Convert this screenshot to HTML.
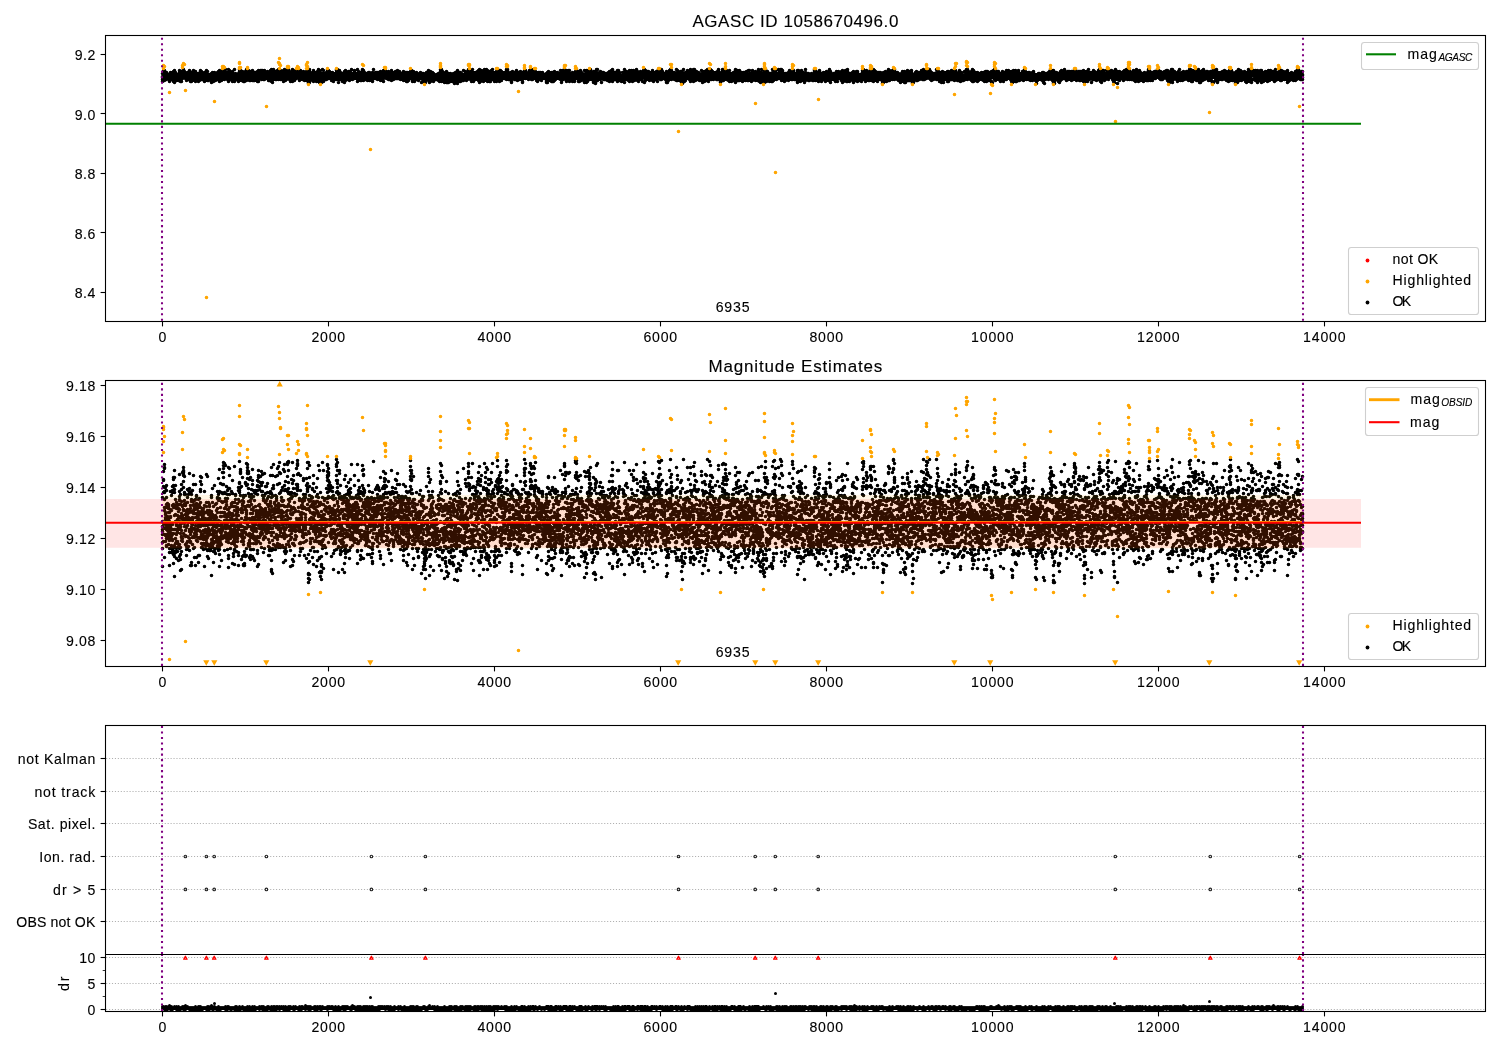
<!DOCTYPE html><html><head><meta charset="utf-8"><style>html,body{margin:0;padding:0;background:#fff;}svg{display:block;will-change:transform}text{font-family:"Liberation Sans",sans-serif;fill:#000;stroke:#000;stroke-width:.12px}</style></head><body><svg width="1500" height="1050" viewBox="0 0 1500 1050"><rect width="1500" height="1050" fill="#fff"/><defs><clipPath id="c1"><rect x="105.5" y="35.5" width="1380.0" height="286.0"/></clipPath><clipPath id="c2"><rect x="105.5" y="380.5" width="1380.0" height="286.0"/></clipPath><clipPath id="c4"><rect x="105.5" y="954.5" width="1380.0" height="57.0"/></clipPath></defs><text x="795.4" y="27.2" font-size="17.0" text-anchor="middle" textLength="205.95" lengthAdjust="spacing" >AGASC ID 1058670496.0</text><g clip-path="url(#c1)"><path transform="scale(.1)" fill="none" stroke="#000" stroke-width="36" stroke-linecap="round"  d="M1625 775h0m0-40h0m0 30h0m0 30h0m0-20h0m0 40h0m10-30h0m0-70h0m0 50h0m0-40h0m0-20h0m0 20h0m10 0h0m0 0h0m0-20h0m0 40h0m0 60h0m0-30h0m0-40h0m10 10h0m0 20h0m0-10h0m0 30h0m0-60h0m0 50h0m10-10h0m0-20h0m0 50h0m0-30h0m0 10h0m0-50h0m0 10h0m0 60h0m10-10h0m0-20h0m0-20h0m0 10h0m0 30h0m0-10h0m10-10h0m0-20h0m0 10h0m0 30h0m0 0h0m0-10h0m0-30h0m10 30h0m0-20h0m0 10h0m0 50h0m0-20h0m0-30h0m0 20h0m10-10h0m0-50h0m0 20h0m0 10h0m0 20h0m0-20h0m0 20h0m10-40h0m0 10h0m0 30h0m0 20h0m0-10h0m0-20h0m0 30h0m10 0h0m0-30h0m0 20h0m0-10h0m0-50h0m0 50h0m0 20h0m10-50h0m0-30h0m0 30h0m0 70h0m0-40h0m0 20h0m0 10h0m0-60h0m0-20h0m0-10h0m10 60h0m0 50h0m0-20h0m0-100h0m0 20h0m0 80h0m0-10h0m0-70h0m0 20h0m0 50h0m0-40h0m10 20h0m0 20h0m0-50h0m0 40h0m0-40h0m0-20h0m0 40h0m0 20h0m10 20h0m0-60h0m0 50h0m0-10h0m0-10h0m0-10h0m0-20h0m10 30h0m0 10h0m0-30h0m0-10h0m0 30h0m0 20h0m0-30h0m0 30h0m0-10h0m10-20h0m0-20h0m0 30h0m0-30h0m0 40h0m0-20h0m0 40h0m10-60h0m0 50h0m0-30h0m0-30h0m0 50h0m0-80h0m0 20h0m0 20h0m10 60h0m0-30h0m0-10h0m0-30h0m0 60h0m0 20h0m0-10h0m0-60h0m0 10h0m0 10h0m10 10h0m0-10h0m0-30h0m0-20h0m0 80h0m0-40h0m0 60h0m0-30h0m0-60h0m0 60h0m10-40h0m0 10h0m0-10h0m0 40h0m0-30h0m10-50h0m0 20h0m0 50h0m0-30h0m0-40h0m0-10h0m10 20h0m0 50h0m0-30h0m0 10h0m0 30h0m0-10h0m0-40h0m0 20h0m10 40h0m0-30h0m0 20h0m0-40h0m0 30h0m0-20h0m0 40h0m10-30h0m0 40h0m0 10h0m0-50h0m0 10h0m10-20h0m0 40h0m0-50h0m0-10h0m0 70h0m0-40h0m0 30h0m10-40h0m0 50h0m0-40h0m0 0h0m0 30h0m0-30h0m10-30h0m0 50h0m0-20h0m0 40h0m0-20h0m0-50h0m0 60h0m0-80h0m0 50h0m10 10h0m0 10h0m0 10h0m0 30h0m0-40h0m0-20h0m0-10h0m0 40h0m0-10h0m10 40h0m0-40h0m0-10h0m0-30h0m0 80h0m0-50h0m0-40h0m0 30h0m10 10h0m0 20h0m0-30h0m0-30h0m0 30h0m0 30h0m0-20h0m10-30h0m0 60h0m0-40h0m0-10h0m0 30h0m0-60h0m0 60h0m0-70h0m0 50h0m10-20h0m0 60h0m0-20h0m0-30h0m0 40h0m0 20h0m0-50h0m10 0h0m0-20h0m0 40h0m0 0h0m0-40h0m0 30h0m0-50h0m0 100h0m10-80h0m0 30h0m0 10h0m0-40h0m0 70h0m0-60h0m0 30h0m0 10h0m0-30h0m10 30h0m0-30h0m0 20h0m0-20h0m0 30h0m10-50h0m0 20h0m0 20h0m0 40h0m0-60h0m0 50h0m0-30h0m0-10h0m10-10h0m0-10h0m0 60h0m0-40h0m0 10h0m0 10h0m0-50h0m0 10h0m10 40h0m0-10h0m0-10h0m0-10h0m0-50h0m0 40h0m0-30h0m0 50h0m0-40h0m10 30h0m0 40h0m0-20h0m0 10h0m0-20h0m0 0h0m0 20h0m0-70h0m0 0h0m10 50h0m0 30h0m0-30h0m0-20h0m0 10h0m10 10h0m0 20h0m0-30h0m0 40h0m0-20h0m0-30h0m0 20h0m10 50h0m0-30h0m0-20h0m0-20h0m0 20h0m0-40h0m10 50h0m0 10h0m0 10h0m0-40h0m0 40h0m0-30h0m0 20h0m10 0h0m0-30h0m0-50h0m0 60h0m0 20h0m0-10h0m0-30h0m0 0h0m10 20h0m0 10h0m0 20h0m0-80h0m0 60h0m0-20h0m0 50h0m10-20h0m0-30h0m0 20h0m0 30h0m0-50h0m0-10h0m0 30h0m10-20h0m0 10h0m0-20h0m0 10h0m0 40h0m0-20h0m10-20h0m0 40h0m0-30h0m0 10h0m0 20h0m0-40h0m0 20h0m10-20h0m0 30h0m0-50h0m0 90h0m0-70h0m0 30h0m0-50h0m0 20h0m10 40h0m0-40h0m0-30h0m0 50h0m0-30h0m0 50h0m0-30h0m10 50h0m0-50h0m0 10h0m0 20h0m0-30h0m0-20h0m10-20h0m0 30h0m0 30h0m0 10h0m0-10h0m0-20h0m10-20h0m0 40h0m0-30h0m0 20h0m0-10h0m0 40h0m0-20h0m10-20h0m0 20h0m0-10h0m0 0h0m0-30h0m0 0h0m0 30h0m10-40h0m0 50h0m0 10h0m0-30h0m0-40h0m0 30h0m0 30h0m0-50h0m10 60h0m0-30h0m0-50h0m0 80h0m0-20h0m0-50h0m0 60h0m0-50h0m0 30h0m10-40h0m0 70h0m0-20h0m0 10h0m0 30h0m0-40h0m0-40h0m0-30h0m10 80h0m0 0h0m0-10h0m0-30h0m0 10h0m0 0h0m0 10h0m0-50h0m0 70h0m0-20h0m10 10h0m0 10h0m0-10h0m0 0h0m0 30h0m0-70h0m0 20h0m0-30h0m0 50h0m10-10h0m0-50h0m0 60h0m0 10h0m0-30h0m0-50h0m0 40h0m0-10h0m10-30h0m0 30h0m0-20h0m0 0h0m0-10h0m0-10h0m10 30h0m0 10h0m0-40h0m0 60h0m0 20h0m0-30h0m0 50h0m0-40h0m0 30h0m10-20h0m0 10h0m0-50h0m0-30h0m0 40h0m0 30h0m0 0h0m0-30h0m10 30h0m0-20h0m0 20h0m0 20h0m0-60h0m0 10h0m0 20h0m0 20h0m10-50h0m0 30h0m0-20h0m0 40h0m0-40h0m0 60h0m0-50h0m10 20h0m0-10h0m0 30h0m0 20h0m0-80h0m0 80h0m0-30h0m0 40h0m0-120h0m0 50h0m10-10h0m0 40h0m0-70h0m0 70h0m0-50h0m0 20h0m0 20h0m0-60h0m10 60h0m0 20h0m0-30h0m0 10h0m0 10h0m0 20h0m10-30h0m0-40h0m0 20h0m0 30h0m0-20h0m0 30h0m0-30h0m10-30h0m0 50h0m0-20h0m0 60h0m0-30h0m0-40h0m0-30h0m0 40h0m10 30h0m0-20h0m0 10h0m0-30h0m0 20h0m0 10h0m0 30h0m10-60h0m0-50h0m0 90h0m0-10h0m0-30h0m0 70h0m0-30h0m10-10h0m0-10h0m0-30h0m0 60h0m0-60h0m0 40h0m0-40h0m0 30h0m10 30h0m0-20h0m0 20h0m0-50h0m0 20h0m0 10h0m10-20h0m0 10h0m0 20h0m0-40h0m0 20h0m0 20h0m0-40h0m10 30h0m0 0h0m0-40h0m0 70h0m0-50h0m0 10h0m0 50h0m0-40h0m0 20h0m0 20h0m10-100h0m0 10h0m0 10h0m0-10h0m0-30h0m10 30h0m0-20h0m0 30h0m0-30h0m0 70h0m0-10h0m0-20h0m10 10h0m0 20h0m0-20h0m0 50h0m0-20h0m0-40h0m0-20h0m10 50h0m0-20h0m0-20h0m0-20h0m0 50h0m0 10h0m0 30h0m0-20h0m10-50h0m0 10h0m0 30h0m0 30h0m0-20h0m0 30h0m0-80h0m0 50h0m0-50h0m10 80h0m0-70h0m0 20h0m0 30h0m0-50h0m0 70h0m0-30h0m10-10h0m0-40h0m0 20h0m0-40h0m0 90h0m0-40h0m10 10h0m0-30h0m0 30h0m0 20h0m0-40h0m0-10h0m0-50h0m0 60h0m0-30h0m0 80h0m10-100h0m0 60h0m0-60h0m0 10h0m0 30h0m10 50h0m0-10h0m0-20h0m0-60h0m0 40h0m0-20h0m0 50h0m0-50h0m10 20h0m0 10h0m0 20h0m0-40h0m0-20h0m0 60h0m0 30h0m0-20h0m10-30h0m0 30h0m0-20h0m0 40h0m0-70h0m0 30h0m0 20h0m0 20h0m0-10h0m0-80h0m10 60h0m0-50h0m0 70h0m0-50h0m0-10h0m0 40h0m0 10h0m0-40h0m10 10h0m0-40h0m0 50h0m0 20h0m0-10h0m0-70h0m0 50h0m0 50h0m0-90h0m10 10h0m0 20h0m0 40h0m0-10h0m0 10h0m0-40h0m0 60h0m0-20h0m10-50h0m0 70h0m0-50h0m0-30h0m0 60h0m0-20h0m0 0h0m10-20h0m0 40h0m0-20h0m0-30h0m0-10h0m0 60h0m10-30h0m0 20h0m0 10h0m0-10h0m0-20h0m0 30h0m10-60h0m0-10h0m0 40h0m0-10h0m0 40h0m0 10h0m0 20h0m0-90h0m0 10h0m0 60h0m10-30h0m0-60h0m0 50h0m0 10h0m0-60h0m0 80h0m0-70h0m0 30h0m0 70h0m10-70h0m0-20h0m0 60h0m0-20h0m0-20h0m0-20h0m0 40h0m10 20h0m0-40h0m0 20h0m0-60h0m0 70h0m0-20h0m0 0h0m0 10h0m0-50h0m10 80h0m0-70h0m0 50h0m0 0h0m0-50h0m0-20h0m0 40h0m0 30h0m0-10h0m10-30h0m0 20h0m0-40h0m0 50h0m0-10h0m0-50h0m10 80h0m0-10h0m0-40h0m0 10h0m0 30h0m0 20h0m0-40h0m0-20h0m10 50h0m0-20h0m0-10h0m0 40h0m0-20h0m0-70h0m0 30h0m0 30h0m10-40h0m0 0h0m0 40h0m0-20h0m0 40h0m0-20h0m10-10h0m0-30h0m0 50h0m0 0h0m0-20h0m0-20h0m0 40h0m10 0h0m0-20h0m0 10h0m0-30h0m0 40h0m0-60h0m0 10h0m10 40h0m0-10h0m0-20h0m0 60h0m0-50h0m0 60h0m0-40h0m0 20h0m10-40h0m0 40h0m0-20h0m0 40h0m0-40h0m0 30h0m0-50h0m0 30h0m10-30h0m0-20h0m0 40h0m0-10h0m0-30h0m0-20h0m10 50h0m0-10h0m0 30h0m0-40h0m0-40h0m0 100h0m0-60h0m0 80h0m0-40h0m10 50h0m0-30h0m0-60h0m0 40h0m0 10h0m0-80h0m0 40h0m0-20h0m0 40h0m10 30h0m0-10h0m0-20h0m0-70h0m0 60h0m0-30h0m10 60h0m0-40h0m0 20h0m0-20h0m0 20h0m0 20h0m0-30h0m10-20h0m0 60h0m0-80h0m0 50h0m0 20h0m0 10h0m0-50h0m0 0h0m0 20h0m10-20h0m0 20h0m0 30h0m0-60h0m0 40h0m0-40h0m0 20h0m0 40h0m10-30h0m0 20h0m0-80h0m0 60h0m0-20h0m0-30h0m0 40h0m0 10h0m10 30h0m0-40h0m0 30h0m0-30h0m0 20h0m0-30h0m0-50h0m10 40h0m0 10h0m0-40h0m0 60h0m0-50h0m0-20h0m0 90h0m10-60h0m0 50h0m0-10h0m0-60h0m0 70h0m0 20h0m0-40h0m10 0h0m0-20h0m0 50h0m0-30h0m0-30h0m0 30h0m0 10h0m10-40h0m0 10h0m0 50h0m0-20h0m0-10h0m0 10h0m0 30h0m10-20h0m0-10h0m0-10h0m0 40h0m0-30h0m0-60h0m0 30h0m0 20h0m0 60h0m10-70h0m0 50h0m0-100h0m0 70h0m0-60h0m0 20h0m0 70h0m0-10h0m10-30h0m0 40h0m0-20h0m0-30h0m0 50h0m0-70h0m0-10h0m0 90h0m0-60h0m10 30h0m0 20h0m0-30h0m0-10h0m0 30h0m0-10h0m10-10h0m0-20h0m0-50h0m0 50h0m0-20h0m0-20h0m0 50h0m0 10h0m10-50h0m0 10h0m0-30h0m0 10h0m0 20h0m0 60h0m10-50h0m0 20h0m0-30h0m0 70h0m0-30h0m0-20h0m0 30h0m10-10h0m0-20h0m0-10h0m0 80h0m0-50h0m0-20h0m0 40h0m0-50h0m0 60h0m10-50h0m0 40h0m0-60h0m0 50h0m0-40h0m0 20h0m0-40h0m0 60h0m10-10h0m0 50h0m0-60h0m0-40h0m0 20h0m0 10h0m0 60h0m0-20h0m0-90h0m10 70h0m0 40h0m0-20h0m0-30h0m0-30h0m0 60h0m0-40h0m0 30h0m0-70h0m10 100h0m0-40h0m0 30h0m0-60h0m0 30h0m0-20h0m0-10h0m10 40h0m0-30h0m0 30h0m0-40h0m0 50h0m0-30h0m0 10h0m10-50h0m0 70h0m0-30h0m0 20h0m0-10h0m0-30h0m0-30h0m0 20h0m0 40h0m10-70h0m0 30h0m0-20h0m0 20h0m0 0h0m0-30h0m10 50h0m0 10h0m0 10h0m0-60h0m10 70h0m0-10h0m0 20h0m0-50h0m0 30h0m0 40h0m0-30h0m0-40h0m10 20h0m0 10h0m0-40h0m0 70h0m0-60h0m0 40h0m0 10h0m0-80h0m10 70h0m0-40h0m0 20h0m0 20h0m0-30h0m10 20h0m0 10h0m0-30h0m0-10h0m0 60h0m0-50h0m0 30h0m10-60h0m0 30h0m0-10h0m0 50h0m0-20h0m0-50h0m10 60h0m0-40h0m0 30h0m0-30h0m0 70h0m0-70h0m0 40h0m0-40h0m0 10h0m10 20h0m0-30h0m0 40h0m0-20h0m0 30h0m0-40h0m0-10h0m10 30h0m0 20h0m0-40h0m0 30h0m0-50h0m0 80h0m0-90h0m10 10h0m0-10h0m0-10h0m0 20h0m10 20h0m0 70h0m0-80h0m0 70h0m0-30h0m0 60h0m0-10h0m10-80h0m0-50h0m0 110h0m0-80h0m0-10h0m0 110h0m0-50h0m0-40h0m0 0h0m10 20h0m0 20h0m0 0h0m0 20h0m0-40h0m0 30h0m0 0h0m10-40h0m0 20h0m0 0h0m0-30h0m0 30h0m0-20h0m0 20h0m10-20h0m0 50h0m0-70h0m0 40h0m0 40h0m0-20h0m0-50h0m0 20h0m10 40h0m0-60h0m0-30h0m0 50h0m0 10h0m0-50h0m0 100h0m10-40h0m0-40h0m0 20h0m0 30h0m0-40h0m0 20h0m0-10h0m0-30h0m0 70h0m10-40h0m0 20h0m0-30h0m0 20h0m0 20h0m0-10h0m0 0h0m10-30h0m0-20h0m0 20h0m0 30h0m0-40h0m0 50h0m0 30h0m10-30h0m0 20h0m0-90h0m0 50h0m0-20h0m0-10h0m0 20h0m0 40h0m10-60h0m0 20h0m0 10h0m0 20h0m0-30h0m0 20h0m0-80h0m10 10h0m0 60h0m0 40h0m0-30h0m0 10h0m0-40h0m0 80h0m0-20h0m0-60h0m10 20h0m0 10h0m0-50h0m0 100h0m0-50h0m0-30h0m0 20h0m0 20h0m0 40h0m0-70h0m10 70h0m0-70h0m0 70h0m0-20h0m0 10h0m0-60h0m0 10h0m10 20h0m0-20h0m0 30h0m0-50h0m0 50h0m0-60h0m0-40h0m0 80h0m10-70h0m0 70h0m0-10h0m0-20h0m0 10h0m0 60h0m0-30h0m10-40h0m0 30h0m0-10h0m0 30h0m0-40h0m0-20h0m0 40h0m0 0h0m10-10h0m0-20h0m0 30h0m0-10h0m0 30h0m0-50h0m10-20h0m0 30h0m0-10h0m0 30h0m0-20h0m0 40h0m0-60h0m0 30h0m10-20h0m0-50h0m0 20h0m0 30h0m0-10h0m0-40h0m0 20h0m10 20h0m0-30h0m0 20h0m0 0h0m0-20h0m0 10h0m0 70h0m10-20h0m0-20h0m0 20h0m0-50h0m0 10h0m0 30h0m0-20h0m0 40h0m0-30h0m10 10h0m0 30h0m0-60h0m0 40h0m0-40h0m0 20h0m0 30h0m10-10h0m0 10h0m0-30h0m0 60h0m0-50h0m0 30h0m10-10h0m0-50h0m0 10h0m0 10h0m0 20h0m0-40h0m0 20h0m10-10h0m0 50h0m0 10h0m0-40h0m0 60h0m0-60h0m0 30h0m0-40h0m10 30h0m0 10h0m0-30h0m0-10h0m0 50h0m0-30h0m10-30h0m0 40h0m0-20h0m0 20h0m0 10h0m0-30h0m10 30h0m0-30h0m0-50h0m0 90h0m0-30h0m0-70h0m0 30h0m10 0h0m0-20h0m0-10h0m0 20h0m0 10h0m0 10h0m0 10h0m0 30h0m0 0h0m10-20h0m0 40h0m0-60h0m0 30h0m0 60h0m0-70h0m0 20h0m10 10h0m0-80h0m0 30h0m0 20h0m0-50h0m0 50h0m0 20h0m0-40h0m0-10h0m10 40h0m0 10h0m0 20h0m0-70h0m0 40h0m0-10h0m0 30h0m0 10h0m10 0h0m0 0h0m0-30h0m0 10h0m0-40h0m0 0h0m0 30h0m0-20h0m10 30h0m0 0h0m0-20h0m0-20h0m0 50h0m0 30h0m0-50h0m10 10h0m0-30h0m0-10h0m0 60h0m0-20h0m0-20h0m0 0h0m0 40h0m10-60h0m0 50h0m0 30h0m0-100h0m0 20h0m0 20h0m0-20h0m0 90h0m0-30h0m10-50h0m0 20h0m0-20h0m0 50h0m0 10h0m0-100h0m0 70h0m0-40h0m0 70h0m0-40h0m10 10h0m0-40h0m0 10h0m0 20h0m0 10h0m0 10h0m0 10h0m0-70h0m0 20h0m10 50h0m0-30h0m0-30h0m0 50h0m0-30h0m0 20h0m0-10h0m10 30h0m0-40h0m0-40h0m0 20h0m0 40h0m0-50h0m0 30h0m0-10h0m10 20h0m0-40h0m0 70h0m0-20h0m0 30h0m0-60h0m0 30h0m0-10h0m10-20h0m0-20h0m0 30h0m0 40h0m0-10h0m0-50h0m0 20h0m0-40h0m0 70h0m10-90h0m0 50h0m0 40h0m0-30h0m0 20h0m0-20h0m0 10h0m10-30h0m0 40h0m0-20h0m0-10h0m0 30h0m0 20h0m0-30h0m0-20h0m10 20h0m0-20h0m0 30h0m0-40h0m0 30h0m0 20h0m0-40h0m10 40h0m0 0h0m0-30h0m0 10h0m0-60h0m0 20h0m0 50h0m10 0h0m0-40h0m0 10h0m0 10h0m0 20h0m0-40h0m10 20h0m0 30h0m0-50h0m0 20h0m0-10h0m0 30h0m0-10h0m10-10h0m0-60h0m0 80h0m0-40h0m0 80h0m0-20h0m0-50h0m0 10h0m10 30h0m0-10h0m0-60h0m0 70h0m0-50h0m0 30h0m0-20h0m0 40h0m10-60h0m0 10h0m0 30h0m0 10h0m0-30h0m0 10h0m0 0h0m10 20h0m0-10h0m0 10h0m0-50h0m0 10h0m0 50h0m0 20h0m10-10h0m0-70h0m0 80h0m0-40h0m0-30h0m0 50h0m0-40h0m10 20h0m0-60h0m0 40h0m0-20h0m0 60h0m0-90h0m0 70h0m0-40h0m10-20h0m0 40h0m0-40h0m0 30h0m0-30h0m0 100h0m0-60h0m0-20h0m0 50h0m10-30h0m0 20h0m0-40h0m0 60h0m0-30h0m0-10h0m10 30h0m0-20h0m0 0h0m0-20h0m0 50h0m0 10h0m10-30h0m0-20h0m0 30h0m0-10h0m0-20h0m0 40h0m0-50h0m10 30h0m0 10h0m0-40h0m0 40h0m0-20h0m0-10h0m0 40h0m0 20h0m10-40h0m0 30h0m0-50h0m0 0h0m0 40h0m0-10h0m0-10h0m0-20h0m0-20h0m10 80h0m0-20h0m0-20h0m0-40h0m0 50h0m0-40h0m0 10h0m0 20h0m10-10h0m0-10h0m0 50h0m0-50h0m0 20h0m0-20h0m10 30h0m0-20h0m0-20h0m0 30h0m0-10h0m0-20h0m10 60h0m0-70h0m0 90h0m0-10h0m0-20h0m0-30h0m0 50h0m0-40h0m0 30h0m10-50h0m0 40h0m0-20h0m0-70h0m0 50h0m0 30h0m0-20h0m10-20h0m0 40h0m0-10h0m0-10h0m0-20h0m0 30h0m10-20h0m0 20h0m0-40h0m0 40h0m0-20h0m0 40h0m0-20h0m0-30h0m10 10h0m0 40h0m0-30h0m0 10h0m0 10h0m0-50h0m0 60h0m0-30h0m10-30h0m0 60h0m0-20h0m0-30h0m0 0h0m0 60h0m0-40h0m10 20h0m0-40h0m0 30h0m0-40h0m0 20h0m0-20h0m0 20h0m0-20h0m10 40h0m0-40h0m0 60h0m0-50h0m0 40h0m0-30h0m0 50h0m0-20h0m0-30h0m10 60h0m0-90h0m0 20h0m0 30h0m0 40h0m0-40h0m0-20h0m0 30h0m0 30h0m10-70h0m0 10h0m0 40h0m0-30h0m0 20h0m0-10h0m0-30h0m10 40h0m0-10h0m0-10h0m0 30h0m0-10h0m0-10h0m0-20h0m0-20h0m10 30h0m0-20h0m0-30h0m0 80h0m0-30h0m0-20h0m0-10h0m0 50h0m0 40h0m10-40h0m0-20h0m0-10h0m0-20h0m0 0h0m10 0h0m0-20h0m0 10h0m0 10h0m0 20h0m10-20h0m0 10h0m0 40h0m0 10h0m0-60h0m0 40h0m0-20h0m0 10h0m10 10h0m0 20h0m0-10h0m0-30h0m0-10h0m0 40h0m0-10h0m10 30h0m0-70h0m0-10h0m0 60h0m0-20h0m0-10h0m10 10h0m0 40h0m0-20h0m0-50h0m0 20h0m0 20h0m0-20h0m0 40h0m10-30h0m0-10h0m0-20h0m0 30h0m0 40h0m0-10h0m10-30h0m0 30h0m0-40h0m0 20h0m0 40h0m0-100h0m0 70h0m0-20h0m10 10h0m0-40h0m0 0h0m0 40h0m0-20h0m0 20h0m0-40h0m10 70h0m0-10h0m0-40h0m0 20h0m0-30h0m0 50h0m0-20h0m0 20h0m10-40h0m0 30h0m0-50h0m0 10h0m0 20h0m0 10h0m0-10h0m0-10h0m10 30h0m0-60h0m0 30h0m0 40h0m0-20h0m0-40h0m0 30h0m10-30h0m0 60h0m0-40h0m0 20h0m0-10h0m0 0h0m0-40h0m0 50h0m0 20h0m10-70h0m0 50h0m0 10h0m0 10h0m0-50h0m0-30h0m0 70h0m0-20h0m10-10h0m0 40h0m0-50h0m0 40h0m0-10h0m0 20h0m0-30h0m0-20h0m10 20h0m0 10h0m0-50h0m0 70h0m0-50h0m0 30h0m10 20h0m0-50h0m0 30h0m0-30h0m0 10h0m0 50h0m0-40h0m10 30h0m0-10h0m0-10h0m0 20h0m0-40h0m0-10h0m0 30h0m10 30h0m0-20h0m0-40h0m0 20h0m0 10h0m10 10h0m0-60h0m0 80h0m0 10h0m0-30h0m0-20h0m0-10h0m0-10h0m0 70h0m0-20h0m0-10h0m10-40h0m0 10h0m0 30h0m0 10h0m0-40h0m0 10h0m0 40h0m10-30h0m0-10h0m0-10h0m0-20h0m0 60h0m0-20h0m0-20h0m10 20h0m0 0h0m0 10h0m0-30h0m0 40h0m0 30h0m0-90h0m10 70h0m0-50h0m0-20h0m0 30h0m0 30h0m0-20h0m0-20h0m0-10h0m0 80h0m10-30h0m0-50h0m0 70h0m0-50h0m0-10h0m0 40h0m0-10h0m10-10h0m0-30h0m0 50h0m0-30h0m0-30h0m0 50h0m0-40h0m10 30h0m0-20h0m0 40h0m0-60h0m0-10h0m10 0h0m0-10h0m0 20h0m0 30h0m0-30h0m0 40h0m0-10h0m10 30h0m0 10h0m0-70h0m0 30h0m0 60h0m0-70h0m0 40h0m0-20h0m0-30h0m10 40h0m0-10h0m0 40h0m0-60h0m0 30h0m0-60h0m0 40h0m10-20h0m0 50h0m0 30h0m0-70h0m0 40h0m0-20h0m0 20h0m0 0h0m0-40h0m10 30h0m0-30h0m0 10h0m0 30h0m0-10h0m10 0h0m0-20h0m0-10h0m0 30h0m0 20h0m0-20h0m0-50h0m10 50h0m0-20h0m0-10h0m0 30h0m0-10h0m0 30h0m10-20h0m0 0h0m0 30h0m0-50h0m0 40h0m0-30h0m0 40h0m0-20h0m10-10h0m0-20h0m0 10h0m0 10h0m0-20h0m0-20h0m0 0h0m10 30h0m0 20h0m0-60h0m0 10h0m0 40h0m0 10h0m0-10h0m10-40h0m0 20h0m0-10h0m0 40h0m0 40h0m0-50h0m0-40h0m0 50h0m10-30h0m0 40h0m0-60h0m0 50h0m0-50h0m0 30h0m0 20h0m0-50h0m10 30h0m0-20h0m0 70h0m0 0h0m0-40h0m0 20h0m0-40h0m0 20h0m0-40h0m10 60h0m0-40h0m0-10h0m0 70h0m0-20h0m0 20h0m10-10h0m0-20h0m0-20h0m0 40h0m0 20h0m0-10h0m0-50h0m0 30h0m10-30h0m0-20h0m0 30h0m0 0h0m0-50h0m0 80h0m0-10h0m10-30h0m0 10h0m0-10h0m0-10h0m0 20h0m10-10h0m0 10h0m0 20h0m0-90h0m0 30h0m0 20h0m0-50h0m0 20h0m0 60h0m10-10h0m0-60h0m0 40h0m0-20h0m0 70h0m0-20h0m0 40h0m0-30h0m10-30h0m0-20h0m0 60h0m0-30h0m0-20h0m0-40h0m0 60h0m0-10h0m0-50h0m0 100h0m10-50h0m0-20h0m0 20h0m0-20h0m0 30h0m0 20h0m10-70h0m0 10h0m0 20h0m0 30h0m0-40h0m0 10h0m0 10h0m0 20h0m10-10h0m0 40h0m0-50h0m0-30h0m0 20h0m0 30h0m0-20h0m0 10h0m10-10h0m0 20h0m0-30h0m0 30h0m10-10h0m0-20h0m0 10h0m0 30h0m0-20h0m0 0h0m0-20h0m10 40h0m0-20h0m0-30h0m0 40h0m0-10h0m0-30h0m0 30h0m10-10h0m0 20h0m0-40h0m0 40h0m0-10h0m0 0h0m10 30h0m0-70h0m0 40h0m0 20h0m0-40h0m0-10h0m0-10h0m10 60h0m0-10h0m0-10h0m0-10h0m0-30h0m0 10h0m0 50h0m0 20h0m0-70h0m0 40h0m10-20h0m0 30h0m0-50h0m0-20h0m0-30h0m0 20h0m10 30h0m0-10h0m0-40h0m0 120h0m0-90h0m0 50h0m0-70h0m0 80h0m10-70h0m0 90h0m0-30h0m0-20h0m0 50h0m0-60h0m0 40h0m0-20h0m10 30h0m0-20h0m0-40h0m0 50h0m0-40h0m0 10h0m0-10h0m10 30h0m0 20h0m0-40h0m0 0h0m0 70h0m0-40h0m0-20h0m0 30h0m10-10h0m0-60h0m0 20h0m0 70h0m0-70h0m0 40h0m0 10h0m0 10h0m0-20h0m0 20h0m10-50h0m0 10h0m0-50h0m0 60h0m0 40h0m0 10h0m0-80h0m0 30h0m0-30h0m0 50h0m10-50h0m0 30h0m0-10h0m0-20h0m0 20h0m0 60h0m0-60h0m10 10h0m0 10h0m0 10h0m0 30h0m0-60h0m0-30h0m0 50h0m10 10h0m0-50h0m0 20h0m0 30h0m0 20h0m0-70h0m0 60h0m0-40h0m0 10h0m10 20h0m0-60h0m0 50h0m0-20h0m0 10h0m0 40h0m0-60h0m10 20h0m0 20h0m0 10h0m0-40h0m0-20h0m0 0h0m0 30h0m10 20h0m0 10h0m0-40h0m0-20h0m0 40h0m0-20h0m0 50h0m10-20h0m0-40h0m0-10h0m0-10h0m0 50h0m0 30h0m0-60h0m0-20h0m10 30h0m0 20h0m0 20h0m0 30h0m0-60h0m0-30h0m0 40h0m0-50h0m0 40h0m10 10h0m0-60h0m0 40h0m0 30h0m0-30h0m10 60h0m0-70h0m0 40h0m0-40h0m0 20h0m0-40h0m0 80h0m0-20h0m10-10h0m0-60h0m0 30h0m0 40h0m0-80h0m0-10h0m0 130h0m0-90h0m0 20h0m10 20h0m0-10h0m0-20h0m0 60h0m0-70h0m0 70h0m0-70h0m0 30h0m0-50h0m10 70h0m0-60h0m0 10h0m0 40h0m0-20h0m0-40h0m0 60h0m0-50h0m0 40h0m10 40h0m0-20h0m0-30h0m0-20h0m0 70h0m0-60h0m0 20h0m0-30h0m0-20h0m10 20h0m0 10h0m0 30h0m0-30h0m0 10h0m0-30h0m10 60h0m0-10h0m0-30h0m0 30h0m0-20h0m0 40h0m0-60h0m0 20h0m10 20h0m0-40h0m0 10h0m0 50h0m0-20h0m0-20h0m0-60h0m10 50h0m0 40h0m0-30h0m0 20h0m0 10h0m0-30h0m0 20h0m10-70h0m0 30h0m0 50h0m0-40h0m0 30h0m0-70h0m0 60h0m0-10h0m0-30h0m10 40h0m0 30h0m0-80h0m0 40h0m0-10h0m0 0h0m0 40h0m10-20h0m0 10h0m0-20h0m0 30h0m0-50h0m0 50h0m0-40h0m10 10h0m0-70h0m0 20h0m0 70h0m0-40h0m0-50h0m0 10h0m0 10h0m10 20h0m0-20h0m0 10h0m0 20h0m0-20h0m0 60h0m10-40h0m0 30h0m0 10h0m0-30h0m0-20h0m0 60h0m10-30h0m0-20h0m0 10h0m0 30h0m0-30h0m0 40h0m0 20h0m0-100h0m0 60h0m10-40h0m0 60h0m0-30h0m0-40h0m0 50h0m0 10h0m0-40h0m0-50h0m10 80h0m0 40h0m0-70h0m0 50h0m0-70h0m0 10h0m0 40h0m0 30h0m10-10h0m0-10h0m0-50h0m0 30h0m0-10h0m0-20h0m0 40h0m10-30h0m0-20h0m0 70h0m0-70h0m0 70h0m0-60h0m0 20h0m0 20h0m0-30h0m0 0h0m10 30h0m0-30h0m0 20h0m0 0h0m0-30h0m0 20h0m10-30h0m0 30h0m0 20h0m0-60h0m0 20h0m0 20h0m0 30h0m0-70h0m10-10h0m0 60h0m0-30h0m0 50h0m0-70h0m0 20h0m0 20h0m0 50h0m10-60h0m0-30h0m0 30h0m0 30h0m0 50h0m0-130h0m0 110h0m0-70h0m0 40h0m10 10h0m0-70h0m0 80h0m0-10h0m0 30h0m0-90h0m0 30h0m0-20h0m10 70h0m0-100h0m0 30h0m0 70h0m0-20h0m0-10h0m0-10h0m0-10h0m0-10h0m10 30h0m0-40h0m0 40h0m0-10h0m0-20h0m10-20h0m0 50h0m0 20h0m0 0h0m0-30h0m0-40h0m0 20h0m0 70h0m0-20h0m0-50h0m10 50h0m0-60h0m0 40h0m0-80h0m0 40h0m0 30h0m0-20h0m0 50h0m10-10h0m0-40h0m0 20h0m0-50h0m0 60h0m0-60h0m0 20h0m0-30h0m0 40h0m10 60h0m0-110h0m0 70h0m0 30h0m0-10h0m0-60h0m0 30h0m0 20h0m0 10h0m0 20h0m10-80h0m0 10h0m0 80h0m0-40h0m0 10h0m0-40h0m0 20h0m0-30h0m0 50h0m0-80h0m0 30h0m10 60h0m0-80h0m0 90h0m0-80h0m0 80h0m0-40h0m0-20h0m10 60h0m0-20h0m0-20h0m0-30h0m0 80h0m0-100h0m0 50h0m0 20h0m10-10h0m0-40h0m0-20h0m0 30h0m0 40h0m0-30h0m0 30h0m0 30h0m10-100h0m0 40h0m0 20h0m0-40h0m0 60h0m0-50h0m0-40h0m0 70h0m0-30h0m10 40h0m0-40h0m0-50h0m0 90h0m0-60h0m0 30h0m0 10h0m0 10h0m10 10h0m0-60h0m0 40h0m0 20h0m0-40h0m0 20h0m0-40h0m0 50h0m10 20h0m0-40h0m0 30h0m0 30h0m0-40h0m0-30h0m0 20h0m0 40h0m0-70h0m0 80h0m10-90h0m0 50h0m0-30h0m0 50h0m0-20h0m0-50h0m10 30h0m0 40h0m0 20h0m0-40h0m0-30h0m0 20h0m0 0h0m0-50h0m0 90h0m10-110h0m0 30h0m0 30h0m0-40h0m0-20h0m0 30h0m10-10h0m0 10h0m0 20h0m0 30h0m0-60h0m0 30h0m0-20h0m10 70h0m0-40h0m0 60h0m0-40h0m0-30h0m0-40h0m0 70h0m0-60h0m0 30h0m0-10h0m10 50h0m0-20h0m0-40h0m0 60h0m0-70h0m0 30h0m0 20h0m0-60h0m0 30h0m10 60h0m0-20h0m0-50h0m0 30h0m0-10h0m0 40h0m0-70h0m0 20h0m0 70h0m10-20h0m0-40h0m0-20h0m0 50h0m0-40h0m0 50h0m0-30h0m10 20h0m0-40h0m0 10h0m0 10h0m0 20h0m0-40h0m0 30h0m10-10h0m0-30h0m0 10h0m0 30h0m0-20h0m0 40h0m0-20h0m10-40h0m0 20h0m0 40h0m0-20h0m0 10h0m0-20h0m10-10h0m0 50h0m0-50h0m0 50h0m0-100h0m0 30h0m0-10h0m0-20h0m10 10h0m0-10h0m0 30h0m0 10h0m0 20h0m10 20h0m0 20h0m0-30h0m0-10h0m0 20h0m0-40h0m0 50h0m0-40h0m10 30h0m0-30h0m0 50h0m0-20h0m0-40h0m0 30h0m10-40h0m0 40h0m0-20h0m0 50h0m0-10h0m0-30h0m0-20h0m0 40h0m10-10h0m0-20h0m0 70h0m0-40h0m0-50h0m0 10h0m0 90h0m10-40h0m0-20h0m0-40h0m0 50h0m0-10h0m0-20h0m0-30h0m0 20h0m0 10h0m10 30h0m0-20h0m0-20h0m0 30h0m0-40h0m0 60h0m10-60h0m0 10h0m0 40h0m0 20h0m0-60h0m0 50h0m0-30h0m10 10h0m0-20h0m0 20h0m0 30h0m0-60h0m0 40h0m0-10h0m10-30h0m0 20h0m0 40h0m0-90h0m0 20h0m0 20h0m0 20h0m0-40h0m10 40h0m0-20h0m0 10h0m0 20h0m0 20h0m0-40h0m0-30h0m0 80h0m0-30h0m10-40h0m0 60h0m0-40h0m0-30h0m0 20h0m0 30h0m10-30h0m0 20h0m0-30h0m0 20h0m0 20h0m0 20h0m0-10h0m0-30h0m10 10h0m0 20h0m0-50h0m0 30h0m0-30h0m0 50h0m0-10h0m0-10h0m0-50h0m0 40h0m10 0h0m0 20h0m0-10h0m0-30h0m0 0h0m0 20h0m0 40h0m10-10h0m0-20h0m0 60h0m0-80h0m0 20h0m0 50h0m0-90h0m0 20h0m10 30h0m0-50h0m0 20h0m0 20h0m0 20h0m0-30h0m10 10h0m0-20h0m0 30h0m0-70h0m0 0h0m10 10h0m0 20h0m0-10h0m0 60h0m0-20h0m0-60h0m0 20h0m0 0h0m0 20h0m0 40h0m10-10h0m0-20h0m0-20h0m0 0h0m0 20h0m0 20h0m10-30h0m0-10h0m0 40h0m0-20h0m0 20h0m0-30h0m0 40h0m10-30h0m0-30h0m0 40h0m0 30h0m0-10h0m0-50h0m0 20h0m10 0h0m0 10h0m0-60h0m0 80h0m0-50h0m0 20h0m0 10h0m10 10h0m0-30h0m0-10h0m0-10h0m0 40h0m0-70h0m0 20h0m10 10h0m0-30h0m0 30h0m0 50h0m0-50h0m0-20h0m0 80h0m0 10h0m10-30h0m0-10h0m0 30h0m0-10h0m0-30h0m0 10h0m0 40h0m10-50h0m0 30h0m0-10h0m0-20h0m0-20h0m0-20h0m0 60h0m0-70h0m10 40h0m0 40h0m0-50h0m0 10h0m0-30h0m0 70h0m0-30h0m10-10h0m0-10h0m0 50h0m0-60h0m0 30h0m0 40h0m0-20h0m10-40h0m0 30h0m0-20h0m0 30h0m0-10h0m0 50h0m0-70h0m0 60h0m10-20h0m0-20h0m0-10h0m0 40h0m0-40h0m0 30h0m0 30h0m0 10h0m10-30h0m0-10h0m0-50h0m0 20h0m0 10h0m0-30h0m0 40h0m0-30h0m10 10h0m0 30h0m0 20h0m0-30h0m0-10h0m0-30h0m10 60h0m0-40h0m0 10h0m0-30h0m0 40h0m0 20h0m0-30h0m0-30h0m10 20h0m0 60h0m0-40h0m0-10h0m0-10h0m0 0h0m0 10h0m10 20h0m0-30h0m0 40h0m0 0h0m0-50h0m0 40h0m0-50h0m10 30h0m0 20h0m0-30h0m0 10h0m0 20h0m0-10h0m10 0h0m0-20h0m0 30h0m0-20h0m0 30h0m0-40h0m10 20h0m0-20h0m0 40h0m0-10h0m0-20h0m10 20h0m0-40h0m0 90h0m0-50h0m0-20h0m0-20h0m0 0h0m0 80h0m10-50h0m0 20h0m0 40h0m0-100h0m0 30h0m0 20h0m0-40h0m0 60h0m0-30h0m0-20h0m10-30h0m0 40h0m0 50h0m0-10h0m0-30h0m0-50h0m0 70h0m0-60h0m0 50h0m0 30h0m0-60h0m10 20h0m0 20h0m0-60h0m0 50h0m0-50h0m0 60h0m0-10h0m10-20h0m0-20h0m0 60h0m0-20h0m0 30h0m0-20h0m0-30h0m10 10h0m0 30h0m0 20h0m0-40h0m0-30h0m0 70h0m0-90h0m0 50h0m0 20h0m0-10h0m10-30h0m0-30h0m0 60h0m0-50h0m0 80h0m0-40h0m0 30h0m0-80h0m0 30h0m0 30h0m10 30h0m0-90h0m0 70h0m0-50h0m0 20h0m0-10h0m0 30h0m0 10h0m10-40h0m0 10h0m0 30h0m0-70h0m0 50h0m0-20h0m0 50h0m0-90h0m0 70h0m10-20h0m0 20h0m0-50h0m0-10h0m0 70h0m0-20h0m0-50h0m10 30h0m0-20h0m0 40h0m0-10h0m0-30h0m0 50h0m10-30h0m0-30h0m0 50h0m0-40h0m0 30h0m0-10h0m0 0h0m10 30h0m0 0h0m0-10h0m0-30h0m0-10h0m0 30h0m10-30h0m0 30h0m0 20h0m0-10h0m0 0h0m0-20h0m10 40h0m0-30h0m0 0h0m0 20h0m0 10h0m0-20h0m0-70h0m10 90h0m0-60h0m0 10h0m0 30h0m0 10h0m0 40h0m0-20h0m0-70h0m0 30h0m10 20h0m0 10h0m0-90h0m0 20h0m0 50h0m0-40h0m0 60h0m0-10h0m10-40h0m0 30h0m0 20h0m0-10h0m0-20h0m0 10h0m10-40h0m0-20h0m0 50h0m0-50h0m0 50h0m0-70h0m10 50h0m0-40h0m0 0h0m0 20h0m0 10h0m0 30h0m0-20h0m10 50h0m0-30h0m0-60h0m0 50h0m0 30h0m0 30h0m0-20h0m0-40h0m10-20h0m0 10h0m0 20h0m0 20h0m0-40h0m0 50h0m0-20h0m0-10h0m0 40h0m10-40h0m0-30h0m0-10h0m0 80h0m0-20h0m0-80h0m0 40h0m0 0h0m0 20h0m10 30h0m0 10h0m0 10h0m0-70h0m0 20h0m0-60h0m0 50h0m10-10h0m0 30h0m0-40h0m0 70h0m0-20h0m0-30h0m0 10h0m10 0h0m0-20h0m0 40h0m0-50h0m0 10h0m0 30h0m10-10h0m0-20h0m0-20h0m0 20h0m0-10h0m0 40h0m0 40h0m10-30h0m0 20h0m0-60h0m0-10h0m0 50h0m0 10h0m0-30h0m0 20h0m10-30h0m0 40h0m0-30h0m0 50h0m0-60h0m0-20h0m0 50h0m0-50h0m0 20h0m10 10h0m0-50h0m0 10h0m0 50h0m0 0h0m10-70h0m0 20h0m0 10h0m0-20h0m0 30h0m0 20h0m0 20h0m10-30h0m0 20h0m0-40h0m0 30h0m0-30h0m0 10h0m10 50h0m0-30h0m0 10h0m0-60h0m0 60h0m0-30h0m0-10h0m0-20h0m0 100h0m10-40h0m0-20h0m0 60h0m0-80h0m0 50h0m0-20h0m0-10h0m10 30h0m0-30h0m0-30h0m0 20h0m0 10h0m0-50h0m0 70h0m0-30h0m10 60h0m0-50h0m0 20h0m0-10h0m0 30h0m0-40h0m0-30h0m0 10h0m0 50h0m10-20h0m0 20h0m0-50h0m0 30h0m0-20h0m0 10h0m0 20h0m10 20h0m0-10h0m0-10h0m0-20h0m0 20h0m0-30h0m0 20h0m10 40h0m0-60h0m0 40h0m0 0h0m0 0h0m0-40h0m0-40h0m0 50h0m0 50h0m0 20h0m10-30h0m0-40h0m0 30h0m0-70h0m0 50h0m0-20h0m0 60h0m10-20h0m0 40h0m0-120h0m0 70h0m0-40h0m0 10h0m0 60h0m0-40h0m0 50h0m10 0h0m0-90h0m0 50h0m0-30h0m0 20h0m0-40h0m0 50h0m10-30h0m0 40h0m0-60h0m0-20h0m0 80h0m0-70h0m0 20h0m0 30h0m0-40h0m0-20h0m10 30h0m0 60h0m0 0h0m0-90h0m0 40h0m0-20h0m0-20h0m0 10h0m10 60h0m0-20h0m0-30h0m0-30h0m0 20h0m0 30h0m0 20h0m10-40h0m0 30h0m0-20h0m0 60h0m0-30h0m0 10h0m0-50h0m0 10h0m10 50h0m0-40h0m0 30h0m0 20h0m0-40h0m0 30h0m0-20h0m0-20h0m10 60h0m0-40h0m0-10h0m0-40h0m0 80h0m0 30h0m0-50h0m0 20h0m0-40h0m10 70h0m0-100h0m0 30h0m0 30h0m0-10h0m0-30h0m0 20h0m0 40h0m0-20h0m10-70h0m0 30h0m0 20h0m0 10h0m0-60h0m0 30h0m0 50h0m0-80h0m0 30h0m0 80h0m0 10h0m10-40h0m0-40h0m0 10h0m0-50h0m0-20h0m0 80h0m0-40h0m0-20h0m0 80h0m0-30h0m0-40h0m10 60h0m0-30h0m0 30h0m0-20h0m0 40h0m0-110h0m0 50h0m10 20h0m0 10h0m0-40h0m0 10h0m0 40h0m0-40h0m0 30h0m10-50h0m0 40h0m0-20h0m0-10h0m0 30h0m0-30h0m0 50h0m0-10h0m10-10h0m0-30h0m0 50h0m0-70h0m0 30h0m0 10h0m0 40h0m0-20h0m10 50h0m0-100h0m0 30h0m0 20h0m0-30h0m0 20h0m0-40h0m10 10h0m0 10h0m0 20h0m0 20h0m0-10h0m0-50h0m0 10h0m0 50h0m10-40h0m0 30h0m0 20h0m0-30h0m0-40h0m0 60h0m0-20h0m10-20h0m0 0h0m0-10h0m0 60h0m0-60h0m0 60h0m0-60h0m0 40h0m10-40h0m0 30h0m0-10h0m0 40h0m0-20h0m0-20h0m0-20h0m0 30h0m10-20h0m0 20h0m0-10h0m0 20h0m0-40h0m0 30h0m10-20h0m0 60h0m0-30h0m0-20h0m0 10h0m0-10h0m0 10h0m0 10h0m10-40h0m0 40h0m0-30h0m0-20h0m0 30h0m0 20h0m0-10h0m10-50h0m0 100h0m0-70h0m0-10h0m0 60h0m0-30h0m0-20h0m0 30h0m0-20h0m10 0h0m0 30h0m0-50h0m0 40h0m0-10h0m0-20h0m0 10h0m10 40h0m0-50h0m0 20h0m0 30h0m0-10h0m0-60h0m0 20h0m0-40h0m10 80h0m0-80h0m0 20h0m0 40h0m0 50h0m0-100h0m0 30h0m0-40h0m0 110h0m0-120h0m10 100h0m0-20h0m0-20h0m0 40h0m0-50h0m0-20h0m0 30h0m0 10h0m10-40h0m0 70h0m0-30h0m0 20h0m0-40h0m0 40h0m0-20h0m0-40h0m10 30h0m0 30h0m0-40h0m0-20h0m0 10h0m0 20h0m0 20h0m0-10h0m0 30h0m10 0h0m0-30h0m0 20h0m0-30h0m0 30h0m0-20h0m10 50h0m0-70h0m0-10h0m0 80h0m0-70h0m0-40h0m0 50h0m0 30h0m10-30h0m0 50h0m0-30h0m0-50h0m0 30h0m0-30h0m0 10h0m0 40h0m0-30h0m0 40h0m0-80h0m10 100h0m0-60h0m0 10h0m0 30h0m0-20h0m0-10h0m0-30h0m0 0h0m0 50h0m10 10h0m0 0h0m0-20h0m0 10h0m10 40h0m0-50h0m0 0h0m0 20h0m0-30h0m0 40h0m10-70h0m0 30h0m0 30h0m0-10h0m0-10h0m0 10h0m0 0h0m10 10h0m0 10h0m0-60h0m0-10h0m0 60h0m0 10h0m0-70h0m0 50h0m10 20h0m0-50h0m0 50h0m0 30h0m0-70h0m0 30h0m0-50h0m0 30h0m0-70h0m0 90h0m10-20h0m0 20h0m0-40h0m0-20h0m0 50h0m0-20h0m0-20h0m10-20h0m0 80h0m0-50h0m0 20h0m0-20h0m0 30h0m10-20h0m0 40h0m0-10h0m0-40h0m0 40h0m0-40h0m0 20h0m0-40h0m0 50h0m10-30h0m0 30h0m0-10h0m0 40h0m0-30h0m0-40h0m0 20h0m10 30h0m0 10h0m0-30h0m0-60h0m0 110h0m0-50h0m10 0h0m0 0h0m0-30h0m0 10h0m0 30h0m10-30h0m0 50h0m0-70h0m0 30h0m0 20h0m0-40h0m0 30h0m0-60h0m0 60h0m0 20h0m10 20h0m0 10h0m0-60h0m0-30h0m0 60h0m0-40h0m0 30h0m0-20h0m0 50h0m10-90h0m0-10h0m0 40h0m0 50h0m0-20h0m0-60h0m0 20h0m0 60h0m0-10h0m10-50h0m0 0h0m0 30h0m0 10h0m0-40h0m0 10h0m0 60h0m0-30h0m10 20h0m0-20h0m0-20h0m0 20h0m0 20h0m0 0h0m0-20h0m10-40h0m0 20h0m0 40h0m0-20h0m0-80h0m0 80h0m0 20h0m0-80h0m0 20h0m0 10h0m10 20h0m0 40h0m0-90h0m0 70h0m0 10h0m0-10h0m0-30h0m0-10h0m0-20h0m10 50h0m0 40h0m0-10h0m0-70h0m0 30h0m0-10h0m0 0h0m0 30h0m0-50h0m0 40h0m10 10h0m0-10h0m0-20h0m0-10h0m0 50h0m10-20h0m0-10h0m0-30h0m0-20h0m0 50h0m0-20h0m10 40h0m0-10h0m0-30h0m0-20h0m0 40h0m0-20h0m0 30h0m0 20h0m10 20h0m0-40h0m0-20h0m0 60h0m0-50h0m0-30h0m0 50h0m0-20h0m10-10h0m0-20h0m0 20h0m0-30h0m0-20h0m0 30h0m10-40h0m0 40h0m0 0h0m0-20h0m0 60h0m0-40h0m0 90h0m10-110h0m0 90h0m0-20h0m0-20h0m0-30h0m0 20h0m0-50h0m0 80h0m0-40h0m0-20h0m10 70h0m0-40h0m0 20h0m0-30h0m0 30h0m0-50h0m0 60h0m10-30h0m0-20h0m0 10h0m0 30h0m0-40h0m0-20h0m0 40h0m10 30h0m0-50h0m0-20h0m0 60h0m0 10h0m10-30h0m0 10h0m0 10h0m0 20h0m0-60h0m0 20h0m0 50h0m0-30h0m0-50h0m10 70h0m0-60h0m0 10h0m0 20h0m0 30h0m0-40h0m0 30h0m0-40h0m10-10h0m0 40h0m0-20h0m0 20h0m0-50h0m0 40h0m10 20h0m0-40h0m0 10h0m0 20h0m0-70h0m0 90h0m0-40h0m0 50h0m0-30h0m10-10h0m0-20h0m0 10h0m0 60h0m0-90h0m0 60h0m10-50h0m0 20h0m0 0h0m0 20h0m0-40h0m0 30h0m0-30h0m10 30h0m0 10h0m0-30h0m0 50h0m0-30h0m0 30h0m0-30h0m0-40h0m10 20h0m0 40h0m0-10h0m0-50h0m0 40h0m0 10h0m0-60h0m0 50h0m10 10h0m0-40h0m0 50h0m0 0h0m0-20h0m0-30h0m0 80h0m0-60h0m10 0h0m0-30h0m0-30h0m0 20h0m0 20h0m0-10h0m10-20h0m0 40h0m0-10h0m0-30h0m0 20h0m0 10h0m10 10h0m0-30h0m0 50h0m0 10h0m0-70h0m0 40h0m0 50h0m0-20h0m10-10h0m0 30h0m0-60h0m0-10h0m0 30h0m0 30h0m0-20h0m0-70h0m10 50h0m0 10h0m0-40h0m0 70h0m0-10h0m0-10h0m0 0h0m0-20h0m10 30h0m0-40h0m0 30h0m0 20h0m0-30h0m0-20h0m0 50h0m10-30h0m0 20h0m0-30h0m0 20h0m0-10h0m0-10h0m10 50h0m0 0h0m0-20h0m0-20h0m0 10h0m0-30h0m0 30h0m10 40h0m0 20h0m0-40h0m0-20h0m0 10h0m0 0h0m0-40h0m0 80h0m0-70h0m0-30h0m10 80h0m0-50h0m0 30h0m0-30h0m0 60h0m0-20h0m0-60h0m0 100h0m0-30h0m0-10h0m10-60h0m0 30h0m0-10h0m0 40h0m0-10h0m0 30h0m0-60h0m0 60h0m0-80h0m0 40h0m10 30h0m0-10h0m0-40h0m0 50h0m0-30h0m0 20h0m0-60h0m0-20h0m10 50h0m0 20h0m0-40h0m0-20h0m0 20h0m0-40h0m0 30h0m0 30h0m10-50h0m0 40h0m0-20h0m0 30h0m0 40h0m0-20h0m0-50h0m10 10h0m0 10h0m0 20h0m0 20h0m0-40h0m0 10h0m0 10h0m0-40h0m10 20h0m0 0h0m0 20h0m0-10h0m0 20h0m0-20h0m10 30h0m0-10h0m0-20h0m0-30h0m0 30h0m0 20h0m0 20h0m10-20h0m0-20h0m0 30h0m0-40h0m0 30h0m0-10h0m0 30h0m0 0h0m10-40h0m0-30h0m0 60h0m0-50h0m0 20h0m0 10h0m0 40h0m0-70h0m0 50h0m0-90h0m10 110h0m0-90h0m0 50h0m0-20h0m0 50h0m0-70h0m0 50h0m0-20h0m0 10h0m0-60h0m10 30h0m0 50h0m0-20h0m0-20h0m0 20h0m0 20h0m10 20h0m0-40h0m0 30h0m0-10h0m0-40h0m0 20h0m0-10h0m10-30h0m0 40h0m0 10h0m0-40h0m0-20h0m0 50h0m10 20h0m0-40h0m0 60h0m0-60h0m0-30h0m0 60h0m0 50h0m0-80h0m10 40h0m0 50h0m0-70h0m0 20h0m0 30h0m0 0h0m0-90h0m0 20h0m0 10h0m0 40h0m0-10h0m10 0h0m0-90h0m0 80h0m0-20h0m0-20h0m0 20h0m10 60h0m0-50h0m0-20h0m0 30h0m0 20h0m0-10h0m0-30h0m10 10h0m0-40h0m0 60h0m0-50h0m0 20h0m0 50h0m10-20h0m0-10h0m0-40h0m0 20h0m0-10h0m0 30h0m0 0h0m10-20h0m0-20h0m0 30h0m0-60h0m0 20h0m0 30h0m0 20h0m10-40h0m0-20h0m0 60h0m0-30h0m0 40h0m0-40h0m0 40h0m10-30h0m0 20h0m0 20h0m0-60h0m0 20h0m0 10h0m0 30h0m10 20h0m0-100h0m0-10h0m0 80h0m0-30h0m0-30h0m0 70h0m0-30h0m0 40h0m0-110h0m0 80h0m10-50h0m0 50h0m0-40h0m0 20h0m0 40h0m0-50h0m0 20h0m0-40h0m10 20h0m0 20h0m0 20h0m0-50h0m0 40h0m0 30h0m0-50h0m0-30h0m0 20h0m10 40h0m0 20h0m0-50h0m0 20h0m0-30h0m0 70h0m0-30h0m0-90h0m0 60h0m10-10h0m0-40h0m0 70h0m0-50h0m0 80h0m0-60h0m0-20h0m0-30h0m0 70h0m10 30h0m0-80h0m0 10h0m0 50h0m0 10h0m0-60h0m0 80h0m0-70h0m0 50h0m10-20h0m0 20h0m0-70h0m0 20h0m0 60h0m0-10h0m0-40h0m10-20h0m0 50h0m0-10h0m0-20h0m0 30h0m0 20h0m0-40h0m10 30h0m0-30h0m0 40h0m0-70h0m0 60h0m0-10h0m0-20h0m0 10h0m10-30h0m0 50h0m0-20h0m0-10h0m0-10h0m0 60h0m0-20h0m10-10h0m0-20h0m0 40h0m0-50h0m0 50h0m0-30h0m0-20h0m0 50h0m0-20h0m0 0h0m10-20h0m0-50h0m0 0h0m0 60h0m0-20h0m0 30h0m0 30h0m0-60h0m0 40h0m10 40h0m0-60h0m0 20h0m0 10h0m0-70h0m0 10h0m0 20h0m0-40h0m10 50h0m0-40h0m0 10h0m0 80h0m0-60h0m0-20h0m0 40h0m0-10h0m0-20h0m10 20h0m0 20h0m0-60h0m0 30h0m0 60h0m0-40h0m0-60h0m0 70h0m10-70h0m0 50h0m0-20h0m0 60h0m0-60h0m0 20h0m0-40h0m0 50h0m10-70h0m0 100h0m0-40h0m0 30h0m0-10h0m0-20h0m0-20h0m0-20h0m10-30h0m0 90h0m0-30h0m0 20h0m0-40h0m0 60h0m0-30h0m10 20h0m0-20h0m0-20h0m0 40h0m0-10h0m0-20h0m0 10h0m0 50h0m10-70h0m0 20h0m0 30h0m0-40h0m0-60h0m0 20h0m0 10h0m10-20h0m0 20h0m0 20h0m0-50h0m0 20h0m0 30h0m0 20h0m0-30h0m10 60h0m0-50h0m0 20h0m0-40h0m0 20h0m0-40h0m0 70h0m0-40h0m0 50h0m0 0h0m10-30h0m0-10h0m0-10h0m0 40h0m0-60h0m0 60h0m0-50h0m0 50h0m10-40h0m0 40h0m0-20h0m0 40h0m0-10h0m0-20h0m0-20h0m0-10h0m0-10h0m10 60h0m0-20h0m0 10h0m0-20h0m0 20h0m0 10h0m0-50h0m0 30h0m10-40h0m0 40h0m0-20h0m0 40h0m0-10h0m0-40h0m0 20h0m10 20h0m0-10h0m0 30h0m0-40h0m0 20h0m10-30h0m0 0h0m0 30h0m0 0h0m0 20h0m0-80h0m0 70h0m10-90h0m0 50h0m0 10h0m0-50h0m0 90h0m0-10h0m0-40h0m0 10h0m10 40h0m0-60h0m0 40h0m0-50h0m0 60h0m0-40h0m0 40h0m0-20h0m0-30h0m10 40h0m0-20h0m0 70h0m0-90h0m0 70h0m0-50h0m0 20h0m10-10h0m0-10h0m0 50h0m0-60h0m0 60h0m0-20h0m0-10h0m0-30h0m10-50h0m0 30h0m0 60h0m0 20h0m0-70h0m0 30h0m0-20h0m0 30h0m0-60h0m10 20h0m0-40h0m0 50h0m0 60h0m0-70h0m0-20h0m0 0h0m0 30h0m0 30h0m10-40h0m0 30h0m0-40h0m0 70h0m0-20h0m0-30h0m0-30h0m0 20h0m0-20h0m10 50h0m0 10h0m0-40h0m0 40h0m0-70h0m0 80h0m10-80h0m0 10h0m0 20h0m0-20h0m0 80h0m0-60h0m0 10h0m0 20h0m10-10h0m0 10h0m0 10h0m0-60h0m0 30h0m0 10h0m10 20h0m0 30h0m0-20h0m0-10h0m0-40h0m0 20h0m0 40h0m0 10h0m10 10h0m0-40h0m0-10h0m0-60h0m0 30h0m0 50h0m0-40h0m0 40h0m10-20h0m0 30h0m0-50h0m0 30h0m0 30h0m0-60h0m0 10h0m10-20h0m0 30h0m0 10h0m0 20h0m0-30h0m0-20h0m0 70h0m0-80h0m10 40h0m0-10h0m0-30h0m0 20h0m0 10h0m0-30h0m10 40h0m0-10h0m0-40h0m0 20h0m0 30h0m0-40h0m0 0h0m0 70h0m10-40h0m0 10h0m0 30h0m0-10h0m0 0h0m0-40h0m0-20h0m0 30h0m0-20h0m10-40h0m0 100h0m0-80h0m0 30h0m0 10h0m0 30h0m0-20h0m0-80h0m0 50h0m0 80h0m0-10h0m0-40h0m10 0h0m0-60h0m0 40h0m0-30h0m0 30h0m0 50h0m0-30h0m0-60h0m10 90h0m0-20h0m0-40h0m0 10h0m0 40h0m0-90h0m0 60h0m0-40h0m0 70h0m0 10h0m0-70h0m10 40h0m0 30h0m0 0h0m0-30h0m0-10h0m0-30h0m0 20h0m0-40h0m0 20h0m10-30h0m0 60h0m0 20h0m0 20h0m0-80h0m0 20h0m0 0h0m0 30h0m10-10h0m0 10h0m0-10h0m0-20h0m0 30h0m0-50h0m0 30h0m10-30h0m0 60h0m0-30h0m0-10h0m0 0h0m0 40h0m0 20h0m10-30h0m0-20h0m0-10h0m0 40h0m0-50h0m0 20h0m0 60h0m10-30h0m0-20h0m0 20h0m0-60h0m0 30h0m0 10h0m0 20h0m0 10h0m10-40h0m0 10h0m0-40h0m0 60h0m0 10h0m0-50h0m0 10h0m0 10h0m10 10h0m0 20h0m0-70h0m0 20h0m0 30h0m0-10h0m0 40h0m0-70h0m0 30h0m10-20h0m0 20h0m0 10h0m0-60h0m0 10h0m0 40h0m0 30h0m10-40h0m0 20h0m0-10h0m0-30h0m0 0h0m0 70h0m0-50h0m10 10h0m0 40h0m0-100h0m0 90h0m0-50h0m0 30h0m0-30h0m0 50h0m10-20h0m0 20h0m0-30h0m0-20h0m0-40h0m0 90h0m0-50h0m10 40h0m0-50h0m0 40h0m0-20h0m0-20h0m0 50h0m10-30h0m0-20h0m0 50h0m0-30h0m0-20h0m0 20h0m0 60h0m10-30h0m0-60h0m0 10h0m0 30h0m0-60h0m0 80h0m0-30h0m0 10h0m0 40h0m10-40h0m0 20h0m0 10h0m0-30h0m0 30h0m0-20h0m10-40h0m0 30h0m0 30h0m0-50h0m0 10h0m0-10h0m10 20h0m0 20h0m0-70h0m0 90h0m0-20h0m0-20h0m0-10h0m0 20h0m10-10h0m0-30h0m0 50h0m0-30h0m0 10h0m0-30h0m10 40h0m0 0h0m0 30h0m0-50h0m0 20h0m0-30h0m0-20h0m0 60h0m10 20h0m0 0h0m0-30h0m0-80h0m0 90h0m0-70h0m0 60h0m0-40h0m10 50h0m0-40h0m0 50h0m0-40h0m0 60h0m0-40h0m0 20h0m0-30h0m10-40h0m0 40h0m0-20h0m0 80h0m0-10h0m0-20h0m0-10h0m0-20h0m10 50h0m0-40h0m0 20h0m0-50h0m0 10h0m0-60h0m0 70h0m0-40h0m10 90h0m0-40h0m0 20h0m0 10h0m0-40h0m0-10h0m0-20h0m0 40h0m0 10h0m10 20h0m0-60h0m0 40h0m0-40h0m0 80h0m0-20h0m0-70h0m0 80h0m0-50h0m10 40h0m0-70h0m0 90h0m0-120h0m0 20h0m0-10h0m10 0h0m0 30h0m0-50h0m0 30h0m0 70h0m0-40h0m10 60h0m0-100h0m0 60h0m0-40h0m0 60h0m0-40h0m0 30h0m0 20h0m10-30h0m0-30h0m0 40h0m0-50h0m0 30h0m0 10h0m0 20h0m0-80h0m0 70h0m10-10h0m0-20h0m0 20h0m0-40h0m0 40h0m0-30h0m0 10h0m0 10h0m10 20h0m0 30h0m0-40h0m0-20h0m0 40h0m0-60h0m0 50h0m10-10h0m0-20h0m0-20h0m0 30h0m0 10h0m0 10h0m0-30h0m10 60h0m0-30h0m0-10h0m0-30h0m0 10h0m0 20h0m10-80h0m0 30h0m0 40h0m0-20h0m0 30h0m0-10h0m0 10h0m0 40h0m10-10h0m0-110h0m0 40h0m0 70h0m0-50h0m0 20h0m0-40h0m0-20h0m0 50h0m10-10h0m0-20h0m0-40h0m0 20h0m0 20h0m0-10h0m10-10h0m0-10h0m0 0h0m0 30h0m0 0h0m0 10h0m0 40h0m0-10h0m0-40h0m10 30h0m0-20h0m0 50h0m0-40h0m0 20h0m0-30h0m0 30h0m0 20h0m10-40h0m0 20h0m0-10h0m0-10h0m0-20h0m0 10h0m0 0h0m10 10h0m0 20h0m0-80h0m0 80h0m0-30h0m0 20h0m0 20h0m10-50h0m0 20h0m0 20h0m0-10h0m0 10h0m0-50h0m0 40h0m0-20h0m0-30h0m10 40h0m0 10h0m0 0h0m0-20h0m0 10h0m0 10h0m0-70h0m10 10h0m0 60h0m0-70h0m0 100h0m0-50h0m0 40h0m0-50h0m0-40h0m0 110h0m10-100h0m0 50h0m0 40h0m0-40h0m0 30h0m0-60h0m0 10h0m0 20h0m10 30h0m0-10h0m0-40h0m0 20h0m0 20h0m0-40h0m0 20h0m10 20h0m0-40h0m0 80h0m0-40h0m0 30h0m0-40h0m0 20h0m10-30h0m0 50h0m0-40h0m0 20h0m0-30h0m0 50h0m0-70h0m0 20h0m10 10h0m0-30h0m0 20h0m0-10h0m0 40h0m0-20h0m10 20h0m0-40h0m0 20h0m0-20h0m0 40h0m0-10h0m10 0h0m0-30h0m0 20h0m0-20h0m0 30h0m0-30h0m0-20h0m0 80h0m10-100h0m0 70h0m0-30h0m0 10h0m0 20h0m0 20h0m0-40h0m10 30h0m0-30h0m0 20h0m0-10h0m0-20h0m0-20h0m0 40h0m10 10h0m0 20h0m0-30h0m0-10h0m0-30h0m0 70h0m0-50h0m0 20h0m10 30h0m0-20h0m0-30h0m0-20h0m0-10h0m10 40h0m0 20h0m0-70h0m0 70h0m0-40h0m0-20h0m0 60h0m0-30h0m10 20h0m0-10h0m0 40h0m0-20h0m0-30h0m0 10h0m10 10h0m0 20h0m0 10h0m0-60h0m0 50h0m0-40h0m0 20h0m10-10h0m0 40h0m0-10h0m0-20h0m0-20h0m0 50h0m0-40h0m0 20h0m10 30h0m0-80h0m0 60h0m0-10h0m0 50h0m0-100h0m0 40h0m0 20h0m0-80h0m0 60h0m0-20h0m0 60h0m10-80h0m0 90h0m0-30h0m0-40h0m0-40h0m0 90h0m0-20h0m0-50h0m10 30h0m0 10h0m0 40h0m0-70h0m0-20h0m0 70h0m0-30h0m0 40h0m0-70h0m0 50h0m10-40h0m0-10h0m0 60h0m0-30h0m0-10h0m0 60h0m0 10h0m0-40h0m10-60h0m0-10h0m0 50h0m0-30h0m0 20h0m0 30h0m0 30h0m10-40h0m0-30h0m0 60h0m0-50h0m0 20h0m0 20h0m0-10h0m0-10h0m10 0h0m0 40h0m0-10h0m0-10h0m0-10h0m0-10h0m0-40h0m10 20h0m0 20h0m0-10h0m0 40h0m0-10h0m0 40h0m0-80h0m0 20h0m0-10h0m10 20h0m0-30h0m0-50h0m0 80h0m0-50h0m0 80h0m0-70h0m0 60h0m0-30h0m10-20h0m0 30h0m0-30h0m0 20h0m0-20h0m0 30h0m10-10h0m0 10h0m0-40h0m0 60h0m0-40h0m0 30h0m0-20h0m10 40h0m0-20h0m0-20h0m0-30h0m0 60h0m0-30h0m0 20h0m0-20h0m10 0h0m0-20h0m0 20h0m0-20h0m0 40h0m0-40h0m0 30h0m0 30h0m10-60h0m0 50h0m0-30h0m0 20h0m0-20h0m0 30h0m0-10h0m10 0h0m0-50h0m0 30h0m0-10h0m0 30h0m0 10h0m0-50h0m0 20h0m10 10h0m0 20h0m0-10h0m0-40h0m0 40h0m0 20h0m0-40h0m10-20h0m0 20h0m0 20h0m0-20h0m0 0h0m0 30h0m0-20h0m0 30h0m10-60h0m0-50h0m0 20h0m0 20h0m0 20h0m0-30h0m0-20h0m0 60h0m10-10h0m0-40h0m0-10h0m0 70h0m0-40h0m0 30h0m0 40h0m10-80h0m0 60h0m0 10h0m0-30h0m0-10h0m0 30h0m0-40h0m0 40h0m10-60h0m0 20h0m0-20h0m0 50h0m0 20h0m0-40h0m0-20h0m0 50h0m10 30h0m0-60h0m0 20h0m0-40h0m0-10h0m0 70h0m0 20h0m10-110h0m0 30h0m0 20h0m0 30h0m0-70h0m0 50h0m0-50h0m0 80h0m0-50h0m0 10h0m10 40h0m0-20h0m0-20h0m0 40h0m0-40h0m10 60h0m0-30h0m0-50h0m0 40h0m0-30h0m0 10h0m0 30h0m10-40h0m0 40h0m0-20h0m0-30h0m0 10h0m0 50h0m0-10h0m0-20h0m10-40h0m0 10h0m0 40h0m0-40h0m0 20h0m0 20h0m0 20h0m0-50h0m10-10h0m0 30h0m0-20h0m0 10h0m0 30h0m0-10h0m0-20h0m0-20h0m10 40h0m0 20h0m0 20h0m0-80h0m0 40h0m0-40h0m0-10h0m0 60h0m0-60h0m10 80h0m0-60h0m0 40h0m0-20h0m0 20h0m0-30h0m0-20h0m0-20h0m0 60h0m10-20h0m0 20h0m0-20h0m0 40h0m0-40h0m0 20h0m10-30h0m0 20h0m0-10h0m0 30h0m0 20h0m0-40h0m10-50h0m0 60h0m0-70h0m0 60h0m0-70h0m0 60h0m0-40h0m0 20h0m0 30h0m10 30h0m0-20h0m0-30h0m0-10h0m0-20h0m0 10h0m0 60h0m0 40h0m0-30h0m0-70h0m10 50h0m0-30h0m0 0h0m0 40h0m0 10h0m0-30h0m0 30h0m0 0h0m10-10h0m0-20h0m0-20h0m0 40h0m0-10h0m0 0h0m0-20h0m0-10h0m10-10h0m0 60h0m0-10h0m0-50h0m0 30h0m0-20h0m0 20h0m0 30h0m10-20h0m0-30h0m0 50h0m0-30h0m0 10h0m0-40h0m0 10h0m10 20h0m0 10h0m0 40h0m0-30h0m0-10h0m0-40h0m0 10h0m0 30h0m0 30h0m10-50h0m0-20h0m0 40h0m0 20h0m0-30h0m0-50h0m0 90h0m0-30h0m10-50h0m0 90h0m0-50h0m0-10h0m0-20h0m0 80h0m0-30h0m0-10h0m10-20h0m0-20h0m0-20h0m0 60h0m0-50h0m0 20h0m0 20h0m10 10h0m0-40h0m0 20h0m0 20h0m0 10h0m0-20h0m0-30h0m10 50h0m0-10h0m0-20h0m0 20h0m0-30h0m10-10h0m0 60h0m0-40h0m0-30h0m0 50h0m0-60h0m0 30h0m0 60h0m0-50h0m10-30h0m0-10h0m0 20h0m0 90h0m0-40h0m0-80h0m0 50h0m0-20h0m0 10h0m0 30h0m10 40h0m0-10h0m0-60h0m0-10h0m0 40h0m0 10h0m0 0h0m0-60h0m0 60h0m0-40h0m10-20h0m0 20h0m0 20h0m0-30h0m0-10h0m0 40h0m0 10h0m0 30h0m0-20h0m10 10h0m0 10h0m0-60h0m0 30h0m0-40h0m0-30h0m0 40h0m0 50h0m0-40h0m10 40h0m0 10h0m0-40h0m0-20h0m0 0h0m0 70h0m0-20h0m10-50h0m0 30h0m0-20h0m0 60h0m0-100h0m0 30h0m0 20h0m0 30h0m0-100h0m0 120h0m10-60h0m0 30h0m0-20h0m0 20h0m0-50h0m0 40h0m10-10h0m0-20h0m0 70h0m0-10h0m0-70h0m0 10h0m0 40h0m0 0h0m10 20h0m0-70h0m0 70h0m0-50h0m0 40h0m0-10h0m0-20h0m0 20h0m0-30h0m10 20h0m0-40h0m0 10h0m0 20h0m0 20h0m0-40h0m10 10h0m0 40h0m0-10h0m0-40h0m0-20h0m0 10h0m0 40h0m10-50h0m0 30h0m0 30h0m0 10h0m0-80h0m0 30h0m0 80h0m0-30h0m0-20h0m10-40h0m0 50h0m0-60h0m0 40h0m0 20h0m0-30h0m0-20h0m10 30h0m0-20h0m0 40h0m0 20h0m0-50h0m0 20h0m0-30h0m10 10h0m0 20h0m0 10h0m0-60h0m0 20h0m0 10h0m0 30h0m0-40h0m0-30h0m10 70h0m0-20h0m0-20h0m0 70h0m0-40h0m0-60h0m0 20h0m0 10h0m10 20h0m0 40h0m0-20h0m0-20h0m0 20h0m0-30h0m10-10h0m0 30h0m0-30h0m0 30h0m0 10h0m0-30h0m0 40h0m0 10h0m10-40h0m0-20h0m0 0h0m0 50h0m0-20h0m0-10h0m0-20h0m10 20h0m0 20h0m0 30h0m0-50h0m0-20h0m0 50h0m0-20h0m0 10h0m10-30h0m0-10h0m0-10h0m0 60h0m0-90h0m0 20h0m0 40h0m10-40h0m0 40h0m0-50h0m0-20h0m0 80h0m0-40h0m10 60h0m0-40h0m0 10h0m0 20h0m0-10h0m0 0h0m0-20h0m10-10h0m0 30h0m0-20h0m0 60h0m0-70h0m0 30h0m0 10h0m10-30h0m0-30h0m0 60h0m0-30h0m0-50h0m0 10h0m0 30h0m0-20h0m0 60h0m10-70h0m0 60h0m0-10h0m0 20h0m0-40h0m0 30h0m10 30h0m0-20h0m0-30h0m0 10h0m0 40h0m0-20h0m0-10h0m0-50h0m10 20h0m0 40h0m0-10h0m0 0h0m0 30h0m0-60h0m0 10h0m0 0h0m10 20h0m0-50h0m0-30h0m0 0h0m0 30h0m0-20h0m10 20h0m0-10h0m0 90h0m0-90h0m0-20h0m0 60h0m10 40h0m0-30h0m0 10h0m0 10h0m0-50h0m0 10h0m0 0h0m0 30h0m0 20h0m0-30h0m10 50h0m0-60h0m0 20h0m0-80h0m0 50h0m0 40h0m0-30h0m0 60h0m0-20h0m10-40h0m0-30h0m0-20h0m0 60h0m0-20h0m0 40h0m0-20h0m0 40h0m10-30h0m0-40h0m0 60h0m0-80h0m0 60h0m0-20h0m10 10h0m0 0h0m0 20h0m0-40h0m0 20h0m10 20h0m0-40h0m0 0h0m0 20h0m0 50h0m0-20h0m0-20h0m0-50h0m10 20h0m0 20h0m0-10h0m0 40h0m0-50h0m0-20h0m0 30h0m10 10h0m0 10h0m0-30h0m0-20h0m0 50h0m0-40h0m0 50h0m10-20h0m0-40h0m0 60h0m0-20h0m0-30h0m0 60h0m0-10h0m0-50h0m10 20h0m0 30h0m0-10h0m0-40h0m0 0h0m0 20h0m0 20h0m0-20h0m10 10h0m0 10h0m0 60h0m0-30h0m0-50h0m0 30h0m0-40h0m0 70h0m0-60h0m10 70h0m0-70h0m0 70h0m0-10h0m0-40h0m0 10h0m0-60h0m0 50h0m10-30h0m0 10h0m0-30h0m0 90h0m0-40h0m0-50h0m0 10h0m0 60h0m0-30h0m10 30h0m0-70h0m0 50h0m0-40h0m0-20h0m0 40h0m0-40h0m0 60h0m10 20h0m0 20h0m0-50h0m0 20h0m0-50h0m0 40h0m0-20h0m10 10h0m0 30h0m0-20h0m0-40h0m0 40h0m0-20h0m0 20h0m10-10h0m0 10h0m0-70h0m0 40h0m0-40h0m0 100h0m0-40h0m0-10h0m0-20h0m0-40h0m10 90h0m0-40h0m0-40h0m0 60h0m0-40h0m0 60h0m0-10h0m0 30h0m0-50h0m10 30h0m0-50h0m0 10h0m0 40h0m0-50h0m0 40h0m0-20h0m10 10h0m0 10h0m0-30h0m0 20h0m0-40h0m0 30h0m0 10h0m10-30h0m0 40h0m0 0h0m0-20h0m0 40h0m0-90h0m0 80h0m0-20h0m0-30h0m10 50h0m0-60h0m0 30h0m0 10h0m0-30h0m0-30h0m0-10h0m10 30h0m0-10h0m0-20h0m0 20h0m0 60h0m0-20h0m0 40h0m10-60h0m0 0h0m0 40h0m0 10h0m0-20h0m0 20h0m10-40h0m0 40h0m0-20h0m0-20h0m0 40h0m0-20h0m0-40h0m10 30h0m0 40h0m0-70h0m0 40h0m0 30h0m0-60h0m0 10h0m0 10h0m10 40h0m0-10h0m0-30h0m0 20h0m0-30h0m0 40h0m0-50h0m0 70h0m0-10h0m10-50h0m0 30h0m0-20h0m0 20h0m0-10h0m0 20h0m10 10h0m0-50h0m0 40h0m0-10h0m0-20h0m0 70h0m0-70h0m10 30h0m0-50h0m0 30h0m0-20h0m0 60h0m0-70h0m0 20h0m0 20h0m0-10h0m10-20h0m0 30h0m0-40h0m0 20h0m0 40h0m0-10h0m0-70h0m0 30h0m0-30h0m0 10h0m10 90h0m0-60h0m0 20h0m0-20h0m0-10h0m0 40h0m10-20h0m0 60h0m0-80h0m0-30h0m0 50h0m0-30h0m0 80h0m0-90h0m0 40h0m0-30h0m10 50h0m0-50h0m0 90h0m0-40h0m0 30h0m0-30h0m0-50h0m0 0h0m10 60h0m0-30h0m0-20h0m0 30h0m0-50h0m0 50h0m0-30h0m0 20h0m0 30h0m10-40h0m0-40h0m0 50h0m0 20h0m0-80h0m0 30h0m0 70h0m0-50h0m0 50h0m10-40h0m0-40h0m0 80h0m0-60h0m0 40h0m0 20h0m0-20h0m0-40h0m10-30h0m0 10h0m0 60h0m0-40h0m0 60h0m0-40h0m0-10h0m0 40h0m10-40h0m0 20h0m0-20h0m0 30h0m0 20h0m0-30h0m10-20h0m0-20h0m0 50h0m0-50h0m0 30h0m0 20h0m0-10h0m0-70h0m0 20h0m10 20h0m0 30h0m0 60h0m0-70h0m0 30h0m0-40h0m0 70h0m0-10h0m10-50h0m0-20h0m0 60h0m0-20h0m0 40h0m0-60h0m0 0h0m10-20h0m0 40h0m0-40h0m0 30h0m0 20h0m0-30h0m0 10h0m10-50h0m0 0h0m0 40h0m0-30h0m0 40h0m0-30h0m0-10h0m0 30h0m10-20h0m0 40h0m0-10h0m0-50h0m0 20h0m0 20h0m0-50h0m0 80h0m0 10h0m0-50h0m10-10h0m0-20h0m0 20h0m0 50h0m0-40h0m0 50h0m0-40h0m10-20h0m0 50h0m0-40h0m0 30h0m0-60h0m0 40h0m0 20h0m0-50h0m0 50h0m10-50h0m0 20h0m0 10h0m0-30h0m0 40h0m0-20h0m0-10h0m0 50h0m10-60h0m0 50h0m0-20h0m0-40h0m0 20h0m0 30h0m10-10h0m0-20h0m0 40h0m0-10h0m0-70h0m0 20h0m0 30h0m0 30h0m10-10h0m0 20h0m0-20h0m0 10h0m0-30h0m0-30h0m0 70h0m10-60h0m0 40h0m0 20h0m0-50h0m0-30h0m0-20h0m0 70h0m0-30h0m0-10h0m0 60h0m0-80h0m10 10h0m0 50h0m0-10h0m0 20h0m0-50h0m0-10h0m0 80h0m0-60h0m0 30h0m10 0h0m0-30h0m0-10h0m0 30h0m0 30h0m0-30h0m0 20h0m0-60h0m10 40h0m0 30h0m0-70h0m0 20h0m0-10h0m0-30h0m10 30h0m0-20h0m0 0h0m0 60h0m0-30h0m0 10h0m10 0h0m0 20h0m0-20h0m0 30h0m0-50h0m0 40h0m0-10h0m0-50h0m10 40h0m0-10h0m0-10h0m0 60h0m0-10h0m0-10h0m0-70h0m0 30h0m0 40h0m10 30h0m0-40h0m0 30h0m0-70h0m0 60h0m0-40h0m0 50h0m0-40h0m0 50h0m10-40h0m0-20h0m0 40h0m0 30h0m0-50h0m0-30h0m0 50h0m10-40h0m0 40h0m0-20h0m0-10h0m0 30h0m0-30h0m0 50h0m10-40h0m0 10h0m0 30h0m0-40h0m0-20h0m0 20h0m0-20h0m0 50h0m10-10h0m0-20h0m0-10h0m0 30h0m0-40h0m0 10h0m10 20h0m0 10h0m0 10h0m0 0h0m0-30h0m0-10h0m0 40h0m0-10h0m10-40h0m0 30h0m0-40h0m0 20h0m0 30h0m0 20h0m0-50h0m0-50h0m0 60h0m10 20h0m0-50h0m0-10h0m0 30h0m0-20h0m0-20h0m0 40h0m10-30h0m0 80h0m0 0h0m0-70h0m0-10h0m0 10h0m0 30h0m0 20h0m10-50h0m0 90h0m0-30h0m0-40h0m0-10h0m0 60h0m0-40h0m0 20h0m10-30h0m0 50h0m0-40h0m0-30h0m0 50h0m0-40h0m0-10h0m0 30h0m10 10h0m0-10h0m0 30h0m0-10h0m0-20h0m0-20h0m0 90h0m10-60h0m0-20h0m0-30h0m0 40h0m0 20h0m0-40h0m0 10h0m0 60h0m0-60h0m10 30h0m0 20h0m0-30h0m0 60h0m0-80h0m0-20h0m0 70h0m0-40h0m0 10h0m10 30h0m0-20h0m0-30h0m0 50h0m0-70h0m0 30h0m0 20h0m0-20h0m10 30h0m0-20h0m0 10h0m0-30h0m0 30h0m0-20h0m10 40h0m0-40h0m0-20h0m0 50h0m0-20h0m0 0h0m0-40h0m10 40h0m0-20h0m0 50h0m0-80h0m0 50h0m0 10h0m0 40h0m0-70h0m0 50h0m10-60h0m0 40h0m0-60h0m0 70h0m0-20h0m0-10h0m0-20h0m0 80h0m10-70h0m0 30h0m0-10h0m0-40h0m0 30h0m0-30h0m0 40h0m0 20h0m0-30h0m10 0h0m0 40h0m0-10h0m0-20h0m0 30h0m0-40h0m0 30h0m10-30h0m0 40h0m0-50h0m0 30h0m0-40h0m0 20h0m0-50h0m10 30h0m0 30h0m0 10h0m0-30h0m0 40h0m0-10h0m0-30h0m0 50h0m10-30h0m0-10h0m0 40h0m0-70h0m0 50h0m0-60h0m0 50h0m0 10h0m10-10h0m0 30h0m0 10h0m0 0h0m0-60h0m0-30h0m0 60h0m0-40h0m10 30h0m0-60h0m0 30h0m0-10h0m0 60h0m0-80h0m0 90h0m0-80h0m10 10h0m0 20h0m0-10h0m0 50h0m0-30h0m0 40h0m10-20h0m0-40h0m0 30h0m0-10h0m0-10h0m0 60h0m0-70h0m0 40h0m0-10h0m10 40h0m0-20h0m0-50h0m0 0h0m0 30h0m0 20h0m0-30h0m10 50h0m0-40h0m0-40h0m0 50h0m0 10h0m0-40h0m0-40h0m0 30h0m0 30h0m10-40h0m0 90h0m0-30h0m0 30h0m0-70h0m0 50h0m0-20h0m0-20h0m10 30h0m0-40h0m0-20h0m0 10h0m0 30h0m0 10h0m10-20h0m0 30h0m0-40h0m0 20h0m0 40h0m0-30h0m0-30h0m10 20h0m0-10h0m0 50h0m0-20h0m0-20h0m0 40h0m10-60h0m0 20h0m0 30h0m0-40h0m0 10h0m0 30h0m0-30h0m0-50h0m10 50h0m0-20h0m0-30h0m0 20h0m0 20h0m0 40h0m0-10h0m10-10h0m0 0h0m0-50h0m0-30h0m0 60h0m0-60h0m10 0h0m0 20h0m0 10h0m0 10h0m0-40h0m0 40h0m0 60h0m0-30h0m0-20h0m10 30h0m0-20h0m0-30h0m0-10h0m0 50h0m0-10h0m0 30h0m10-10h0m0-20h0m0-10h0m0-10h0m0 40h0m0-30h0m0 30h0m10 20h0m0-40h0m0 30h0m0-10h0m0-30h0m0 40h0m0 10h0m0-70h0m10 30h0m0 20h0m0-40h0m0 60h0m0-40h0m0-40h0m0 50h0m0 40h0m10-70h0m0 50h0m0 10h0m0 10h0m0-90h0m0-20h0m0 70h0m0 50h0m0-40h0m0-20h0m10 40h0m0-90h0m0 70h0m0-50h0m0 30h0m0-30h0m0 80h0m0 10h0m0-110h0m10 30h0m0 70h0m0-40h0m0 30h0m0-60h0m0 10h0m0 10h0m0 20h0m10 30h0m0-50h0m0 10h0m0 10h0m0-40h0m0 50h0m0-60h0m10 60h0m0-30h0m0-20h0m0 30h0m0 10h0m0-40h0m0 40h0m10-20h0m0 20h0m0-50h0m0 60h0m0-20h0m0-10h0m0 60h0m10-30h0m0 10h0m0-60h0m0 30h0m0-30h0m0 50h0m0 20h0m0-50h0m0 30h0m10-50h0m0 50h0m0-20h0m0-20h0m0 50h0m0-40h0m0 30h0m10-10h0m0-20h0m0-20h0m0 50h0m0-30h0m0-20h0m0 30h0m10-20h0m0 10h0m0 40h0m0-20h0m0 20h0m0-10h0m0-10h0m0-50h0m10 50h0m0 20h0m0-30h0m0-10h0m0 30h0m0-40h0m10 30h0m0 10h0m0-30h0m0-30h0m0 0h0m0 70h0m0 10h0m0-30h0m0-50h0m10 50h0m0 40h0m0-60h0m0 20h0m0-20h0m0 20h0m0-40h0m10 50h0m0-40h0m0 10h0m0 20h0m0 10h0m0-30h0m0-40h0m10 40h0m0 60h0m0-30h0m0 10h0m0 20h0m0-50h0m0-50h0m0 40h0m0-40h0m10 40h0m0-40h0m0 60h0m0-50h0m0 60h0m0-40h0m0 30h0m10-20h0m0 50h0m0-20h0m0-40h0m0-20h0m0 30h0m0 20h0m0-20h0m10 30h0m0 10h0m0-40h0m0 20h0m0-40h0m0-10h0m0 60h0m0-30h0m10-20h0m0 30h0m0 0h0m0 20h0m0-40h0m0 20h0m10-30h0m0 40h0m0 50h0m0-70h0m0-10h0m0-30h0m0 110h0m0-10h0m0-50h0m10-30h0m0 90h0m0-80h0m0 30h0m0 50h0m0-60h0m0 10h0m0-10h0m10-40h0m0 40h0m0-20h0m0 30h0m0-20h0m0-50h0m10 30h0m0-40h0m0 70h0m0-50h0m0 80h0m0-50h0m0 30h0m0-70h0m10 30h0m0-20h0m0 40h0m0-50h0m0 100h0m0-70h0m0 40h0m10-40h0m0 20h0m0-10h0m0 40h0m0-70h0m0 10h0m10 40h0m0-20h0m0 40h0m0-20h0m0-30h0m0 10h0m0-30h0m10 50h0m0 20h0m0 10h0m0-50h0m0-30h0m0 50h0m0-10h0m10-20h0m0 10h0m0 20h0m0-10h0m0 20h0m0 20h0m10-40h0m0 60h0m0-40h0m0-10h0m0 30h0m0-50h0m0 20h0m10-20h0m0 10h0m0 30h0m0-50h0m0 40h0m0 10h0m0 10h0m0-60h0m0 20h0m10-40h0m0 30h0m0 20h0m0 20h0m0-40h0m0 20h0m0-30h0m10 40h0m0 40h0m0-80h0m0 50h0m0-40h0m0 20h0m0-20h0m10 30h0m0-50h0m0 40h0m0-10h0m0 30h0m0 10h0m0-40h0m0-20h0m10 20h0m0 20h0m0-10h0m0-30h0m0 20h0m0 20h0m10-30h0m0 50h0m0-50h0m0 20h0m0-20h0m0 30h0m0-70h0m0 90h0m0-30h0m10-10h0m0 30h0m0-50h0m0 10h0m0 20h0m0 20h0m10-20h0m0 10h0m0-30h0m0-40h0m0 70h0m0-30h0m0 10h0m10 20h0m0-60h0m0 50h0m0-30h0m0 10h0m0 30h0m0 10h0m10-50h0m0 30h0m0-10h0m0-20h0m0 60h0m0-10h0m0-30h0m10-30h0m0 50h0m0-10h0m0 50h0m0-30h0m0-50h0m0 10h0m0 0h0m0-30h0m10 0h0m0 70h0m0 20h0m0 20h0m0 0h0m0-60h0m0-10h0m0 10h0m10 10h0m0 10h0m0-40h0m0 50h0m0-50h0m0 30h0m0 0h0m0-70h0m0 100h0m10-20h0m0-40h0m0 30h0m0-30h0m0-30h0m0 20h0m0-10h0m0 40h0m10-50h0m0 40h0m0-30h0m0 90h0m0-80h0m0 30h0m0-60h0m0 100h0m0 10h0m10-50h0m0-20h0m0 30h0m0-10h0m0-20h0m0-30h0m0 30h0m0 70h0m0-100h0m10 30h0m0-10h0m0 50h0m0-30h0m0 20h0m0-40h0m0 70h0m0-30h0m10-30h0m0-20h0m0 50h0m0-20h0m0 30h0m0 20h0m0-10h0m0-50h0m0-40h0m10 30h0m0 70h0m0-50h0m0 20h0m0-40h0m0 0h0m0 40h0m0-20h0m0-10h0m10 40h0m0-20h0m0 10h0m0-10h0m0 10h0m10-20h0m0 40h0m0-20h0m0-40h0m0 50h0m0-10h0m0-40h0m0 20h0m10-40h0m0 60h0m0-10h0m0-40h0m0 30h0m0 0h0m10-30h0m0 40h0m0 10h0m0 30h0m0-80h0m0 30h0m0 20h0m10-30h0m0-10h0m0 50h0m0-60h0m0 0h0m0-30h0m10 30h0m0-10h0m0 30h0m0-10h0m0-20h0m0 70h0m0-30h0m10 30h0m0-50h0m0 20h0m0 40h0m0-30h0m0 10h0m0-50h0m10 40h0m0-20h0m0 40h0m0-20h0m0-20h0m0 10h0m10 10h0m0-40h0m0 70h0m0-50h0m0 20h0m0 20h0m0-60h0m0 30h0m10 0h0m0 20h0m0 20h0m0-30h0m0 20h0m0-60h0m10 40h0m0-30h0m0 70h0m0-50h0m0 30h0m0-10h0m0-20h0m0 40h0m0-10h0m10-20h0m0 10h0m0-30h0m0 20h0m0-30h0m0 10h0m10 60h0m0-40h0m0 30h0m0-40h0m0 50h0m0-80h0m0 70h0m0-50h0m0 30h0m10-60h0m0 70h0m0-40h0m0 20h0m0 30h0m0-60h0m0 10h0m10 30h0m0-20h0m0 40h0m0-30h0m0-20h0m0 10h0m0 20h0m10-30h0m0 40h0m0-30h0m0 10h0m0 40h0m0-60h0m10 90h0m0-20h0m0-10h0m0-30h0m0-20h0m0 50h0m0-30h0m0 30h0m0-30h0m10-20h0m0-10h0m0 30h0m0-10h0m0 40h0m0-40h0m10 20h0m0 10h0m0-20h0m0-40h0m0 20h0m0 20h0m0-30h0m10 30h0m0 0h0m0-40h0m0 20h0m0 10h0m0 10h0m10-20h0m0 20h0m0-30h0m0 30h0m0-20h0m0 40h0m0-10h0m0-40h0m10 20h0m0 20h0m0-10h0m0-30h0m0 50h0m0-20h0m0-20h0m10 40h0m0-60h0m0 40h0m0-40h0m0 30h0m0 40h0m0-80h0m0 20h0m10 60h0m0-40h0m0 20h0m0 40h0m0-70h0m0 40h0m0-70h0m0 50h0m10-10h0m0 70h0m0-60h0m0-20h0m0-20h0m0 50h0m10 10h0m0-40h0m0-20h0m0 50h0m0-20h0m0 20h0m0-40h0m10 40h0m0-30h0m0-20h0m0 30h0m0 10h0m0-40h0m0 10h0m0-10h0m0 50h0m10-10h0m0-30h0m0 20h0m0 10h0m0-40h0m0 30h0m10 30h0m0-60h0m0 30h0m0 0h0m0 20h0m0-10h0m0-50h0m10 40h0m0-30h0m0 40h0m0-30h0m0 20h0m0-50h0m0 70h0m0-10h0m0-30h0m10 20h0m0 0h0m0-50h0m0-20h0m0 30h0m0 10h0m10 0h0m0 60h0m0-90h0m0 20h0m0-10h0m0 0h0m0 60h0m0-10h0m0-40h0m10 40h0m0-10h0m0-20h0m0 50h0m0 20h0m0-50h0m0-10h0m0 30h0m0 30h0m10-40h0m0-40h0m0 40h0m0 70h0m0-70h0m0 50h0m0 10h0m0-50h0m0-70h0m10 20h0m0 110h0m0-70h0m0 30h0m0 20h0m0-80h0m0 40h0m0-20h0m10-20h0m0 60h0m0-30h0m0 30h0m0 0h0m0-20h0m0-20h0m0-30h0m10 10h0m0 50h0m0-40h0m0 50h0m0-70h0m0 40h0m0-20h0m10 10h0m0 30h0m0-20h0m0 10h0m0-40h0m0 20h0m0 10h0m10 50h0m0-70h0m0-10h0m0 40h0m0 0h0m0-20h0m10 60h0m0-30h0m0-30h0m0 70h0m0-10h0m0-80h0m0 20h0m0-10h0m10 10h0m0 50h0m0-30h0m0-40h0m0-20h0m0 90h0m0-40h0m10-60h0m0 70h0m0-60h0m0 30h0m0 30h0m0-20h0m0 40h0m0-30h0m10-20h0m0 30h0m0 0h0m0-30h0m0-20h0m0 60h0m0-50h0m0 0h0m10 40h0m0-30h0m0-10h0m0 50h0m0-30h0m0 10h0m10 20h0m0-60h0m0 20h0m0 30h0m0-10h0m0-70h0m0 40h0m0-20h0m0 20h0m10 40h0m0-30h0m0-20h0m0 30h0m0 20h0m0-30h0m10 20h0m0-10h0m0-20h0m0 50h0m0-40h0m0 60h0m0-20h0m10-20h0m0-20h0m0-30h0m0 60h0m0-10h0m0-30h0m0 60h0m0-20h0m0-20h0m10-10h0m0 50h0m0-10h0m0-20h0m0 10h0m0 20h0m0-50h0m0-30h0m10 0h0m0 50h0m0-10h0m0-20h0m0 10h0m0 20h0m0 20h0m0-50h0m10 30h0m0-20h0m0-20h0m0 30h0m0 30h0m0-30h0m10-30h0m0 60h0m0-50h0m0 20h0m0 10h0m0 20h0m0-70h0m0 40h0m0 50h0m0-50h0m10 30h0m0-50h0m0 20h0m0 20h0m0 20h0m0-10h0m0-30h0m0 0h0m10 40h0m0-80h0m0 20h0m0 60h0m0 0h0m0-80h0m0 20h0m0 30h0m10 0h0m0-10h0m0-60h0m0 40h0m0-40h0m0 10h0m0 10h0m10-10h0m0 60h0m0-70h0m0 30h0m0 20h0m0 10h0m10 20h0m0 30h0m0-60h0m0 30h0m0-50h0m0 10h0m0 30h0m0 20h0m10 0h0m0-30h0m0 20h0m0 10h0m0-10h0m10-20h0m0 20h0m0-40h0m0 30h0m0-10h0m0 30h0m0-40h0m0-30h0m0 20h0m10 50h0m0-70h0m0 50h0m0 0h0m0-50h0m0 20h0m0 70h0m0-50h0m10-40h0m0 30h0m0 40h0m0-20h0m0 40h0m0-30h0m0-40h0m0 60h0m0-50h0m10 20h0m0-20h0m0-30h0m0 60h0m0-10h0m10 0h0m0 30h0m0-40h0m0 30h0m0-40h0m0 50h0m0-30h0m0-30h0m10 10h0m0 40h0m0 10h0m0-20h0m0 40h0m0-70h0m0 10h0m0-50h0m0 90h0m10-60h0m0-10h0m0 50h0m0-60h0m0 110h0m0-20h0m0 10h0m0 10h0m0-80h0m0-20h0m10 50h0m0-30h0m0-20h0m0 90h0m0-80h0m0 60h0m0-30h0m10-10h0m0-40h0m0 80h0m0-10h0m0-20h0m0-30h0m0-20h0m0 60h0m0-20h0m10 30h0m0-40h0m0-20h0m0 50h0m0-30h0m0 10h0m0-30h0m0 90h0m0-40h0m10-40h0m0-40h0m0 70h0m0 20h0m0-40h0m0 30h0m10-50h0m0 30h0m0 10h0m0-40h0m0 70h0m0-60h0m10 10h0m0-20h0m0 60h0m0 0h0m0-20h0m0-20h0m10 30h0m0-30h0m0 20h0m0 20h0m0 40h0m0-80h0m0 80h0m0-40h0m10-60h0m0 20h0m0 40h0m0-60h0m0 10h0m0 30h0m0-20h0m0 50h0m0-40h0m10 20h0m0-20h0m0-50h0m0 90h0m0-10h0m0-30h0m0 10h0m10-30h0m0 20h0m0-10h0m0 50h0m0-60h0m0-20h0m0 70h0m0-20h0m0-50h0m0 50h0m10-20h0m0-20h0m0 50h0m0 10h0m0-30h0m0 40h0m0-60h0m0 20h0m0 20h0m10-20h0m0-20h0m0 70h0m0-30h0m0 10h0m0-50h0m0 20h0m10-30h0m0 60h0m0 10h0m0-50h0m0 30h0m0-40h0m0 30h0m10-20h0m0 10h0m0-50h0m0 90h0m0-20h0m0-10h0m0-10h0m0-40h0m10 70h0m0-20h0m0-40h0m0 50h0m0-60h0m0 30h0m0-30h0m0-20h0m10 10h0m0 10h0m0 20h0m0-30h0m0 90h0m0 20h0m0-60h0m10 70h0m0-100h0m0-20h0m0 30h0m0 20h0m0 30h0m0-20h0m0 20h0m0-10h0m10-40h0m0 10h0m0 50h0m0-10h0m0-10h0m0-30h0m0 20h0m0-60h0m10 70h0m0-50h0m0 20h0m0-40h0m0 80h0m0-50h0m0 30h0m10-10h0m0 50h0m0-50h0m0-20h0m0 20h0m0 20h0m10-40h0m0 10h0m0 30h0m0-40h0m0 60h0m0-50h0m0 0h0m0 20h0m10 0h0m0-20h0m0-40h0m0 60h0m0 20h0m0-20h0m10 10h0m0 10h0m0-70h0m0-20h0m0 50h0m0-20h0m10-10h0m0-10h0m0 70h0m0-80h0m0 30h0m0 10h0m0 60h0m0-20h0m0-20h0m10-20h0m0 20h0m0 20h0m0-10h0m0-20h0m10 20h0m0-30h0m0 10h0m0 20h0m0-30h0m0 20h0m0 0h0m10 20h0m0-10h0m0-60h0m0 70h0m0-20h0m0 20h0m10-40h0m0 50h0m0-20h0m0 20h0m0-70h0m0 30h0m0 40h0m0 10h0m10-60h0m0-20h0m0 50h0m0 50h0m0-60h0m0 40h0m0-70h0m0 60h0m0-40h0m10 10h0m0 70h0m0-60h0m0-40h0m0 60h0m0-40h0m0 20h0m10-10h0m0-30h0m0 50h0m0-40h0m0 20h0m0-60h0m0 100h0m10-70h0m0 30h0m0 0h0m0-40h0m0 50h0m0 20h0m0-30h0m0 30h0m10-40h0m0 90h0m0-60h0m0 20h0m0-80h0m0 40h0m10 10h0m0-40h0m0 60h0m0 10h0m0-30h0m0-30h0m0-10h0m0 30h0m10 50h0m0-20h0m0-30h0m0-40h0m0 30h0m0-10h0m0 20h0m10 20h0m0-30h0m0-20h0m0 50h0m0-10h0m0-30h0m0 30h0m10-40h0m0 20h0m0-20h0m0 20h0m0 20h0m0-40h0m0 30h0m0 30h0m0-60h0m10 40h0m0-20h0m0 30h0m0-50h0m0 60h0m0-50h0m10 10h0m0 20h0m0 0h0m0 30h0m0-80h0m0 60h0m0 30h0m0-20h0m0-50h0m10 10h0m0 20h0m0-60h0m0 50h0m0-50h0m0 40h0m0 50h0m0-60h0m0 10h0m10 30h0m0-50h0m0-10h0m0 30h0m0 20h0m0 10h0m0-40h0m10-40h0m0 80h0m0-60h0m0 70h0m0-50h0m0 10h0m0-40h0m0 70h0m0 10h0m10-20h0m0 30h0m0-40h0m0-10h0m0 20h0m0 10h0m10-10h0m0-70h0m0 30h0m0-30h0m0 10h0m0 40h0m0 40h0m10-80h0m0 10h0m0 0h0m0 20h0m0 40h0m0-40h0m0 60h0m10-40h0m0 30h0m0-10h0m0-30h0m0 20h0m0-40h0m0 10h0m0 40h0m10-20h0m0-20h0m0 30h0m0 10h0m0-50h0m0 70h0m0-50h0m0 20h0m10 20h0m0-60h0m0 30h0m0-30h0m0 40h0m0 30h0m0-30h0m10-20h0m0-40h0m0 50h0m0 10h0m0 30h0m0-10h0m0-70h0m0 80h0m10-40h0m0 50h0m0-60h0m0 20h0m0 10h0m0-60h0m0 10h0m0 70h0m0-30h0m10-30h0m0 80h0m0-60h0m0 30h0m0 10h0m0-60h0m0 20h0m0 30h0m0-60h0m10 50h0m0-80h0m0 100h0m0-70h0m0 20h0m0-10h0m0 50h0m0 10h0m0-50h0m10 20h0m0 0h0m0-30h0m0 20h0m0 30h0m0 10h0m0-30h0m10-40h0m0 20h0m0 50h0m0-30h0m0-30h0m0 20h0m0-10h0m0 70h0m0-90h0m10 80h0m0-100h0m0 10h0m0 20h0m0 50h0m0-10h0m0-20h0m0 20h0m10 0h0m0 30h0m0-50h0m0-20h0m0 30h0m0 10h0m0-50h0m0 10h0m10 20h0m0 10h0m0-20h0m0 40h0m0-40h0m0 30h0m0-10h0m10-30h0m0 10h0m0 20h0m0 20h0m0-20h0m0-20h0m0 50h0m10-40h0m0-20h0m0 50h0m0 10h0m0-60h0m0 30h0m0 50h0m0-70h0m10 20h0m0 20h0m0-40h0m0-10h0m0 40h0m0-10h0m0-40h0m10 30h0m0 20h0m0 10h0m0-50h0m0 20h0m0 10h0m0 10h0m10 0h0m0-40h0m0 60h0m0-60h0m0 30h0m0 20h0m0 20h0m10-60h0m0-20h0m0 80h0m0-40h0m0 30h0m0-60h0m0-10h0m0 30h0m0 50h0m0-70h0m10 70h0m0-110h0m0 100h0m0-40h0m0-40h0m0 40h0m0-30h0m0-20h0m10 40h0m0-20h0m0-20h0m0 40h0m0 0h0m0 20h0m10-10h0m0 20h0m0 30h0m0-60h0m0 30h0m10-10h0m0-10h0m0 20h0m0-50h0m0 60h0m0-40h0m0 20h0m10 10h0m0-30h0m0-20h0m0 80h0m0-50h0m0 10h0m0 20h0m10-40h0m0 10h0m0 20h0m0-50h0m0 30h0m0 20h0m0 10h0m10-50h0m0 30h0m0-10h0m0-40h0m0 30h0m0 10h0m0 20h0m10-20h0m0-20h0m0 40h0m0-30h0m0 10h0m0 30h0m0 0h0m0-70h0m10 40h0m0 20h0m0-40h0m0 20h0m0 20h0m0-60h0m10 40h0m0-60h0m0 70h0m0-40h0m0 20h0m0-20h0m10-20h0m0 10h0m0 40h0m0-10h0m0-20h0m0-20h0m0 30h0m0 40h0m0-20h0m10 10h0m0-30h0m0 10h0m0 10h0m0 20h0m0 10h0m0-60h0m10 0h0m0 40h0m0-50h0m0 30h0m0 30h0m0-60h0m0 80h0m0-40h0m10-20h0m0 10h0m0 40h0m0-20h0m0-30h0m0 60h0m0-40h0m10 40h0m0-50h0m0 10h0m0-30h0m0 10h0m0 40h0m0-30h0m10 20h0m0-30h0m0 40h0m0 10h0m0-30h0m0-30h0m0 60h0m0-10h0m10-50h0m0 20h0m0 0h0m0-30h0m0 40h0m0 10h0m0-40h0m10 50h0m0-30h0m0 20h0m0-40h0m0 40h0m0-20h0m10 40h0m0 0h0m0-80h0m0 30h0m0-10h0m0 40h0m0 20h0m0-40h0m0 30h0m10-10h0m0-30h0m0-30h0m0 80h0m0 20h0m0-50h0m10 30h0m0-40h0m0 30h0m0-20h0m0-30h0m0 90h0m0-50h0m0-20h0m10 10h0m0 50h0m0 20h0m0-50h0m0 20h0m0-30h0m0 10h0m0-30h0m10-20h0m0 30h0m0 10h0m0 20h0m0-50h0m0-20h0m0 30h0m0 30h0m10-10h0m0-20h0m0 10h0m0 40h0m0-30h0m0-70h0m0 30h0m0 20h0m0 20h0m0-70h0m0 30h0m10 100h0m0-80h0m0-50h0m0 110h0m0-100h0m0 30h0m0 60h0m0-40h0m0-30h0m0 10h0m10 60h0m0-20h0m0-10h0m0-30h0m0 20h0m0-20h0m0-20h0m0 80h0m10-20h0m0-20h0m0-40h0m0 20h0m0 40h0m0-20h0m0-20h0m10 0h0m0 40h0m0-10h0m0-30h0m0 20h0m0 20h0m0-10h0m0 20h0m0-40h0m10 10h0m0 10h0m0-30h0m0 60h0m0-30h0m0 20h0m10-40h0m0-10h0m0 30h0m0-40h0m0 30h0m0 60h0m0-30h0m0-30h0m10-10h0m0 20h0m0-40h0m0 40h0m0-10h0m0-20h0m0 70h0m0-80h0m0-10h0m0 60h0m10-30h0m0-50h0m0 40h0m0 60h0m0-40h0m0-10h0m0 30h0m10-40h0m0 40h0m0 30h0m0-70h0m0 40h0m0-10h0m0-20h0m10 40h0m0-30h0m0 20h0m0-30h0m0 20h0m0 0h0m0-40h0m0 70h0m10-60h0m0 40h0m0 30h0m0-30h0m0 10h0m0-60h0m0 40h0m10 30h0m0 0h0m0-60h0m0-20h0m0 70h0m0-30h0m0 20h0m0-50h0m0 0h0m0 50h0m10 20h0m0-20h0m0-30h0m0-20h0m0 40h0m0-10h0m0 40h0m10-50h0m0 40h0m0-10h0m0-40h0m0 10h0m0 20h0m0 20h0m10 0h0m0-40h0m0 40h0m0-40h0m0 40h0m0-70h0m0 40h0m0 10h0m10-20h0m0 40h0m0-40h0m0 50h0m0-30h0m0-30h0m0 20h0m0 30h0m0-30h0m10 30h0m0-70h0m0 20h0m0 50h0m0-70h0m0 40h0m0-30h0m0 80h0m0-60h0m10-30h0m0 0h0m0 40h0m0-20h0m0-40h0m0 20h0m0 20h0m10 0h0m0-30h0m0 90h0m0-100h0m0 70h0m0-40h0m0 50h0m10-40h0m0 10h0m0 70h0m0-60h0m0 30h0m0 0h0m0-50h0m0 0h0m10 50h0m0-20h0m0 40h0m0-70h0m0-30h0m0 110h0m0-40h0m0-70h0m0 90h0m10-40h0m0-10h0m0 40h0m0 0h0m0-50h0m0-20h0m0 10h0m0 50h0m10-30h0m0-30h0m0 30h0m0 30h0m0-70h0m0 10h0m0 20h0m10-20h0m0-10h0m0 50h0m0-50h0m0 90h0m0-20h0m10-50h0m0 70h0m0-30h0m0 40h0m0-30h0m0-40h0m0 20h0m0-20h0m10 30h0m0 10h0m0-30h0m0-30h0m0 70h0m0-20h0m10-40h0m0 50h0m0 30h0m0-20h0m0-80h0m0 30h0m0 10h0m0 40h0m0-20h0m0-70h0m0 40h0m10 90h0m0-50h0m0-60h0m0 40h0m0 40h0m0 30h0m0-110h0m0 70h0m10-30h0m0 40h0m0 30h0m0-40h0m0-40h0m0 30h0m0-20h0m10-40h0m0 70h0m0-30h0m0-20h0m0 10h0m0 20h0m0-30h0m0 40h0m0 0h0m10 30h0m0-70h0m0-30h0m0 10h0m0 90h0m0-20h0m0-50h0m0 20h0m0 40h0m0-30h0m10-60h0m0 60h0m0-70h0m0 50h0m0-30h0m0 50h0m0-30h0m0 60h0m10-50h0m0 50h0m0-40h0m0-10h0m0 30h0m0 20h0m0-10h0m0-30h0m10 20h0m0-20h0m0-20h0m0 20h0m0 30h0m0-40h0m0 40h0m10-10h0m0-30h0m0-30h0m0 10h0m0 40h0m0 20h0m0-20h0m0-30h0m10 10h0m0 30h0m0-60h0m0 40h0m0-30h0m0 40h0m0 20h0m0-30h0m10 40h0m0-30h0m0-20h0m0 30h0m0-20h0m0 50h0m0-30h0m10 0h0m0-40h0m0 60h0m0-70h0m0 60h0m0-20h0m0-10h0m10 50h0m0-20h0m0-10h0m0-40h0m0 70h0m0-90h0m10 70h0m0-20h0m0-10h0m0-40h0m0 30h0m0 20h0m0-10h0m10 80h0m0-110h0m0 90h0m0 0h0m0-100h0m0 110h0m0-100h0m10 100h0m0-120h0m0 20h0m0 30h0m0 10h0m0-70h0m0 30h0m0 40h0m10-40h0m0 20h0m0 30h0m0-20h0m0 20h0m0-10h0m0-20h0m10-10h0m0 20h0m0 10h0m0 20h0m0 20h0m0-60h0m0 40h0m0-20h0m10-50h0m0 20h0m0 30h0m0-30h0m0 20h0m0-10h0m0 40h0m0-90h0m0 90h0m10 30h0m0-90h0m0 100h0m0-60h0m0-20h0m0-20h0m0 60h0m0 10h0m0-40h0m10 20h0m0 20h0m0-50h0m0 30h0m0 10h0m0-60h0m0 50h0m0-30h0m0 10h0m10 40h0m0 0h0m0-50h0m0 40h0m0-40h0m0 20h0m0 20h0m10-10h0m0-10h0m0 0h0m0-30h0m0-10h0m0 40h0m0-20h0m10 20h0m0-20h0m0 30h0m0-20h0m0 40h0m10 0h0m0-80h0m0 40h0m0-30h0m0 50h0m0-10h0m0-30h0m10 20h0m0-10h0m0 30h0m0-40h0m0 50h0m0-60h0m0 40h0m0-40h0m10 20h0m0-10h0m0 40h0m0-10h0m0-20h0m0 40h0m0-20h0m0-60h0m10 70h0m0-30h0m0 20h0m0 30h0m0-20h0m0-20h0m0 10h0m10 10h0m0-60h0m0 70h0m0-40h0m0 20h0m0 0h0m0 40h0m10-60h0m0-20h0m0 30h0m0 10h0m0 30h0m0-50h0m0 40h0m0-20h0m10 50h0m0-60h0m0 20h0m0 40h0m0-20h0m0-50h0m0-10h0m10 40h0m0-70h0m0 20h0m0-10h0m0 30h0m0 50h0m0-80h0m10-20h0m0 90h0m0-70h0m0-20h0m0 20h0m0 40h0m0-30h0m0 80h0m10-20h0m0-20h0m0 30h0m0-60h0m0 30h0m0 20h0m0-60h0m0-20h0m10 30h0m0 20h0m0 20h0m0-50h0m0 80h0m0-40h0m0 10h0m0-30h0m10 10h0m0 20h0m0 20h0m0-30h0m0-20h0m0 30h0m0-20h0m0 40h0m10-40h0m0 50h0m0-40h0m0 20h0m0-10h0m0-20h0m0 50h0m10-70h0m0-10h0m0 100h0m0-40h0m0 30h0m0 20h0m0-40h0m10-20h0m0 40h0m0-100h0m0 80h0m0 20h0m0-10h0m0-30h0m0 20h0m10-30h0m0-50h0m0 20h0m0 20h0m0 70h0m0-70h0m0 30h0m0-60h0m0 20h0m0-30h0m10 40h0m0 20h0m0 20h0m0-70h0m0 20h0m0 30h0m0-50h0m0-30h0m0 50h0m0 30h0m10-20h0m0-20h0m0 50h0m0-20h0m0 30h0m0-60h0m0 70h0m0-30h0m10-20h0m0-10h0m0 10h0m0-50h0m0 70h0m0-30h0m0 30h0m10 20h0m0-30h0m0-50h0m0 60h0m0-30h0m0 40h0m0 20h0m0-10h0m0-10h0m0-40h0m10 20h0m0 10h0m0-40h0m0 20h0m0 20h0m0-30h0m0 40h0m10-60h0m0 30h0m0-10h0m0 40h0m0-10h0m0 0h0m0-10h0m10-50h0m0 40h0m0 40h0m0-60h0m0 40h0m0 20h0m0-40h0m10 20h0m0 10h0m0 20h0m0-30h0m0 40h0m0-80h0m0 40h0m0-20h0m0-20h0m0 40h0m10-30h0m0 10h0m0 30h0m0 20h0m0-80h0m0 20h0m0 80h0m0-60h0m10 30h0m0-70h0m0 50h0m0-20h0m0 40h0m0-60h0m0 10h0m0 30h0m10-80h0m0 80h0m0-20h0m0-20h0m0-20h0m0 70h0m0-30h0m0 20h0m0 20h0m10 0h0m0-30h0m0-40h0m0 20h0m0 30h0m0-30h0m0 30h0m0 40h0m10-70h0m0 10h0m0 10h0m0 20h0m0-50h0m0 20h0m0 50h0m10-70h0m0-10h0m0 100h0m0-120h0m10 20h0m0 20h0m0-10h0m0-20h0m0-10h0m0 90h0m0-50h0m10 10h0m0 30h0m0-50h0m0-20h0m0-10h0m0 80h0m0-50h0m0 10h0m0 50h0m10-20h0m0-20h0m0 10h0m0-30h0m0 60h0m0-40h0m0 20h0m10-60h0m0 90h0m0-60h0m0 50h0m0-20h0m0-20h0m0-50h0m0 90h0m10-40h0m0-10h0m0 40h0m0-30h0m0 50h0m0-40h0m0-20h0m10 60h0m0-80h0m0 50h0m0-10h0m0-20h0m0 80h0m0-60h0m0-30h0m0-30h0m0 60h0m10 30h0m0-50h0m0 10h0m0 20h0m0-50h0m0 30h0m0 20h0m0-30h0m10 20h0m0 40h0m0-60h0m0 40h0m0 0h0m0 10h0m0-70h0m0-10h0m0 80h0m10-50h0m0-10h0m0 60h0m0-10h0m0 20h0m0-30h0m0-70h0m10 60h0m0 30h0m0-50h0m0 80h0m0-40h0m0 20h0m0-60h0m0-40h0m0 90h0m10-20h0m0 10h0m0-60h0m0 70h0m0-40h0m0 60h0m0-80h0m0 10h0m0 30h0m10 20h0m0-30h0m0-30h0m0 80h0m0-40h0m0-30h0m0 40h0m0-20h0m10 20h0m0 20h0m0-70h0m0 40h0m0-20h0m0-10h0m0 40h0m0-60h0m10 20h0m0 50h0m0-80h0m0 60h0m0-50h0m0 40h0m0 10h0m0-60h0m0 30h0m10 0h0m0 50h0m0-20h0m0 10h0m0-30h0m0 20h0m0-40h0m10-10h0m0 60h0m0 10h0m0 20h0m0-10h0m0-60h0m0 20h0m0-50h0m0 50h0m0-20h0m10 20h0m0-10h0m0-50h0m0 40h0m0 50h0m0-30h0m0 20h0m0-70h0m10 90h0m0-60h0m0 20h0m0-30h0m0 50h0m0-60h0m0 50h0m0-20h0m10 30h0m0-40h0m0 30h0m0 0h0m0 20h0m0-60h0m0 50h0m0-80h0m0 30h0m10 50h0m0-40h0m0-10h0m0 30h0m0 20h0m0-50h0m0 30h0m10-50h0m0 70h0m0-40h0m0-20h0m0 60h0m0-30h0m0 10h0m0-30h0m0 60h0m0-20h0m10 10h0m0-60h0m0-10h0m0 60h0m0-20h0m0-40h0m0 50h0m0 20h0m10 20h0m0-60h0m0 20h0m0 50h0m0-30h0m0-20h0m0 10h0m0-40h0m0 20h0m0 60h0m10-90h0m0 10h0m0 50h0m0-90h0m0 110h0m0-20h0m0-50h0m0 30h0m10-20h0m0 50h0m0-10h0m0-40h0m0 20h0m0-10h0m0 40h0m0-30h0m10 10h0m0 20h0m0-30h0m0-40h0m0 60h0m0-40h0m0 40h0m0-30h0m10 20h0m0-40h0m0-10h0m0 40h0m0-40h0m10-20h0m0 10h0m0-20h0m0 90h0m0-70h0m0 60h0m0-40h0m10 70h0m0-30h0m0-10h0m0 10h0m0-20h0m10-10h0m0 30h0m0-40h0m0-30h0m0 80h0m0 20h0m0-60h0m10 0h0m0 20h0m0 0h0m0-40h0m0 60h0m0-20h0m10 20h0m0-10h0m0-60h0m0 50h0m0-20h0m0 20h0m0-10h0m0-30h0m0 60h0m10-20h0m0 30h0m0-50h0m0 20h0m0-30h0m0 60h0m0-10h0m0-40h0m10 10h0m0 10h0m0 20h0m0-60h0m0 60h0m0-40h0m0 20h0m0 20h0m10-40h0m0 40h0m0-50h0m0 40h0m0-60h0m0 80h0m10-20h0m0-20h0m0 40h0m0-50h0m0 30h0m0-70h0m0 30h0m0 50h0m0 40h0m0-100h0m10 30h0m0 20h0m0 30h0m0-70h0m0 50h0m0-30h0m0 60h0m0-40h0m10 30h0m0-50h0m0-10h0m0 50h0m0-30h0m0-30h0m0 40h0m10 10h0m0-30h0m0-10h0m0 20h0m0-20h0m0 40h0m10 0h0m0-30h0m0 20h0m0-50h0m0 20h0m0 50h0m0-50h0m0 50h0m0-20h0m10-20h0m0 30h0m0-20h0m0-30h0m0 40h0m0-30h0m0 50h0m10-10h0m0-30h0m0 30h0m0-50h0m0 30h0m0 40h0m0-70h0m10 40h0m0-40h0m0 60h0m0-10h0m0-50h0m0 10h0m0 40h0m0-20h0m0 20h0m10-40h0m0 10h0m0-40h0m0 30h0m0-20h0m0 40h0m0 40h0m10-20h0m0 10h0m0-30h0m0-20h0m0 30h0m0 20h0m10-40h0m0-60h0m0 50h0m0 30h0m0-50h0m0-20h0m0 30h0m10-30h0m0 20h0m0-20h0m0-10h0m0 40h0m0 20h0m0 30h0m10-50h0m0 30h0m0-40h0m0 60h0m0-50h0m0 40h0m0-10h0m10-10h0m0 40h0m0-50h0m0 30h0m0-10h0m0 30h0m10-70h0m0 70h0m0-80h0m0 50h0m0 30h0m0-20h0m0-30h0m0 30h0m10-20h0m0-10h0m0 30h0m0-60h0m0 40h0m0 40h0m0-50h0"/><path transform="scale(.1)" fill="none" stroke="#ffa500" stroke-width="36" stroke-linecap="round"  d="M1635 655h0m0 0h0m0 30h0m0-20h0m0-10h0m10 10h0m50 260h0m130-270h0m0 20h0m10-40h0m10 10h0m10 260h0m210 2070h0m80-1960h0m80-330h0m0-20h0m10 0h0m0 10h0m10 0h0m150 10h0m0 0h0m0-50h0m0 40h0m0-50h0m10 50h0m70 0h0m0 10h0m190 380h0m120-440h0m10 10h0m0 50h0m0-100h0m0 60h0m10 10h0m0 0h0m70 20h0m0-10h0m10 0h0m0 10h0m80 10h0m10-20h0m10 20h0m0-10h0m80 10h0m0-30h0m0-10h0m0 10h0m0 30h0m10-20h0m0-40h0m0 60h0m10 160h0m120 0h0m70-160h0m90 0h0m260-40h0m10 10h0m70 840h0m140-820h0m10 10h0m0-10h0m0 0h0m0 10h0m0-10h0m250 10h0m0 0h0m140 160h0m160-190h0m0 20h0m0-10h0m0-30h0m280 20h0m0-10h0m10 40h0m0-40h0m0 10h0m270 30h0m10 0h0m0 0h0m90-20h0m0 0h0m0-20h0m10 10h0m0 0h0m0 10h0m110 250h0m60-230h0m0-10h0m0-20h0m60 20h0m0-10h0m40 20h0m0 0h0m10 0h0m290-10h0m0-10h0m0-10h0m0 0h0m10 0h0m0 0h0m0 0h0m100 30h0m0-20h0m0 20h0m0-20h0m10 20h0m130 0h0m540-10h0m150 10h0m10 0h0m110-40h0m10 30h0m0-30h0m70 670h0m30-470h0m280-160h0m0-50h0m10 10h0m100 200h0m50-160h0m0-20h0m0-30h0m300 400h0m80-190h0m10-160h0m0 0h0m0-40h0m0 20h0m0-30h0m10 50h0m90 0h0m0-10h0m10 10h0m0 1040h0m170-1040h0m0-20h0m0 0h0m0-20h0m10 10h0m210 30h0m10 0h0m30 310h0m440-310h0m0-20h0m80 20h0m0-30h0m0 20h0m0-20h0m10 10h0m0 20h0m0 0h0m110 160h0m110-170h0m10 10h0m180 160h0m140-160h0m0-30h0m0-10h0m10 40h0m100 0h0m0 0h0m10 0h0m160 260h0m0-260h0m10-20h0m0-30h0m10 0h0m100 20h0m0-30h0m0 0h0m0-10h0m10 50h0m0-40h0m230 310h0m10-90h0m10 10h0m20-210h0m0 20h0m0-20h0m0-20h0m10 60h0m0-50h0m160 210h0m130-170h0m10 10h0m100 160h0m150-160h0m0-30h0m30 190h0m210-160h0m10 0h0m90 160h0m150-180h0m0-20h0m10 40h0m70 0h0m0-10h0m10 10h0m50 160h0m20 370h0m20-340h0m110-200h0m0-30h0m0 20h0m0-40h0m10 20h0m0-20h0m0 20h0m0 40h0m190-20h0m0 0h0m0 0h0m10 20h0m0-10h0m0 10h0m0 0h0m0-20h0m80 20h0m0-30h0m0 30h0m0-30h0m10 20h0m100 170h0m210-180h0m0 0h0m0-10h0m10 0h0m40 10h0m10 10h0m0 10h0m0-10h0m140 450h0m30-450h0m0 170h0m0-190h0m10 20h0m0-10h0m160 10h0m10 10h0m0-10h0m50 170h0m160-170h0m0-30h0m0 40h0m0-40h0m270 40h0m0 0h0m0-30h0m10 20h0m180 0h0m0-10h0m10 10h0m0 0h0m10 390h0"/><path d="M105.5 123.8H1361" stroke="#008000" stroke-width="2.08"/><path d="M162 320.8V35.5" stroke="#800080" stroke-width="2.08" stroke-dasharray="2.08 3.43"/><path d="M1303 320.8V35.5" stroke="#800080" stroke-width="2.08" stroke-dasharray="2.08 3.43"/></g><text x="732.6" y="312.1" font-size="14.1" text-anchor="middle" textLength="33.81" lengthAdjust="spacing" >6935</text><rect x="105.5" y="35.5" width="1380.0" height="286.0" fill="none" stroke="#000" stroke-width="1.1"/><path d="M100.6 54.5h4.9" stroke="#000" stroke-width="1.1"/><text x="95.3" y="60.2" font-size="14.1" text-anchor="end" textLength="20.56" lengthAdjust="spacing" >9.2</text><path d="M100.6 113.5h4.9" stroke="#000" stroke-width="1.1"/><text x="95.3" y="119.7" font-size="14.1" text-anchor="end" textLength="20.56" lengthAdjust="spacing" >9.0</text><path d="M100.6 173.5h4.9" stroke="#000" stroke-width="1.1"/><text x="95.3" y="179.2" font-size="14.1" text-anchor="end" textLength="20.56" lengthAdjust="spacing" >8.8</text><path d="M100.6 232.5h4.9" stroke="#000" stroke-width="1.1"/><text x="95.3" y="238.7" font-size="14.1" text-anchor="end" textLength="20.56" lengthAdjust="spacing" >8.6</text><path d="M100.6 292.5h4.9" stroke="#000" stroke-width="1.1"/><text x="95.3" y="298.2" font-size="14.1" text-anchor="end" textLength="20.56" lengthAdjust="spacing" >8.4</text><path d="M162.5 321.5v4.9" stroke="#000" stroke-width="1.1"/><text x="162.3" y="341.6" font-size="14.1" text-anchor="middle" textLength="7.33" lengthAdjust="spacing" >0</text><path d="M328.5 321.5v4.9" stroke="#000" stroke-width="1.1"/><text x="328.3" y="341.6" font-size="14.1" text-anchor="middle" textLength="33.81" lengthAdjust="spacing" >2000</text><path d="M494.5 321.5v4.9" stroke="#000" stroke-width="1.1"/><text x="494.3" y="341.6" font-size="14.1" text-anchor="middle" textLength="33.81" lengthAdjust="spacing" >4000</text><path d="M660.5 321.5v4.9" stroke="#000" stroke-width="1.1"/><text x="660.3" y="341.6" font-size="14.1" text-anchor="middle" textLength="33.81" lengthAdjust="spacing" >6000</text><path d="M826.5 321.5v4.9" stroke="#000" stroke-width="1.1"/><text x="826.3" y="341.6" font-size="14.1" text-anchor="middle" textLength="33.81" lengthAdjust="spacing" >8000</text><path d="M992.5 321.5v4.9" stroke="#000" stroke-width="1.1"/><text x="992.3" y="341.6" font-size="14.1" text-anchor="middle" textLength="42.64" lengthAdjust="spacing" >10000</text><path d="M1158.5 321.5v4.9" stroke="#000" stroke-width="1.1"/><text x="1158.3" y="341.6" font-size="14.1" text-anchor="middle" textLength="42.64" lengthAdjust="spacing" >12000</text><path d="M1324.5 321.5v4.9" stroke="#000" stroke-width="1.1"/><text x="1324.3" y="341.6" font-size="14.1" text-anchor="middle" textLength="42.64" lengthAdjust="spacing" >14000</text><rect x="1361.5" y="42.5" width="117" height="27" rx="2.8" fill="#fff" fill-opacity=".8" stroke="#cfcfcf" stroke-width="1.1"/><path d="M1366 54.3h30" stroke="#008000" stroke-width="2.08"/><text x="1407.5" y="59.2" font-size="14.1" textLength="29.33" lengthAdjust="spacing" >mag</text><text x="1438.4" y="61.2" font-size="10.1" font-style="italic" textLength="33.9" lengthAdjust="spacing">AGASC</text><rect x="1348.5" y="247.5" width="130" height="67" rx="2.8" fill="#fff" fill-opacity=".8" stroke="#cfcfcf" stroke-width="1.1"/><circle cx="1367.5" cy="260.5" r="1.9" fill="#f00"/><circle cx="1367.5" cy="281.5" r="1.9" fill="#ffa500"/><circle cx="1367.5" cy="302.5" r="1.9" fill="#000"/><text x="1392.6" y="264.2" font-size="14.1" textLength="45.64" lengthAdjust="spacing" >not OK</text><text x="1392.6" y="285.2" font-size="14.1" textLength="78.52" lengthAdjust="spacing" >Highlighted</text><text x="1392.6" y="306.2" font-size="14.1" textLength="18.52" lengthAdjust="spacing" >OK</text><text x="795.4" y="372.2" font-size="17.0" text-anchor="middle" textLength="173.94" lengthAdjust="spacing" >Magnitude Estimates</text><g clip-path="url(#c2)"><path transform="scale(.1)" fill="none" stroke="#000" stroke-width="36" stroke-linecap="round"  d="M4025 5095h0m8460-150h0m-3360 240h0m-1710-280h0m4630 360h0m-7950-130h0m900-150h0m-1050 200h0m-640-100h0m-240 160h0m390 330h0m660-680h0m6040 120h0m2860 220h0m-7230-250h0m3460 530h0m-5860-180h0m5560-530h0m-7280 240h0m3370 190h0m7340-150h0m-6740 0h0m7090 10h0m-7280-20h0m-3260 180h0m9230-150h0m-2060-60h0m520-150h0m-6070 690h0m4160-120h0m4450-60h0m-7080-670h0m-2530 550h0m5180 70h0m-1070-190h0m-770 180h0m-1070-150h0m-780-40h0m1000-150h0m6210 130h0m-9060 380h0m5470-170h0m-490 30h0m-4650-110h0m10190-160h0m-10040-140h0m5260-10h0m3290 70h0m-2810-140h0m3870 190h0m-3560-160h0m-3030 410h0m3490-420h0m-6920 590h0m1340-640h0m540 250h0m4040-70h0m-2990 380h0m-3260 90h0m8840-570h0m-4420 540h0m2560-130h0m-2250-390h0m-3940-210h0m220 600h0m8690 40h0m-750-450h0m1300 270h0m-10110 120h0m6650-460h0m2190 550h0m-980-690h0m-1320 730h0m-3110-530h0m770 610h0m910-60h0m4550-140h0m100-70h0m-9730-320h0m-300 350h0m1480-250h0m8650-110h0m-7860 180h0m7370 180h0m-5770 50h0m-2630-230h0m4000 0h0m2830 270h0m-6010-450h0m8770 200h0m-9540 40h0m4140-120h0m-1390 40h0m1960 460h0m-810-570h0m1300 290h0m-4080 210h0m1400-480h0m-50 410h0m-4060-30h0m500-150h0m410 100h0m430-140h0m6080 280h0m640 0h0m-470-140h0m-5480-310h0m6700 450h0m-5170-410h0m-3750-390h0m1220 570h0m8170-180h0m-10 470h0m-4010 40h0m2460-370h0m2590-300h0m-6780 620h0m6620-660h0m-4650 370h0m-230 500h0m1120-800h0m-4800 290h0m9470-110h0m-4470 80h0m-240 100h0m1630-440h0m-6120 250h0m7140 50h0m-6650-550h0m5140 530h0m-1180-50h0m-5720 300h0m7340-100h0m3010-170h0m-11000 410h0m5420-450h0m5050 50h0m-9190-220h0m4750 420h0m-1700-220h0m2600 350h0m-2220-590h0m-4590 500h0m10870-260h0m-10670 250h0m4350 140h0m-560-740h0m-4030 720h0m1360 0h0m5920-530h0m-6810 260h0m8770 520h0m-9030-540h0m7640-30h0m-4040 240h0m550-50h0m-700-290h0m1070 20h0m1430 280h0m-6300-640h0m9540 70h0m510 470h0m-5260 410h0m-4140-240h0m5390-30h0m1050-10h0m-4980-120h0m1540-190h0m2280 140h0m4990 90h0m160-250h0m-2270 370h0m-3770-320h0m-4530 410h0m3940-620h0m6440-10h0m-7520-60h0m-1030 20h0m1740 220h0m6780 0h0m-10590 260h0m640-70h0m9930-50h0m-3300-120h0m1650-30h0m-8100-300h0m2160 180h0m4620 530h0m2430-180h0m-3990-150h0m-500 240h0m2790-270h0m-8060-120h0m10850 160h0m-8130 260h0m-1910-130h0m590-90h0m8120-70h0m-1890 210h0m-8070-460h0m5880 50h0m-4680 520h0m10070 40h0m-5860-140h0m-2200-300h0m7790 390h0m-5370-310h0m-2620-130h0m-1310 200h0m6460-280h0m-7890 170h0m920 70h0m8250 160h0m600-210h0m-7610-170h0m5730 200h0m-6180 40h0m4040-180h0m3890 180h0m-1700-190h0m-2510 310h0m3620-290h0m1190 110h0m-3130 110h0m-5990-80h0m1450-320h0m-1320 500h0m-540 380h0m860-260h0m710-670h0m-1180 300h0m3180 130h0m3070-60h0m-910-270h0m2320 290h0m-4490 280h0m-2940-60h0m4050-190h0m-330-160h0m4280-320h0m-3540 290h0m-540-300h0m-5050 140h0m840 420h0m750-50h0m-100-290h0m-560 360h0m9340 40h0m540-240h0m-11160 370h0m3150-30h0m6920 90h0m-4160-180h0m2300 150h0m30-80h0m-7680 20h0m9380-250h0m-8410 300h0m4070-140h0m-1040-250h0m2250 330h0m1160-210h0m-570-80h0m-6340-190h0m5520 50h0m-6110 50h0m1280 320h0m8550 110h0m-6910-630h0m-1720 360h0m6210-320h0m-6840 370h0m4920-170h0m1170-80h0m-5790 50h0m4810 350h0m4770-490h0m-10200-90h0m790-140h0m9420 10h0m-7530 180h0m650-180h0m540 140h0m5970 610h0m-5030 150h0m-1240-640h0m-1360 300h0m2180 110h0m930 0h0m-2550-400h0m-3530 240h0m9260 220h0m-6750-490h0m3160 410h0m1470 30h0m-2580-290h0m5670 300h0m-7960-170h0m240 230h0m-650-40h0m7680 0h0m-7550-610h0m2350 550h0m-880-120h0m7580 110h0m-5570-10h0m4050-180h0m-7140-110h0m1940 490h0m-3860-160h0m7270-240h0m1670-180h0m-1070 420h0m-2140 230h0m-2880-610h0m-1750-50h0m4840 100h0m1620 130h0m-4830 280h0m5030-280h0m-940-280h0m2230 560h0m830-470h0m-880 360h0m-8250 50h0m1700-10h0m-2250-620h0m3080 640h0m-840-210h0m7920-150h0m-9490 130h0m2640-340h0m6830 900h0m-9730-710h0m420 120h0m-1310-70h0m4450 280h0m1280-660h0m2580 460h0m-2510 170h0m2830-290h0m1260 40h0m-10090-130h0m9840 390h0m1210-300h0m-1570 330h0m-3010 80h0m190-60h0m1500-170h0m1080 30h0m-6250-430h0m6570 680h0m-630 10h0m-5670-160h0m-600-240h0m4590 150h0m2670 290h0m-9260-340h0m1630 240h0m960-480h0m6080 0h0m-1240-10h0m-2840 510h0m-3170-140h0m7220-130h0m-7170-90h0m7220 150h0m-520-190h0m-3420 140h0m-5270-120h0m5680 100h0m-3200 230h0m1600-300h0m3940 470h0m1030-310h0m-6090 390h0m-860-790h0m7090-20h0m-3560 470h0m2930 30h0m-3780-500h0m-2290 330h0m1360-390h0m-1620 720h0m3100-500h0m-2720 470h0m480-440h0m6720 10h0m-8540 390h0m9820-100h0m-9830-30h0m8590-150h0m-1250 620h0m-1520-480h0m2550-200h0m-8530 210h0m-270 170h0m470-750h0m3020 560h0m-4510 500h0m6160-740h0m-1690 110h0m-3030 150h0m7950 250h0m760-350h0m810 240h0m-9900-270h0m8090-300h0m-7700 580h0m1300-410h0m4540 670h0m-400-480h0m-1680 240h0m-2210-200h0m5420-40h0m-3840 410h0m-4420 30h0m6750-620h0m-7030 630h0m3950-500h0m6810 180h0m-8990-150h0m3230 40h0m-1270 40h0m-1080-10h0m-870 20h0m5080-170h0m-160 60h0m-6670-50h0m11060 160h0m-5240-70h0m-2640 260h0m5990-210h0m890-590h0m-240 580h0m-2460-300h0m-1000 220h0m-4320 60h0m-1980 100h0m10550-210h0m-9180 700h0m9790-540h0m-4540-270h0m3530 420h0m900-280h0m-6790-60h0m5060 260h0m-3030-290h0m-1190 10h0m6040 160h0m-600 300h0m-4870-520h0m-3930 210h0m8270-250h0m-7120 540h0m4310-600h0m-500 450h0m4420 70h0m-7760-720h0m1090 700h0m230-190h0m5930-70h0m670 110h0m-4860 210h0m1430-450h0m2300 140h0m-270 200h0m-2440-420h0m-5460 150h0m-1450-170h0m8460 100h0m-40 240h0m-6240 260h0m6310-530h0m900 130h0m-1170-170h0m960 320h0m-6050 20h0m-1170-390h0m7050 390h0m-2750-190h0m-1240-340h0m-3140 720h0m3730-480h0m-5400 280h0m700-50h0m8860 180h0m-7960-550h0m7010 280h0m-2360-210h0m-6060 20h0m8690 420h0m-7140 40h0m-2080-300h0m8200-50h0m-150-270h0m1230-40h0m-9440 900h0m6180-110h0m-5160-910h0m3510 260h0m830 110h0m-10 80h0m-1940 230h0m6340-210h0m-550 350h0m-30-20h0m-4420-400h0m-2090 210h0m4990 450h0m-2430-310h0m3450 30h0m1080-450h0m1280-50h0m-3460 620h0m-30-180h0m-2250-510h0m-5110 400h0m10180-340h0m-3430 420h0m710-160h0m-5510 220h0m3600-60h0m1770-10h0m-4950 30h0m-930-190h0m-330 150h0m3800 110h0m5320-650h0m-4920 350h0m2340-160h0m1520 80h0m-7800 440h0m6210-280h0m-390-160h0m-3700-290h0m4240 440h0m2970-50h0m-8110-190h0m2030 480h0m-1370-390h0m4200-20h0m2140-420h0m-120 920h0m-5390-130h0m3960-450h0m-7120 480h0m9750 150h0m-5850-140h0m-3550-290h0m4730 290h0m-2410-280h0m-3030-20h0m750-170h0m8090 180h0m720 200h0m-6120-250h0m2120-70h0m1090 270h0m-5870-170h0m-80-410h0m50 930h0m7120-500h0m-7690 30h0m3630 240h0m-890-450h0m5200 260h0m-2250 220h0m3900-10h0m-1410-260h0m1790 300h0m-240-450h0m-3530 570h0m-5570-610h0m8880-70h0m-8700 110h0m3150 290h0m5450-340h0m-6380 190h0m4020 160h0m2130-180h0m-5710 180h0m-1730-320h0m-2070 370h0m4070-470h0m-950-170h0m1860 0h0m-5460 300h0m8860 240h0m1520-280h0m-2030 300h0m-8600-390h0m1840 230h0m1830-80h0m4230 480h0m-1520-740h0m-780 240h0m2160 410h0m-900-360h0m-730 320h0m2150-550h0m-5260 610h0m1230-350h0m3380 390h0m-7640-160h0m90-600h0m9980 410h0m-180 40h0m-3850-230h0m2280-130h0m-8080 230h0m1600-150h0m960 330h0m590-260h0m7620 100h0m-6190 290h0m-1720-30h0m2010-100h0m-2280-190h0m6350 340h0m1650-190h0m-2110 30h0m-2150 420h0m-3670-550h0m6830-60h0m690 60h0m-7820-460h0m5640 860h0m-7740-10h0m9760-140h0m-10430-550h0m10750 80h0m-5120 380h0m4780 60h0m-3870-430h0m-1280 250h0m860 200h0m2680 130h0m-8140-780h0m340 320h0m5060 410h0m-3070-190h0m2040 540h0m-3070-570h0m-1030 90h0m-730-410h0m4730 220h0m-3690-330h0m5780 910h0m-3980-360h0m3470-280h0m-2030 440h0m1680-440h0m-2330 220h0m7540-100h0m-3380-100h0m-5230 350h0m2680-40h0m-830-140h0m570 140h0m2620-310h0m2470-370h0m-20 290h0m-1190 20h0m-1760 190h0m4010 110h0m-6000-670h0m2810 710h0m-5240 120h0m6720-410h0m-2230 30h0m-4300 290h0m2910-330h0m1250 250h0m-6820 80h0m2750-380h0m-1290 70h0m1750-130h0m3150 380h0m1920 40h0m-8520 200h0m7780 0h0m90-280h0m430-290h0m-5980 430h0m660-220h0m5750 40h0m-3660-40h0m5150 420h0m-7400-500h0m5390 340h0m-2410-50h0m-2530-120h0m7580-450h0m-7130 880h0m6140-510h0m-9230-180h0m430 430h0m5530-60h0m-4580-100h0m2060-190h0m300 450h0m3070-640h0m-3860 510h0m3660-180h0m-4560 90h0m-2630-270h0m4150 20h0m5510-220h0m-4390 430h0m4460-450h0m500 390h0m-4600-470h0m-350 230h0m4880 390h0m-5560-220h0m3680 390h0m-5000-470h0m1420 450h0m5210-40h0m-1710-530h0m-1160 150h0m-5080 40h0m-1650 30h0m2060-210h0m5960-50h0m1830 220h0m-7360-100h0m5500-270h0m1910 320h0m-9350-150h0m4130 480h0m1250-140h0m-6120-190h0m840 60h0m2320 90h0m260-70h0m4960 110h0m-5180-90h0m1070 10h0m-4540-100h0m5100-120h0m-4540-110h0m2330 600h0m2450-530h0m5810 100h0m-2350 210h0m-5040-300h0m2740 410h0m3190 220h0m1340-670h0m-10940 60h0m4180 290h0m-4130-250h0m11120 460h0m-6630-80h0m4590-320h0m-4310 40h0m4420 150h0m-3060-390h0m1930 110h0m120 0h0m-1640 330h0m2060-70h0m-5140-440h0m-2710 100h0m4030 330h0m1260 60h0m4780-320h0m-5300-120h0m-1500 390h0m3350 70h0m-4330-460h0m970 410h0m5620-390h0m-5100 740h0m1270-870h0m-3360 580h0m2030-70h0m5160 220h0m620-80h0m-290-80h0m-6470-180h0m1390 130h0m2550-20h0m-3050 140h0m-3360-130h0m8600-20h0m-5960 210h0m1960-90h0m-1130-340h0m6040-200h0m-2440 420h0m-640-630h0m-5980 700h0m3180 20h0m-2970-340h0m2490 90h0m4750 170h0m1600 160h0m-7610-520h0m7460 450h0m-3070-270h0m-880-220h0m940 230h0m-30 510h0m-6460-510h0m8470 220h0m-2840 60h0m-1180-80h0m-3680-230h0m6300 470h0m2090-380h0m-5400-310h0m-1370 360h0m5110 20h0m-7260 200h0m7790-760h0m-8050 690h0m4620 190h0m4270-760h0m-1930 480h0m2710 470h0m-7280-640h0m4410 20h0m-570-90h0m3420 130h0m-6970 430h0m4960-90h0m450-220h0m-4790 0h0m-820-10h0m-90 160h0m6080-60h0m670-350h0m-3290 280h0m1020 200h0m30-170h0m-5230-10h0m-2210 200h0m670-260h0m-990-510h0m370 450h0m7160 130h0m3130 190h0m-7840-650h0m-1310 220h0m-510 290h0m4620-10h0m250-210h0m-410-390h0m1040 550h0m-4740-180h0m60-30h0m5060-270h0m-6370 220h0m-690 120h0m6040 290h0m-460-800h0m1820 310h0m-4150 170h0m3370 160h0m-2900-240h0m-660 80h0m-1370 300h0m3800-50h0m5530-130h0m-6150 180h0m130-70h0m1630-120h0m1440 180h0m-5550 0h0m8490-350h0m-1560 190h0m-7780-160h0m2570-70h0m2610 500h0m-2110-260h0m-4640-40h0m170 70h0m3560 230h0m-1640-700h0m-1560 350h0m2080 270h0m-90-230h0m-440-260h0m-450 780h0m4610-160h0m4160-180h0m-9570-570h0m6190 40h0m2330 120h0m-5540 60h0m7290 230h0m-9360 240h0m6240-160h0m-4670-640h0m6880 350h0m-1000-210h0m-5440 420h0m3890 100h0m-1220 30h0m4470 40h0m-2190-100h0m-2770-190h0m1110 290h0m3570-70h0m-8050-280h0m8360 480h0m-9590 60h0m3460-610h0m1530 370h0m-3650 120h0m7240-60h0m-1490 100h0m2570-320h0m-7880 370h0m30-340h0m3270 20h0m-460-150h0m4090 10h0m320 90h0m740-50h0m-5000-30h0m-2860-350h0m-880-90h0m5510 860h0m1830-600h0m-1420 110h0m-5910 200h0m4490 400h0m-3510-750h0m6900 430h0m-2810-310h0m-2810 540h0m500-430h0m1450 60h0m-1930-130h0m-1210 150h0m4500-190h0m2940 280h0m-9640-50h0m8260-420h0m-8220 570h0m2440-230h0m5580 260h0m-3730-510h0m4200 90h0m-1010-320h0m-6060 330h0m5260-250h0m-4440 210h0m-210-280h0m1740 510h0m3350-510h0m2190 680h0m-8780-230h0m9210 280h0m-9790-190h0m3790-470h0m4130 400h0m1360-20h0m-3880-400h0m590 660h0m-740-480h0m-6190 710h0m6310-420h0m-4340-120h0m5970-20h0m-6760 310h0m7610 80h0m-6970-130h0m5360 150h0m-5420 40h0m2710-660h0m-2830 430h0m3530-190h0m5770-520h0m-5960 810h0m850-350h0m-5770 130h0m9530-190h0m-9380 310h0m3850 120h0m5380 110h0m-7190-270h0m-1090 70h0m2870-10h0m2960-80h0m-770 60h0m660-30h0m-6700-170h0m2280 90h0m-1790 290h0m2620-410h0m1930-160h0m-270 250h0m650-260h0m4890 40h0m-8810 250h0m8110 260h0m-9670-200h0m490-410h0m790 640h0m9230-620h0m-7810 540h0m4210-30h0m2390-370h0m-5810-110h0m7140-170h0m-4560 420h0m670 210h0m-4210-470h0m1420 120h0m720-430h0m-1520 530h0m1250 110h0m-860 190h0m2020-360h0m-290 380h0m4840-370h0m-7510-60h0m5800 210h0m-8940 200h0m3360-380h0m7610-10h0m-9160 270h0m3790-420h0m2030 460h0m2740 380h0m-7400-320h0m-2060 30h0m4360-130h0m2190 260h0m-490-440h0m-1050 100h0m2060 440h0m610-660h0m-1290 450h0m-6410-560h0m5450 170h0m980-430h0m-3660 690h0m310 110h0m2970-260h0m-5260 190h0m5500-400h0m250 720h0m2800-700h0m-4580 310h0m4010-530h0m-3970 250h0m1230-140h0m10 560h0m-1570-200h0m1140 230h0m-2140-240h0m1380-90h0m-3520-250h0m6900 60h0m-2630 560h0m4030-390h0m-9670-410h0m4320 790h0m4290-150h0m-4190-190h0m1330 260h0m-2560 60h0m4950-260h0m-5040 70h0m5040-220h0m-8440 390h0m2850-160h0m1810-150h0m2460 110h0m-2160 170h0m2460-250h0m-5210-30h0m2750-230h0m4740 520h0m-3150-240h0m-3410 100h0m6330-390h0m-1570 40h0m-1270 70h0m-280-80h0m-4450 220h0m-10 150h0m4500-150h0m-1440 220h0m-890-440h0m4860 140h0m-1830-150h0m-4150 350h0m6970-120h0m-1970-380h0m-3220 220h0m-3260 30h0m2120 240h0m2410-340h0m-6080 260h0m10230-480h0m-1930 640h0m1570-130h0m160 190h0m-3920-570h0m630 290h0m230 50h0m-630 540h0m-6260-390h0m390-260h0m1270 150h0m-790 50h0m-230 210h0m6220-190h0m-6080-350h0m5400 170h0m2450-340h0m-5530 170h0m-3090 450h0m4170-160h0m2830 70h0m810-130h0m-6090-90h0m8800-110h0m-4610 310h0m-4640 20h0m8590-480h0m-6580 570h0m3020-200h0m-1270 540h0m3200-360h0m-4210-160h0m-3210-90h0m9820 10h0m-2200 40h0m-8110 260h0m-530 150h0m10720-350h0m-2250 360h0m-7030-260h0m3160-110h0m2430 20h0m-880-160h0m4050 30h0m-1390 200h0m-7660-340h0m60 550h0m-940-670h0m5730 350h0m-5020-110h0m7280-190h0m-4840 0h0m7290 200h0m-10780 10h0m7640-260h0m1700 590h0m-6910-200h0m6420-560h0m-4870 260h0m140-20h0m2720 580h0m-3450-340h0m1580 60h0m-2800 10h0m5640-110h0m-3100 350h0m5160-500h0m-3980 370h0m-2440-440h0m6170 310h0m-570 20h0m-6080 360h0m2230-650h0m-4500 260h0m7190-190h0m-2820 370h0m1480 220h0m-4790-140h0m510-270h0m2620-130h0m5070-10h0m-4600 380h0m-1960-130h0m1860 140h0m2270-610h0m2030 520h0m-6020-110h0m-950 280h0m6770-300h0m-4540-150h0m6040 530h0m-9060-180h0m3190 20h0m-2090 190h0m7120-240h0m-4490 290h0m-1730-540h0m5300-470h0m-390 870h0m-1440-60h0m-4970-360h0m4130 170h0m-5660-160h0m110 270h0m7620-310h0m-7170-40h0m890 110h0m7130-90h0m-8430 120h0m720 220h0m6690-200h0m-910 20h0m-7310 90h0m2090-40h0m1080-360h0m3700 180h0m-1940 470h0m-4170-300h0m2720 10h0m-1550-160h0m8230-300h0m-490 450h0m-2460 130h0m660-230h0m-5300 10h0m6830 410h0m-4840-270h0m-2320-230h0m1090 180h0m6010 350h0m-430-280h0m1860 50h0m-10380-480h0m620 270h0m6320-40h0m1380 80h0m-3450-220h0m1370 310h0m-3150 30h0m360 40h0m6610 50h0m-6290-50h0m6780-380h0m-5830-240h0m800 460h0m850 60h0m-2650 0h0m750-270h0m840 220h0m-460 230h0m-1710-70h0m4750-270h0m-3200 250h0m-4230-170h0m2260 520h0m1850-800h0m3810 490h0m-7070 70h0m5810-730h0m-5490 500h0m1610 40h0m1900-140h0m700 110h0m-3850-300h0m-2730 120h0m6810 400h0m-750-100h0m1370 0h0m880-280h0m-190-220h0m-40-120h0m-2530 410h0m1040 170h0m2680-200h0m-3660-290h0m-720 110h0m3900 240h0m-1560 60h0m-510 410h0m-4110-310h0m2180-70h0m1080-130h0m-3490-160h0m-390 220h0m-530 0h0m130-230h0m6280 100h0m-3210 320h0m5530 120h0m-3560-180h0m-6640-430h0m11020 500h0m160-60h0m-8880-380h0m8050 160h0m-7570 90h0m2500-120h0m-2750 270h0m3840-380h0m3250 320h0m980-250h0m-4400 590h0m-740-750h0m1440 70h0m-3490 80h0m-2780 100h0m7030 160h0m-6410-10h0m6880 110h0m-7620-230h0m1880 320h0m7200-180h0m-1670-240h0m-4570 280h0m-810-240h0m5410-130h0m-4510 310h0m-940-270h0m2760-190h0m-3470 310h0m3740-110h0m5690 210h0m-500 240h0m-4180-510h0m2480 600h0m-1780-850h0m-3790 590h0m7730-230h0m-10770 160h0m5220-180h0m1520-70h0m-4500 560h0m3480-520h0m-240 490h0m-1050-220h0m2340 240h0m2420-410h0m-1840-130h0m510-20h0m-5390 500h0m6250-210h0m390-450h0m-5890 600h0m6000-310h0m-7860-130h0m8340 170h0m-9020 330h0m4740-360h0m-1540-360h0m3340-50h0m-1130 440h0m1840 100h0m210-80h0m-5640 220h0m5550 70h0m-6860-330h0m6620 550h0m-2300-440h0m-630-50h0m-1080 190h0m780-40h0m300-200h0m1410-80h0m-6090-140h0m430 200h0m8110-20h0m-5280 190h0m1410-400h0m5310 140h0m-800 130h0m-2400 0h0m330-580h0m-3710 430h0m-2510-110h0m9870 560h0m-5070-230h0m-5480-390h0m10010 230h0m-1640-30h0m-7350 310h0m1650-220h0m6750 250h0m-2530 0h0m-5040-180h0m3850-40h0m2420 110h0m-3660-320h0m-490 20h0m1200 250h0m2920 150h0m-1940-60h0m-6120-110h0m9650 120h0m-9420-370h0m1340 150h0m-190 260h0m7640-180h0m-2130-230h0m-5240 300h0m3180-280h0m-4310 210h0m9090 100h0m-7800-30h0m3070 290h0m1180-390h0m3800-260h0m-5050 560h0m3120-400h0m-5600 200h0m3780-150h0m3040-20h0m-660 180h0m-710-80h0m1850 610h0m580-870h0m-7590 320h0m5740 250h0m-4380-340h0m2300 100h0m-530-310h0m2250 30h0m-3740 100h0m3370 30h0m-1690 560h0m2000-240h0m2180 150h0m-1940-420h0m-2860-430h0m2280 310h0m-7180 50h0m1800-320h0m3600 520h0m-4350-30h0m6520-70h0m2160-20h0m-3200 210h0m-2600-140h0m-4090-40h0m510 50h0m970 410h0m-260-530h0m-470 240h0m9500-150h0m-7050-430h0m4250 580h0m-4320-450h0m-690 380h0m-680-30h0m-560-390h0m-1920 230h0m4800 230h0m3510 150h0m-5160-210h0m-2670 60h0m1640-100h0m-1790-110h0m2410-220h0m-380 170h0m2850-310h0m4090 730h0m-6280-450h0m720 240h0m6010-310h0m-1470 20h0m-7790 130h0m5560 390h0m-1110-280h0m240 100h0m4870-240h0m-590-40h0m-8070 330h0m2040-240h0m5510 350h0m-9100-410h0m6050-450h0m2580 280h0m-1690 260h0m-6170-20h0m2190-90h0m2810 650h0m4180-800h0m-3970 620h0m-4380-280h0m1130 30h0m-480-230h0m4060 80h0m-1470-270h0m3010 330h0m-3690-290h0m-2430 680h0m-1710-90h0m240-200h0m1540-270h0m6580-80h0m-1720 490h0m-2580-240h0m1120-70h0m-5200 120h0m2220 120h0m7960 20h0m360-350h0m-2030 50h0m-3960 70h0m1630 120h0m2650-350h0m-1630-200h0m-2700 710h0m4210 210h0m-2490-560h0m2230 70h0m-1780 230h0m-2510 50h0m810-120h0m2080-130h0m1890-40h0m1180 20h0m-2250-200h0m1630 190h0m220 230h0m-2800-110h0m230-300h0m210 400h0m-3240-320h0m-1690 30h0m-1090 350h0m-840-370h0m2570 530h0m-90-600h0m-2310 190h0m1240-180h0m8430 190h0m-7900-100h0m2340-100h0m4540-210h0m-1700 430h0m-2060 10h0m3930 160h0m-9130-740h0m2960 490h0m6760-410h0m-680 420h0m-7750 190h0m1310-340h0m6920 430h0m-9770-210h0m270-240h0m920-200h0m1200 600h0m-1880-320h0m2300 690h0m3330-210h0m-720-330h0m-5440-250h0m1160-80h0m1720 220h0m-1220-40h0m4940-20h0m-380 300h0m2820 120h0m-790-300h0m-4100 220h0m1550 10h0m-790-60h0m-3790-340h0m7870 330h0m-7760 400h0m8300-1030h0m450 340h0m-1780-260h0m-820 390h0m1930 340h0m1170-350h0m-1440-20h0m1430-200h0m-70 710h0m-9430-30h0m9980-570h0m-230 80h0m-3270 20h0m1390-180h0m-7550 510h0m5070-110h0m4380-410h0m-6370-180h0m2240 20h0m-610 480h0m-4800 140h0m4220-120h0m5190-220h0m-9050 140h0m2020 100h0m-2040-150h0m6080 270h0m-7240 210h0m8280-680h0m-3730 110h0m1450 250h0m-2840 260h0m-770 0h0m4430-500h0m-4130-90h0m5510 280h0m580-70h0m-1140-150h0m-6840-10h0m6670 270h0m-6850-60h0m2900 170h0m-1830-260h0m2920 250h0m-3750-80h0m-1260-50h0m1910-550h0m8540 230h0m-5420 480h0m5460-420h0m-4440 360h0m-650-330h0m-1680 90h0m2480 130h0m-4410-10h0m5370 50h0m-2350-290h0m-590 390h0m3680-250h0m-480-200h0m-510 180h0m-7120-370h0m4030 230h0m120 390h0m4130-400h0m2160 280h0m-8380-280h0m890 100h0m810 110h0m3210-530h0m-3640 410h0m2180 120h0m-4620 30h0m1170 200h0m8910-90h0m-2330-150h0m-1550 630h0m-600-330h0m20-250h0m-3530 390h0m4410-390h0m-5860-160h0m7260-60h0m-7540 180h0m2850-160h0m5690-20h0m-960 460h0m-2320-300h0m3360-370h0m-5930 290h0m2060 470h0m-5740-370h0m9330-350h0m1550 260h0m-790 220h0m360-530h0m-9850 480h0m5390-90h0m3130 40h0m-3570-140h0m-3860 310h0m50 30h0m1760-200h0m440 220h0m3000-580h0m1080 300h0m-7480-100h0m8320-220h0m-8390 700h0m4740-590h0m5750 410h0m-7690-390h0m-400-100h0m4300-70h0m-2310 420h0m1050 180h0m-980-120h0m-40-210h0m-30 330h0m-2560-430h0m4780 170h0m-4060-280h0m530-100h0m-1950 360h0m330 160h0m1880 70h0m-3550-710h0m5090 890h0m1150-40h0m-2660-260h0m830-320h0m3250 810h0m2780-630h0m-3820 190h0m-3870-570h0m2130 430h0m-1370-400h0m-650 550h0m1010 360h0m5880-540h0m-3880 150h0m-940 140h0m-1830-790h0m1550 970h0m4170-750h0m-4600 240h0m-930 40h0m-3630 140h0m3400-520h0m-2890 310h0m10170 500h0m-4320-240h0m-1530 200h0m-580-170h0m3490 60h0m-6180-40h0m7460-620h0m-8720 420h0m3950 90h0m-4090 50h0m6180-420h0m-3790 210h0m-2520 200h0m-180 290h0m1460-960h0m-380 650h0m6640 130h0m3440 0h0m-7030-500h0m-2440 630h0m9080-150h0m-8460 270h0m-2350-310h0m1090-440h0m6140 410h0m1980-60h0m-2440 310h0m1870-490h0m-2330 170h0m1870-80h0m1290 10h0m-4770-160h0m-3900 200h0m5440-150h0m-5640 70h0m10210 260h0m-9660-200h0m3510-200h0m6630 500h0m-2180-730h0m-3500 560h0m-1480-560h0m1190 50h0m1200 370h0m2280-190h0m-8120-260h0m1600 760h0m1430-250h0m-1150-240h0m7650 180h0m-8830 320h0m1230-80h0m-1930-710h0m10470 40h0m-170 740h0m-2540-220h0m1330-200h0m-6850 360h0m3130-430h0m-2240 460h0m6280-260h0m-570-230h0m-2110 400h0m-4200-440h0m3220 350h0m-1300-360h0m-1040 260h0m4860 180h0m-7140-220h0m2160 70h0m-3990 40h0m10470 130h0m-1100-390h0m-840 300h0m-4130 70h0m-3590-160h0m9630-30h0m-9500-40h0m400 210h0m740-340h0m3090 270h0m-2130-140h0m4830 430h0m-7700-150h0m5140-200h0m-2670 240h0m7920-140h0m-9650 160h0m3290-540h0m3690 270h0m-2630 40h0m-3930-460h0m8690 760h0m-5020-250h0m-2670 50h0m2980-200h0m1010 140h0m-4040-140h0m4070-10h0m-4650 220h0m7050-120h0m-6640-260h0m4430 470h0m-1420 90h0m-2250-80h0m4970-470h0m-1950 40h0m2050 100h0m1580 180h0m-9570-30h0m5930 20h0m3210-20h0m-5080-280h0m-2240 80h0m1680 440h0m-3060-330h0m3640 0h0m2920 110h0m-1130 310h0m4130-580h0m-6870-40h0m1080 160h0m-2770 650h0m150-510h0m6030-130h0m650 180h0m-4350-420h0m2660 230h0m3270-50h0m1380 190h0m-7740 220h0m6770-490h0m830 590h0m-3740 120h0m3960-610h0m-4160 120h0m-6500 120h0m6480-300h0m-5590 0h0m1440 490h0m2650-420h0m-3390 300h0m2310-70h0m3170-670h0m-920 620h0m70 80h0m790-60h0m-6810-60h0m3330 0h0m-3100-410h0m3250 240h0m600-190h0m5840 380h0m-8560-350h0m4470 150h0m-3420-140h0m4420-10h0m-4660 540h0m6790-560h0m-7340 20h0m7680 390h0m-6590-160h0m-220-120h0m-3250 410h0m7600-110h0m-3720 40h0m3850-520h0m-7340 200h0m7870 130h0m2850 240h0m-6690-210h0m2180 20h0m300 10h0m-3140 200h0m7410-110h0m-8600-180h0m3200 210h0m560-40h0m-3130-370h0m1170 70h0m-4140 130h0m4740-10h0m-4960-10h0m1640-20h0m8850 220h0m-2470-200h0m-4860-420h0m1410 210h0m890 140h0m3790-130h0m-3380 410h0m380-440h0m4240 300h0m-2230 280h0m-7020-60h0m5310-130h0m2230 500h0m-4340-690h0m2100-480h0m440 390h0m1500 180h0m2580 170h0m-5500-80h0m-380 30h0m1930-190h0m-1380-40h0m4950-210h0m-10190 470h0m2320 340h0m6430-780h0m-4300 10h0m5450 320h0m-4600-230h0m-300 300h0m-2910 10h0m3140 240h0m-5520-200h0m8550-600h0m-6120 720h0m7570-370h0m-1890-50h0m-3310 250h0m-190-420h0m5480 330h0m60 240h0m-380-740h0m-5990 750h0m-1820-340h0m5290 80h0m-500-520h0m-4050 730h0m-2150-220h0m470-600h0m3720 430h0m4710 140h0m-8590-40h0m9070-200h0m-5720 290h0m3000 190h0m2570-150h0m-690-280h0m-2780 390h0m-6320-40h0m4160 0h0m4890-710h0m-7360 720h0m110-330h0m-1200 270h0m610-210h0m6030 90h0m2680 260h0m190-100h0m-4280-110h0m-3550-10h0m-1400-190h0m-570 60h0m9740 180h0m-380-180h0m-250 390h0m-2780-200h0m-3670-280h0m2050 60h0m730 450h0m-4410-640h0m-1640-210h0m9450 650h0m-5380-220h0m60 80h0m980 320h0m-180-80h0m830-230h0m1270-390h0m-300 470h0m-180 180h0m-1950-10h0m3070-110h0m-1720 350h0m-3030-340h0m-1130-150h0m2560 230h0m5720-250h0m-2530 260h0m3740-300h0m-10490-130h0m-430-210h0m2570 540h0m-2290 250h0m6140-230h0m-4500-410h0m5350 120h0m940 410h0m900-130h0m390-180h0m-5360 20h0m-820 310h0m5960-850h0m-6550 250h0m7440 280h0m-540-270h0m-7740 300h0m8850-60h0m-5850 140h0m-1610-300h0m1760 210h0m3630 30h0m-8590 160h0m6420 40h0m730-800h0m-5000 460h0m5530 200h0m1590-290h0m680 470h0m-6340-140h0m2520-80h0m-3540-20h0m4810-180h0m-610-30h0m-6120-220h0m7610 430h0m-3790-190h0m-4130 270h0m4450 210h0m5580-140h0m-8640 300h0m-950-1030h0m4650 650h0m-5350-60h0m660-350h0m7990-50h0m-2180 560h0m2830-530h0m670 210h0m-1640 220h0m-1240-640h0m100 730h0m-3340-160h0m6210 220h0m-8060-110h0m-2250-170h0m6170 260h0m-2280-10h0m5600 90h0m-7150-230h0m2970 30h0m3960 20h0m-8300-190h0m4270-290h0m3390 450h0m-7120 110h0m9450 40h0m-2940-610h0m990 10h0m-6340 210h0m2790 230h0m1400-230h0m-2020 320h0m520-340h0m-4890-50h0m5480 80h0m-850 200h0m-250 20h0m680-10h0m540 100h0m-4750-240h0m2250 70h0m7330-70h0m-5280 110h0m-2790-150h0m1220 270h0m-220-550h0m4540 560h0m-7000-180h0m-300 320h0m4630 100h0m1420 160h0m-5220-760h0m-1530 210h0m6210 180h0m1450-530h0m-2630 210h0m3580 720h0m-3540-310h0m-1410-140h0m-3670-60h0m7480 110h0m880-400h0m1610 630h0m-2630-530h0m1080-210h0m-5430 410h0m7190 200h0m-10140-260h0m3770-30h0m5610 60h0m-8000-160h0m-1740 100h0m6860-280h0m-1560 220h0m-1260-200h0m440-180h0m-2730 870h0m3050-580h0m4290 200h0m-7310-340h0m490 640h0m4700-760h0m-7220 470h0m10480-20h0m-4360 40h0m4490-230h0m-5570-70h0m-110 360h0m3060-160h0m-4300-30h0m300 70h0m-3600 550h0m5430-630h0m-3100 660h0m3560-150h0m1370-750h0m400 800h0m-10-560h0m-3010 410h0m-3270-360h0m5010-190h0m3240 220h0m-60-260h0m-7730-20h0m5660 120h0m2160 180h0m-10120-300h0m2070 260h0m4470 450h0m-3400-160h0m750-430h0m7310 10h0m-10 380h0m-2970 70h0m2710-230h0m-4040-290h0m1350 340h0m-7630-340h0m2450 70h0m5710 260h0m-600 100h0m-2370-300h0m1490-120h0m-1140 160h0m4390 360h0m-5110-520h0m4870-170h0m230 910h0m-10010-700h0m220 170h0m7610 80h0m-1240-170h0m-6180 390h0m120-80h0m-880-120h0m9100-70h0m-3740 50h0m-2280-20h0m720-280h0m6130 290h0m-3630 120h0m-5090-40h0m10000-170h0m-5000 210h0m400-270h0m100 280h0m-2040-390h0m3270 300h0m-6320-140h0m490-240h0m2210 100h0m-2480 140h0m8460-330h0m-6480 520h0m-2140-100h0m6700 70h0m-6770-40h0m5210-340h0m560 0h0m-3950 300h0m-350-410h0m-2940 250h0m6160 40h0m-1160-330h0m-2930 410h0m1020-80h0m5110-20h0m-6770 120h0m-1540 0h0m8190-170h0m-2590-10h0m4030-160h0m300 410h0m790-250h0m-8800 60h0m8060 110h0m-1400 330h0m910-100h0m-5210-390h0m-1820 600h0m-1350-280h0m5240-430h0m-6440 560h0m10550-120h0m-3010-90h0m-2920-400h0m510 520h0m-1800-180h0m-1520 20h0m-370 320h0m2110-950h0m-420 970h0m4620-210h0m2870-410h0m170 220h0m-6550 100h0m-2720-660h0m4350 790h0m2140-470h0m-3460 380h0m1190-610h0m-1960 340h0m-3410 400h0m2690-90h0m-90-320h0m7430 210h0m-9710 360h0m8800-680h0m-1830 300h0m-1990 0h0m-1270-290h0m-2340 310h0m2440-170h0m2710 90h0m910 180h0m500 130h0m-8170-290h0m310 70h0m2300 80h0m550-90h0m6220-410h0m-1140 400h0m-5380 220h0m7070-720h0m-6780 40h0m4640 460h0m-250 20h0m-7110-180h0m3470 180h0m-4360 250h0m2380-90h0m1950-90h0m-2790 70h0m4570-300h0m4160 160h0m-7710-490h0m-850-40h0m1680 240h0m5890 380h0m-8680-270h0m6170 210h0m-4030-380h0m7120 340h0m-1310 120h0m-5810 80h0m-480-90h0m3120-60h0m5370-80h0m-8260 100h0m5470 150h0m-3830-560h0m2590 100h0m-5830-50h0m5030 30h0m-4920 70h0m2480 290h0m2190-320h0m-5650 280h0m4520-350h0m2110 10h0m-330 300h0m4100-310h0m-2940 350h0m-5380-310h0m1140-240h0m6140 710h0m-5070-340h0m5840-180h0m1010 90h0m-8810-150h0m1430-40h0m5790 390h0m200 170h0m-2080-160h0m1240-40h0m-7330-90h0m-1620 150h0m870-60h0m5070 150h0m3970-280h0m-9310 260h0m2880-140h0m4290-90h0m2510 260h0m-8340 40h0m2660-380h0m4280 290h0m-6590-290h0m3360-180h0m5430 420h0m-8000-150h0m1570 10h0m620 460h0m-690-380h0m-1810 180h0m4690-180h0m-3380-320h0m2030 220h0m1760 400h0m-1130 120h0m-1380-220h0m140-100h0m-3010-340h0m2190 270h0m1530-90h0m-2150 110h0m7160 170h0m-6360-600h0m-2980 450h0m540 40h0m2630-590h0m3250 290h0m1910-60h0m430 470h0m-6930-90h0m5110-170h0m-2610 160h0m-1660 100h0m70-160h0m-520-50h0m960 50h0m-1100-560h0m-3810 630h0m10330-490h0m-4060 380h0m-5220 400h0m7270-700h0m770 230h0m-2470 490h0m-2130-880h0m-3760 640h0m9410-400h0m-450 140h0m-3550-340h0m-2030 300h0m-3860 80h0m-460-240h0m9970 440h0m-7530-650h0m6870 490h0m540-10h0m-4290 310h0m2370-100h0m-2560-140h0m-4550-430h0m1180 310h0m1220-400h0m5640 750h0m-750-380h0m-7930 190h0m2410-120h0m6540 310h0m1320-480h0m-9390 420h0m860-230h0m9410-310h0m-11260-150h0m9670 490h0m-7710 40h0m2480 340h0m2900-530h0m-500 90h0m4450-160h0m-7560 170h0m-3330 200h0m8510-570h0m-1760 690h0m3300-240h0m-650 40h0m-780-680h0m-8150 90h0m350 490h0m2340-90h0m7470 170h0m-9350-70h0m2530-360h0m2900 300h0m-1340-260h0m2040 400h0m590-290h0m-6120 340h0m1600-140h0m3690-130h0m580 300h0m-150 220h0m-7440-520h0m1430 250h0m8250 10h0m-560 10h0m1410-480h0m-1370 200h0m-2370-180h0m-5030 130h0m4040-20h0m-2610-280h0m4390 390h0m-2690 310h0m-2260-830h0m-2110 470h0m7420 430h0m-5430-450h0m2550 510h0m200-180h0m3590-190h0m-5320 100h0m2240-260h0m-2840 0h0m5100 330h0m-5010 90h0m6010-290h0m370 340h0m-5160-400h0m-90 580h0m2780-340h0m3410 40h0m-7710-290h0m2450-50h0m-1740 330h0m-2100-350h0m7180 480h0m-7950-260h0m1220-170h0m6210-100h0m-5600-70h0m-780 200h0m-1540-150h0m9350 510h0m-7020-380h0m4180 390h0m1870-320h0m-1640 230h0m3980-30h0m-10280-100h0m10280 30h0m-1180-100h0m-2260 260h0m-650-250h0m1810-380h0m-6520 450h0m5480-480h0m-2150 200h0m2200 180h0m-5050-10h0m3440 190h0m1430 200h0m-460-250h0m-5700-170h0m9120 120h0m-8630-300h0m3890 110h0m340 0h0m2620 220h0m-6110-260h0m4930 250h0m2920-70h0m-8810-230h0m1210-90h0m-3140 600h0m4700-260h0m2990-70h0m-6610-50h0m170-260h0m4150 190h0m-2180 610h0m6420-790h0m-4080 750h0m-2100-100h0m3930-80h0m-5910-240h0m3250-250h0m5290 160h0m-4840 370h0m880-290h0m3020 400h0m30-80h0m270-410h0m1750 260h0m-2020-300h0m-600 270h0m-1430 70h0m-1900-30h0m5870-140h0m-10310-170h0m2830 60h0m4760 120h0m-7610 300h0m2220-270h0m2720-470h0m480 360h0m-5340 70h0m4510-230h0m-3280 390h0m1360-410h0m510 440h0m5900-30h0m-290 150h0m-790-260h0m1380 130h0m-890-390h0m-4380-140h0m-1850 410h0m2220-20h0m-3230 270h0m6090-300h0m-6950 90h0m400-190h0m4000 80h0m1700-350h0m1930 280h0m-4250 80h0m1140 200h0m70-140h0m5160-450h0m-5730-200h0m3650 620h0m-3810 200h0m-2410-210h0m7690-280h0m-2710 370h0m3210-470h0m-460 320h0m-4130-160h0m-4850-30h0m-200 40h0m-90 180h0m2680-120h0m1360 0h0m-4110-480h0m7480 610h0m1910-170h0m-330 200h0m-2500-40h0m-2300-330h0m-4270 200h0m9860 30h0m-4670 180h0m1390-120h0m-2040 440h0m-1290-250h0m4340-460h0m-5880-100h0m2040 260h0m2500 270h0m-5840-150h0m1130 460h0m560-170h0m3820-80h0m3090-560h0m-4990 290h0m-420 290h0m4740-430h0m270-240h0m-510 510h0m-880-240h0m-6160 670h0m960-320h0m6140-390h0m440-280h0m1210 300h0m-5690 510h0m3090-90h0m610-160h0m-8850-120h0m3730-420h0m6980 290h0m-6240 30h0m-970 290h0m-1760 130h0m-560 260h0m9140-140h0m-4480-270h0m1580 90h0m-7220-680h0m5060 280h0m330-50h0m4910 370h0m-9330-80h0m-690-300h0m650 360h0m-1170 0h0m10320-140h0m-9540 50h0m690 150h0m5250-210h0m-70 340h0m-3480-250h0m4780-550h0m-6850 410h0m-1360-60h0m5240-130h0m4290 390h0m-9410-160h0m4140-210h0m4500 490h0m-1770-430h0m1240 410h0m-5250-80h0m2120-70h0m3520 390h0m-4760-380h0m5450 270h0m-8940-190h0m5630-220h0m-830-390h0m-3060 400h0m-1050 220h0m560-220h0m1700 300h0m-2190-70h0m4670-100h0m-2570 310h0m7910-220h0m-6900 70h0m-670-480h0m2910 70h0m3210 370h0m-8150-310h0m-840 570h0m4050-700h0m210 440h0m4960-330h0m-2030 350h0m-2180-210h0m4150 130h0m-5630-390h0m-2300 170h0m2410 10h0m2950-210h0m-4000 130h0m5350 230h0m-1280-440h0m-1740 350h0m730 370h0m4010-270h0m-7690-460h0m4010 540h0m-570 230h0m180-510h0m-4990 10h0m4800-120h0m1580 480h0m-4310-140h0m4490-260h0m-5950 110h0m2650 40h0m5780 100h0m-1130-480h0m-1640 550h0m-5640-150h0m830 50h0m3690-240h0m2740 480h0m-4280-360h0m1870-40h0m2240-390h0m-6290 950h0m5170-100h0m-7810-340h0m9000 250h0m-1800-640h0m2180 50h0m-2930 240h0m-60 50h0m-3630 10h0m-1540-220h0m8500 210h0m-6440 160h0m780-70h0m4020 10h0m-1970-190h0m-2260 160h0m-1280 320h0m4870-950h0m2540 740h0m-230-750h0m-5000 670h0m2450 160h0m-2540-190h0m-4100 30h0m6980-410h0m1220 770h0m870-490h0m1020 10h0m-2160 80h0m-8270-320h0m10330-110h0m-3620 530h0m-1120-270h0m-5210 500h0m1920-410h0m-790-100h0m-270-90h0m4530 650h0m-5170-130h0m6000-180h0m3650-290h0m-3580 430h0m-3800-320h0m-2500 60h0m9390-180h0m-1190 50h0m-8090 210h0m5240 10h0m3850-120h0m-2180 190h0m-3460 180h0m560 150h0m1970-490h0m-4550 60h0m-80 10h0m570 120h0m-2080-220h0m3120 90h0m5890 240h0m-5640-390h0m-2190 90h0m7050 530h0m-7850-690h0m6100 170h0m-6380-50h0m3890 330h0m4120-480h0m90 60h0m-540 220h0m-4660-60h0m-3400 100h0m5200-120h0m-4750-70h0m1760 30h0m6840 20h0m-3450-140h0m5080-100h0m-5500 250h0m2670-70h0m-2700 310h0m-2580-270h0m1770 50h0m3520 270h0m-7850-320h0m3400 220h0m7420 30h0m-9970-530h0m2530 410h0m-3690-50h0m8960-180h0m1010-60h0m-2710 370h0m2250-210h0m-1540 340h0m3060-210h0m-3080-70h0m-3730-490h0m5340 500h0m-1600 0h0m1320 210h0m-7950-250h0m3550-70h0m4440 110h0m2010-210h0m-6620 510h0m6310-370h0m-6040 130h0m-2440-140h0m-2270-40h0m7720 70h0m-5310 240h0m3260-510h0m-1480 10h0m-4350 280h0m6170 60h0m4730 120h0m-1280-20h0m-5100 110h0m4570-100h0m1890 80h0m-8850-500h0m9070 230h0m-2040 300h0m1550-320h0m-8480-80h0m7720 400h0m-6190-200h0m-620-290h0m5270 390h0m-3770-330h0m-2590 160h0m9170-300h0m-8730 620h0m1210-410h0m3990-160h0m-5260 60h0m8730 380h0m-3300 100h0m1970-390h0m-5100-120h0m5150 210h0m-3200 380h0m-4850-170h0m2050-650h0m-2660 500h0m9140-110h0m-9100 230h0m8550-230h0m50-140h0m-8390 350h0m9070 140h0m-7760-560h0m1730 360h0m-3310-650h0m4010 760h0m5200 40h0m-4100-240h0m2960-230h0m1000 280h0m-2210-380h0m2100-60h0m-8680 250h0m9570 210h0m-7420-350h0m-2700 330h0m6600 160h0m-1930 10h0m2980 350h0m1730-430h0m-9970-160h0m1090 580h0m7440-830h0m1330 360h0m-4440 220h0m3610 250h0m-9020-310h0m4640-780h0m-2270 550h0m90 410h0m3900-400h0m3800-290h0m-5050 140h0m-2750 250h0m4140-110h0m100 160h0m3260-390h0m-8530 340h0m3700-40h0m-1570-250h0m3480 20h0m-6320-30h0m1990-90h0m8020 430h0m-1760-340h0m-9250 260h0m4290-250h0m-1870 0h0m8590-170h0m-8920-10h0m4910 320h0m1440-140h0m-2520 640h0m2650-720h0m1900 320h0m-9560-200h0m6880 260h0m-6680 130h0m8070-110h0m-2160 0h0m1840-180h0m-3720 240h0m-2620 80h0m7470-60h0m-4230-280h0m-3860 190h0m8490-100h0m-3640 160h0m2480-420h0m-780-30h0m2260 190h0m-4760-200h0m-5800-70h0m8110 650h0m-1570-450h0m-5030 160h0m5100-10h0m-2830 290h0m-2120-350h0m5330-80h0m-5820 310h0m2180-100h0m-3240-40h0m760-300h0m4910-130h0m4090 430h0m-9620 90h0m4440-480h0m-3440 410h0m5610-30h0m-2090-320h0m-2770 300h0m-280-130h0m6290 90h0m570-90h0m-7220 100h0m4620 90h0m-4830 0h0m1100-50h0m5550-300h0m-2710 240h0m-2730 40h0m5940 30h0m2440 90h0m-5650-210h0m-4040 420h0m8070-250h0m160 190h0m-2750-480h0m3130 390h0m-9700-200h0m5170 10h0m4220-310h0m-6890 240h0m-920 320h0m6690-280h0m-8010 250h0m5900-730h0m-1800 640h0m4310-210h0m-8640 330h0m10460-150h0m-10170 90h0m1700-200h0m-840-220h0m8400 210h0m-7600 220h0m3480 260h0m-4670-940h0m160 190h0m-560 160h0m5740-370h0m-6100 390h0m5620 320h0m-450-180h0m-2520 400h0m4280-640h0m-6170 280h0m4820 170h0m350-240h0m-220-210h0m810 120h0m-3790 230h0m-80 40h0m950-180h0m3810-320h0m1320-180h0m-7710 510h0m8620 290h0m-6180-560h0m3700 60h0m2650 290h0m-5960-80h0m-220-120h0m1250 470h0m5910-400h0m-8610 450h0m-2210-270h0m3580-60h0m-960-40h0m6230-60h0m-8600 150h0m6610-680h0m890 620h0m-2950-20h0m4360 150h0m-6780 80h0m4850-80h0m-1940-280h0m-4850-190h0m8250 590h0m1100-390h0m-9830 370h0m990-780h0m3350 150h0m-4300 480h0m5020-200h0m-790 120h0m6810-60h0m-7510-310h0m5300 200h0m-3850-70h0m4000 260h0m-7440 100h0m-1170-170h0m2940-310h0m4250 310h0m-500-70h0m10 180h0m-2850-180h0m-1800 140h0m3860-100h0m-3800 170h0m-840 210h0m-320-640h0m8920-60h0m-2960 250h0m-4600-10h0m1690 60h0m4990 230h0m-8750-780h0m4660 330h0m4800-240h0m-4130 60h0m-4760 470h0m9870 140h0m-8280 210h0m400-440h0m-160 370h0m-1080-450h0m40 200h0m1380-330h0m-2520 170h0m6360 110h0m-5890 90h0m8460-210h0m-4850-230h0m-4180 170h0m9800-10h0m500 110h0m-8370 50h0m1610 480h0m450-40h0m-2480-210h0m4870-60h0m3170-740h0m-8680 380h0m5430-290h0m-2450 390h0m-4720 340h0m3100-240h0m-2520-10h0m6020 250h0m-2270-480h0m220-140h0m2930 290h0m1100-130h0m-5520 170h0m150 230h0m6950-360h0m630 540h0m-8400-200h0m6090 160h0m810 170h0m-9180-290h0m10040-140h0m-3820-160h0m-550-50h0m4500-280h0m-170 500h0m-1780 90h0m-4780-120h0m-3300-40h0m2790 260h0m8100-110h0m-1830-70h0m1830-430h0m-6260-240h0m-2230 450h0m4620 10h0m3000-140h0m-1570 120h0m-3360-150h0m680 320h0m3740-240h0m-600 250h0m1930 0h0m-9540-130h0m2730-120h0m6300-280h0m-10360 770h0m7600-180h0m-2330 290h0m-570-450h0m5720 370h0m-10-40h0m-9290-230h0m7820 170h0m-9160-180h0m6420 220h0m2470-630h0m2140 500h0m-7230 50h0m5610 70h0m-8150-570h0m5570 210h0m2320-310h0m-4690 260h0m-2060 210h0m6220-50h0m-2630 190h0m940-50h0m-300-30h0m-4430-70h0m3580-120h0m-1070-110h0m3840 250h0m-2170 290h0m1440-640h0m-1970 60h0m-1480 190h0m1230-110h0m-5240 410h0m1320-470h0m3790 60h0m500 150h0m1640-110h0m-940 70h0m-350 70h0m2670-110h0m1650 550h0m150-300h0m-2800 170h0m-4410-410h0m5530 240h0m-1680 0h0m2740-600h0m-8540 740h0m5790-320h0m620 120h0m2350-480h0m-2230 480h0m-4930-90h0m-1430 180h0m3190-390h0m160 340h0m-3690-330h0m4750-230h0m3840 370h0m790 460h0m-10830-750h0m7030 30h0m-2380 510h0m4530 30h0m50-190h0m-2830 50h0m-2990-400h0m6190 20h0m1230-70h0m270 570h0m-8600-210h0m7200-50h0m620-90h0m-9780 220h0m7440 160h0m780-40h0m-1960-410h0m-6340 10h0m5320 190h0m1870-290h0m1140-170h0m-1180 210h0m-6550 90h0m8640-40h0m-910-150h0m-4030 330h0m460-420h0m1720 360h0m-2320-60h0m-2280-20h0m2030 310h0m3460-620h0m-6370 520h0m1230-250h0m8090 160h0m-4290 90h0m-5760 30h0m7020-430h0m120-120h0m2390 690h0m-4980 110h0m5250-400h0m-3350 0h0m-6640-110h0m5370 10h0m900 130h0m2430 150h0m-6110 60h0m-1560-540h0m1100 530h0m-710-150h0m3480 260h0m1430-10h0m-6940-40h0m10100-180h0m-7410 0h0m3520 40h0m-4190 100h0m-1500-460h0m3450 610h0m-1410-400h0m7200 70h0m-7900-30h0m2240 120h0m-1290 50h0m2130-390h0m40 490h0m3050-510h0m-640-20h0m-7090 90h0m1610 120h0m3740-70h0m-2650 320h0m1580-460h0m2860 660h0m-2130-240h0m860-450h0m-3310 620h0m-2670-570h0m5070 360h0m-4060-470h0m2390-130h0m-720 350h0m5390 670h0m-6390-630h0m740 0h0m-1420 440h0m4670-500h0m-820 60h0m6330-10h0m-9920 370h0m-1030 70h0m1130-350h0m4150-480h0m3610 480h0m-780-110h0m-6030 370h0m2770 160h0m-240-390h0m-4730 110h0m4520-100h0m1200 220h0m-3800-150h0m7090 170h0m240-90h0m240-120h0m-9190 30h0m1570 0h0m6190-120h0m-1090-120h0m-6780 190h0m6870 140h0m260-400h0m-1430 380h0m-3860-40h0m6830-210h0m-3870-220h0m-1480 430h0m200-260h0m470-40h0m-2390 140h0m7820 170h0m1020-230h0m-4130 520h0m-4960-630h0m7560 130h0m1240 220h0m-9990 10h0m10200-230h0m-7180-30h0m7340 240h0m-4270-290h0m-870 140h0m-2420 210h0m-640-160h0m460 150h0m4320-560h0m3740 600h0m-1520 70h0m-4650-650h0m-4690 540h0m8790-100h0m1360 10h0m-9900-220h0m2950 360h0m-1600-220h0m4870-50h0m-4950 220h0m3950-330h0m4900 340h0m-2430-140h0m2840 230h0m-10070-440h0m8140 70h0m-7190 60h0m-1660 270h0m3800-140h0m-530-340h0m-680 480h0m-1970-230h0m5520 390h0m-3010-130h0m-880 10h0m-1570-120h0m9820-20h0m-2760-180h0m-610-210h0m720-70h0m-2570 370h0m1660 60h0m780-140h0m2350 300h0m-320-180h0m-2370 220h0m-1430-110h0m4510-10h0m-1060-470h0m-7010 680h0m-2890-220h0m6850 60h0m410-230h0m720 250h0m-4710-110h0m5200-190h0m-1280 250h0m-5230 50h0m8660-430h0m-3380 300h0m1930-290h0m-3980 710h0m2350-520h0m-500-390h0m-5650 340h0m-1150 70h0m9570-190h0m-2810-130h0m-920 410h0m3110 30h0m-7530-650h0m-90 370h0m6530-380h0m350 730h0m-4110 40h0m-910-400h0m4230-10h0m240 200h0m3220 130h0m-3460-610h0m-1500 530h0m-2090-30h0m770 100h0m-2980-210h0m6350 350h0m-6050-600h0m-1730 560h0m8910-90h0m-5510-60h0m-1430-120h0m3970-70h0m-3920-20h0m5770-40h0m190-30h0m-1040 90h0m-4350 170h0m-2260-380h0m6190 110h0m1380 290h0m1210-370h0m-4190 280h0m-4050 20h0m8860 30h0m-80-170h0m-660 90h0m-210 60h0m860-30h0m-240 70h0m-8080-190h0m620 20h0m6780 10h0m-5940 570h0m660-350h0m5080-220h0m-2770 0h0m-6040 220h0m3160-30h0m6520-130h0m-2080-350h0m-420 520h0m-910 260h0m2300-240h0m-4390-190h0m-1660-40h0m7190 420h0m570-110h0m-9420-310h0m7960 120h0m-7060-110h0m9150 470h0m-6900-520h0m1030-280h0m2570 210h0m2930-190h0m-3020 80h0m-2960 440h0m-3420 30h0m5930 310h0m2640-110h0m190-220h0m-8320-170h0m1880-100h0m6550 70h0m-2670-60h0m3760-300h0m-11190 460h0m2260-30h0m6960 30h0m-1140-310h0m2410-330h0m600 730h0m-6600-210h0m-2800 340h0m4920-110h0m-1790 200h0m4280-640h0m-4800 500h0m490 0h0m4740-450h0m-2060 250h0m-450 100h0m3120-430h0m-1820 240h0m-7190 150h0m-730-540h0m8090 300h0m-560 450h0m-4210-270h0m4190-170h0m1640 70h0m-4170-100h0m5180 400h0m-2070 200h0m40-410h0m2590-420h0m-3490 190h0m-1930 560h0m1660-180h0m1180-130h0m-4860-90h0m-1840 160h0m6120-60h0m-7220-400h0m4320 240h0m6020-160h0m-10350 400h0m3580 10h0m-1250-60h0m630 280h0m-320-330h0m4890-90h0m-6580-170h0m3830-330h0m-5140 710h0m860-420h0m-1030 540h0m-70 110h0m6730-100h0m4270-180h0m-2570-190h0m-8260-60h0m9810-140h0m-270 190h0m410 520h0m-1110-840h0m-5930 760h0m-2760-410h0m1220-20h0m8160 460h0m-4440-350h0m-4890 240h0m6670-300h0m-1150 490h0m-2530-610h0m5200 100h0m-3330 500h0m-3660-950h0m7040 270h0m-2670-230h0m1890 670h0m530-60h0m-3940 70h0m360-810h0m-4320 620h0m5880-160h0m-3490 80h0m3210-150h0m2800 210h0m-3300-390h0m-260 330h0m5260 160h0m-7150-330h0m-2990 400h0m910-200h0m9440-20h0m-8440 70h0m-1690-10h0m3480-10h0m-1690 80h0m7600 240h0m80-130h0m-4990-180h0m-2420 20h0m630 110h0m780-240h0m-1250 20h0m-1200-50h0m3900 200h0m-2780-210h0m4370-120h0m-590 400h0m-2210-190h0m400 10h0m6360 330h0m-7920 120h0m2230-710h0m-1900 360h0m-1810-140h0m-840-90h0m9050 120h0m540 190h0m-3490 30h0m-4740-70h0m-560-60h0m7500-220h0m-1520 320h0m3410-270h0m-6860 70h0m5060-90h0m-5930 320h0m-1070-190h0m-1850-270h0m9630 150h0m-8410 350h0m8120-630h0m270 630h0m-630-440h0m-1490 440h0m-2690-20h0m-2250-200h0m4990 180h0m1250-270h0m-3430 150h0m-1900 90h0m-2100-80h0m3440-80h0m-350 100h0m1340 50h0m-1860-450h0m540 170h0m210 450h0m1850-440h0m3880 200h0m-8120-290h0m4490 90h0m2690 510h0m-7430-170h0m-470-200h0m8590 30h0m-7940 90h0m-1650-60h0m10060-20h0m-6600-310h0m2590 480h0m3400-180h0m-2620 160h0m340-460h0m1150 240h0m-2520 410h0m1130-400h0m800-380h0m-7030 340h0m3320 80h0m3340-260h0m1960 10h0m550-200h0m-4110 630h0m-4550-420h0m830 230h0m-910-200h0m6150-320h0m1970 390h0m-4350 190h0m-4850 190h0m9340-200h0m-8430-50h0m4860 230h0m-2330-190h0m1180-120h0m-4320-70h0m4820 110h0m1260-270h0m2780 820h0m-5650-780h0m4770 380h0m-480 10h0m-7090-180h0m1480-40h0m-720 50h0m6910 10h0m-3510 30h0m730 150h0m3740 270h0m-9820-680h0m7610 190h0m-2400 260h0m-1030-10h0m-480 60h0m1840-190h0m-3850 10h0m6890-110h0m-3220-80h0m-620-220h0m-2870 520h0m-2010 220h0m2340-260h0m7180-170h0m-7990-30h0m-120 10h0m5160-120h0m4050 0h0m-8050-20h0m-1100 100h0m6110-130h0m1060 660h0m1640-570h0m-6740 260h0m1780 10h0m4400 40h0m-5200-160h0m-280-320h0m6200 140h0m-1900-170h0m-8030 10h0m600 100h0m7720 280h0m1870-240h0m-7810 70h0m5310 200h0m-2300 220h0m3530-400h0m-2490 100h0m-3190-560h0m3970 420h0m-7280 70h0m4110 200h0m-950-360h0m-2420-50h0m5630 120h0m1340 630h0m2080-170h0m-8930-530h0m2570 210h0m2080 70h0m1360 160h0m-2610 100h0m2550-100h0m2250-520h0m-7670 590h0m1980-290h0m5210 10h0m-4510-310h0m5040 200h0m-2310-50h0m-5350 190h0m2660 170h0m-2060-430h0m1310 130h0m-220 60h0m5100-160h0m-2220 340h0m2630-80h0m-4210-310h0m-2260-70h0m1600-30h0m5480 150h0m-7000 310h0m2280-140h0m2690 400h0m2530-100h0m-2450-480h0m-900 520h0m-2130 120h0m5610-140h0m-6290-480h0m170 90h0m3910 20h0m340 330h0m1180-120h0m-7160-460h0m7180 210h0m-7970-50h0m-320 390h0m6540 320h0m870-980h0m-6820 540h0m3810-400h0m1410 530h0m-160-720h0m2480 310h0m-2780-350h0m-5230 580h0m1790 140h0m5390-730h0m-5780 560h0m2140-330h0m-4610 260h0m990-460h0m4030 330h0m-1240 310h0m70 90h0m3950-160h0m-270-500h0m-7620 530h0m810 120h0m2920-340h0m6130 50h0m-6040-70h0m-600 340h0m-490-90h0m-2140-300h0m140-90h0m7280 80h0m-1060 390h0m-5730-30h0m6580-10h0m-10-310h0m-4930-130h0m-500 460h0m7450 410h0m-4520-480h0m-3370 410h0m7300-580h0m-5240 150h0m-3640-400h0m9390 400h0m-7930-150h0m3410-370h0m-4970 360h0m7500 350h0m-3670-100h0m1710-230h0m4240-240h0m-1600 290h0m-4060-60h0m5080-390h0m-3510 720h0m-3620-340h0m-2220 400h0m9770-350h0m-5070 430h0m-650-60h0m-440-920h0m4780 80h0m-1900 620h0m-5230-240h0m2890 110h0m4350-230h0m-9440 350h0m1670 60h0m7590-60h0m-1100-490h0m-4620 70h0m780 160h0m6390 30h0m-3750 0h0m-5690-400h0m-1060 740h0m1770-450h0m9140 10h0m-6750 380h0m-1260-370h0m1170 40h0m-2020 360h0m1450 30h0m2210-110h0m-510-280h0m-610-70h0m5130 330h0m-3650-250h0m3100-420h0m-9070 760h0m8170-40h0m-6240 80h0m7060-140h0m-4470 40h0m5570 140h0m-5110-190h0m2510-40h0m-2910-320h0m660-10h0m2170 330h0m1230 130h0m-5880-180h0m-1390-150h0m2640 310h0m5360 70h0m-3460 10h0m30 70h0m-190-440h0m-5910-20h0m100 50h0m940 330h0m5110-150h0m-1470-150h0m890 420h0m5190-160h0m-7400 20h0m3570-370h0m2510-110h0m-5580 30h0m2080 330h0m4780-10h0m-4110-290h0m3640 430h0m-3200-720h0m3500 760h0m-9660-120h0m2770-130h0m-3600 150h0m1820 90h0m-570-220h0m8230-210h0m-8360 320h0m4660-30h0m3150-120h0m-4740 250h0m700-370h0m1560 240h0m4400 300h0m-7030 40h0m-1180-70h0m2360 60h0m-4700-500h0m4030 290h0m4380-290h0m-2080-300h0m-1150 470h0m-810 110h0m1290-190h0m-890 140h0m4990-340h0m-3100 380h0m-2140-200h0m-5010 280h0m9480-80h0m-7900-420h0m2440 440h0m-2630-30h0m-410-330h0m7330 200h0m-5640-250h0m3010 210h0m-4090 0h0m-1620 150h0m7780 30h0m-2800 260h0m-70-970h0m5590 430h0m-1970 370h0m-7780-40h0m5450-370h0m-5860 70h0m5990-40h0m1090 40h0m3800 20h0m-8150 190h0m4160-90h0m3100 90h0m-2570-70h0m920 510h0m-8290-420h0m630-160h0m-1020 90h0m10280-10h0m-6230-300h0m1960 320h0m-5500 90h0m5230-240h0m-930 180h0m630-80h0m-3850-240h0m9290 520h0m-7010-620h0m-3450 260h0m1570 110h0m40 280h0m3060-310h0m-2300-80h0m7530 570h0m-130-720h0m1030 30h0m-6310-320h0m-3920 180h0m1690 470h0m4360-180h0m2490-350h0m-6240-200h0m-3280 580h0m1020 360h0m-210-470h0m7120-90h0m-3970 230h0m810 140h0m1760-50h0m-6280-230h0m7930 70h0m-2550 60h0m240-250h0m-4170 170h0m7310 50h0m-8920 50h0m5520 0h0m1170-200h0m-1590 320h0m4400-150h0m-8790 320h0m4980-520h0m-920 170h0m3600 50h0m-3590-460h0m5220 90h0m-4850 270h0m6000 140h0m-6970-180h0m3540 270h0m-4260-680h0m280 440h0m2520 630h0m4400-490h0m-2440 360h0m1420-460h0m-9340-180h0m7970 150h0m1090 140h0m-4720-240h0m3820-30h0m-4400 360h0m-3320-710h0m400 740h0m8550-330h0m-8120 100h0m9240 320h0m-2720-240h0m2940-230h0m-8540 260h0m410-540h0m630 100h0m-1130 390h0m2190-130h0m1110 360h0m770-530h0m-5750 630h0m2250-80h0m200 60h0m3740-410h0m-2570-540h0m-470 670h0m830-320h0m6350 290h0m-2240-260h0m-7130 450h0m8370-580h0m-990 690h0m1230-410h0m-7010-350h0m-1750 320h0m2820-80h0m1470 50h0m380 240h0m-4100 160h0m-790 250h0m-250-370h0m3540-260h0m200-340h0m-3890 730h0m-700-130h0m8260-510h0m-3600 330h0m-3530 190h0m4810-290h0m4120 210h0m-9080-460h0m7220 340h0m-2760-70h0m-3780 10h0m9010 10h0m-8430 560h0m4780-480h0m-410-130h0m-560 360h0m-2100-170h0m5530-100h0m-5070-40h0m-160-20h0m1590 230h0m1950-20h0m-2920-140h0m230 70h0m-1080 100h0m-2650-430h0m9520 670h0m-3770-180h0m-5750-610h0m290 390h0m3680-250h0m3700-240h0m-3690 410h0m2110 130h0m1780-400h0m-3920 410h0m-2790 370h0m570-450h0m2950-50h0m1850 220h0m1370 90h0m-4230-240h0m-2080-340h0m-2450 640h0m8650-400h0m-6380 60h0m5560-60h0m570 0h0m-6360 350h0m-2030-150h0m4540 310h0m4260-380h0m280-270h0m-9460 310h0m5990 120h0m3030-250h0m-9330 40h0m5590 270h0m4040-140h0m-7470-70h0m3400-360h0m90 290h0m4120 20h0m-8570-160h0m1520-30h0m3030 430h0m-1250 170h0m-2370-800h0m4980-100h0m-6360 680h0m3860-650h0m4470 490h0m-5530-130h0m2140 40h0m3890-110h0m1040 210h0m-2140 220h0m-2170-130h0m-3550-220h0m-2750 0h0m2500 150h0m2780 40h0m-2610 350h0m6480-350h0m-5670-430h0m-2610 270h0m350 150h0m9900-10h0m-3100-60h0m-2010 50h0m4300 60h0m-7220 50h0m-2740 60h0m-270-430h0m7780 180h0m-5310-40h0m-1200 80h0m8790 140h0m-1830-270h0m-6530 60h0m5410 360h0m-6800-570h0m7290 60h0m-210 480h0m3300-110h0m-9430 240h0m2280-260h0m4670-190h0m-1990-40h0m2000-10h0m-2970 110h0m-5400 270h0m6180-130h0m-240-40h0m2600-150h0m-2700 500h0m1270-380h0m200 260h0m-1510-270h0m3310-250h0m-5900-140h0m5440 600h0m2210-60h0m-8550-340h0m7940-70h0m-1860 620h0m-7230-800h0m2630 640h0m-1060 150h0m2670-510h0m-2680 360h0m1960-660h0m360 100h0m-2150 70h0m3690 470h0m-680-340h0m3600 150h0m280-270h0m-3500 300h0m-960 30h0m-1060 90h0m4340-150h0m-8210-110h0m1990 280h0m1280-370h0m6460 360h0m-3250-640h0m-6500 540h0m2180-70h0m6170 20h0m-3330-200h0m-1270 290h0m640-180h0m-2110 520h0m4010-320h0m2780-170h0m-3860-30h0m-1640 150h0m3730 160h0m-1840-150h0m690 20h0m4390-170h0m-2240-10h0m-170 290h0m-8480-390h0m8670-60h0m-3680 470h0m5440-310h0m-2280 170h0m-1480 70h0m440-270h0m1200-70h0m1930-290h0m680-70h0m-8960 570h0m-1990 0h0m2010 100h0m5260-310h0m-4410 330h0m-1750-60h0m8720-50h0m640-30h0m-6440-30h0m1940-10h0m1130-400h0m-6520 400h0m-260 20h0m6880-230h0m-3210-10h0m5950 330h0m-9590 140h0m3230-210h0m-1190-160h0m4910 330h0m-6500-530h0m2390 400h0m6800-170h0m-8420 160h0m2570-570h0m-2100 590h0m8580-140h0m-4130-180h0m1420-300h0m-5860 530h0m7850-330h0m-8400 200h0m8890-190h0m-8340 670h0m1340-270h0m7500-230h0m-2230 430h0m-3580-250h0m-3060-320h0m7920 640h0m-5380-420h0m2010-100h0m-6220 100h0m-440 130h0m2860-40h0m-2230-500h0m8060 350h0m-6370-80h0m1700 350h0m-1130-60h0m6770-60h0m-8700-430h0m2700 380h0m-790-260h0m-1460-60h0m460 400h0m7710-590h0m-2560 850h0m-6180-180h0m2440-270h0m1010 650h0m5030-570h0m-2150 110h0m2380-180h0m-9260-260h0m4090 590h0m730-390h0m-4900 140h0m2980 150h0m-250-440h0m-340 530h0m8230-190h0m-6200 180h0m2190-140h0m-5390 60h0m900 30h0m7400-190h0m-6370 140h0m-1740-510h0m4370 680h0m-5780-460h0m9560 380h0m-9240-110h0m4040 180h0m2070-510h0m-1920 330h0m-180-50h0m-1490 70h0m-910 20h0m4320-70h0m2510 20h0m-7500-80h0m-1310-140h0m7140 350h0m-2400-160h0m-2610-160h0m3090-50h0m4800 210h0m-8630 540h0m1430-640h0m-2850 100h0m10990-50h0m-150 190h0m-10720-380h0m3440 210h0m-3180 200h0m10290 360h0m-9410-570h0m5200 290h0m-3860-90h0m2940-410h0m-1510 230h0m420-50h0m-3390 100h0m6700 80h0m1540-200h0m-6380-10h0m3020-140h0m2010 180h0m-1280 350h0m1350-610h0m720-80h0m-6370 480h0m-1010 10h0m-1050-40h0m7920-340h0m-7420 210h0m1120-60h0m4600 270h0m4280 100h0m-3810-430h0m-5100 90h0m7770 210h0m-2340-220h0m2820-350h0m-5900 680h0m2010-490h0m2980-110h0m930 750h0m-6960-590h0m3680 420h0m-4270-150h0m5550-310h0m-880 80h0m-2400 250h0m-1000 270h0m1770-560h0m5430 280h0m-10910 110h0m40-220h0m6900-60h0m-3190-230h0m-110 500h0m-600-320h0m4110 450h0m2170-860h0m620 970h0m-2200-100h0m-5260 30h0m2090-250h0m-4100-120h0m5710 370h0m2570-500h0m2300 60h0m-8470 190h0m7120 40h0m-2020-320h0m-3000 410h0m-4440-170h0m3130 20h0m110-240h0m2460 140h0m3250 190h0m-7530-340h0m8880-130h0m-4970 140h0m-260 510h0m4280-270h0m-6920-60h0m780-120h0m-3340 20h0m4730 450h0m-1980-370h0m6790-330h0m-8250-90h0m4490 300h0m-2170 30h0m-2860 110h0m8160-510h0m-1870 980h0m170-850h0m2120 400h0m-2750-510h0m2340-60h0m-1850 750h0m-1070-300h0m-2340-200h0m6880 330h0m-8830 240h0m2190-260h0m2140 100h0m2620-630h0m-6730 610h0m4160 90h0m-880-180h0m1940-430h0m-2780 280h0m-2690 70h0m7810-290h0m-2680 380h0m-360-160h0m-6170 90h0m1410-40h0m-300 190h0m850-250h0m4840-40h0m-3780-160h0m2770 360h0m-3590 240h0m5710-260h0m-2920 30h0m-5450-200h0m8080-40h0m1040 350h0m-7800 90h0m6820-160h0m1800-360h0m950 410h0m-10120-360h0m4100-110h0m-5020 560h0m150-140h0m110 90h0m7130-310h0m-2510-50h0m2580 340h0m2780 110h0m-2850 20h0m-1400-550h0m2980 430h0m-1360-240h0m-3890 80h0m-320 20h0m-2680-510h0m8950 510h0m-1810-150h0m-3310-10h0m2710 160h0m-1660-350h0m3110 470h0m-900 10h0m-3860-410h0m6020 760h0m-4730-260h0m-3790 270h0m7430-530h0m-8890-300h0m8830 370h0m-5130-70h0m2920 380h0m-5400-360h0m9240 50h0m620 150h0m-11150-70h0m3750 0h0m-3000 40h0m10540-110h0m-3760-40h0m-5640-210h0m2080-60h0m-3870 550h0m2620 140h0m460-930h0m4820 210h0m1060 530h0m-530-100h0m520-160h0m-8100-290h0m960 500h0m280-140h0m1760 70h0m1960-70h0m4290-290h0m450 280h0m-1720 100h0m-8950-170h0m7110-110h0m2780 40h0m-6440 270h0m6970-490h0m-1060 90h0m-2950 210h0m-5260-150h0m9590 110h0m-6340-160h0m3850 280h0m250-360h0m2570 500h0m-11050-40h0m10780-60h0m-10430-230h0m10050-160h0m-9210 340h0m3340-70h0m-2930-430h0m7910 380h0m-9440 0h0m3210-70h0m4360 460h0m-3310-500h0m5670-130h0m-2090 200h0m1000 170h0m330 90h0m360-120h0m-7350 10h0m-360-110h0m2560-460h0m5850 580h0m-2840-10h0m-3690 80h0m6980-90h0m600-490h0m-1590 270h0m-5960-20h0m4410 420h0m-370-410h0m-990-160h0m3790 280h0m-2540-240h0m-2420 430h0m-630-90h0m-110-250h0m-870 290h0m5010-390h0m-8940 340h0m5620-330h0m-4170-20h0m4870 360h0m-2410-200h0m-140 240h0m-1290-460h0m5820 870h0m20-400h0m-2160-30h0m2870-180h0m-8660-300h0m8740 580h0m-7130-10h0m7240 60h0m-4840 180h0m320-290h0m620-130h0m3990-70h0m1450-360h0m-5020 520h0m-3290 30h0m3980-260h0m-2690 310h0m-3610-270h0m9320 360h0m1010-50h0m-8550 80h0m-340-350h0m5740-70h0m-1870-310h0m-1070 390h0m-2610-80h0m7920-20h0m-4490 70h0m-4870 280h0m7220-260h0m-1610-210h0m550-130h0m-260 300h0m-4660-450h0m7270 450h0m-7240 340h0m1070 350h0m2530-590h0m-5380 90h0m2960 80h0m5750-380h0m-6920 130h0m8420 250h0m-2240-460h0m-2920 20h0m2450 930h0m-5370-590h0m460-200h0m6680-120h0m-5690 470h0m4590-10h0m-5070 60h0m4400-280h0m-6080-160h0m1970 340h0m1120-170h0m-3800 190h0m-550-180h0m1240 120h0m220-70h0m-90 100h0m4230-400h0m-1500-230h0m-1240 660h0m-1750-100h0m9030 120h0m-1070-320h0m-1850 260h0m-3480-350h0m2470-160h0m-5860 550h0m9110-270h0m-2830 360h0m-4870-250h0m7970-70h0m-3120-180h0m1990 290h0m-5620-310h0m-1810 180h0m300 250h0m3890-150h0m-4290-320h0m4870 20h0m3280-210h0m-6030 90h0m1950 290h0m60-190h0m-4310 410h0m1140-100h0m2140-150h0m-2620 240h0m1470-360h0m2570 320h0m840 390h0m-970-680h0m3160 390h0m-7340-570h0m2240 30h0m-610 190h0m3230 490h0m-4090-780h0m5120 680h0m-4420 110h0m-280 50h0m4760-520h0m1300 50h0m620 100h0m-2850 200h0m-6070 90h0m720-590h0m1350 660h0m610-640h0m7500 420h0m210-620h0m-2940 630h0m-1970 170h0m3570-230h0m-5070-60h0m1360 260h0m-150-180h0m-1800-180h0m830 400h0m-1300-130h0m5700-410h0m2290 40h0m-5560 210h0m2980-70h0m-8270 200h0m2020-150h0m8910 90h0m-4020-120h0m-6930-50h0m2240 630h0m7800-540h0m-5430 90h0m510 60h0m4960-170h0m-6640 170h0m3140 50h0m3020-220h0m-50-380h0m-8660 580h0m670-150h0m5750-30h0m-1470 70h0m4080 40h0m-3660-240h0m1700 340h0m780-220h0m-4430-60h0m-270 70h0m40 40h0m-3530-130h0m8850 260h0m-3160-420h0m-5290 460h0m6060-60h0m-4670 130h0m6750-90h0m-2650-320h0m810-310h0m-6340 530h0m2460 10h0m-2970-110h0m6870 140h0m1990 90h0m-2100-720h0m20 250h0m-6480 270h0m3880-230h0m1680 220h0m-6630 110h0m1280-390h0m1120 360h0m7470 70h0m-3110-310h0m-820 150h0m2400-350h0m-7650 400h0m3930-170h0m-1460-110h0m7560 280h0m-8880-10h0m-1170 210h0m230-260h0m2710 40h0m6760-80h0m-10150 20h0m4670 230h0m1420-250h0m390 170h0m-590-480h0m-840 120h0m-2400 280h0m6560-140h0m-7470 130h0m740 320h0m-50-360h0m3490-20h0m4650-180h0m-5170 130h0m4910 330h0m-4530-490h0m-5930 20h0m2150 50h0m7070 170h0m-210-220h0m1660 110h0m-3570-180h0m-3950-130h0m8090 610h0m-4640-300h0m4450 190h0m-7210-140h0m-360-50h0m-1970-120h0m-180 100h0m4490 230h0m3470-270h0m-6430 130h0m7190-10h0m-6820-170h0m1950 190h0m2600 140h0m-4700 190h0m-430-40h0m7410-330h0m-9370-50h0m7450 270h0m-3220 190h0m-1160-80h0m7440-150h0m-5630-70h0m5360-120h0m180 350h0m-8140-160h0m-210 40h0m7860 60h0m500-350h0m-8670 360h0m2120-60h0m5550 10h0m760 100h0m-5960 30h0m3500-190h0m2830-280h0m-360 250h0m-4230-530h0m2790 420h0m1110 20h0m-8500 190h0m8000-510h0m-2130 240h0m-3060 180h0m-1820 170h0m-1970-310h0m7010-170h0m-4780-390h0m7660 340h0m-2420 560h0m-6820-500h0m5430-110h0m-6570-230h0m3600 620h0m6170-150h0m-9490-390h0m4690 600h0m2180 80h0m2120 70h0m-3350-50h0m2320-450h0m-5390 540h0m7770-470h0m-3480 320h0m-3370-630h0m-3580 350h0m1750-380h0m420 760h0m7660-210h0m-5980 110h0m-1070-500h0m2980 310h0m-4570 340h0m8790-810h0m-8280 350h0m7620 300h0m-2760-150h0m-5860 60h0m-530-370h0m1000 160h0m-810 110h0m1080-70h0m2760 160h0m-1250-500h0m3480 320h0m200-190h0m-5500 420h0m1460-470h0m3850 660h0m-2510-420h0m-4230-410h0m8850 470h0m-7340-170h0m3490-210h0m5190 640h0m-6970-90h0m-1730 310h0m7950-360h0m-1700-240h0m-3640 440h0m2400-40h0m-4860-350h0m-1800 250h0m5000 70h0m3030-170h0m-3980 40h0m6540 40h0m-2020-470h0m-3800 480h0m500 10h0m-4580-330h0m5500-180h0m-3700 610h0m7800-50h0m-5170-250h0m5780-240h0m-1070-40h0m40 510h0m-6100 250h0m3400-600h0m1210 390h0m80 250h0m-310-400h0m-6100 110h0m1000-290h0m6560 210h0m150 50h0m-9910 40h0m7390-210h0m2260-20h0m-8680-130h0m8660-20h0m-6240-180h0m-1180 370h0m7730 60h0m-5570-30h0m5420 40h0m-10030-40h0m7770 0h0m-6460 100h0m-960 180h0m2440-430h0m-1700-220h0m6140 480h0m3610-270h0m-8980-200h0m7540 130h0m-2350 190h0m-6750-180h0m-350-190h0m6190-50h0m-3170 400h0m3140 130h0m-3490-60h0m1820-350h0m-4210 360h0m520-280h0m5250 240h0m-4800-490h0m4760 1060h0m-4030-190h0m1260-250h0m-570-530h0m5600 280h0m-150 350h0m910-290h0m-7710-30h0m-110-200h0m-1020 250h0m2250 310h0m1840-450h0m2870 120h0m-4040 280h0m8240-410h0m-10340 200h0m5260-30h0m-50 30h0m-4910-180h0m9290-30h0m-2240 0h0m-2420 390h0m-3390 100h0m6280-320h0m-3020 70h0m-2940 160h0m3050 230h0m4450-460h0m-650-40h0m-5770-170h0m4930 170h0m-3160-370h0m800 490h0m-4240-540h0m7020 600h0m340-30h0m1720-10h0m-3750-30h0m-5550 20h0m-600-390h0m5920 290h0m1810 340h0m-820-370h0m180-50h0m2620 250h0m-10150-10h0m90 60h0m-380 140h0m3930-340h0m-4200-50h0m4700 150h0m-4800 110h0m50-180h0m9720-120h0m-9160-10h0m6160 90h0m-890-120h0m1560 460h0m2310-350h0m-7420 290h0m-1580-310h0m4530 0h0m-5650 160h0m4790 160h0m1260-650h0m5290 660h0m-7040 60h0m-2260-480h0m-1500 200h0m10320 140h0m-5420-460h0m-3550 350h0m-760-60h0m4910 210h0m-3780 30h0m7010-290h0m480 40h0m190-70h0m770 150h0m-2170-230h0m-2020-380h0m-3400 630h0m-210-300h0m6460-210h0m-210 560h0m-8470-130h0m5540 390h0m4580-370h0m-7020 360h0m7250-280h0m-7850-310h0m7910 350h0m-5870-220h0m1060-120h0m1080 170h0m-580-240h0m-890 410h0m-10-400h0m-2950 150h0m1870-340h0m1790 430h0m3110 190h0m-7060-50h0m1820 130h0m-4110 150h0m11020-200h0m-4730-240h0m-4670 30h0m4600 240h0m3870-120h0m-3650-590h0m-1890 400h0m1240 30h0m-2610-270h0m4770 350h0m-7520 80h0m7370 30h0m2430-240h0m-6120-160h0m1100 70h0m5460-130h0m-4700 470h0m-5460-190h0m6220-310h0m4060 550h0m-5950-540h0m2440-140h0m1040 740h0m-1330-250h0m-4400-90h0m3740 180h0m-5820-530h0m10000 300h0m-6660 350h0m5820-190h0m-2450-390h0m2980 210h0m-8550 510h0m240-200h0m-1560-350h0m6960-180h0m-3240 360h0m6040 140h0m-3340 320h0m-2930-560h0m-260 40h0m-2120-180h0m8670 150h0m-790 200h0m-6480-270h0m450 130h0m-650 70h0m5670 100h0m440-390h0m-6770 400h0m-1890 200h0m3360-310h0m-2030 290h0m-20-440h0m2750-200h0m-130 40h0m-3450-10h0m5100 0h0m160 400h0m-3190-210h0m3670 80h0m-2930-50h0m2040 80h0m-610-120h0m-300 50h0m-300 160h0m3840-320h0m50 70h0m-2490 310h0m4820-310h0m-2520 330h0m1560-290h0m-2940-100h0m950 520h0m-510-110h0m-1280 30h0m-2390-530h0m5070 300h0m2140-360h0m50 190h0m-3360 70h0m-1290 270h0m-910 90h0m-3240-480h0m610 300h0m5480-120h0m-4020 150h0m5400-470h0m-6130 240h0m7210-190h0m-5140 370h0m3160-70h0m-5620 200h0m7780-80h0m-2010 60h0m-80-400h0m-4630-390h0m4190 910h0m-7880-90h0m6680-130h0m-1610-220h0m4650 480h0m-3100 40h0m-6910-440h0m4340-160h0m-3910 260h0m8760 130h0m-4130-260h0m1000 270h0m-4990-10h0m3770-780h0m2960 700h0m-1020 20h0m3210-320h0m990 420h0m-10710-170h0m1840-330h0m7370 490h0m-4490 10h0m2030-130h0m-6420 40h0m-720-460h0m830 560h0m4660-170h0m1580 80h0m-1850-370h0m-20 110h0m-3590 270h0m9590 10h0m-9660-660h0m3100 480h0m6150 80h0m-4160-40h0m4440-180h0m-3280 420h0m-6620-260h0m5200 0h0m-1460 120h0m3920 70h0m-7910-30h0m5360-240h0m-100 200h0m-3730-660h0m8480 530h0m-8140-110h0m7930 630h0m-4470-350h0m3830-400h0m710 520h0m-7140-620h0m450-110h0m5850 760h0m-3730-230h0m-2360-10h0m-100 10h0m3970-340h0m-2530 50h0m100 420h0m-5030-220h0m6270 310h0m3560-310h0m-10010-490h0m7980 980h0m990-500h0m-6270 160h0m4270-570h0m3710 270h0m-2390-20h0m-2300 580h0m4840-590h0m-9350 230h0m8190 120h0m-1020-390h0m-1530 200h0m540 150h0m-5330-400h0m4100 70h0m1220-50h0m-1560 150h0m990 70h0m-6340 60h0m4350 160h0m2370-110h0m-6570 20h0m1410-320h0m-630 500h0m7320-700h0m-450 660h0m-3340-380h0m110 530h0m-3790-50h0m2740-330h0m-2470 120h0m2430-110h0m-190-270h0m2840 280h0m1930-50h0m-5920 340h0m-2510-120h0m7070-440h0m-2140 700h0m-2850-510h0m6630 30h0m-7240-230h0m3010 10h0m-440 560h0m1900-10h0m-2490-240h0m3630 40h0m-1460 230h0m-4110-170h0m9320-170h0m-10640 190h0m3760-340h0m-2650 260h0m8380 0h0m190 110h0m-9110-310h0m1410 390h0m6590-180h0m2030-70h0m-11170-170h0m4410 20h0m6060-80h0m-2820 450h0m-2150 100h0m3110-180h0m-6440-200h0m6580-250h0m900 690h0m-1300-570h0m-410 40h0m-4030 140h0m2240-190h0m-1020 50h0m-2300 290h0m-2530-300h0m350 470h0m5840-590h0m-1400 370h0m-4480 160h0m8910-220h0m1280 190h0m-5190-450h0m5250 210h0m-6950-430h0m-480 350h0m-3340 40h0m-150 190h0m10040-150h0m-350-170h0m-6730-370h0m6290 250h0m-8990 190h0m9980 310h0m-5070 200h0m-3930-840h0m5080 60h0m-180 130h0m-1400 320h0m5830-100h0m-8650-70h0m430-170h0m5560 100h0m1700 330h0m1720 110h0m-1010-670h0m270 250h0m-7270-330h0m6330 290h0m-410 290h0m-6130 270h0m6520-430h0m-6420 280h0m6300-130h0m-6690 190h0m3060-130h0m-1630 30h0m1110-460h0m-1940 240h0m-1110-40h0m7590-130h0m-1770 150h0m-3630 160h0m3660-450h0m1450-250h0m300 160h0m-8680 270h0m1590 30h0m7240-250h0m-9050 120h0m1340 330h0m970-400h0m-2970 580h0m10520-300h0m-8870 90h0m2500-150h0m-120-50h0m200-50h0m470 30h0m-4350 60h0m1360-70h0m1530 250h0m1060-70h0m-4550 210h0m2360-660h0m4490 420h0m-800 0h0m-5630-490h0m3660 590h0m3820-260h0m-4550 30h0m1560 220h0m970-30h0m-1990 200h0m480-60h0m-4350 180h0m3580-470h0m-2560-120h0m1010 80h0m5230 320h0m-1780-250h0m-920 200h0m3910-80h0m-780 20h0m-6650-30h0m10110 130h0m-6630-100h0m600-150h0m5720 100h0m-1960 140h0m-8950 140h0m2040-410h0m8090-60h0m380-120h0m-10440 540h0m8170-440h0m-1810 580h0m1470-10h0m3010-360h0m-830 190h0m650 220h0m-9360-10h0m5980-490h0m3010-90h0m-3310 120h0m-6320 70h0m9520 140h0m-190-130h0m-2060-230h0m3290 310h0m-3550-110h0m-5230 120h0m8180 30h0m-1600-270h0m-2910 140h0m1650-480h0m-1730 210h0m-1650 80h0m1850 160h0m-5070 80h0m3550 220h0m-4510-510h0m4980 550h0m-3010-410h0m8610 420h0m-3920-120h0m2150-130h0m-6180-50h0m2420-110h0m-3110 20h0m1370-500h0m-1720 450h0m8530 550h0m-9200-700h0m5930 500h0m3640-10h0m-3890-60h0m-500-230h0m-5160-30h0m8990 450h0m-310-500h0m-4920-370h0m2510 400h0m2960 320h0m250-100h0m-8340-40h0m5630-130h0m1630-360h0m-6870 20h0m5140 480h0m-1030-230h0m110 90h0m2550 120h0m-3740-100h0m410 80h0m40 40h0m2360 240h0m-1580-30h0m-6720-590h0m3590 460h0m-2450 40h0m-80-70h0m9590-70h0m-7760 300h0m7500-300h0m-8980 80h0m9170-460h0m-10410 80h0m7530 400h0m2470-470h0m-6360 480h0m2240-120h0m1720 130h0m-120-460h0m-4420 460h0m-160-490h0m-370 140h0m5410 10h0m-8450 150h0m8240 60h0m-90 190h0m-460-370h0m1700 140h0m-2340 360h0m-4000-360h0m-2930 220h0m4280-320h0m2970 250h0m3400 60h0m-3810-740h0m2530 220h0m-1620 320h0m-4600-180h0m-640 70h0m180 70h0m3070-90h0m2960-370h0m-4640 810h0m2610-750h0m1660 600h0m120-600h0m-2450 420h0m230 80h0m-980-90h0m-2510 40h0m7990-520h0m-8100 700h0m-860-440h0m7810 520h0m-6940-270h0m-1870-290h0m6990 400h0m-5790-370h0m7920 50h0m930-160h0m-10960 40h0m10460-50h0m-4610 420h0m4200-610h0m-230 30h0m-350 520h0m-5010-310h0m2290 660h0m-6690-660h0m1180 370h0m9690 170h0m-1240-260h0m-4390 210h0m3510-420h0m50 380h0m-6810-200h0m5200-110h0m200 80h0m-5050 130h0m1530-50h0m4850-60h0m-8080 180h0m8060 170h0m-1250-310h0m-3730-120h0m4440 80h0m2420-490h0m-1650 700h0m-3590 120h0m540 240h0m-4460-560h0m2510-430h0m-110 850h0m6150-250h0m-8220 190h0m530-530h0m7300 350h0m-3350-80h0m-1430 360h0m-1260-440h0m4020 30h0m2770-220h0m-5370 590h0m5510-160h0m-30-40h0m-7720 90h0m5840-580h0m1280 350h0m-6400 20h0m6030-130h0m1340 60h0m-1880 120h0m-7610-330h0m7300 270h0m-7020-330h0m9500 450h0m-3670-380h0m430 490h0m-300-330h0m2150 240h0m-1700-240h0m-2670 250h0m-1210-280h0m6690 20h0m-6950-120h0m7320 450h0m-4540-60h0m4540-290h0m-9260 220h0m2660-20h0m3600-100h0m-3810-30h0m2270-160h0m510-360h0m-3810 230h0m2200 160h0m-3880-320h0m-20 140h0m3010 140h0m3640 80h0m-690 80h0m-5910 60h0m2240-10h0m-2000 190h0m7300-420h0m-1310-150h0m-1400 460h0m4680-330h0m-8870-60h0m-2200 520h0m9500-340h0m-4790-60h0m-80 210h0m2360-240h0m-500 680h0m3280-310h0m-5750-360h0m6390 180h0m-8060 80h0m7610 270h0m-3050-190h0m-3900-420h0m7640-280h0m-6660 780h0m-490-460h0m6260 70h0m-9880 430h0m6880-530h0m3440 40h0m-4490-70h0m4360 170h0m-6600-10h0m-1840 230h0m8020 20h0m100-190h0m-3170-180h0m-360 460h0m-4980-290h0m5730 520h0m180-620h0m2970-90h0m-10030 60h0m2740 70h0m3690-160h0m3120 330h0m-3900 150h0m-3550-160h0m6690-400h0m-5130 930h0m630-290h0m6360-20h0m-4200-380h0m-3830 310h0m6460-220h0m-1300 340h0m-7490-370h0m8460 20h0m-4940-60h0m2050 150h0m-5480-80h0m-530-110h0m5200 470h0m5360-500h0m-2440 760h0m2670-870h0m-9590 320h0m2220-150h0m-1970 120h0m6200-60h0m-420 160h0m2740-340h0m-1760 260h0m2080 20h0m-250-30h0m-9110-60h0m280-70h0m2170 70h0m7110-480h0m-420 490h0m850 70h0m-3410-360h0m-6580 350h0m4460-230h0m3120 220h0m-6450 240h0m-250-220h0m1550-180h0m5770-60h0m-5970 240h0m870 90h0m-860-420h0m4330 150h0m1040 180h0m2350 400h0m150-530h0m-1490 280h0m-4830-290h0m230-50h0m4440 540h0m-4540-170h0m-3940-230h0m-990-250h0m2330 170h0m2820 160h0m-5220-80h0m8080 380h0m-3060-520h0m440 360h0m3140-520h0m-990 100h0m-2840 380h0m-3520 150h0m6570-420h0m-5420 70h0m2730-150h0m-4710 100h0m10450-420h0m-5900 360h0m-4610-270h0m5070 260h0m160 20h0m3820-310h0m-4810 570h0m6510-240h0m-4280 180h0m4040-270h0m-1070 270h0m-5610 180h0m2700-470h0m3100 300h0m870-280h0m-10700 420h0m3910-110h0m3050 380h0m2440-540h0m-7750-190h0m-1820-260h0m8210 580h0m320 50h0m2570 290h0m-1240-430h0m-6220 230h0m6690-600h0m-1470 210h0m-7920-310h0m8520 350h0m-5760-180h0m-860 240h0m4150 170h0m-1900-70h0m190-160h0m3000 170h0m-6210-20h0m-1430-70h0m2130-70h0m510 330h0m460-380h0m-1120 130h0m-2520-70h0m3020-30h0m2450 520h0m-890-170h0m-490-170h0m900-40h0m5050-420h0m-3020 450h0m930 140h0m2570-300h0m480 650h0m-7110-230h0m-3840-430h0m7270 20h0m-4360 240h0m4040 250h0m-2460-190h0m5790 30h0m-4230-90h0m-2480-180h0m2140-150h0m250-130h0m-2080 560h0m-230-50h0m2510 160h0m-5980-330h0m7200-310h0m-7050 150h0m10740 280h0m-6100-330h0m2490 180h0m-7060 150h0m5370 100h0m-120-550h0m-250 160h0m-560 310h0m250-330h0m-4600 270h0m8990-80h0m-7450-20h0m7450 60h0m530-30h0m-8440-440h0m8410 400h0m790 40h0m-3290-220h0m-2420 290h0m160-550h0m-2430 570h0m7220-280h0m-7920 280h0m3150-230h0m-1930 260h0m-790 180h0m-1870-430h0m6800 50h0m980 100h0m-8560 250h0m10000-130h0m-7030-70h0m-1970-260h0m1300 330h0m560-10h0m470-20h0m-1880-80h0m610-300h0m-1050 230h0m-650-30h0m3790 320h0m-480-580h0m6260 570h0m-3530-160h0m-2690 420h0m5980-360h0m-710-390h0m-100 680h0m-4270-580h0m5850-120h0m-1660 80h0m-7610 600h0m8470-330h0m-6360-190h0m7820-330h0m-7010 370h0m-620 190h0m-2360-210h0m5260-440h0m4280 810h0m-3810-10h0m-3350-190h0m220 190h0m6130-310h0m-680-140h0m450-230h0m-2650 450h0m3960-500h0m-1840 340h0m-1480 60h0m2420-60h0m-5170-40h0m5950-250h0m-2040 1020h0m-7320-760h0m4270-320h0m4920 470h0m-430-290h0m-8100-30h0m4650 480h0m180-330h0m-5030 280h0m2500-210h0m40 350h0m-3620-430h0m1440 310h0m-2060-110h0m8100-370h0m-5120-170h0m190 440h0m-1650 160h0m8800-170h0m-1580-180h0m-6010 220h0m1990-110h0m-3010 100h0m7250 620h0m2030-570h0m-630-480h0m-4630 630h0m-670-590h0m-4720 520h0m960 50h0m8620-270h0m-8520-310h0m6610 580h0m-7650 60h0m2840-70h0m-1770 80h0m6800-520h0m-880 80h0m-30 270h0m-7100 290h0m2350-40h0m-2110-180h0m4840-210h0m5600-220h0m-8160 550h0m-2380-240h0m3310-160h0m-3540 110h0m640-10h0m2330-270h0m2530 250h0m3360-230h0m550 480h0m-5600-130h0m-3540 190h0m6520-190h0m-4380-430h0m6670 420h0m-8220-550h0m2110 850h0m7600-10h0m-1030-100h0m-4830 0h0m-2180-30h0m-2560-90h0m6250 0h0m-2350-500h0m1490 400h0m5160 240h0m-2850-240h0m-7950 170h0m5890 270h0m1750-870h0m820 350h0m-720 200h0m2930-160h0m-6440-110h0m3450 160h0m1040 270h0m-5260-450h0m2270 250h0m-180 240h0m5450-640h0m-1660 230h0m-3340 280h0m-5700-120h0m10050 110h0m-900-80h0m-9540-160h0m4750 210h0m4020 210h0m-4910-400h0m1580 120h0m2140 10h0m-6560 70h0m2450 340h0m1790-760h0m-920 470h0m-4280-460h0m4440 330h0m1370-70h0m4260-270h0m-3560 390h0m4120-30h0m-2360-170h0m720 200h0m-8310 360h0m4450-40h0m-3130-410h0m1740 160h0m-1190-150h0m4510-200h0m-6090 160h0m10280-160h0m-890 250h0m-2490-190h0m1760 110h0m-9640 220h0m6100-50h0m-5170-20h0m10240-400h0m-10490 180h0m2820 130h0m-1020-30h0m-60-480h0m680 360h0m-2020-30h0m3050 0h0m6670 590h0m-3490-170h0m-5650-50h0m6070-120h0m260 40h0m-5440 260h0m5800-410h0m-5280 60h0m2410-160h0m4450 240h0m-3650-470h0m2480 390h0m-8520-250h0m10510 30h0m-6970 270h0m4990-340h0m1390 260h0m1000 50h0m-5110-130h0m-1030-110h0m3230-210h0m-7190 120h0m8930 80h0m-6080 210h0m-2100-100h0m4790 200h0m-1250-150h0m2200-130h0m-2250 370h0m1240-140h0m-4870-650h0m3830 650h0m-570-230h0m-2040 340h0m-30 60h0m4420-310h0m-5170 100h0m590 60h0m5090 0h0m-3990-20h0m950-370h0m-2740 100h0m7480-90h0m-7150 170h0m5340-80h0m2600 240h0m-9690 410h0m10510-1050h0m-9630 390h0m5480 140h0m-650-180h0m-4570 310h0m7250 230h0m-7750-550h0m7390 390h0m-3670-100h0m-2530-30h0m2780-200h0m-3710 340h0m4670 40h0m-3000-580h0m4620 640h0m420-300h0m2440-10h0m-5040 210h0m530-30h0m3850-30h0m-8890-10h0m7040-20h0m-1430 70h0m3740-460h0m-4470-110h0m-3050 250h0m1940 360h0m-980-160h0m-2970 110h0m7250-190h0m-6070 210h0m7400-100h0m-230 170h0m-510-260h0m1130-370h0m-7830 480h0m-1600-90h0m9630 490h0m-3310-180h0m-5350-320h0m4760 80h0m1930-90h0m-4410 150h0m-2410-240h0m9800-430h0m-10330 180h0m4540 380h0m-4180 160h0m4740-80h0m-4850-250h0m8910-60h0m-6990 280h0m1600 100h0m4200-460h0m-3790 370h0m-3920 450h0m-260-620h0m3550 390h0m4970-440h0m-6510 230h0m-2090 50h0m1360-250h0m5380-70h0m2000-280h0m-7140 590h0m-740 370h0m5750-200h0m-5930-310h0m6780 260h0m2100-220h0m-810 210h0m-1880-60h0m-7460-320h0m6510 110h0m700 300h0m-3740-820h0m3980 860h0m-2530-720h0m-3940 570h0m9760-360h0m-10870 300h0m570-440h0m5540 690h0m3080-640h0m-350 370h0m-660 20h0m-5560-80h0m-420-180h0m-770 760h0m4020-1030h0m-5310 250h0m2800 230h0m8140 50h0m-9430-430h0m9560 580h0m-5410 100h0m-5090-230h0m9970-60h0m-6930 190h0m3040-90h0m-4260 0h0m5510-390h0m-2870 490h0m2640-520h0m-3360 320h0m5190-230h0m-6230 10h0m6010-130h0m-1070 310h0m2120 450h0m-2280-540h0m-5060-150h0m3950 370h0m-3050-90h0m3380 10h0m-3520 180h0m-2960-230h0m7220 50h0m-6690 10h0m9770-280h0m-260 350h0m-7640-470h0m640 120h0m650 440h0m3270-420h0m-4560 0h0m1670 490h0m1710 40h0m-4460 0h0m3680 70h0m2770-510h0m1410 420h0m-6510-300h0m3270-220h0m-3630 220h0m6890-130h0m-910 610h0m-8640-760h0m6330-160h0m-3800 300h0m-1090 200h0m4860 230h0m2260-380h0m-5860 270h0m2240-290h0m-5140 290h0m5950-400h0m-5500-280h0m-50 310h0m9850 40h0m-3860-30h0m-5510-50h0m4110 120h0m5320 10h0m-2550-70h0m-2530-200h0m-600 510h0m-1760-60h0m6480-390h0m560-80h0m-890 530h0m780 170h0m-4070-360h0m4870 480h0m-5440-570h0m-2470-440h0m-670 570h0m7030-440h0m30 580h0m-4120-290h0m3460 320h0m-5620-50h0m7690-240h0m-1630 200h0m-2440-190h0m-2620 80h0m-110-230h0m4360-230h0m-5820 730h0m3980-210h0m-5550 260h0m1600-100h0m6630-480h0m-890 170h0m-240 90h0m-4030-540h0m5800 490h0m-9420 200h0m5290-140h0m1950-420h0m-2690 660h0m-3560 220h0m4000-140h0m-2170 0h0m460-570h0m1920 300h0m3590 150h0m-6230-210h0m-390-130h0m8610 290h0m-970-520h0m-1490 510h0m-4000 0h0m6470 240h0m-4470 130h0m-3860-530h0m1340 560h0m860-460h0m-3890-120h0m850 250h0m230-130h0m4640-650h0m-2080 420h0m-1070-150h0m6100 300h0m-1230 70h0m-4090-100h0m-1940 200h0m7330-60h0m970 210h0m-5550-910h0m460 910h0m-4400-190h0m3230-670h0m2120 460h0m570 340h0m-6000-360h0m6980 600h0m1150-810h0m-620 540h0m1100-530h0m-3760 330h0m5030 210h0m-730-200h0m-7190-50h0m-1010-10h0m-2120-260h0m5640 320h0m180 120h0m-1160-340h0m-2320 0h0m7150 150h0m-8600 280h0m4000-290h0m-150-20h0m1430 200h0m-2810-630h0m3450 370h0m-630 150h0m-2120 230h0m2020-120h0m-890-140h0m3780 100h0m-5240 200h0m-1690-450h0m4950 190h0m-5790 90h0m5810 130h0m-6040-150h0m7700 30h0m1710-90h0m550-210h0m-10910 390h0m3250-310h0m210 140h0m2910 10h0m-2280-130h0m1480 60h0m2400 180h0m-6870-610h0m-790 600h0m10270 180h0m-6740-400h0m-1710 270h0m6990-170h0m-5840 40h0m2300 260h0m-4120-430h0m-800 40h0m7240-180h0m-3950 260h0m-3940-110h0m6530-90h0m-3080-20h0m1130 110h0m-620-120h0m7060-20h0m-5300 670h0m2910-780h0m-3190 440h0m-4910 350h0m6570-70h0m-6080-830h0m4220 230h0m2950 160h0m-1900 170h0m-6370-610h0m10900 600h0m-3650-60h0m-1970-50h0m3420 100h0m-5290-540h0m3330 290h0m-6010 270h0m8030-50h0m-8300 100h0m1360-300h0m8940 390h0m-5530-700h0m1680-40h0m-6420 90h0m1030 540h0m6230-130h0m720 200h0m-7890-330h0m8100-200h0m-5700 260h0m7920 110h0m-10270-150h0m8940 140h0m-6950 50h0m-170-70h0m6570 400h0m1510-40h0m-8860-360h0m5820-10h0m1940-200h0m-1440 290h0m-5750 140h0m80-290h0m1550 10h0m600 70h0m1710-90h0m-760 200h0m510-130h0m1170 0h0m-5770-340h0m3640 60h0m-3530 50h0m2590 690h0m4110-640h0m-640 20h0m-3420 470h0m490-290h0m4880-430h0m-1570 510h0m-6860 210h0m5710-240h0m-4830 10h0m7690-30h0m-2210-90h0m-2150 220h0m-5030-220h0m-380 70h0m3520-210h0m320 220h0m6090-180h0m-5410 370h0m170 100h0m-480 190h0m6760-760h0m-4900 710h0m-1250-530h0m-3230-60h0m5980 220h0m-6180-330h0m1370-50h0m-1420 380h0m7420-140h0m290 210h0m-2480-240h0m-2140 180h0m120 120h0m5430-240h0m-3080-20h0m1830 120h0m-2830 40h0m-4960-190h0m9800 80h0m-6200 210h0m4710-590h0m-2840 170h0m610 150h0m690-160h0m2600 140h0m-9900 220h0m930 180h0m-590-460h0m3530 500h0m-1260-470h0m-1460 520h0m5160-450h0m1810 360h0m-1320 100h0m1680-40h0m-2300-220h0m-2100-40h0m3950-120h0m1420-320h0m-9510-20h0m-40 450h0m6940 10h0m-3080-340h0m2660 410h0m-4660-10h0m1740-140h0m-500-390h0m4370 230h0m2890-80h0m-230 260h0m-8210-480h0m6430 370h0m-730 180h0m-3250-360h0m-4300 300h0m2840-360h0m-190-110h0m3100 490h0m3570 110h0m-4890-210h0m6350-40h0m-6770 290h0m-1380-180h0m4110-230h0m-3350-120h0m-2340 600h0m9750-620h0m-7800 100h0m-1480-50h0m1250 410h0m5420-210h0m-2970 110h0m-2880 270h0m4880-170h0m-7080-260h0m4870 100h0m3180 130h0m-3710-70h0m-340 340h0m800-320h0m2290-610h0m-6610 680h0m3300-290h0m6380 210h0m-3330 110h0m-4150-630h0m3460 470h0m1960 0h0m2120-270h0m-650 200h0m-5080 400h0m-750-640h0m-2470 250h0m2410 340h0m2490-170h0m-2700-720h0m-3230 470h0m2810-20h0m-1660 310h0m4350 90h0m-6110-250h0m6530 170h0m4420-90h0m-9380-60h0m880 530h0m2310-410h0m4120 130h0m-1450-530h0m-3830 60h0m1690-420h0m-3960 510h0m4380-130h0m520-60h0m910-50h0m640 300h0m-4510-240h0m2740 430h0m2620-70h0m-1070-40h0m-4620-300h0m-2850 350h0m700 60h0m10250-300h0m-10230-160h0m1380 490h0m6570-480h0m-840 540h0m-3010-110h0m-1060-270h0m880-150h0m4330 280h0m-7320 10h0m4970 100h0m2250-60h0m1760-450h0m-6600 810h0m330-670h0m1360 510h0m2720-660h0m-6470 510h0m9030-160h0m-4840 70h0m-4140 110h0m590 190h0m-2670-780h0m1440 60h0m-680 60h0m6030 0h0m-1380 60h0m4460 290h0m-1650 50h0m-5910 180h0m5240-520h0m340 200h0m-6730-140h0m6460 210h0m2230-20h0m-4100 260h0m-900-520h0m-3900-250h0m4520 490h0m2100-110h0m-7210 450h0m5460-620h0m1250 440h0m-3450-200h0m-3050-390h0m1600 370h0m8350-80h0m-2400-80h0m-3610 320h0m-4080 130h0m450-60h0m8730-20h0m-8110 30h0m6630-310h0m-2010 330h0m-4830-320h0m2800 30h0m-820 370h0m-110-270h0m4290 180h0m3110-160h0m-1850 120h0m-4110-520h0m-3720 190h0m1930 410h0m3120-20h0m990-220h0m-1850-470h0m5980 670h0m-4360-30h0m-1520-150h0m2700-30h0m-5420-220h0m6090 420h0m-1020 110h0m-4080-420h0m-1660-30h0m8350 210h0m340-610h0m-5940 940h0m4130-220h0m-1790-460h0m1670 270h0m20 10h0m-6620 280h0m2170-350h0m5960 140h0m-8570-210h0m6490 150h0m-5810 70h0m1040 110h0m7830 320h0m-7620-450h0m4310-190h0m2410 140h0m-7300-480h0m160 610h0m5690 550h0m-6230-490h0m270-610h0m-170 110h0m5250 600h0m1330-410h0m-210 160h0m-5990-340h0m5070 520h0m2390-280h0m-8790 430h0m6680-10h0m-3340 100h0m-3900-140h0m9850 160h0m-6960-150h0m-2560-70h0m2750 130h0m670-460h0m3700 80h0m340 290h0m-3030 100h0m-4630-60h0m500-120h0m3010-130h0m2890 310h0m-270-680h0m-480 350h0m-5980 60h0m730-240h0m9280 0h0m-9320 80h0m3260 10h0m-2610 340h0m3080 10h0m4390-130h0m-8880-390h0m6570 270h0m3750-210h0m-11240 260h0m10510 180h0m-1020-350h0m540 160h0m-10-260h0m-2760 370h0m-130-400h0m-580 720h0m3140-410h0m140-410h0m-6660 230h0m410-140h0m-3470-120h0m8550 700h0m-4370-680h0m-440 540h0m-220-230h0m-1480-150h0m-360 90h0m8280 40h0m-1590 260h0m-6220-490h0m7950 240h0m-190-60h0m-5800 300h0m1280-130h0m4760-260h0m550-110h0m-1840 110h0m-3870 280h0m-4190 50h0m6540-170h0m-3400-400h0m-3980 550h0m2320 30h0m4290-380h0m-5920 220h0m2330-160h0m4780 260h0m-6030 90h0m6460-340h0m-6570 290h0m4600-290h0m2680 140h0m-670 90h0m-5410 100h0m-820-300h0m-260-10h0m3900-120h0m-4070 310h0m7820-20h0m-1790-250h0m2030 310h0m-6670 10h0m-2040-190h0m8840 150h0m-540-220h0m10 90h0m-4010 180h0m1070 160h0m-5850-240h0m20-290h0m8160 830h0m1050-870h0m800 430h0m-1450 320h0m-6720-850h0m-800 540h0m8600-240h0m-7160 40h0m6690 290h0m1200-470h0m-1160-100h0m-2990 400h0m-880-290h0m1490 320h0m-170-700h0m-5430 800h0m8430 10h0m-6230 60h0m6750-460h0m-5370 270h0m-1490 30h0m4710-20h0m-7730-380h0m9270 260h0m-3390 310h0m300-180h0m-3180-140h0m-2310 90h0m-860-20h0m3800 60h0m-4130 40h0m4430-60h0m-4840 120h0m10310-330h0m350-70h0m-1580 210h0m-4810 220h0m6780-30h0m-4570-620h0m-3840 780h0m6280-420h0m-6410 100h0m1320-210h0m780 40h0m1980-140h0m610 140h0m-4290-140h0m4610 140h0m-7350 50h0m10730 70h0m-680-350h0m-5790 810h0m5520-430h0m-2180 510h0m-1210-520h0m-5570 10h0m-910-430h0m7510 60h0m690 260h0m2850-420h0m-1620 770h0m720-800h0m-1510 490h0m-8010-10h0m7650 290h0m2410-100h0m-6920-410h0m4040-90h0m-90 410h0m200 70h0m-6350 10h0m3070 340h0m3850-730h0m-3240 520h0m-5130 120h0m5900-360h0m-1230-10h0m4710-460h0m-6880 760h0m-2470-290h0m8000 20h0m-3880-20h0m3970 250h0m-3560-220h0m-2840-150h0m610-130h0m470 240h0m6730 120h0m1370-50h0m-8890-110h0m-1360-160h0m4000 260h0m-2550-10h0m3070-290h0m-1470 360h0m4710-270h0m-340 100h0m1510 170h0m-680 260h0m1610-430h0m-7190 200h0m-1030-10h0m6040 20h0m-5010-170h0m7770 260h0m-7660-130h0m3540 390h0m-6350-760h0m5140 580h0m5110-350h0m-3580-250h0m-7500 440h0m450-110h0m4340-440h0m2700 520h0m-70-550h0m430 420h0m-4200-310h0m-2880 380h0m-360-520h0m4280 250h0m-250 70h0m650-160h0m-1510 450h0m-180-20h0m-1430-680h0m5780 230h0m-6750 370h0m1410 110h0m7150-150h0m-3050 190h0m1930-200h0m-990 170h0m2560-60h0m-9860-80h0m5940-310h0m1660-40h0m-800 210h0m-4830-240h0m2210 210h0m-590 60h0m-720 180h0m5590 90h0m-6080-10h0m190-300h0m5260 60h0m300 140h0m810-630h0m150 810h0m-3730-220h0m-1110 120h0m5100-750h0m-1510 160h0m-5450 400h0m3610-10h0m4550 390h0m-10330-390h0m10300 140h0m-1740 0h0m1770 490h0m-9060-710h0m-480 140h0m4200-200h0m1410-60h0m-5610 40h0m4400 250h0m4180 80h0m-3080 30h0m-1220-520h0m-2650 310h0m3710-470h0m2710 780h0m-310 50h0m810-60h0m-3480-350h0m4110 290h0m-5410-630h0m-1630 750h0m3630-100h0m230-280h0m300-150h0m-5380-370h0m1710 460h0m7530-480h0m-250 540h0m-4400 100h0m-990-250h0m3350 100h0m1960 480h0m270-540h0m-7590 360h0m1260-270h0m-4320 30h0m4450-220h0m-2340 510h0m-1550 20h0m-120-260h0m5370 70h0m3430 30h0m-5740-410h0m1080 290h0m4140-350h0m-3540 340h0m1640 290h0m-6130-150h0m6530 330h0m-7360-350h0m8950-610h0m-2150 850h0m-170-50h0m-1820-360h0m-380 230h0m2900-20h0m-2430-420h0m-1540 540h0m1450-270h0m-3320 330h0m4780-90h0m2590 90h0m-3850-400h0m-1840-380h0m7480 410h0m-1540 400h0m-2170-270h0m-7140 180h0m1960-230h0m370 260h0m-280-230h0m1910-280h0m2830-180h0m-6780-30h0m9290 340h0m-8290 350h0m-740 220h0m3340-490h0m4150 40h0m520 230h0m-1290-250h0m-600 150h0m4280 110h0m-9190-50h0m8390-220h0m-10150 160h0m5480-150h0m-1800 160h0m5100-160h0m-780 310h0m-3000-340h0m3930 40h0m-5410-90h0m3440 130h0m250 50h0m-2050-40h0m-340-330h0m440 320h0m1800 50h0m3470 220h0m-10160-40h0m3360-310h0m-830 150h0m1200 140h0m-2590-160h0m4180-30h0m670-90h0m970-200h0m-1230-370h0m4580 690h0m180-190h0m-2240 0h0m-3240 250h0m-4470 30h0m-70-30h0m2370-320h0m-870 340h0m5780-220h0m-4560-40h0m3540 10h0m-7080 130h0m8480 0h0m-5780 120h0m-480-240h0m5480-60h0m-100-280h0m-3970 570h0m1110-90h0m3240-210h0m-2490 180h0m-1060-430h0m-1570 570h0m7120-120h0m-7120-20h0m3330 270h0m-2730-290h0m1470-120h0m-850 150h0m-4120-280h0m7540 630h0m-7250 50h0m350-490h0m8750 90h0m330-80h0m-2230-460h0m-1960 330h0m2360 0h0m3030 80h0m-9890-190h0m7130 490h0m-650-210h0m-7000 410h0m5320-40h0m2950-80h0m-5050-310h0m2500 50h0m180-150h0m-3280-50h0m2120-370h0m-4680 870h0m7500-120h0m2040-420h0m550 490h0m-5320-10h0m4810-410h0m-9690 50h0m4430 110h0m-3170 0h0m5850 250h0m-4950 30h0m5170-560h0m-5270 700h0m1890-180h0m-190-760h0m-1430-60h0m-2720 470h0m2550 510h0m3130-160h0m3430 0h0m-5680-390h0m850 200h0m5280-460h0m770 680h0m-5780-10h0m-90 10h0m840-500h0m2590-40h0m240 400h0m-7800-180h0m1190 380h0m3510-420h0m860-340h0m-5360 220h0m5710 280h0m1980-40h0m-5740-220h0m8540 60h0m-2590 130h0m-6200-360h0m-780 210h0m-1010 170h0m4800 110h0m-2610-330h0m2200 140h0m3190-80h0m-7170 510h0m6230-80h0m1150-520h0m2140 200h0m-3880 420h0m3040-200h0m-7760-320h0m9280 110h0m230-470h0m-8930 700h0m-810-90h0m6160-260h0m-1520 310h0m-3130-410h0m940 110h0m4510-30h0m1330 260h0m140-330h0m-9490 80h0m6410 250h0m-2660-290h0m-1220 390h0m2640 50h0m-2760-470h0m7070 20h0m-8150-110h0m1750 140h0m4620-140h0m2290 170h0m-6390 130h0m2310 230h0m-10-500h0m3070-40h0m-4450 570h0m-3180-420h0m7210 70h0m820-10h0m-3830-50h0m-4920-450h0m4990 450h0m-1970 80h0m-3990-100h0m6770 340h0m2210-330h0m-5200 460h0m4220-190h0m1080-300h0m-1900 80h0m3190-40h0m-160 100h0m-7480 70h0m6670-240h0m-9270 290h0m3160-380h0m2150-110h0m5040 20h0m-920 650h0m860-220h0m-2900-200h0m590 300h0m2180-360h0m-8840-280h0m240 400h0m2400-110h0m2500-110h0m340 20h0m-3490 250h0m6240 0h0m-1660 150h0m-7100-190h0m2530-20h0m-520-140h0m-1530 230h0m8890 40h0m-9580 260h0m-620-180h0m4020-50h0m-1560 100h0m5160-80h0m-5200-10h0m6070 110h0m1890-400h0m-4660 720h0m2020-470h0m2960 390h0m-10040 40h0m10160-220h0m-360-520h0m-8240 270h0m4120-190h0m-3460 340h0m5030 40h0m-210-110h0m-3160 100h0m-4340-420h0m1490 40h0m-1520 450h0m8730-200h0m-1330-80h0m310 310h0m-3900-710h0m6810 520h0m-5310-260h0m-1670 10h0m7040 430h0m-6690-260h0m-1010-540h0m-1600 640h0m6450 20h0m-5010-220h0m5570 100h0m-6640 120h0m1770 180h0m-650-210h0m1780-40h0m1860-220h0m1700 470h0m-1810-520h0m3120-110h0m360 10h0m-4460 510h0m-3940-70h0m-1630-320h0m2200 310h0m5130-660h0m-7310 670h0m4460 10h0m5590-230h0m460 470h0m-9710-200h0m390-170h0m3140 350h0m3120-400h0m-3640 90h0m690-240h0m-2230 410h0m2130-70h0m3090-170h0m-6150 80h0m-960 160h0m1360-200h0m3890 340h0m2710-70h0m-2720-300h0m-2660-120h0m-1220-80h0m1510 30h0m430 180h0m5830 230h0m-6320-180h0m-1960-80h0m5270-90h0m880 120h0m1410-80h0m-930 310h0m-1930-120h0m-2430-230h0m-1510-20h0m2150 170h0m-1060 90h0m4900-400h0m-340 280h0m-3880 140h0m-1400-280h0m3590-190h0m-1310-10h0m1820 190h0m-4840 260h0m3440 20h0m3600-480h0m-290 610h0m-2730-300h0m-5550 70h0m5370-130h0m760-20h0m2300 10h0m-2680 30h0m-600 320h0m3310-500h0m70 400h0m-7660 0h0m7830-520h0m-5610 460h0m2010-130h0m-830-60h0m-3490 280h0m550-530h0m3520 360h0m6010-80h0m-610-330h0m-2500 490h0m1530 180h0m-3990 60h0m-20 140h0m-3320-420h0m-1360 50h0m6420-270h0m1500 510h0m-7870 30h0m10230-340h0m-6050 90h0m2360 200h0m-870-110h0m4540 140h0m-2470 30h0m-1220-310h0m360-130h0m1600 0h0m-8330-70h0m-60-300h0m7110 430h0m-1370-100h0m-3550 280h0m910 30h0m540 140h0m-3080-340h0m3480 160h0m910-10h0m-5660-20h0m3050-380h0m2380 130h0m-5810 50h0m2880-20h0m2600 220h0m-4780 330h0m3140-430h0m7190-90h0m-2270-150h0m-5720 430h0m2730-340h0m3570-50h0m-970 160h0m1980-560h0m-4250 750h0m-110-430h0m2560 370h0m-4380 260h0m-1430 10h0m-1340 150h0m2500-640h0m-1190 130h0m8200 230h0m-10870-400h0m2780 260h0m8520-100h0m-8340-580h0m5910 560h0m-8240 0h0m1130 310h0m2220-380h0m3960-200h0m-5760 180h0m-600 260h0m1210-310h0m3390-180h0m450 320h0m4200-20h0m330-200h0m-1770 250h0m-8760-20h0m1500-120h0m2540 400h0m6250-60h0m-9070-230h0m1320-190h0m1240 530h0m660-400h0m-1400 10h0m-860-100h0m-2560 180h0m10760-440h0m-6920 780h0m5940-280h0m-2220 180h0m-5900-720h0m1960 610h0m-2040-120h0m8130-160h0m-8790-150h0m6850 20h0m-8090 340h0m11220 210h0m-9730 20h0m6030-260h0m-6960 120h0m5060-220h0m-3830-360h0m-810 400h0m6300 230h0m-4690 230h0m4480-340h0m-4220-170h0m1080 10h0m1540-280h0m-890 430h0m3870 80h0m-1960-660h0m190 740h0m-840-300h0m-5170-230h0m-540 360h0m4200 10h0m6500-670h0m-7390 750h0m-1780-50h0m-270-90h0m9790 10h0m-7820-340h0m3280 200h0m-4050 50h0m-150-180h0m7050 270h0m-1260-200h0m360-420h0m-250 830h0m1860-70h0m-4080-140h0m1690-350h0m2830 130h0m-5730 200h0m5940-230h0m-6250-150h0m-1360 550h0m2180 100h0m-3820-270h0m6600-150h0m-6000-290h0m1630 770h0m-3500-10h0m5950-230h0m-2140 330h0m1740-340h0m5270-60h0m-4720 20h0m-1810-400h0m710 520h0m3770-660h0m-840 80h0m-2940 280h0m3740 170h0m-5130 40h0m-1380-40h0m7160 170h0m310-250h0m-410-550h0m-1930 480h0m-6460 120h0m-870-210h0m5670 290h0m-1890 30h0m2260 60h0m-2870-290h0m2690 80h0m-1250 310h0m-4920 150h0m9750-790h0m-4330 240h0m-5060 330h0m780-740h0m6710 790h0m970-130h0m-590 400h0m410-640h0m620 340h0m-7130-270h0m3930-190h0m-2150 350h0m2590 190h0m930 120h0m-3710-620h0m5270 290h0m-6560-80h0m-40-180h0m4750 660h0m-2160-330h0m-1420-580h0m4750 290h0m-2340 190h0m-4050-110h0m8130-60h0m-5770-490h0m4900 470h0m-5520-140h0m-1190 330h0m4370 440h0m-3900-330h0m-2320-80h0m3670 70h0m5830-310h0m-8220-210h0m-1630 260h0m6620 30h0m1670 240h0m-6900-10h0m1230-350h0m3540 50h0m1720 20h0m2950-460h0m230 670h0m-11210-190h0m2110 80h0m4270-70h0m4820 170h0m-7830-270h0m-1200 390h0m-1570 160h0m5940-600h0m-3920 70h0m-1850-290h0m5460 540h0m-2690 120h0m7570-60h0m-11010-170h0m8610-340h0m-2470 150h0m-4280 250h0m6990 70h0m-4150-130h0m1990 150h0m-3390-180h0m2000 270h0m2120-50h0m-7020-150h0m3200 140h0m2400-290h0m-6210 250h0m8530-130h0m-3560 130h0m4210-230h0m1500 20h0m-3290 110h0m-4260 160h0m1240-380h0m-2130 100h0m7020-160h0m1480 550h0m-580-690h0m-2010 460h0m-3920-170h0m3320 140h0m-4770 130h0m4390 100h0m2920-370h0m-6950-130h0m-2390 580h0m5920-150h0m-1000-690h0m2120 140h0m890 670h0m850-360h0m-6040-100h0m-250 440h0m2530-580h0m-2880 520h0m-2730-180h0m10840 60h0m-2560-270h0m-3410 60h0m1570 380h0m-5690-420h0m850-30h0m-1580-110h0m-120 80h0m2210-50h0m3910 240h0m-4850-270h0m7990 110h0m-7970-110h0m6680-160h0m-1870 440h0m-1610-220h0m-4230 80h0m4560-250h0m1130 820h0m920-990h0m-4190 550h0m-1390 120h0m7410-220h0m1220 30h0m-8890 110h0m10130 10h0m-7960 390h0m-2180-180h0m7020-410h0m-420 120h0m-7110 50h0m5690 50h0m-320-340h0m90 210h0m-3220 310h0m3150 40h0m3140-220h0m-7490 40h0m220-340h0m8070 320h0m-870 190h0m460-580h0m-7190 520h0m4980-50h0m-2070-460h0m3770 310h0m-7950-590h0m7440 300h0m-8120 240h0m9430-70h0m-1260-160h0m-3190 280h0m-3720 330h0m5760-770h0m1650 370h0m-350 390h0m360-100h0m-7810-370h0m9660 70h0m-6400 240h0m2080-340h0m-230 520h0m-6090-200h0m10290-340h0m-400 250h0m-5190-230h0m2270-60h0m2250 120h0m590 190h0m-9120-80h0m2780-10h0m1350-50h0m1880 250h0m-5400 40h0m9740-710h0m-3340 730h0m450-460h0m-7000-360h0m6960 640h0m-7530-490h0m8940 490h0m-8700-70h0m9850-170h0m-7020 350h0m1090 10h0m-1830-10h0m-2240-190h0m5500 20h0m-3170 390h0m6120-400h0m-5320 210h0m-180-230h0m-750 370h0m5050-740h0m2750 580h0m-2900-430h0m-1780-20h0m2640 190h0m-8740-400h0m3830 470h0m2540 210h0m-3150-180h0m4290-40h0m2580 320h0m-2040-660h0m-5670 540h0m8630-330h0m-5500-50h0m2920-10h0m-7150 240h0m350-400h0m8180 210h0m-4550-50h0m1910 160h0m-1350-570h0m4770 690h0m-810-320h0m-640 420h0m1590-150h0m-3470 180h0m-6930-170h0m420 380h0m5130-10h0m4120-800h0m-7140 10h0m7730 390h0m590-40h0m-4980 280h0m-3030-70h0m-100-30h0m-3150-320h0m1800-30h0m6100 350h0m-2650-340h0m-3380 180h0m200-110h0m8990 190h0m-1270-90h0m-760 240h0m-2510-280h0m-890 30h0m4830-150h0m-10520 190h0m6680-30h0m1070-290h0m2970 540h0m-1040-210h0m-1460-90h0m-8050 340h0m3960-430h0m5900-180h0m290-50h0m-4390 520h0m-1250-100h0m-510-530h0m1920-50h0m5190 380h0m-10820 100h0m8710-170h0m-7230-100h0m-1880 190h0m7040-150h0m-1130 660h0m-410-790h0m1070 590h0m-3280 50h0m4800 260h0m-4210-620h0m-3350-400h0m-250 760h0m9220-390h0m-3480 120h0m690 410h0m1020-330h0m90-270h0m-4600-40h0m3430 230h0m-6260 140h0m5320-270h0m340 120h0m-5290-200h0m910 160h0m940 80h0m4170 330h0m3570 40h0m-6140-350h0m-3600 50h0m9980 290h0m-4090-630h0m-3520 460h0m-2580-10h0m10130 120h0m-9610-270h0m-390-340h0m490 170h0m4610 560h0m-5460-490h0m270 250h0m4380-110h0m3500-110h0m-2060 130h0m3450 310h0m-6900-580h0m6860 30h0m-5510 290h0m2580 170h0m-400-250h0m-6280-240h0m9500 140h0m-7170 230h0m6920-180h0m-1740-50h0m-3120 80h0m5400-90h0m-4860 230h0m1560-330h0m240 250h0m-2920-370h0m6440-110h0m-2360 250h0m-6530 350h0m-260-40h0m10090 50h0m-1760-230h0m-8840-320h0m1990 620h0m-2270-40h0m4040 10h0m-3140-380h0m4480-90h0m-4780 740h0m3080-710h0m1680 300h0m-350-60h0m70-110h0m-1260 90h0m980-90h0m1200 220h0m-5840-40h0m7100 160h0m990-470h0m-1930 210h0m-6770 10h0m2860-180h0m1870-60h0m-4330 200h0m8630-100h0m-1500-110h0m-3500 310h0m-2370-200h0m4230 30h0m330 40h0m-570 20h0m-3560-60h0m8460 70h0m-7550 220h0m6340-140h0m-8000 20h0m2410 90h0m-1360-60h0m7250-120h0m-170-130h0m-9160 160h0m4050-170h0m-3400 320h0m7020-70h0m-3600-80h0m1210 230h0m3790-20h0m-1280-140h0m-5690 20h0m-230-410h0m8880 360h0m-9440-400h0m6320 70h0m-7840 100h0m4070 500h0m1630-200h0m3210-560h0m-7110 840h0m-1120-460h0m1480 270h0m1220-180h0m7680-100h0m-9040 80h0m6320 140h0m-2480 160h0m-600-620h0m-560 60h0m-780 680h0m-2340-240h0m9600-400h0m-4460 190h0m450-390h0m-2630 510h0m-2490 0h0m8730-120h0m-9970-80h0m4380-20h0m4520 70h0m-7930-100h0m7200 190h0m-8110-180h0m3930-150h0m-2140 560h0m3900-480h0m3950 630h0m-1360-660h0m780 230h0m-9990-120h0m3290 170h0m4080 60h0m-6690-320h0m-160-360h0m7320 40h0m130 530h0m-4630-200h0m1700 200h0m-4170-110h0m9070 280h0m-7080-340h0m1300 580h0m1860-1020h0m-2520 470h0m1610 710h0m5430-690h0m-6300-260h0m-2510 300h0m-730-470h0m7730 430h0m-4370-70h0m-2040 570h0m8800-370h0m-5180-560h0m-4370 210h0m960 660h0m3030-310h0m4280 120h0m-2550-40h0m1500-500h0m-6080 470h0m3350-120h0m-3980 140h0m4070 140h0m-150-290h0m1380-60h0m-4290-300h0m-1870 10h0m8820 400h0m-8260-160h0m8780-120h0m-4170 410h0m-2370 240h0m5220-430h0m310-370h0m-8280 450h0m-1020-270h0m2360 420h0m2970-320h0m5470 20h0m-8310 290h0m7490-370h0m-4060-130h0m-3130 650h0m5570-340h0m-3930 200h0m-3550-70h0m2190-250h0m6850 510h0m-2470-260h0m2820 80h0m-9180-240h0m7330-20h0m-6430-120h0m2010 520h0m-2830-770h0m7330 390h0m350 180h0m-9110-160h0m4500 80h0m-460 410h0m1720-410h0m-3880 0h0m-1720 220h0m2160-430h0m-830 540h0m3350-220h0m-3420 120h0m4110-500h0m-2010 260h0m4290 70h0m-4660-60h0m-510 190h0m4260-180h0m1070-350h0m2980 570h0m-4000-350h0m-3710 260h0m850-180h0m6620 10h0m-7590-110h0m5270 240h0m-600-430h0m2970 270h0m-4960-230h0m-4520 300h0m-720-60h0m5390-400h0m3750 80h0m-9370 510h0m690-290h0m5200 230h0m-3650-60h0m7580-210h0m400 210h0m-820-250h0m-9270 390h0m5070-600h0m740 940h0m-5200-620h0m8930-330h0m-2260 300h0m-5210 350h0m3700-760h0m1880 620h0m20 290h0m2450-520h0m-3870 40h0m1550-190h0m-3450 310h0m640-380h0m3410 140h0m390-90h0m-6140 650h0m-1740-510h0m2960 250h0m3260 100h0m-240 40h0m-1200-250h0m-1800 70h0m-3630 100h0m3050 50h0m-290-280h0m6160 220h0m-8360-110h0m-1100 140h0m5330-280h0m3980 210h0m-6780-410h0m4620 450h0m-6880-30h0m580-60h0m5540 210h0m-3900-110h0m1350-110h0m1120-130h0m2120 150h0m-3570-80h0m6160 50h0m-6650-40h0m1320 10h0m2580-30h0m550 230h0m-5650-360h0m310 190h0m2100 100h0m-3260 200h0m7910-250h0m-6210-10h0m4910-10h0m-7570-340h0m9910 680h0m-7700-900h0m5940 170h0m-2370 340h0m-2150 190h0m5710 40h0m-4780-660h0m1350 400h0m2280-50h0m-4960-290h0m2740 290h0m-3910-90h0m4330 100h0m-460 270h0m-5100-200h0m8420-70h0m1680 190h0m-3180-130h0m290-20h0m-1160 160h0m-3540-70h0m-3610 40h0m2610-60h0m7150-380h0m-2570 270h0m-7110 20h0m8730-250h0m720 70h0m-1770-60h0m1790 900h0m-8560-490h0m5810-430h0m-120 180h0m-5560 20h0m5860 220h0m-4070 330h0m5340-520h0m-1090-70h0m-3830 280h0m5070-70h0m-1960 60h0m0-70h0m-1180-170h0m-1610 210h0m730 80h0m-3080-110h0m4790-30h0m1520 0h0m-7150 340h0m6070-410h0m740-80h0m-30-80h0m-2970 480h0m2490-240h0m-1060-80h0m4220-10h0m-3540-230h0m4220-160h0m-320 220h0m-6570 50h0m2620 200h0m-80-10h0m-5150 170h0m4640-410h0m3720 280h0m-7380-90h0m8090 280h0m-9120-630h0m2520 580h0m-300-10h0m-1670-430h0m7710 170h0m-8660 350h0m6160-70h0m-150-200h0m-6250 30h0m520-10h0m1120 110h0m6350-360h0m1240 20h0m-8150 50h0m9240 720h0m-7150-440h0m5090-160h0m-800-60h0m630 420h0m-6620-750h0m-1120 730h0m2350-60h0m-790-330h0m1590 100h0m1680 300h0m1920-430h0m-6940 360h0m5170-540h0m-3410 170h0m-650 120h0m720-200h0m5130 70h0m-3750 0h0m-2120-170h0m3310 10h0m-2860 250h0m6190 20h0m-4770-60h0m440 80h0m-1340 380h0m3270-350h0m-3190-230h0m6530-180h0m-9220 740h0m8570-360h0m-870 80h0m-6390-20h0m7930-240h0m280 130h0m-7620 260h0m8980 40h0m-8450-470h0m1950-20h0m-1350 250h0m8330 210h0m-8100-280h0m7600-120h0m-6810 530h0m-4010-120h0m10890 310h0m-1840-830h0m570 460h0m-4350-480h0m420 90h0m1570-190h0m1100 180h0m-3600-40h0m4950 60h0m-2540-160h0m-170 580h0m1520-60h0m690-250h0m790 110h0m-6490-30h0m2790 180h0m-4780-450h0m5840 700h0m-3510-250h0m-210-260h0m-3230 390h0m5200-300h0m5530 0h0m-6920-320h0m-890 540h0m1350-110h0m100 180h0m-3940-320h0m5360 390h0m-4710-500h0m5130-220h0m4380 660h0m-1560-330h0m-7670 310h0m1730-550h0m-3330 10h0m4300 270h0m2440 140h0m1730 110h0m-5390-570h0m2660 530h0m3380-140h0m-300-30h0m-5410-250h0m6860-220h0m-380 190h0m-7650 20h0m4500 290h0m1960 180h0m370-420h0m-4700 180h0m4080-10h0m-4150 180h0m70-70h0m1170-130h0m-3690-10h0m5210 110h0m-4340 510h0m1530-770h0m-630 130h0m-2790-120h0m-730 130h0m2850-320h0m4100 520h0m-6770-150h0m5630-200h0m5220 160h0m-30-30h0m-1000 160h0m-10090-200h0m400-60h0m2510-210h0m1910 60h0m-2140 890h0m310-220h0m5180-270h0m-1810-10h0m-1100-520h0m2910 490h0m2250 380h0m-2740-100h0m-200-510h0m-3670 570h0m1870-140h0m2820 150h0m-4820-110h0m410-630h0m-1610 410h0m5970-30h0m1340-30h0m-300 410h0m-8690-770h0m670 670h0m3150-400h0m-4000-120h0m690 210h0m-160-170h0m5870-50h0m3780 40h0m-4450 350h0m-190 60h0m-6150-310h0m2120 30h0m5410 310h0m-6670-40h0m1640-210h0m5140-110h0m2950-230h0m-3490 260h0m1930 240h0m940-50h0m-3110-190h0m-4020-70h0m-2220-120h0m6010 170h0m2790 160h0m1650-200h0m-4390 140h0m1560 110h0m1200-240h0m-6080 20h0m790 180h0m6310-200h0m-10170 0h0m5140 40h0m1710-40h0m2260 90h0m-6860-440h0m-1900 340h0m5450 280h0m-5410-140h0m5660-160h0m2100 250h0m-4170 160h0m-1190-20h0m2520-250h0m-200-10h0m2510 0h0m-3060-250h0m-4960 290h0m11000 110h0m-4280-90h0m-6240-110h0m30-60h0m3030-60h0m-1720-230h0m-1240 700h0m1040-560h0m2950 530h0m550-180h0m-890 30h0m5600 50h0m-7840-290h0m1320-440h0m5210 500h0m-8120 210h0m2120 50h0m5530-10h0m1320-270h0m-240-200h0m-7470 430h0m9100-240h0m-6950-10h0m4370 250h0m3030-410h0m-9330-20h0m8020 130h0m-4430 0h0m4680-120h0m-2180-30h0m-5490 680h0m500-180h0m1300-450h0m6850 20h0m-6970 360h0m5460-160h0m-8870-130h0m8320 50h0m-5610 650h0m2180-680h0m1830 20h0m-4700 20h0m4300 130h0m-2810 160h0m4110-60h0m-1660 310h0m-5880-490h0m10280 230h0m-2270-320h0m-3430 420h0m3130-360h0m-2790 540h0m5250-540h0m-4630 140h0m4270 50h0m-10110-430h0m2920 360h0m4340 10h0m-520-90h0m-4460 70h0m2610-230h0m-5090 240h0m450-320h0m4430 600h0m1900-200h0m-4350 90h0m5850-120h0m870-260h0m-250 330h0m-200-130h0m-4100-340h0m5990 520h0m-3170 60h0m-4630-420h0m6200-340h0m-5830-30h0m2200 530h0m-400 80h0m-3410-270h0m4540-230h0m3980 340h0m-9960-60h0m-570-210h0m10040 680h0m-9750-370h0m3040-70h0m7150 680h0m-5250-420h0m5560-320h0m-7260-290h0m5410 630h0m860 120h0m780-10h0m-6100-440h0m-2460 140h0m1100-110h0m5200 160h0m950-400h0m-1360-40h0m-1150 470h0m-2210-340h0m-2840 390h0m6180 40h0m-120-240h0m-1220-190h0m-3070 320h0m4070 270h0m2490-100h0m-3370 320h0m2330-640h0m-530 70h0m-440-500h0m-1000 740h0m-6050-700h0m5400 200h0m-5590-140h0m760 640h0m-530-390h0m7630 330h0m-3400-250h0m1350-120h0m-320 170h0m-160-200h0m1540 260h0m700-40h0m-4650-220h0m6790-60h0m-6270 460h0m3790-200h0m1030 160h0m-4170 0h0m440 120h0m-2780-310h0m4720 240h0m3720-600h0m-1970 150h0m-4890-290h0m4200 80h0m610 360h0m-5310 230h0m6280-240h0m410-270h0m-750 410h0m-8440-20h0m8890-320h0m-4640 500h0m-2420 330h0m-540-530h0m4950 250h0m-300-280h0m-820 240h0m740-170h0m1680 30h0m-6770 230h0m5680-170h0m840 50h0m-1850-230h0m-2600 180h0m-2410-150h0m2710 330h0m-170-110h0m6930-40h0m10 210h0m-7520-630h0m4720 490h0m-4950-560h0m560 640h0m-3420 20h0m7670 120h0m-4400-500h0m-2450-190h0m1430 240h0m5310-10h0m-2760 130h0m3570-20h0m-470-410h0m-7350 300h0m7230-220h0m-1600 150h0m4480 290h0m-3470-120h0m-4450-580h0m6390 800h0m-5990-90h0m1200-90h0m1850-170h0m3290 330h0m-7530-350h0m6780-250h0m-3430 180h0m3310 420h0m-2430-560h0m-6180 510h0m9510-550h0m-5210 610h0m-2510-480h0m-400 40h0m1260 150h0m1950 150h0m3030-210h0m1860-320h0m-6880 470h0m5920-220h0m-8130-80h0m6280 370h0m680-200h0m-710-260h0m-6100 490h0m10040-190h0m-8980-170h0m4820 310h0m-4540-20h0m2430 0h0m5820 210h0m-3760-420h0m4020-100h0m-1110-160h0m-5160 100h0m-3560 190h0m3150-110h0m270 460h0m-2920-480h0m-20 310h0m4230-250h0m-2310-170h0m1590 360h0m-570-180h0m5860 250h0m-1410-200h0m-4340 190h0m-3930 20h0m6730 110h0m-780 240h0m570-720h0m-360 80h0m-3240-10h0m3600 240h0m2120-240h0m880-230h0m-3300 480h0m4010 80h0m-5630 290h0m-3980-560h0m8300 650h0m-5620-130h0m2240-480h0m2750 410h0m-760-330h0m-5280-50h0m6130-150h0m-5130 230h0m-3240-440h0m950-120h0m6560 640h0m-2270-310h0m-4340-150h0m8090 50h0m-7040 290h0m4480-110h0m-830-70h0m-1900 320h0m-1900 110h0m7100 220h0m-130-840h0m-6230 610h0m-2970-250h0m8690 130h0m-680-160h0m-3680 10h0m-3070-290h0m-620 470h0m9430-270h0m-6430 220h0m1420 50h0m-3230-570h0m4180-140h0m-1070 670h0m-5030-330h0m7040 210h0m-4160-90h0m250 430h0m3070-30h0m-2300 40h0m740-360h0m-1510-140h0m1310 160h0m3270 160h0m-570 190h0m4160-620h0m-4010 330h0m-570 180h0m4480-120h0m-3590 10h0m840-280h0m-3830 500h0m3480-490h0m-4650-30h0m4480 210h0m-5590-250h0m1860-80h0m3830 720h0m-8060-410h0m1180 320h0m6760-190h0m-3000-520h0m2720 220h0m1000 290h0m2430 30h0m-7040-30h0m-3160-460h0m-570 290h0m1220 340h0m2840-330h0m-420 60h0m-1360 120h0m3150 80h0m-1500-100h0m-2290 80h0m8280-60h0m-5200-210h0m3880 190h0m-1980-90h0m-4870-210h0m9230-260h0m-9940 800h0m6430 120h0m-6060-430h0m4610 140h0m3090-310h0m-5910 120h0m2420-70h0m-2670-260h0m-700 700h0m-2110-710h0m3890 450h0m2050-160h0m-550 340h0m-70-360h0m1920-360h0m-1070 770h0m-5380-230h0m8930-210h0m-3750-110h0m-710 330h0m-5310 10h0m5900 160h0m-3710-800h0m7500 670h0m-8680-170h0m7560-210h0m-6890 30h0m-740 130h0m4190-180h0m790 90h0m-3350 240h0m1210-210h0m2970 20h0m-1540 120h0m1260-130h0m-3100-110h0m5690 190h0m-4740 80h0m-4290-360h0m2890 70h0m1940 630h0m-4430-20h0m3160 40h0m6630-600h0m-2680 550h0m3320-20h0m-8090-240h0m6330-120h0m-9450-250h0m2510 570h0m1100-640h0m7550 290h0m-7770 20h0m-3070-100h0m2910 80h0m-2810 70h0m8430-170h0m-90-370h0m2180 100h0m-6330 750h0m3730-440h0m900-390h0m-5300 170h0m4070 680h0m-5570 20h0m2620-320h0m1780-10h0m-1430-20h0m-2110-130h0m6290 140h0m-7630-20h0m1860 20h0m5160 150h0m-8850-480h0m-40-220h0m5860 580h0m-3490 60h0m6160 0h0m-8590-10h0m250-80h0m8410-70h0m-3450 200h0m760-580h0m1660 220h0m-2990-70h0m290 70h0m-270 190h0m2490 200h0m-3840 70h0m-60-420h0m-1770 220h0m9240-210h0m-7670 300h0m-1740 400h0m1340-350h0m6920-170h0m-3950-160h0m450 100h0m440 100h0m3640-100h0m-9620-30h0m-190 90h0m6990 330h0m-1520-200h0m5290 400h0m-6650-530h0m4780 250h0m-5490 180h0m4120-490h0m-3550-30h0m-2680 370h0m-1010-680h0m7810 400h0m2270-120h0m-9300 10h0m3880-10h0m-650 130h0m4970-280h0m-7310 530h0m-1530-120h0m2140-120h0m940 120h0m2360 200h0m3730-690h0m-9430 480h0m5500-110h0m670 140h0m1550-280h0m-8020 180h0m3010-370h0m-750 430h0m7620-40h0m-3040 40h0m-3800 50h0m-3310-90h0m850 130h0m10090-70h0m310-320h0m-6440 300h0m-2060 60h0m7890 150h0m-2030-480h0m-8530 530h0m3060-970h0m4780 510h0m2280 310h0m-9760-30h0m6600-150h0m3410 260h0m-10200-310h0m10630-190h0m-7000 310h0m6520 200h0m-9110-250h0m10 140h0m1910 80h0m7740-590h0m-3460 160h0m110 280h0m-7550 160h0m9850-240h0m-1010-100h0m1270 180h0m-4220 230h0m-2600-360h0m-1120-80h0m2050 160h0m6460-260h0m-7840 260h0m-2950-240h0m7970 270h0m-380 0h0m740-90h0m380-130h0m-3990-110h0m5770 770h0m-2440-500h0m-6480 0h0m2130-600h0m-250 360h0m-780 290h0m-1610-580h0m8560-20h0m-7630 220h0m3900 490h0m50-480h0m4560 140h0m80-170h0m-8660 340h0m8650-130h0m580-90h0m-8300 550h0m3960-850h0m-280 180h0m-6170 140h0m10080 30h0m-7870-110h0m7410 190h0m-5930-80h0m500 30h0m6080 370h0m-4640-560h0m2250 170h0m2010-270h0m-6590 420h0m-1430 60h0m5690-190h0m-7010-230h0m3170 190h0m490 260h0m1110-130h0m-1030 150h0m4280-360h0m-3870 160h0m3950-70h0m-1710-310h0m2350 670h0m1210-160h0m-4300 170h0m3700-410h0m-2830-70h0m-3710-120h0m3620 590h0m-1280-310h0m-5580 10h0m3560 0h0m5630 320h0m-7410-80h0m3990-330h0m-3790-40h0m7910-40h0m-4940 210h0m-2470-10h0m6090-180h0m-5890 350h0m410-110h0m2060-460h0m-2680 180h0m1490 0h0m120 320h0m2900-180h0m2250 220h0m20-220h0m-3970-250h0m-5420 280h0m-60 40h0m1470 150h0m2010-80h0m-3460-250h0m-90 30h0m3660 260h0m5920-40h0m-9500-210h0m4260 370h0m3360-550h0m-2130 310h0m-1040 0h0m3020-40h0m-5360 110h0m-1740 20h0m10670 50h0m-2830-510h0m-1320 540h0m2260-540h0m-5380 770h0m6970-520h0m-8520-10h0m6340-260h0m1730 560h0m-8360-110h0m-1180 230h0m10250-510h0m-1760-150h0m-1740 570h0m2870-610h0m-3410 140h0m2970 240h0m-2870-100h0m-5160 140h0m6820 40h0m-2910-230h0m4070 280h0m-6010-240h0m1820 640h0m-1340-370h0m5930-160h0m-680-250h0m-8270 300h0m250 40h0m7180 210h0m2240-70h0m-4270-520h0m3280-80h0m-9220 510h0m5380-60h0m750-170h0m-90 80h0m3790 340h0m-3150-570h0m-2940 260h0m5560 420h0m-8120-490h0m2260 290h0m6310-230h0m-4250-120h0m4410-20h0m-10320 420h0m-200 20h0m830-370h0m2210 240h0m470 110h0m520-30h0m3140-100h0m-4760 60h0m7200 140h0m-2110-600h0m-7930 180h0m6590 210h0m3550-60h0m-9290 350h0m8270-510h0m100 220h0m-8220 0h0m5180-160h0m3020 150h0m-3810-310h0m4270-60h0m-5320 260h0m2000 140h0m-800-90h0m-3220-10h0m7080-350h0m-1020 460h0m880-50h0m-5100-220h0m6180 370h0m-8750-670h0m1760 220h0m5110-210h0m-6220 470h0m8040-60h0m-2510 160h0m-4960-250h0m-2060 330h0m10230-70h0m-8740-150h0m6100-360h0m-7260 150h0m3130-250h0m-3580 310h0m7560-200h0m-3650 550h0m1940 40h0m-2450-130h0m2610-250h0m-2060 20h0m-3290-420h0m7680 390h0m-4790 20h0m-2510 240h0m6070-80h0m-7570 80h0m8780-70h0m-50-160h0m-8250 490h0m1350-460h0m-1530 310h0m8650-190h0m2150-300h0m-5410 370h0m500-80h0m1070-190h0m2510-10h0m-9310 160h0m3560 120h0m-3330-120h0m5070 120h0m-4030-360h0m6600 370h0m-1390-20h0m3710-160h0m-1130 240h0m-450-60h0m780-120h0m-2350 20h0m-6920 100h0m1950-310h0m1150 460h0m4310-380h0m80 190h0m-470-150h0m-1360 300h0m-3740-270h0m2710-70h0m3110 220h0m-7150-70h0m4780-630h0m670 660h0m4480-110h0m-9460-50h0m4900 110h0m2310-50h0m-70 280h0m-4520-550h0m430 320h0m5610 230h0m-2860-460h0m-920 310h0m-680 120h0m3680-200h0m-1820-270h0m2790 270h0m-5780 120h0m2050 200h0m-930-400h0m-160 250h0m4280-70h0m-6370-20h0m5020-160h0m-5610-140h0m-630 750h0m3760-1010h0m-3720 970h0m1940-830h0m3020 570h0m-4390-120h0m5950-80h0m1460 60h0m-3390-440h0m-3700 160h0m2910 30h0m4030 540h0m-2170-360h0m-1410 220h0m-6570-600h0m10260 430h0m-8290-350h0m4920 710h0m530-300h0m-790 100h0m-6260-140h0m7980-170h0m-6910 230h0m9320 60h0m-4360-210h0m-2150 400h0m5190-420h0m-5920 190h0m7520-780h0m-4300 780h0m-1100-40h0m-3900-310h0m1940 60h0m1990 190h0m-2460-80h0m6960 250h0m-9910-60h0m8100 80h0m1330-280h0m-840-390h0m-6630 300h0m1530-20h0m900-110h0m-3620 400h0m-170-430h0m6170 0h0m-2270 550h0m40-440h0m-1590 400h0m-2110-640h0m5720 160h0m-3180 180h0m100 170h0m-3190-580h0m1670 550h0m4550-530h0m-6790 190h0m8930-170h0m1100-20h0m-2920 400h0m-200-110h0m3500-150h0m-7030 330h0m3890-370h0m-3350 400h0m-1020-180h0m2870-20h0m-1970 70h0m-3390 510h0m80-940h0m1080 380h0m2090 110h0m5220 230h0m-1700-210h0m770 0h0m-3950 70h0m2000-60h0m120 190h0m-60-200h0m1630-80h0m1240 170h0m-6550 140h0m-380-250h0m-790 30h0m7920-80h0m360 230h0m-8190 350h0m2740 80h0m-1310-260h0m4890-390h0m-3490-160h0m5180 290h0m-3100 30h0m3880 0h0m-880-320h0m-9430 230h0m940 170h0m4780-10h0m-3100-110h0m5850-220h0m-4270-250h0m1170 750h0m2780-260h0m-4860 270h0m2640-230h0m-1200 310h0m-2290-50h0m2290-300h0m6170-480h0m-10200-190h0m9150 450h0m-7890 310h0m4190-120h0m300-550h0m-6050 440h0m4580 340h0m-1940-400h0m-1710-60h0m340-430h0m-660 340h0m5870 350h0m-4200 0h0m5570-80h0m-3590 70h0m-3310-200h0m8000 450h0m-8700-270h0m9670 70h0m-3860-410h0m1530 330h0m-870 40h0m-4780 270h0m280-600h0m-1730-200h0m8080 590h0m-7110-60h0m-1260-80h0m6350-30h0m2490 440h0m-8030-430h0m160 80h0m9660 200h0m-2650-420h0m-6190-10h0m2470 180h0m1060-550h0m4320 230h0m-9350 360h0m490-370h0m-1290 230h0m1790 400h0m3540-640h0m-4420 320h0m7880-20h0m210-20h0m1470-40h0m-9320-230h0m7400 290h0m660 30h0m-7690 50h0m7050 120h0m-7460-20h0m8960-320h0m-6040 140h0m7150 110h0m-4990 140h0m-1790-720h0m-3980 620h0m4960-150h0m-1090-100h0m-3480 30h0m4260-80h0m4080 310h0m-8680-110h0m5040-170h0m-320 70h0m-5050 50h0m6870-140h0m-4750 0h0m8370-240h0m-3500 440h0m2150 180h0m-5130 320h0m-3370-300h0m530-660h0m7570 340h0m-3950 400h0m3790-270h0m-6060-140h0m-920-10h0m-370-60h0m330 310h0m1860-280h0m7140 80h0m-8150 200h0m-900-250h0m180 210h0m230-430h0m620 440h0m-1050 200h0m5790-150h0m-2150-30h0m4120-230h0m-1610-240h0m-1670 290h0m-4800 90h0m1150 390h0m6700-120h0m-3640 50h0m-1620-600h0m-2440 220h0m5060 240h0m4230-410h0m-9200 420h0m450-450h0m7560 160h0m-1670 380h0m-1210-390h0m-2880 100h0m470-20h0m-2860 20h0m9740-90h0m-11150 120h0m6680-240h0m-5150 220h0m3330-80h0m5850 130h0m-9610 150h0m-150-300h0m9710-50h0m-4090 240h0m-1390-20h0m-4520 60h0m8680 40h0m-8900-130h0m4150 80h0m130-270h0m-2290-40h0m5970 110h0m-710 350h0m-1160 0h0m-800-330h0m-2080 70h0m3260-210h0m-70-420h0m-870 60h0m3100 320h0m40 120h0m-6260 300h0m3490 20h0m3690-180h0m-1540-130h0m-5830 260h0m7550 360h0m-6300-1030h0m4800 380h0m-2280 280h0m-1070-200h0m-1720-220h0m690 530h0m-110-190h0m-3920 190h0m1970-250h0m750-430h0m2120 510h0m-2970-200h0m430-80h0m990 400h0m1830-260h0m-4360 150h0m6950-130h0m-3120 180h0m-2350-410h0m4080 100h0m1720 630h0m2840-290h0m-530 70h0m-7050-240h0m-1330 180h0m5500-780h0m-1110 230h0m-3970 470h0m4310-260h0m-3980 540h0m2520-390h0m2940-360h0m-8620 0h0m790 780h0m2440-420h0m4470-240h0m-2110 70h0m-3140 20h0m6230-40h0m-2230 400h0m4050-400h0m-2730 680h0m-6090-620h0m1120 170h0m-1920-430h0m4010 410h0m250 20h0m-1550-160h0m5620 130h0m-740-40h0m-5490-140h0m420 100h0m7470-460h0m-7040 370h0m2340-420h0m-2670 630h0m1790-620h0m-2040 600h0m1300-370h0m3990 660h0m490-410h0m2290 120h0m-240-260h0m-5030-50h0m2260-210h0m450 370h0m-5420-80h0m1970 410h0m-3670-720h0m7480 690h0m-1090-800h0m-7440 10h0m9900 570h0m-8900-40h0m8990-230h0m-1360 370h0m-1650-100h0m-4690 150h0m4600 300h0m-1370-420h0m-1820 260h0m-4020 140h0m9620-270h0m-1900-140h0m-1470 150h0m0 130h0m-5540-370h0m4770 180h0m-3980-20h0m2820 40h0m1440 110h0m-820 140h0m3940-400h0m-5460 40h0m3200-350h0m1950 470h0m-3420-40h0m3010 120h0m-1380-280h0m2190-160h0m1010-210h0m-2450 560h0m1100-300h0m-410 380h0m-2630-410h0m3380 430h0m-8660-700h0m8660 380h0m-1190 70h0m-4420 230h0m390 130h0m-240-140h0m4920-250h0m-5060 60h0m-2800-150h0m10160 320h0m-10610-40h0m8610-70h0m-940 60h0m-1490-40h0m-5710-510h0m7080 530h0m-6040 0h0m-1920 180h0m2740-240h0m-2120 260h0m10440-790h0m-7110 300h0m2770 0h0m-790 180h0m1630 200h0m0-370h0m1030 10h0m-3940 100h0m-4330 440h0m7540-610h0m1240 450h0m-4120-590h0m1560 250h0m-970-210h0m3590 230h0m-5560 190h0m-1050 0h0m8210 170h0m-2590-30h0m-2050-490h0m-1130 20h0m5930 350h0m-9110 150h0m4570 110h0m-2710-290h0m-60-180h0m-110 0h0m-400-220h0m5450 130h0m-7710 170h0m9270 280h0m-6150-150h0m490 240h0m-3030-320h0m6490 0h0m-2170-50h0m970-200h0m-5390 290h0m5530 350h0m1600-350h0m-990-430h0m-7450 400h0m8110-90h0m-3480 170h0m6660-120h0m-2200-80h0m-340 50h0m2520 80h0m-4330 10h0m-3110 480h0m470-610h0m4130 330h0m1670-150h0m470-60h0m-4380-200h0m-1330-170h0m-2530 390h0m2100-310h0m6880 450h0m-1620-290h0m-450 40h0m-7550-190h0m4940-20h0m2360 140h0m1520 110h0m-760 70h0m-4660-40h0m4760-560h0m430 300h0m-8020-40h0m7350 100h0m1560 120h0m-1020-250h0m610 660h0m-8830-420h0m5050 280h0m-3010-60h0m6030-10h0m-6870-50h0m-1050 10h0m910 80h0m3320-200h0m-4780-80h0m3150-130h0m3450 250h0m-6540 10h0m-690-270h0m450 240h0m2450-10h0m6490-180h0m-3360 70h0m-990 500h0m1470-750h0m-5600 260h0m8300 220h0m-3050 90h0m-4490-140h0m5710 510h0m-6250-510h0m5940-80h0m-6840-70h0m-150 170h0m7670-360h0m330 360h0m-5950 270h0m-1110-580h0m2680-10h0m-820 200h0m1710 200h0m5430 80h0m-4940-240h0m3740-230h0m-5070 430h0m3520-430h0m-1580 120h0m500-50h0m1870 50h0m-480-10h0m-7210 100h0m1650-20h0m220-160h0m4870 130h0m-1750 200h0m1790-190h0m870-270h0m-7340 790h0m2250-660h0m4300 220h0m900 20h0m-1570-90h0m-1960 120h0m290 40h0m-580-220h0m5950-280h0m-2520 380h0m-3170 20h0m5040 40h0m-630-230h0m-6310 200h0m-2340-110h0m3850-250h0m150 560h0m5600-350h0m-6970-140h0m6090-250h0m-500-80h0m-7960 970h0m540-370h0m7260 180h0m-820-120h0m2650-330h0m-3190 110h0m-480 500h0m-1730 180h0m3010-440h0m-1650-50h0m1770 50h0m-6300 290h0m-2100-260h0m3910-60h0m4780 90h0m-2280 20h0m1730-60h0m-1640-80h0m-5250-270h0m340 110h0m6190-220h0m-4840 550h0m1200-500h0m5160 190h0m770-80h0m-5200-110h0m5510 140h0m-4570 500h0m840 100h0m-420-580h0m-1920 260h0m-1440-210h0m5300-80h0m-3960 300h0m220-350h0m-200-80h0m4950 510h0m-2900 70h0m-940-260h0m-3450 200h0m6810-240h0m-8400-180h0m2720 460h0m-720-20h0m-390-40h0m3260-450h0m-2610 310h0m-710 60h0m1180-250h0m5990 140h0m-3810 80h0m-2390 370h0m4210-360h0m-4850 290h0m2230-600h0m290 390h0m-970-170h0m5750 0h0m-150 110h0m-8990-310h0m10470 280h0m-1500 120h0m-6040-340h0m540-330h0m4010 490h0m-1210 100h0m230 140h0m-3990-270h0m1370 70h0m5520 60h0m-5190 80h0m1720-380h0m-3180 300h0m4110-240h0m-5710 420h0m5740-320h0m-6080 210h0m5130-40h0m3890-150h0m-7710-120h0m-1310 310h0m3050-40h0m5480 70h0m-6030-150h0m4260-70h0m1900-370h0m-1830 450h0m-2210-230h0m-3690 310h0m-880-610h0m8010 90h0m-4940 450h0m-2830 40h0m6420-660h0m-6870 10h0m-430 680h0m4990 370h0m470-360h0m-2230-110h0m-1200 220h0m5010-50h0m-4280-250h0m-3430 190h0m5810 10h0m1410-200h0m-5230 180h0m5180-10h0m-3970 40h0m5490-10h0m-7480-410h0m130 120h0m-1550-10h0m5050 20h0m0 460h0m780-360h0m4580 120h0m-5640-170h0m-4220-90h0m-630 0h0m980 230h0m630-230h0m6890 450h0m-6680-630h0m2000 460h0m7310-590h0m-4440 170h0m-1750 420h0m6210-500h0m-3510 310h0m-100 120h0m-1820 10h0m5090 30h0m-4750-530h0m2160 440h0m-1290 50h0m370-270h0m-6510-220h0m990 370h0m8240-10h0m-1460 290h0m730-220h0m650-150h0m-4970 250h0m4730-240h0m-6590-80h0m140 350h0m160-350h0m6320 310h0m-9000 60h0m10160-460h0m-3130 420h0m1640-610h0m-9310 700h0m3920-230h0m-270 250h0m30-300h0m7440 110h0m-8770-230h0m2190-270h0m-1350 530h0m-660 70h0m-290-270h0m1630-420h0m-3750 730h0m2980-690h0m1370 340h0m-3290-80h0m800 260h0m5190-230h0m-150 260h0m3930 70h0m-6940-220h0m290 170h0m-290 40h0m3640-250h0m-6240 100h0m7750 190h0m-2190 40h0m-1880-130h0m5160 0h0m-9420-30h0m4180-10h0m2140-60h0m-2190 150h0m-2170 410h0m3840-430h0m1270-630h0m-2850 730h0m2750-180h0m-1690 120h0m-5410-680h0m4970 560h0m-2430 250h0m6340-540h0m920 320h0m-6580-70h0m6600-370h0m-930 170h0m-2860 10h0m-3430 290h0m1900-30h0m-220 100h0m3380 180h0m-3190-240h0m2740-460h0m60 290h0m-4340 70h0m-1850-30h0m1030 170h0m8020 30h0m-1380-470h0m-4080 570h0m-90-600h0m3780 520h0m-4650-40h0m4060-400h0m650 290h0m1590 90h0m-1350-270h0m-9500 380h0m2720-210h0m6340-220h0m490 380h0m-7170 60h0m8600-370h0m-10680 230h0m4810 0h0m-1650 70h0m-2610-90h0m8050-30h0m-6730-180h0m-1340 290h0m5730-140h0m-570 160h0m-60 10h0m1440-140h0m-5250-70h0m1470 490h0m150-410h0m-2800-100h0m2310 110h0m-200-520h0m290 70h0m-2960 530h0m9330 160h0m-5310-370h0m6760-110h0m-3860-410h0m-3170 0h0m6540 580h0m-4080 150h0m-60-100h0m-4520 10h0m3180 420h0m2800-370h0m2600-40h0m-1580-290h0m-4170-90h0m4610 600h0m-5660-560h0m-470 410h0m5930-50h0m-800-90h0m-3240 350h0m260-570h0m3130 230h0m-6220 120h0m2470-470h0m1560 670h0m2980-210h0m-6540 430h0m970-700h0m-1460-190h0m4780 410h0m-120 80h0m-1060-20h0m4500-310h0m-3910 460h0m2430-210h0m-1390-220h0m550 230h0m1750-10h0m-9540-100h0m930 110h0m9470-210h0m-1680 240h0m-900-100h0m-2820 20h0m3920 180h0m-7120-410h0m390 370h0m-970-330h0m-1500 350h0m4100-220h0m3250 520h0m-7210-730h0m7950 460h0m-5040-310h0m4250 90h0m-6910-80h0m7610-20h0m-2880 90h0m1730 410h0m3300-230h0m-3360-260h0m-3320 450h0m-480-170h0m4910-460h0m2450 470h0m-9940-250h0m10470 180h0m-4430-340h0m-760 120h0m-220 210h0m1210 50h0m-3380-80h0m4100-100h0m30 90h0m-2810-80h0m4640-30h0m-3680 80h0m5430-220h0m-9330 460h0m710-360h0m4490 60h0m-5340 120h0m-50 10h0m-660 10h0m760-240h0m7190 180h0m-4400-360h0m6170 410h0m-5450 40h0m1110-420h0m-2880 340h0m3070 250h0m-3470-490h0m-1520 210h0m5770 30h0m-6700 240h0m9930-380h0m-10090 320h0m8010-30h0m-6170-550h0m6610 330h0m2300-160h0m-4520 390h0m-5470-60h0m5610-120h0m4170 0h0m-3800-10h0m1620 100h0m-990-320h0m-5780 370h0m8790-260h0m-5720 200h0m-3450 30h0m9160-30h0m-6330-50h0m2640-610h0m-2230 640h0m3540 10h0m-2710-250h0m2540 170h0m-5300 60h0m3410 120h0m-4730-110h0m460-180h0m4820 440h0m1160-410h0m-7740 90h0m7880 170h0m-5450 100h0m100-150h0m2100-100h0m1810-90h0m-630-240h0m-1780 130h0m-1820 220h0m-1540-240h0m420-40h0m-840 370h0m10030-320h0m-9190 70h0m8460 0h0m-9040 260h0m4760 70h0m-2600-440h0m-1430 200h0m1400 250h0m5230-240h0m-1040 100h0m1490-430h0m-6920 250h0m3360 270h0m3840-50h0m-3670-380h0m4960 190h0m-9700 250h0m9940-360h0m890 310h0m-920-40h0m-9480-330h0m7460 20h0m-8190 670h0m6570-400h0m-2000 70h0m3460-220h0m-6790-170h0m2910-150h0m6420 490h0m-6120 20h0m-1090 10h0m5890-140h0m-9070 350h0m6660-380h0m3170 370h0m-7200-120h0m4880-60h0m-4240-80h0m4560-250h0m-7090 60h0m1560-140h0m550 100h0m7840 90h0m-8520 120h0m-2170-140h0m10030 20h0m-5380 80h0m-10-220h0m3910 160h0m1570-130h0m-8040-50h0m6980 130h0m-8790 110h0m7850 130h0m2430-20h0m-3190-140h0m-1900-320h0m2340 380h0m-5440 110h0m7980-10h0m-5350 60h0m-4380-590h0m3300 20h0m3630 540h0m-4940-10h0m5000 70h0m390 60h0m-3090-170h0m390 10h0m-3490-440h0m8460 420h0m-9920-70h0m550-210h0m3820 100h0m960 260h0m1410-140h0m400-20h0m3220-10h0m-9290-380h0m7260 570h0m2030-170h0m-3800 50h0m450-10h0m-1060 20h0m590-100h0m2470-190h0m-3540 170h0m-3550 410h0m120-290h0m6020-40h0m-3640-160h0m-2620-40h0m8480-10h0m-3310 400h0m690-240h0m-490-210h0m-110 100h0m1620-200h0m300 440h0m-2550-120h0m1310 70h0m-8390-30h0m11250-20h0m-9350-350h0m-1780 40h0m7770 330h0m-3620 20h0m6570-390h0m-5410 160h0m-3340 30h0m2910-20h0m-1670 480h0m7900-180h0m-2380-620h0m-4470 450h0m-2230 150h0m-1130-100h0m6330-220h0m-3050-50h0m4840 250h0m1090 250h0m-5830-190h0m2690-200h0m-2790 230h0m-3890-260h0m3930-110h0m3010 180h0m-1330 80h0m-4320-150h0m6190-90h0m-2950 290h0m80-280h0m-2070 210h0m2260-20h0m3480 10h0m-2020-70h0m30-20h0m-920-280h0m1230 740h0m-2570-800h0m-3370 300h0m9150-450h0m-6050 450h0m790 60h0m700 340h0m-150-260h0m-4820 60h0m2420 40h0m-430 40h0m-490 40h0m5790-700h0m-7860 600h0m7010-160h0m-3340-240h0m6170 360h0m-9800-130h0m5630-90h0m-2600 680h0m100-870h0m700 160h0m6920 410h0m-2620-420h0m1120 290h0m-7940 20h0m8240 80h0m-2450-190h0m-7120 20h0m3450-150h0m90-60h0m-390-380h0m5090 450h0m2870 360h0m-2130-40h0m-6660-300h0m7880 400h0m-1370-230h0m560-100h0m-7020-10h0m140 570h0m3130-420h0m-5550 0h0m1730-200h0m7940-110h0m-4370 170h0m90 0h0m20 20h0m-320 140h0m5640-290h0m-2470-20h0m-7220 320h0m4460-180h0m-310-320h0m-330 300h0m-2320 520h0m4720-300h0m3010 80h0m-8100-10h0m6000-250h0m-7220-10h0m4080 450h0m-3120-350h0m8740-210h0m-9800 330h0m4720-140h0m1360 0h0m-2550 420h0m-3400-400h0m9530-230h0m-4030 260h0m-300 60h0m-4460-290h0m570 240h0m130 120h0m1110-230h0m6240 510h0m-2440-900h0m2220 500h0m-2140-200h0m610-330h0m2310 580h0m-4540-390h0m2310 130h0m-130 370h0m-1780-240h0m1470-30h0m-5040 200h0m1020-440h0m710 290h0m5300-240h0m-8680-360h0m-1040 640h0m4080 230h0m4770-250h0m-8700-180h0m9390-150h0m-3050 350h0m-4870-280h0m3140 210h0m360-380h0m-3070 290h0m5280-70h0m-5160 160h0m9010 290h0m-7630-90h0m2090 140h0m5410-130h0m100-60h0m-7690-30h0m-3010-240h0m3360-140h0m-1710 300h0m8220-170h0m-1280 250h0m70-250h0m760-200h0m-260 560h0m-2060-140h0m-4150-690h0m7410 650h0m-5570 130h0m-5070 60h0m1850-330h0m1700-130h0m-3250 240h0m10530 180h0m-10330-20h0m960-170h0m4890-400h0m1070 460h0m-1230-110h0m1060 10h0m-1530-390h0m-3330 440h0m7290 500h0m-4300-300h0m-4180-160h0m-250-410h0m5000 430h0m-3460-40h0m3090 290h0m1190-410h0m-1320 70h0m-3870-210h0m8590 320h0m-880-20h0m-6820-20h0m4570-270h0m-2390-140h0m-3840 400h0m10070-210h0m-620 230h0m-240-260h0m-1490 820h0m-8220-670h0m6190-90h0m-2260 160h0m-1990 60h0m-40-230h0m7730-340h0m-8270 550h0m1140-260h0m3800 20h0m-3380 30h0m1280-320h0m-970 500h0m-2550 280h0m4490-220h0m-4550 160h0m290-240h0m2580 300h0m6900-280h0m-6940-90h0m-3690 140h0m4930-530h0m5610 910h0m-6800-380h0m3550-480h0m-6980 120h0m5630 90h0m-4820 220h0m7250 210h0m1430-260h0m-8560 0h0m8980-510h0m-4200 770h0m-2240-270h0m6260 640h0m-7930-610h0m540 500h0m-530-280h0m5060-20h0m-1470-210h0m-2750 10h0m7200-180h0m-2850 50h0m-6380 160h0m9950 10h0m-4870-220h0m-2580 470h0m2160-420h0m-2850 120h0m-2950-50h0m6530-110h0m-410 170h0m3100-260h0m1920 390h0m-9500-110h0m4640 0h0m-5720 100h0m30 160h0m3340-140h0m6590 170h0m-10470-140h0m4430-200h0m-2880-30h0m-1330 40h0m-450 100h0m2800 40h0m8060-280h0m-7550-50h0m7670-220h0m-4010 30h0m720 560h0m-4300-20h0m3250-90h0m600-150h0m790 480h0m-880 60h0m3900-610h0m-7680 490h0m210-420h0m1840-150h0m-4730 340h0m3410-270h0m1900 140h0m-490 190h0m4990 110h0m-7500-610h0m7690 460h0m-400-230h0m-7780 210h0m-1730-50h0m9570 240h0m-8990-280h0m5460-170h0m-3580 170h0m2210 180h0m-1230-330h0m710 80h0m-3230-160h0m6460 380h0m-3960-480h0m4720 600h0m-420-360h0m-3250-230h0m-440 190h0m-3090 360h0m590-380h0m1330-390h0m-2610 290h0m7730 570h0m2390-60h0m-8170-350h0m-2560-160h0m6480 110h0m-3500 420h0m4070-320h0m-1650 140h0m3600-70h0m-8560 170h0m4170-320h0m0 170h0m2040-60h0m-4200-240h0m1450 820h0m1010-260h0m-2370 20h0m380-210h0m-630-610h0m-580 170h0m7390 360h0m-2100 40h0m-5520 30h0m400-30h0m7170-190h0m-5910 300h0m6580-280h0m-220 320h0m-150-460h0m-5260 340h0m2950-180h0m-7490 320h0m2480-70h0m7550-120h0m-9890 0h0m5670 10h0m1080 70h0m-90-180h0m-1050-140h0m820 50h0m-1150 630h0m5470-250h0m-9850-440h0m5370 120h0m3900 240h0m-4370-100h0m2730 160h0m1940-390h0m390 480h0m-2180-40h0m-7870-630h0m60 270h0m3730-310h0m-1330 400h0m-3430-220h0m11220 420h0m-1710-230h0m-2640 170h0m-3300-90h0m4840-120h0m-1790 60h0m3740 300h0m-5840-420h0m-1690 20h0m7070 230h0m90 10h0m-1370 10h0m1790-200h0m-1610 290h0m1950-230h0m-330 20h0m540 320h0m-8150 60h0m7570-890h0m-6280 410h0m2930-100h0m-6300 350h0m-510-220h0m2080-70h0m8440 250h0m-5780-220h0m-770 410h0m1900-550h0m4490 380h0m-1120-140h0m-2700 190h0m-1120-90h0m1640-600h0m-3970 760h0m4570-200h0m-3050-270h0m-1540 20h0m5050 210h0m-5190 360h0m7740-310h0m-7950-440h0m8260 630h0m-6440-260h0m4120 350h0m-3990-680h0m-2100 190h0m450 380h0m6940-560h0m-2950 220h0m-7120-270h0m8670 230h0m-8040-210h0m5590 700h0m2990-570h0m-390 50h0m1240 370h0m-2200-300h0m-2730-330h0m4620 310h0m-3520 590h0m4640-250h0m-6120-270h0m5810 220h0m-9790-50h0m580 70h0m920-150h0m2850-350h0m-2660 490h0m-1890-270h0m9000 250h0m910-400h0m-7930 160h0m-1930-50h0m3910 50h0m-3370 160h0m5940 20h0m-190-600h0m-340 600h0m-860 30h0m-1430-150h0m990-30h0m3890-90h0m-8440-30h0m9950-60h0m-6850 140h0m-920 50h0m-1820 440h0m930-290h0m4410-30h0m-2270-60h0m6080 20h0m-4000-380h0m4140 800h0m-5870-550h0m-2880 160h0m-1200-70h0m1420-10h0m5540 70h0m-5670-50h0m1360 280h0m1740-190h0m-600-510h0m-3470 590h0m3630-590h0m5320 150h0m-340 20h0m-2700 110h0m4570-190h0m-270 180h0m-440 70h0m-6020 280h0m190-550h0m670 350h0m-2240-70h0m6230 110h0m-3270-290h0m660 390h0m2360 250h0m-1890-320h0m-2690-120h0m3070 90h0m1530-160h0m-3840-290h0m-3870 310h0m-920-450h0m720 670h0m9450 0h0m320 120h0m-9230-580h0m-930 310h0m9090-320h0m-4710 470h0m-1250-100h0m4560-440h0m1230 650h0m-8160-590h0m8050 90h0m-9170 480h0m10 0h0m8920-420h0m-3150 270h0m-5880-60h0m6880 60h0m170-20h0m-2750 50h0m-2270-290h0m-370 170h0m7060-200h0m-8490 310h0m7820 310h0m170-400h0m-5340 100h0m5740-310h0m1110-110h0m-1100 220h0m-1640 350h0m840-400h0m-4380 460h0m6770-460h0m-7910 240h0m1380 70h0m3010-30h0m-2800-300h0m450 480h0m-1800-210h0m4580-470h0m2560 420h0m-1450-210h0m-4060 40h0m3700 70h0m2180-160h0m-5660 40h0m-3960 150h0m7260 20h0m-7520-130h0m4700 60h0m4720 220h0m-6200-430h0m-300-130h0m-1640 140h0m3930 290h0m2370 200h0m2010 60h0m-6490-360h0m-820 270h0m310-430h0m-2960-70h0m3580 500h0m-500 100h0m-3290-340h0m8930 80h0m1110-310h0m-6120 500h0m6450-280h0m120 170h0m-7410 110h0m7540-520h0m-2070 60h0m980-10h0m-5490 170h0m-2290 90h0m-620 50h0m3630-200h0m5600 340h0m-7310-520h0m7600 490h0m-9020 300h0m2750-460h0m6170 10h0m-2190-160h0m2370 200h0m-830-240h0m-3590 540h0m3100-330h0m-5720-200h0m6770 180h0m-8370-170h0m-440 100h0m1860 150h0m5890 0h0m-480-30h0m-8090 100h0m-40-50h0m10470 60h0m-1640-80h0m-8470 170h0m4090-400h0m-2330 270h0m3190-130h0m2270-20h0m460 40h0m-8270 170h0m9860-630h0m-5840 560h0m3760-470h0m-1090 430h0m-5750 410h0m1510-240h0m2310-350h0m-2380 360h0m2960-260h0m-600 130h0m2320 100h0m-1690 0h0m4540-580h0m-5070-220h0m-5430 380h0m1230 100h0m7010-110h0m-3090 340h0m-1540-90h0m6640-510h0m-9940 350h0m-240 450h0m4090-260h0m5200-330h0m-6210 190h0m4660 100h0m-5720-390h0m2110 440h0m-20 270h0m-3100-120h0m2980-70h0m-210-20h0m-410-190h0m-2280-60h0m-170 130h0m6730-350h0m-310 140h0m-2580 420h0m2340-460h0m-6350 460h0m2560-170h0m3980-140h0m3550-10h0m-3780 330h0m1030-620h0m940 500h0m-5640-30h0m7580-310h0m-7750-200h0m-2200 640h0m4240-330h0m390-210h0m4640-160h0m-8050 510h0m-1920 90h0m8460-240h0m-4310 110h0m4660-170h0m-4570 30h0m-2390 520h0m-1220-510h0m7700-70h0m-1390 10h0m-4350 190h0m2340-50h0m1550-100h0m-6680 60h0m2870-100h0m5820 160h0m-4380-490h0m-4250 200h0m7920 380h0m-1210-650h0m-6930 700h0m9500-250h0m-1340 440h0m1270-110h0m-2870-290h0m3250-70h0m-2270 150h0m-1520 120h0m-190 100h0m-2300-220h0m4790 40h0m-7520 190h0m1430-500h0m4560 350h0m-4630-110h0m4390 240h0m-1170-90h0m3610-250h0m330-370h0m-2130 690h0m-1540 290h0m2170-390h0m1460-140h0m-1590-180h0m-1420 390h0m3130-280h0m-6660 220h0m2970-160h0m-830-220h0m3820 100h0m-1210 160h0m-220 90h0m2520-80h0m-1000 20h0m-8280 110h0m8730-140h0m1950 280h0m-2300 170h0m-2220-520h0m-5940 440h0m8820-320h0m-6440-30h0m-1740-310h0m940 150h0m4870 170h0m900 160h0m-470-130h0m-5890 450h0m8530-190h0m-2060-10h0m350-790h0m-110 610h0m-6760-300h0m5500 330h0m1420-150h0m2110-130h0m-730 80h0m-4510 70h0m4930 0h0m-7440-420h0m5610 210h0m-2770 460h0m630-20h0m1050-330h0m1230 190h0m-8140-260h0m6420 250h0m1560-380h0m-7600 450h0m6170-420h0m2000 320h0m-6020-460h0m2270 340h0m1900-120h0m2400-390h0m-4440 750h0m-4980 90h0m5510-280h0m5070-290h0m-3550 130h0m-4110 530h0m-960-560h0m6330-70h0m560 330h0m1170 230h0m-6470-210h0m7110-20h0m-340 150h0m-8980-280h0m9470 130h0m-4590 180h0m-3220 110h0m5280-730h0m-4790 280h0m4430 160h0m-1230-440h0m-3910 420h0m-3060-390h0m9630 240h0m-20-30h0m-6920 240h0m-1010-200h0m-1230-130h0m9930 50h0m-1910 380h0m-8070-280h0m7070 240h0m-6660-520h0m4290 760h0m4540-480h0m-9630 180h0m4750 120h0m4250-610h0m-1200 270h0m-3250 200h0m4830-80h0m-8180-580h0m880 620h0m5460-190h0m-5480 20h0m-470 120h0m-1460 510h0m3190-640h0m2780 280h0m-560 20h0m3380-200h0m-8240-170h0m9630 590h0m-8620-830h0m1410 380h0m1120-300h0m6680 380h0m350 310h0m-9390-420h0m-1800 440h0m11280-750h0m-4280-130h0m-3830 300h0m5720 380h0m-1430-120h0m-1150-140h0m-5860-140h0m5000-250h0m110 960h0m3680-460h0m-9020-20h0m2210 190h0m2610 210h0m5030-330h0m-8820-510h0m5400 430h0m-20 110h0m-1540-180h0m-2310 250h0m7930-200h0m-6260 30h0m-1460 200h0m7480-30h0m-9830 70h0m4140-270h0m-3500 170h0m5540-80h0m2410 310h0m-6510-180h0m5620-240h0m1920 170h0m-4760 20h0m5060 160h0m-2660-200h0m-300 230h0m2100-440h0m-6110-20h0m1520 290h0m6060 80h0m-6990-100h0m1290-40h0m-1600 160h0m5000-430h0m-3520 240h0m5220 310h0m-6110-130h0m4570-530h0m-8680 240h0m4680 30h0m4940 120h0m-4840-100h0m4390-110h0m-470-120h0m-4900 140h0m-2950 140h0m7820-180h0m-3630 80h0m1900-360h0m-2710 680h0m2190 140h0m-1090-140h0m4520-40h0m-4790-400h0m-2310 90h0m3950 120h0m-3700 220h0m7040 300h0m-5680-1120h0m6550 730h0m-7120-30h0m-1790-310h0m3860 320h0m3290 150h0m1230-120h0m-2950-30h0m3260-110h0m-2810 190h0m2180-390h0m-3590 40h0m3910 210h0m-5590-160h0m-2890-160h0m2390-120h0m-3210 270h0m8140 250h0m-3860 120h0m-10-200h0m2290 40h0m-1520-210h0m1220-20h0m-1810-30h0m150 170h0m1280 20h0m-6460 170h0m9260 80h0m-540-360h0m-6640 40h0m5800 100h0m1000-330h0m-4760-350h0m-1890 530h0m8000 440h0m-740-200h0m-6520 0h0m6830-690h0m-8440 640h0m3480-320h0m-3200 120h0m-260 50h0m-250-170h0m8870 250h0m-5080 50h0m4840 210h0m-3230-590h0m-3410 120h0m-2410 160h0m6600 120h0m-4120-60h0m2740 80h0m-5600 0h0m7410 160h0m-4800-200h0m-2510-60h0m7940-230h0m-1890-50h0m-6700 410h0m10110-510h0m-9780 620h0m4850-430h0m1810 270h0m1010-30h0m-5760-260h0m-1820 80h0m2540 340h0m-930-460h0m-820-340h0m3610 760h0m-5450-550h0m6740-220h0m-5610 520h0m6120 390h0m-5270-560h0m-1620 480h0m1950-430h0m7710-10h0m820 240h0m140-10h0m70-290h0m-6820 520h0m-2050-330h0m5310-40h0m2460-180h0m300-330h0m-7180 910h0m1440 230h0m-4050-760h0m150 410h0m9070-370h0m-6540 400h0m5230-260h0m-5430-100h0m-1790-240h0m5690 580h0m-6560-60h0m9430-90h0m-3850 200h0m-2720-500h0m1140 310h0m890 310h0m-1360-310h0m2350-530h0m-4270 190h0m1920 240h0m2890 390h0m-4390-410h0m-1340 10h0m6480 210h0m1220-250h0m-2690 180h0m-1380-590h0m-560 270h0m-170 300h0m-90 380h0m5120-510h0m-1010-110h0m-7540 180h0m6940 80h0m3210-420h0m-9230 370h0m2520-370h0m6850 170h0m-10140-270h0m10440 740h0m-600-450h0m-9140 10h0m2720-190h0m5770 220h0m-3410 190h0m230-80h0m3260 90h0m-1810-20h0m-3210 130h0m650-110h0m5150-160h0m-2590 200h0m-550-60h0m-450-60h0m-3320 90h0m860-390h0m3860 380h0m680 10h0m-8080 240h0m-950-40h0m8030-320h0m3070 50h0m-3850-140h0m3230 60h0m-8340 40h0m-1640-190h0m1420 270h0m4150 240h0m-1490-350h0m1850 270h0m-3490-70h0m6560 150h0m-2670 120h0m-460-440h0m1380-30h0m3390 200h0m-6700-80h0m-870-620h0m-470 670h0m6200-240h0m-1860-130h0m-320 190h0m2480 180h0m-3340-350h0m-1840 180h0m4940-50h0m-1000 170h0m-4970-30h0m-610-200h0m5950 290h0m930-190h0m-3410 150h0m3790-250h0m-2290 280h0m-1060-470h0m-3180 140h0m700-180h0m-4020 530h0m8530-270h0m-2180 70h0m-850 240h0m590-180h0m-1530 140h0m-2390-500h0m5680 730h0m-3430-240h0m-1190-170h0m2440 310h0m2440-340h0m-5310 320h0m4900-270h0m2950 70h0m-10300 310h0m2040-360h0m-2030 60h0m5370 320h0m2430-320h0m1250-50h0m-7740 0h0m3140-90h0m-3240 210h0m3410-280h0m1350 190h0m2290-250h0m-7470-390h0m-880 770h0m8190-140h0m-3700-50h0m3510 110h0m170 30h0m-8330-20h0m4320-20h0m3650 90h0m2770-110h0m-9470 50h0m5270 50h0m2390-500h0m-8070 100h0m2760 180h0m5780-100h0m-150-440h0m-1780 540h0m-2520 100h0m-280-520h0m-3350 450h0m5780 40h0m-5390-20h0m7570-100h0m-3820 330h0m260 30h0m4710 20h0m-4820-330h0m4420 110h0m-6820-350h0m3230 400h0m-4140 30h0m3150 100h0m4260-450h0m-5360 170h0m-1580-420h0m650 280h0m5170 160h0m-1830 0h0m4100-170h0m-930 40h0m-1290 420h0m330-760h0m20 590h0m190-410h0m-2420 360h0m-520 350h0m-2310-240h0m3730-500h0m-7240 410h0m6960-230h0m-2060 190h0m-3390-220h0m2480 360h0m-410-60h0m-3690-260h0m2530 520h0m7870-160h0m-3110-180h0m-840-350h0m3390 420h0m-2870-310h0m1480-200h0m-7480 420h0m1990 150h0m2330-600h0m-5680 630h0m4740-480h0m1080 370h0m5140 10h0m-3630-280h0m-1940 330h0m-1180-380h0m5930 360h0m-970-530h0m1670 260h0m-4490 310h0m1700-360h0m-5140 430h0m6690-90h0m-8420-100h0m9480-120h0m-8080 270h0m5440-240h0m-6990-160h0m4010 240h0m980-140h0m3450 540h0m-3920-540h0m2700 180h0m-6250 70h0m-1630-290h0m2690 150h0m-2630-380h0m430 280h0m4180 360h0m-3230-90h0m8310 70h0m-5450-290h0m-790-90h0m-4050-80h0m6280 500h0m3660-230h0m-7210 310h0m1360-180h0m-2580-70h0m-740-40h0m3650 180h0m-1030-520h0m2800 580h0m580-410h0m-4440 180h0m6170-40h0m2260-540h0m-980 90h0m-5130 170h0m4310 320h0m-1580-290h0m-1960 90h0m510 190h0m4280-270h0m280 630h0m-6660-180h0m5900-250h0m-3950 310h0m4380-760h0m-5160 600h0m3480-290h0m-890 260h0m-1800-660h0m3280 610h0m-1030 30h0m-5480 10h0m1520-400h0m3950 390h0m2900-470h0m-1900 590h0m-2370 20h0m-4850-540h0m2100 330h0m-790-270h0m-870 300h0m-1660-120h0m-500 30h0m8110 70h0m-930-50h0m3760 40h0m-6910 130h0m6150-70h0m-1590-70h0m-7910-110h0m7000 100h0m-5070-160h0m7010 240h0m-8830-20h0m6480-30h0m-3480-60h0m6900 80h0m-6080 180h0m4140-190h0m-8490 220h0m3340 120h0m-640-130h0m-710-480h0m6150 330h0m970-560h0m-8460-40h0m5930 790h0m3680-430h0m-3500 0h0m-360 310h0m-6270-490h0m690 330h0m9340-310h0m280 230h0m-7750-280h0m-2680 330h0m10000 240h0m-5890-350h0m280 10h0m1530 120h0m4540 290h0m-8590-390h0m5070 340h0m-5120-730h0m7120 440h0m-8130-290h0m1490 30h0m5410 740h0m-8130-180h0m2330-140h0m6440-450h0m-6060 580h0m6050-100h0m-7000-70h0m7330-70h0m-5780 160h0m-3200-620h0m11020 630h0m-10360 160h0m2210-410h0m2150 210h0m3960 50h0m-4500-310h0m-2050 50h0m-160-350h0m-2110 20h0m3180 310h0m-1340 190h0m-2000-110h0m9200-130h0m-4570 200h0m-2990-370h0m1540 480h0m770-190h0m4290 100h0m-1340-30h0m3260 80h0m780-440h0m-3070-50h0m2510 670h0m-6600-10h0m1760-360h0m3880-110h0m-1110 490h0m-6990 130h0m7010-260h0m-5980-80h0m8080-110h0m-7760-140h0m6510 170h0m-5310-120h0m-3330 230h0m1510-40h0m8110-240h0m-3240 360h0m2440-530h0m-3140 150h0m4650 160h0m-2580-520h0m-6220 640h0m8540 230h0m-7700-350h0m4320 150h0m-2610-260h0m-4040 20h0m500 470h0m6970-620h0m720 300h0m-1220 210h0m-7070-290h0m-560-120h0m4420-10h0m4760-80h0m-5910 240h0m2490-310h0m4520 220h0m-2290 100h0m-3340-150h0m-4100 210h0m4310-30h0m-3910 90h0m110-180h0m4020-100h0m-1110 290h0m-1860-50h0m1350-420h0m6890 240h0m-7880 40h0m-2470 80h0m4540-20h0m5910 10h0m-9570 10h0m2370-460h0m-2960 580h0m7550-390h0m-7640 50h0m3940 270h0m5570-150h0m-1740-410h0m-480 270h0m-520 100h0m-4520 120h0m7940 40h0m670-250h0m-4230 560h0m-5970-330h0m6270 300h0m3670-180h0m-7340-180h0m5620-310h0m1050-270h0m-1240 720h0m-2810 100h0m-1090-150h0m4840-350h0m-5540 210h0m-4380 20h0m2730-120h0m7240-270h0m-2580 530h0m2530-70h0m-740-60h0m-6920 290h0m570-350h0m-770 220h0m7180 390h0m-660-950h0m-6390 630h0m7500-430h0m-2580-80h0m-2450 410h0m570 10h0m-3020-280h0m-1060 240h0m-40-110h0m1540-40h0m2590-90h0m-1130 40h0m-2360-80h0m-1000 270h0m6400 130h0m1150-140h0m770-620h0m860 580h0m-4380 30h0m-1880-330h0m5060 140h0m-7610 390h0m8800-240h0m-7910 260h0m-390-130h0m4650-200h0m-5790 400h0m3590-350h0m3160-200h0m750 500h0m2360-230h0m-4720 180h0m-3240-150h0m6060-310h0m-7040-140h0m5920 480h0m-5240-240h0m4550-210h0m-5730 310h0m9510-120h0m-10090 10h0m5580 300h0m-550-140h0m-1420 160h0m5090-210h0m-5380-490h0m890 680h0m2320-520h0m1730 300h0m-4700 300h0m5100-140h0m-2460-180h0m790 230h0m450-150h0m-7430 30h0m4100-70h0m2960 360h0m-4590-270h0m6670-320h0m900 280h0m-8590-190h0m5000 160h0m3550-120h0m-540 320h0m-8780-120h0m2930 330h0m-3460-550h0m8190 180h0m-1670-140h0m-1360 150h0m-1390-70h0m230 100h0m-3210-20h0m8490-240h0m-9770 340h0m7630-490h0m-6650 380h0m2480 160h0m2150-80h0m5270-320h0m-8940 560h0m3140-280h0m-80-80h0m1760-390h0m-1610 300h0m-2240 30h0m4280 70h0m-290-320h0m-5030 350h0m1390-320h0m1990 0h0m920 60h0m3260 220h0m-7410-120h0m2320-250h0m4560 340h0m-4670-120h0m6060 410h0m-7050-300h0m5740 160h0m-3550-140h0m-4590 200h0m2860 110h0m-2360-490h0m1630 260h0m6080-270h0m-8310 260h0m7640-20h0m-5880-90h0m-270 280h0m-170 80h0m6480-130h0m-810 260h0m-2330-370h0m-460 80h0m5930 100h0m-8060-170h0m180 240h0m-550-710h0m5690 640h0m2640-250h0m-6480 290h0m620-320h0m-40-230h0m4060 460h0m820-260h0m-6770 270h0m8380-140h0m-9910-200h0m-1380 580h0m6170-310h0m-1050 160h0m-5030-100h0m2090 10h0m4260-230h0m-1620 300h0m-2740-460h0m-180-60h0m1970 470h0m-1520-230h0m3750-20h0m-2780-230h0m-3180 40h0m8050 130h0m-4890 80h0m-910-70h0m1290-30h0m3270-220h0m-1130 300h0m-5200 170h0m8820-260h0m-660 190h0m2240-630h0m-5210 490h0m-4950 10h0m7620 40h0m1340-10h0m-140 60h0m-4740 510h0m-730-550h0m3580-190h0m-4510 60h0m-1340 80h0m6760 60h0m-4900-290h0m-1720 460h0m6570 0h0m-4020-30h0m1360-70h0m3420 510h0m1690-490h0m-8880 80h0m8500-80h0m-3780-50h0m840-190h0m-5770 200h0m5100-390h0m-6320 450h0m5200 360h0m-1270-260h0m-980 340h0m80-850h0m4870 50h0m-5310 690h0m3230-430h0m-6190 50h0m2220 100h0m550-140h0m3000-130h0m-5110-30h0m8640 110h0m-7360-20h0m-990-140h0m9440 230h0m-4250-410h0m-5790 180h0m-370 510h0m1050-230h0m1090 60h0m4580-110h0m620 60h0m-6770-180h0m410-130h0m5930 80h0m-2750-360h0m3670 480h0m-3710 240h0m-2280-80h0m-1360-30h0m4210-70h0m1020 180h0m2490-360h0m-7400 230h0m4210 150h0m30-170h0m-3910-160h0m9070-30h0m-10540 130h0m7660-20h0m-7660-100h0m8530 470h0m-8110-250h0m2020-350h0m6780 420h0m-4820-310h0m2220 0h0m1110-50h0m-2980 150h0m-1630-150h0m4830 470h0m-2900-440h0m-5070 150h0m8640 70h0m1380-290h0m-9840 270h0m10230-190h0m-3020 110h0m-190 330h0m3600-170h0m-8280 120h0m-2580-100h0m4880-530h0m-490 110h0m-1010 190h0m-660 220h0m-510 0h0m-110-30h0m6350-230h0m-4600-90h0m-3660 210h0m8610-300h0m-3360 260h0m3630-210h0m-7170-20h0m9320 260h0m-10680 80h0m-60-360h0m7560-50h0m140 140h0m-1880-120h0m-4170-100h0m5890 110h0m-7770 240h0m-240 270h0m5460-250h0m4100-80h0m-5380-240h0m-1120-110h0m-2580 700h0m580-340h0m9060 460h0m-3240-490h0m2340 150h0m-1160 330h0m-4610-70h0m-1240-430h0m6920-60h0m-2320 190h0m2080 270h0m-2030-20h0m-630-430h0m-4830-90h0m6400 170h0m-3730-60h0m1430-360h0m4110 570h0m-4780 20h0m4760-220h0m-9550 280h0m3900 90h0m-3770-90h0m11060-510h0m-6260 300h0m3050 90h0m-1810-340h0m710 490h0m-5160-400h0m4650 160h0m3720-50h0m-1560-120h0m-5860 90h0m5930 560h0m-7830-660h0m7440 150h0m-1860 60h0m3010 340h0m-2650-110h0m-5650-120h0m5580-40h0m3430 250h0m-5650-420h0m2540 70h0m-2940 560h0m6610-110h0m-3920-470h0m-1700 150h0m5330 100h0m-4740-30h0m-5090-70h0m330 40h0m5350-230h0m1810 320h0m990-660h0m-4580 690h0m1880-500h0m-5130-250h0m990 610h0m-1640 140h0m5400 50h0m-5460-410h0m950-50h0m2740 270h0m150-70h0m6220 110h0m-4080-530h0m-3310 410h0m5850-390h0m-390 410h0m-3010 170h0m-4330-200h0m2340 200h0m3760-150h0m-2720 70h0m2490-60h0m-7160 160h0m9110-370h0m-1400 30h0m-2630 110h0m-2150 220h0m-910-250h0m2290-230h0m2500 280h0m-6830 330h0m4620 90h0m4720-250h0m-5620-170h0m1640-410h0m3190 140h0m-480 430h0m610-150h0m-6480 370h0m5580-460h0m3470 140h0m-5390 100h0m1270-150h0m-3910 160h0m7400 20h0m-2590-570h0m-1620 640h0m850-160h0m-1010-160h0m2500 220h0m-6950-80h0m3340 60h0m-1150-40h0m-110 120h0m2700-230h0m-4300-130h0m2700 10h0m-3610 560h0m4360-450h0m4400-140h0m-6440 0h0m1110 400h0m2730-80h0m-1300-530h0m-4480 190h0m370 120h0m2090-100h0m-2750 410h0m2750-370h0m6780 370h0m-1530-90h0m-110-10h0m1440-20h0m-140-150h0m-7240-180h0m460 290h0m-2420-220h0m4280 50h0m660-60h0m190 420h0m1900-270h0m910-100h0m-660 280h0m1290-160h0m-6780 120h0m-2470-180h0m1100 40h0m1370 110h0m-3050-100h0m9650 0h0m650 40h0m-3570 230h0m2560-350h0m-5910 130h0m-170-10h0m-210-310h0m6850 610h0m-5290-510h0m1520 480h0m-4510 90h0m2880-770h0m-1340 480h0m7340 190h0m-8190-480h0m7370 270h0m-750 160h0m2110-490h0m-10110 160h0m8010 300h0m-2250-50h0m-340-470h0m2870 200h0m-8490 320h0m4860-40h0m4420-210h0m-6180 490h0m1820-100h0m-5590-410h0m900-290h0m3480 260h0m3850 680h0m-4580-850h0m-1140 0h0m1900 480h0m-4010-260h0m9730-160h0m750 350h0m-4170-50h0m-5830-50h0m2310-240h0m4530 270h0m-4050-80h0m-2680-250h0m8730 230h0m-5710-210h0m-2630-300h0m5030 800h0m-2820-340h0m6050 10h0m-8410 160h0m5690-40h0m-6890-30h0m5340-140h0m-4700 30h0m9150-50h0m-2980 570h0m-140-420h0m-2820 130h0m-2300-320h0m3120-50h0m3790 490h0m-8050 80h0m8830-360h0m-1550 10h0m-3010 70h0m3720 310h0m-8640-520h0m7450 550h0m0-390h0m3020-30h0m-5740 230h0m-910 60h0m-710-40h0m6080-560h0m1850 20h0m-9040 180h0m-1800 160h0m3310-80h0m4110 240h0m750-70h0m-2250-240h0m4250-30h0m-7390-180h0m3300 260h0m2430 200h0m-5790-220h0m-1440 270h0m5520-40h0m-1800 10h0m1040-430h0m4990-40h0m-7270-210h0m3890 660h0m-4930 380h0m2680-470h0m620-50h0m2720 120h0m-3680 160h0m-3780-200h0m8730-250h0m800 380h0m-4140-260h0m-3260 50h0m4000-250h0m-6450-290h0m9930 470h0m-5820 230h0m-1350-640h0m-2390 470h0m4710-560h0m-5350 920h0m9970-190h0m-5950-350h0m3670 240h0m1670 50h0m-10110-560h0m5610 520h0m-3380-70h0m6640-330h0m-2420 540h0m-3430-190h0m5430 20h0m2400 40h0m-900 150h0m-4220-600h0m-2590 390h0m7360 350h0m-7110-60h0m-1210-470h0m3860 390h0m-5880-100h0m10530 410h0m-8290-750h0m7340 310h0m400-180h0m-3370 200h0m-5460-150h0m4820-10h0m1360 100h0m-950-240h0m180 120h0m710 50h0m1950 40h0m-7990-90h0m4560-40h0m3530-190h0m-3720 110h0m-3780-30h0m4200-100h0m970 390h0m-860 0h0m570-10h0m-5630 50h0m9950-40h0m-1190 250h0m-5170-420h0m4430 200h0m-8890-360h0m9850 280h0m-4570-320h0m3590 140h0m-4400 270h0m-4820-480h0m-70 600h0m10500-570h0m160 130h0m-390 210h0m-10010 60h0m1820-390h0m7110 570h0m-7000-250h0m2020-60h0m-2900-200h0m1970 10h0m1420 380h0m3600 160h0m1350-350h0m-7580 60h0m-1030 40h0m3900-200h0m6110 80h0m-9080 110h0m2060-170h0m2380 490h0m3400-650h0m-4510 390h0m-5200-50h0m6790 30h0m850-100h0m-7490-300h0m6410 490h0m-4640-460h0m5280 40h0m-1660 140h0m1630 360h0m490-200h0m-40-420h0m3170 240h0m-8220 340h0m7800-210h0m-8190-120h0m7350-10h0m-4050 150h0m1320-310h0m680 380h0m530-210h0m-1360 190h0m-4080-140h0m4010 220h0m-6820-100h0m9360 150h0m-660-480h0m-4320 280h0m-1970 160h0m190-330h0m6620 840h0m-6500-570h0m2260-430h0m2670-100h0m1250 370h0m-4840 180h0m2490-130h0m-5960 130h0m-580-360h0m4110 290h0m-1810 60h0m570-100h0m-860 140h0m-90-30h0m5910-100h0m-6440-130h0m7120-20h0m-6300 10h0m4250 270h0m-990-240h0m2800 360h0m2860 90h0m-10010-30h0m7650-410h0m-6860 310h0m3980 30h0m-3360-120h0m10 210h0m-2290-100h0m1710-80h0m8200-710h0m-6150 170h0m-1050 580h0m-1000-180h0m4200 50h0m-3580 130h0m3950-330h0m-2790 190h0m1410 40h0m5040 170h0m-4660-90h0m3480-710h0m-1220 530h0m-5000 420h0m2900-270h0m2980-360h0m-5840 350h0m-1490-420h0m7740 400h0m-8170-100h0m7580 0h0m-7700-160h0m5810 500h0m1270-360h0m-2890-30h0m4450 70h0m-1210 150h0m-480-340h0m-3740 300h0m-1080 40h0m-1010-610h0m2850 280h0m3720 280h0m-2940 140h0m-130-100h0m2000 370h0m-740-850h0m-650-60h0m-5810 370h0m6770 230h0m3920-630h0m-1820 370h0m-1520-190h0m-3400 170h0m-3830-50h0m2900 140h0m2910-90h0m1220 210h0m-4500 180h0m1550-510h0m6420 50h0m-7680 50h0m-2220 40h0m740-250h0m6240 360h0m-6140 270h0m40 190h0m270-480h0m1440 10h0m-1530-400h0m8440 240h0m780 10h0m-7210 110h0m-180 50h0m-2000-170h0m7220 0h0m-8310 370h0m2780-280h0m7170 240h0m-2550-410h0m-7930-290h0m8270 270h0m1350 270h0m-9270 40h0m8330-350h0m-3970 100h0m-2390 200h0m-680-60h0m2030 130h0m-270-40h0m-900-50h0m3270 140h0m-5880 90h0m1990-490h0m3860-80h0m-1540 580h0m1400-370h0m2080 80h0m-4360-40h0m-210 30h0m7860 20h0m-8970-230h0m8950 340h0m-3770-340h0m2780 110h0m-3890 120h0m-2100 110h0m-670 40h0m-2290-630h0m9220 360h0m-2090 320h0m710-340h0m-590-70h0m-3860 380h0m4120 240h0m-6820-280h0m5430-90h0m-3470-310h0m-3280 310h0m2710-160h0m750-40h0m2150 90h0m3390-240h0m-30 40h0m-6180 450h0m3320-230h0m-2380 420h0m580-270h0m1500 140h0m-1760 80h0m-50 130h0m-1740-270h0m3030-80h0m5500 190h0m-7300-380h0m2590-410h0m2770 750h0m-3780-500h0m-5490 540h0m950-240h0m1720-200h0m-2400 180h0m9560-40h0m-8940-120h0m1740 20h0m6530 60h0m-8470 310h0m6150-590h0m2860-250h0m800 160h0m-10390 310h0m8060 240h0m2670-280h0m-9540-90h0m5110 450h0m840-380h0m-900-20h0m-5110-10h0m4550 380h0m-620-380h0m3640 560h0m1060-170h0m-7650-420h0m3250 200h0m4770 350h0m-2280-530h0m-740 410h0m1750-100h0m-4460-300h0m630 430h0m5830-150h0m-1170-240h0m-6210 240h0m6500-280h0m-9640-360h0m4360 390h0m-2170 130h0m-10-40h0m-1850-250h0m3470 220h0m-1360-370h0m4120 670h0m-5130 160h0m7690-250h0m50-250h0m-1190 60h0m-7320 560h0m4170-220h0m1430-230h0m1190-180h0m-5330 20h0m1030 80h0m1210-390h0m3810 690h0m-8600-60h0m130-320h0m2790 300h0m1960-370h0m-3840 80h0m-380-390h0m6700 220h0m100 330h0m-5790-400h0m740 700h0m640-90h0m-2530-90h0m3360 120h0m1040-340h0m-70-70h0m560 370h0m-3460-290h0m1260 30h0m-1420 200h0m1840-10h0m5100-370h0m-1290 210h0m-2650 90h0m-1830 50h0m8200-400h0m-10430 460h0m4290-400h0m560 290h0m-3690-210h0m3980-40h0m3710-240h0m-5300 360h0m-2070 310h0m-1050-570h0m5820 510h0m150 50h0m2980-250h0m-9670 80h0m200 40h0m550-420h0m2430 290h0m3890 110h0m480-190h0m2110-50h0m-8590 20h0m5290 200h0m-1830-120h0m3260 70h0m540 110h0m1180-390h0m-4970 240h0m3990 130h0m-360-340h0m-1580-80h0m-5740 380h0m-900-70h0m1310-570h0m450 160h0m-1090 260h0m4750 140h0m5110 50h0m-2000 10h0m-310-290h0m-6540 180h0m970-100h0m6670 480h0m-610-120h0m-6250 70h0m600-360h0m6290-40h0m-700 140h0m-5180 40h0m2300 100h0m2580-340h0m-1330-140h0m-6260 300h0m4850-130h0m-530 390h0m5730-310h0m-10610 130h0m3410-390h0m6790 700h0m-6660-160h0m-1680-550h0m5740 490h0m1310-430h0m-7850 410h0m-1400 60h0m7510-130h0m-7860 260h0m10390-250h0m-1570-80h0m1400-160h0m-3820 170h0m-4570 60h0m1090-90h0m5130 80h0m-5430-130h0m5770 0h0m-7690 180h0m9940 100h0m-4910 100h0m-1600 270h0m-1360-380h0m6160-170h0m-160-240h0m1070 80h0m-7350 260h0m-1420-250h0m1330 70h0m3950-50h0m-2740 100h0m1900-360h0m-1890 200h0m3140 620h0m-5790-400h0m4600-280h0m-2970 90h0m2480 240h0m2340 480h0m-2660-560h0m-1610 150h0m3220-150h0m120-60h0m-840 410h0m2000-70h0m-4320-360h0m-2950-100h0m-300-300h0m5920 550h0m-5030 100h0m4850-30h0m2670-130h0m510 190h0m970-50h0m920-280h0m-3990 190h0m2230 500h0m-8500-340h0m5050 100h0m2750-640h0m-2320 560h0m4800-360h0m-7410-160h0m-210-70h0m-2690 40h0m2450 140h0m3230-180h0m2280 270h0m-710-190h0m-3490 230h0m-2830-180h0m5590 130h0m-5060-80h0m5220 240h0m-3430 130h0m-3110-590h0m7950 450h0m-920 140h0m-2380-380h0m3590 70h0m-1320-380h0m3010 150h0m210 10h0m-8520 360h0m4260 230h0m-2870 150h0m1670-640h0m-60 360h0m120 30h0m-5360-50h0m3950-130h0m-370-120h0m5050-110h0m-6530 430h0m6770-230h0m-2550-330h0m3770 360h0m-6250 290h0m3280-270h0m-6590-150h0m10240 170h0m-6280 350h0m-2540-490h0m7620 210h0m-9050 100h0m8830-210h0m-7500-350h0m6790 490h0m-6290 10h0m2150-270h0m2620 210h0m-1640 70h0m5380-460h0m-3830 310h0m-3930 90h0m4890-220h0m-6190-390h0m4780 490h0m-1960 50h0m4910-160h0m-5150 130h0m6120 40h0m-3980 370h0m-510-440h0m-360 180h0m1810-120h0m950-250h0m1910 90h0m460 440h0m-10890-120h0m7700-430h0m-3060-10h0m1320 90h0m720 200h0m-690 10h0m-2970 50h0m6200-210h0m-7410 0h0m7380-30h0m-2450 160h0m-2360-140h0m4140-420h0m-4710 1020h0m-390-300h0m7270 200h0m-9320-570h0m7850-50h0m210 100h0m-7550-60h0m2110 360h0m3090-130h0m3700 20h0m-5460-50h0m-610-270h0m-3020 30h0m5340-170h0m-890 390h0m-3790 20h0m6330 110h0m-8600 160h0m5770-450h0m3960 280h0m-7730-90h0m-1030-530h0m7370 150h0m-3990 270h0m5140-120h0m-1260 350h0m1720-230h0"/><path transform="scale(.1)" fill="none" stroke="#ffa500" stroke-width="36" stroke-linecap="round"  d="M1635 4295h0m0-20h0m0 250h0m0-110h0m0-150h0m10 100h0m50 2230h0m130-2270h0m0 170h0m10-330h0m10 30h0m10 2220h0m370-1890h0m0-130h0m10-10h0m0 110h0m10 10h0m150 40h0m0-10h0m0-370h0m0 280h0m0-390h0m10 400h0m70 40h0m0 80h0m310-510h0m10 60h0m0 420h0m0-360h0m10 90h0m0 10h0m70 160h0m0-90h0m10 0h0m0 140h0m80 40h0m10-120h0m10 90h0m0-60h0m80 90h0m0-240h0m0-60h0m0 50h0m0 260h0m10-190h0m0-300h0m0 510h0m10 1380h0m120-20h0m70-1360h0m90 0h0m260-390h0m10 130h0m210 130h0m10 130h0m0-60h0m0-50h0m0 60h0m0-80h0m250 150h0m0-20h0m140 1330h0m160-1580h0m0 160h0m0-70h0m0-240h0m280 120h0m0-80h0m10 330h0m0-310h0m0 60h0m270 290h0m10-10h0m0-30h0m90-190h0m0 40h0m0-150h0m10 70h0m0-50h0m0 80h0m110 2170h0m60-1980h0m0-60h0m0-170h0m60 190h0m0-100h0m40 190h0m0-10h0m10 10h0m290-110h0m0-110h0m0-50h0m0-10h0m10 10h0m0-10h0m0 0h0m100 290h0m0-180h0m0 170h0m0-200h0m10 210h0m130-20h0m540-70h0m150 70h0m10 10h0m110-390h0m10 320h0m0-310h0m100 1700h0m280-1380h0m0-370h0m10 80h0m100 1700h0m50-1390h0m0-130h0m0-320h0m380 1810h0m10-1360h0m0-10h0m0-310h0m0 160h0m0-240h0m10 420h0m90-30h0m0-20h0m10 30h0m170 10h0m0-190h0m0 60h0m0-180h0m10 80h0m210 250h0m10 0h0m470 20h0m0-180h0m80 110h0m0-210h0m0 170h0m0-180h0m10 50h0m0 180h0m0 40h0m110 1360h0m110-1430h0m10 20h0m180 1410h0m140-1410h0m0-250h0m0-30h0m10 340h0m100-20h0m0-30h0m10 20h0m160 10h0m10-170h0m0-300h0m10 70h0m100 150h0m0-290h0m0 30h0m0-70h0m10 390h0m0-350h0m230 2660h0m10-720h0m10 40h0m20-1810h0m0 150h0m0-110h0m0-230h0m10 520h0m0-380h0m160 1790h0m130-1480h0m10 130h0m100 1320h0m150-1370h0m0-210h0m30 1610h0m210-1390h0m10 10h0m90 1410h0m150-1620h0m0-100h0m10 320h0m70 0h0m0-50h0m10 10h0m50 1380h0m40 270h0m110-1730h0m0-260h0m0 220h0m0-340h0m10 190h0m0-170h0m0 170h0m0 280h0m190-120h0m0 0h0m0 0h0m10 120h0m0-50h0m0 110h0m0-80h0m0-100h0m80 110h0m0-200h0m0 250h0m0-280h0m10 210h0m100 1420h0m210-1570h0m0 40h0m0-90h0m10 10h0m40 100h0m10 90h0m0 70h0m0-140h0m170 10h0m0 1490h0m0-1600h0m10 140h0m0-110h0m160 80h0m10 140h0m0-130h0m50 1510h0m160-1490h0m0-220h0m0 290h0m0-330h0m270 340h0m0 40h0m0-300h0m10 160h0m180 0h0m0-30h0m10 60h0m0-20h0"/><rect x="162.3" y="494.9" width="1140.7" height="53.7" fill="#ffa500" fill-opacity=".1"/><rect x="105.5" y="499" width="1255.5" height="48.8" fill="#f00" fill-opacity=".1"/><path d="M162.3 522.0H1303" stroke="#ffa500" stroke-width="2.08"/><path d="M105.5 522.7H1361" stroke="#f00" stroke-width="2.08"/><path d="M162 665.9V380.5" stroke="#800080" stroke-width="2.08" stroke-dasharray="2.08 3.43"/><path d="M1303 665.9V380.5" stroke="#800080" stroke-width="2.08" stroke-dasharray="2.08 3.43"/><path fill="#ffa500" d="M203.2 660.3h6.2l-3.1 5.4zM211.2 660.3h6.2l-3.1 5.4zM263.2 660.3h6.2l-3.1 5.4zM367.2 660.3h6.2l-3.1 5.4zM675.1 660.3h6.2l-3.1 5.4zM752.2 660.3h6.2l-3.1 5.4zM772.2 660.3h6.2l-3.1 5.4zM815.1 660.3h6.2l-3.1 5.4zM951.2 660.3h6.2l-3.1 5.4zM987.1 660.3h6.2l-3.1 5.4zM1112.1 660.3h6.2l-3.1 5.4zM1206.2 660.3h6.2l-3.1 5.4zM1296.1 660.3h6.2l-3.1 5.4zM276.6 386.5h6.2l-3.1-5.4z"/></g><text x="732.6" y="657" font-size="14.1" text-anchor="middle" textLength="33.81" lengthAdjust="spacing" >6935</text><rect x="105.5" y="380.5" width="1380.0" height="286.0" fill="none" stroke="#000" stroke-width="1.1"/><path d="M100.6 385.5h4.9" stroke="#000" stroke-width="1.1"/><text x="95.3" y="390.9" font-size="14.1" text-anchor="end" textLength="29.39" lengthAdjust="spacing" >9.18</text><path d="M100.6 436.5h4.9" stroke="#000" stroke-width="1.1"/><text x="95.3" y="441.9" font-size="14.1" text-anchor="end" textLength="29.39" lengthAdjust="spacing" >9.16</text><path d="M100.6 487.5h4.9" stroke="#000" stroke-width="1.1"/><text x="95.3" y="492.9" font-size="14.1" text-anchor="end" textLength="29.39" lengthAdjust="spacing" >9.14</text><path d="M100.6 538.5h4.9" stroke="#000" stroke-width="1.1"/><text x="95.3" y="544" font-size="14.1" text-anchor="end" textLength="29.39" lengthAdjust="spacing" >9.12</text><path d="M100.6 589.5h4.9" stroke="#000" stroke-width="1.1"/><text x="95.3" y="595" font-size="14.1" text-anchor="end" textLength="29.39" lengthAdjust="spacing" >9.10</text><path d="M100.6 640.5h4.9" stroke="#000" stroke-width="1.1"/><text x="95.3" y="646" font-size="14.1" text-anchor="end" textLength="29.39" lengthAdjust="spacing" >9.08</text><path d="M162.5 666.5v4.9" stroke="#000" stroke-width="1.1"/><text x="162.3" y="686.6" font-size="14.1" text-anchor="middle" textLength="7.33" lengthAdjust="spacing" >0</text><path d="M328.5 666.5v4.9" stroke="#000" stroke-width="1.1"/><text x="328.3" y="686.6" font-size="14.1" text-anchor="middle" textLength="33.81" lengthAdjust="spacing" >2000</text><path d="M494.5 666.5v4.9" stroke="#000" stroke-width="1.1"/><text x="494.3" y="686.6" font-size="14.1" text-anchor="middle" textLength="33.81" lengthAdjust="spacing" >4000</text><path d="M660.5 666.5v4.9" stroke="#000" stroke-width="1.1"/><text x="660.3" y="686.6" font-size="14.1" text-anchor="middle" textLength="33.81" lengthAdjust="spacing" >6000</text><path d="M826.5 666.5v4.9" stroke="#000" stroke-width="1.1"/><text x="826.3" y="686.6" font-size="14.1" text-anchor="middle" textLength="33.81" lengthAdjust="spacing" >8000</text><path d="M992.5 666.5v4.9" stroke="#000" stroke-width="1.1"/><text x="992.3" y="686.6" font-size="14.1" text-anchor="middle" textLength="42.64" lengthAdjust="spacing" >10000</text><path d="M1158.5 666.5v4.9" stroke="#000" stroke-width="1.1"/><text x="1158.3" y="686.6" font-size="14.1" text-anchor="middle" textLength="42.64" lengthAdjust="spacing" >12000</text><path d="M1324.5 666.5v4.9" stroke="#000" stroke-width="1.1"/><text x="1324.3" y="686.6" font-size="14.1" text-anchor="middle" textLength="42.64" lengthAdjust="spacing" >14000</text><rect x="1365.5" y="387.5" width="113" height="48" rx="2.8" fill="#fff" fill-opacity=".8" stroke="#cfcfcf" stroke-width="1.1"/><path d="M1369 399.7h30.5" stroke="#ffa500" stroke-width="2.9"/><path d="M1369 422.2h30.5" stroke="#f00" stroke-width="2.08"/><text x="1410.5" y="404.2" font-size="14.1" textLength="29.33" lengthAdjust="spacing" >mag</text><text x="1441.3" y="406.2" font-size="10.1" font-style="italic" textLength="30.9" lengthAdjust="spacing">OBSID</text><text x="1410" y="427.2" font-size="14.1" textLength="29.33" lengthAdjust="spacing" >mag</text><rect x="1348.5" y="613.5" width="130" height="46" rx="2.8" fill="#fff" fill-opacity=".8" stroke="#cfcfcf" stroke-width="1.1"/><circle cx="1367.5" cy="626.5" r="1.9" fill="#ffa500"/><circle cx="1367.5" cy="647.5" r="1.9" fill="#000"/><text x="1392.6" y="630.2" font-size="14.1" textLength="78.52" lengthAdjust="spacing" >Highlighted</text><text x="1392.6" y="651.2" font-size="14.1" textLength="18.52" lengthAdjust="spacing" >OK</text><path d="M106.1 921.5H1485.5" stroke="#b0b0b0" stroke-width="1.1" stroke-dasharray="1.1 1.83"/><path d="M100.6 921.5h4.9" stroke="#000" stroke-width="1.1"/><text x="95.3" y="927.2" font-size="14.1" text-anchor="end" textLength="79.05" lengthAdjust="spacing" >OBS not OK</text><path d="M106.1 889.5H1485.5" stroke="#b0b0b0" stroke-width="1.1" stroke-dasharray="1.1 1.83"/><path d="M100.6 889.5h4.9" stroke="#000" stroke-width="1.1"/><text x="95.3" y="895.2" font-size="14.1" text-anchor="end" textLength="42.28" lengthAdjust="spacing" >dr &gt; 5</text><path d="M106.1 856.5H1485.5" stroke="#b0b0b0" stroke-width="1.1" stroke-dasharray="1.1 1.83"/><path d="M100.6 856.5h4.9" stroke="#000" stroke-width="1.1"/><text x="95.3" y="862.3" font-size="14.1" text-anchor="end" textLength="56.11" lengthAdjust="spacing" >Ion. rad.</text><path d="M106.1 823.5H1485.5" stroke="#b0b0b0" stroke-width="1.1" stroke-dasharray="1.1 1.83"/><path d="M100.6 823.5h4.9" stroke="#000" stroke-width="1.1"/><text x="95.3" y="829.1" font-size="14.1" text-anchor="end" textLength="67.38" lengthAdjust="spacing" >Sat. pixel.</text><path d="M106.1 791.5H1485.5" stroke="#b0b0b0" stroke-width="1.1" stroke-dasharray="1.1 1.83"/><path d="M100.6 791.5h4.9" stroke="#000" stroke-width="1.1"/><text x="95.3" y="797" font-size="14.1" text-anchor="end" textLength="60.92" lengthAdjust="spacing" >not track</text><path d="M106.1 758.5H1485.5" stroke="#b0b0b0" stroke-width="1.1" stroke-dasharray="1.1 1.83"/><path d="M100.6 758.5h4.9" stroke="#000" stroke-width="1.1"/><text x="95.3" y="764.2" font-size="14.1" text-anchor="end" textLength="77.64" lengthAdjust="spacing" >not Kalman</text><g fill="none" stroke="#222" stroke-width="1.1"><circle cx="185.4" cy="856.5" r="1.3"/><circle cx="185.4" cy="889.4" r="1.3"/><circle cx="206.4" cy="856.5" r="1.3"/><circle cx="206.4" cy="889.4" r="1.3"/><circle cx="214.2" cy="856.5" r="1.3"/><circle cx="214.2" cy="889.4" r="1.3"/><circle cx="266.4" cy="856.5" r="1.3"/><circle cx="266.4" cy="889.4" r="1.3"/><circle cx="371.4" cy="856.5" r="1.3"/><circle cx="371.4" cy="889.4" r="1.3"/><circle cx="425.4" cy="856.5" r="1.3"/><circle cx="425.4" cy="889.4" r="1.3"/><circle cx="678.5" cy="856.5" r="1.3"/><circle cx="678.5" cy="889.4" r="1.3"/><circle cx="755.2" cy="856.5" r="1.3"/><circle cx="755.2" cy="889.4" r="1.3"/><circle cx="775.3" cy="856.5" r="1.3"/><circle cx="775.3" cy="889.4" r="1.3"/><circle cx="818.2" cy="856.5" r="1.3"/><circle cx="818.2" cy="889.4" r="1.3"/><circle cx="1115.3" cy="856.5" r="1.3"/><circle cx="1115.3" cy="889.4" r="1.3"/><circle cx="1210.3" cy="856.5" r="1.3"/><circle cx="1210.3" cy="889.4" r="1.3"/><circle cx="1299.6" cy="856.5" r="1.3"/><circle cx="1299.6" cy="889.4" r="1.3"/></g><path d="M106.1 1009.5H1485.5" stroke="#b0b0b0" stroke-width="1.1" stroke-dasharray="1.1 1.83"/><path d="M106.1 983.5H1485.5" stroke="#b0b0b0" stroke-width="1.1" stroke-dasharray="1.1 1.83"/><path d="M106.1 957.5H1485.5" stroke="#b0b0b0" stroke-width="1.1" stroke-dasharray="1.1 1.83"/><g clip-path="url(#c4)"><path transform="scale(.1)" fill="none" stroke="#000" stroke-width="30" stroke-linecap="round"  d="M1625 10085h0m0-20h0m0 10h0m0 10h0m0-10h0m10 0h0m0 10h0m0 0h0m0 0h0m0-20h0m0 10h0m10 10h0m0 10h0m0-20h0m0 0h0m0 20h0m0-10h0m10 10h0m0-30h0m0 10h0m0-10h0m0 10h0m0 10h0m10 0h0m0-20h0m0 10h0m0 10h0m0-10h0m0 10h0m0-10h0m10 0h0m0 10h0m0-10h0m0 0h0m0 20h0m10-20h0m0 10h0m0 0h0m0-20h0m0 20h0m0-10h0m0 0h0m10 0h0m0 10h0m0-30h0m0 30h0m0-10h0m0 10h0m10-10h0m0 20h0m0-20h0m0 0h0m0 20h0m10-20h0m0 0h0m0 10h0m0-20h0m0 10h0m10 10h0m0-10h0m0 0h0m0 10h0m0 0h0m0 10h0m10-20h0m0 10h0m0 0h0m0-10h0m0 10h0m10-20h0m0 20h0m0 0h0m0-10h0m0 0h0m0 0h0m0 0h0m0 10h0m0 0h0m10-10h0m0 10h0m0 0h0m0 0h0m10-20h0m0 10h0m0 10h0m0 10h0m0-30h0m0 10h0m10 0h0m0 10h0m0 0h0m0 0h0m0 0h0m0 0h0m10 0h0m0 0h0m0-10h0m0 20h0m0-30h0m10 20h0m0-10h0m0 0h0m0 10h0m0 0h0m10-10h0m0 10h0m0 0h0m0 10h0m0-10h0m0-10h0m0 10h0m10-10h0m0 10h0m0-10h0m0 0h0m0 10h0m0-10h0m10-10h0m0 20h0m0-10h0m0 0h0m0 0h0m10 10h0m0 0h0m0-10h0m0 10h0m0 10h0m0 0h0m0-30h0m10 10h0m0 10h0m0-10h0m0 20h0m0 0h0m0-20h0m10 10h0m0-10h0m0 10h0m0-30h0m0 20h0m0 0h0m0 20h0m10-20h0m0 10h0m0 0h0m0-20h0m0 20h0m0-10h0m0 0h0m10-10h0m0 10h0m0 10h0m0 0h0m10-10h0m0 10h0m0-10h0m0 10h0m0 0h0m10-10h0m0 10h0m0-10h0m0 20h0m0-20h0m10 10h0m0 0h0m0-10h0m0 0h0m0 20h0m10-20h0m0 10h0m0-10h0m0 10h0m0 0h0m0 0h0m10 10h0m0-20h0m0 10h0m0 0h0m0-10h0m10 20h0m0-20h0m0 0h0m0 20h0m0-10h0m0 10h0m0-20h0m10 10h0m0 0h0m0-10h0m0 20h0m0-20h0m0 0h0m0 20h0m10-30h0m0 10h0m0 10h0m0 0h0m0-20h0m0 20h0m0 10h0m10-20h0m0 0h0m0 10h0m0 0h0m0-10h0m0 20h0m0-10h0m10-10h0m0 10h0m0-10h0m0 10h0m10 0h0m0 0h0m0-10h0m0-10h0m0 30h0m0-20h0m10 10h0m0-10h0m0-10h0m0 20h0m0-20h0m0 20h0m0-10h0m10 10h0m0-10h0m0-10h0m0 30h0m0-10h0m0-20h0m10 10h0m0 10h0m0-10h0m0 10h0m0-10h0m0 0h0m10 10h0m0 10h0m0 0h0m0-10h0m0-10h0m0 10h0m10 0h0m0-10h0m0 10h0m0-10h0m0 10h0m0-10h0m10 10h0m0-10h0m0 10h0m0 0h0m0 0h0m0 0h0m10-10h0m0 10h0m0-10h0m0 10h0m0-10h0m0 10h0m0-10h0m10 0h0m0 10h0m0 10h0m0-10h0m0-10h0m10 10h0m0-20h0m0 10h0m0 10h0m0 10h0m10-10h0m0-20h0m0 20h0m0 10h0m0-10h0m0 0h0m10-10h0m0 0h0m0 0h0m0 20h0m0-10h0m0 0h0m10-10h0m0 10h0m0-10h0m0 10h0m0-20h0m10 10h0m0 10h0m0 0h0m0 0h0m0-30h0m0 20h0m0 10h0m10 10h0m0-20h0m0 0h0m0-10h0m0 20h0m0-10h0m10 10h0m0-10h0m0 20h0m0-20h0m0 0h0m10 0h0m0 10h0m0-50h0m0 30h0m0 10h0m0-10h0m0 0h0m0 10h0m10 10h0m0 0h0m0-10h0m0 10h0m0-10h0m0 0h0m10 10h0m0-10h0m0 0h0m0 20h0m0-20h0m0 10h0m10-10h0m0 10h0m0 0h0m0 0h0m0 10h0m0-10h0m10-20h0m0 10h0m0 0h0m0 10h0m0-10h0m10 10h0m0-10h0m0 10h0m0-10h0m0 20h0m0-20h0m10 10h0m0-10h0m0 20h0m0-10h0m0 0h0m0-10h0m10 10h0m0-10h0m0 10h0m0-10h0m0 10h0m0-10h0m10 0h0m0 0h0m0 0h0m0 10h0m10 0h0m0-10h0m0 10h0m0-10h0m0 10h0m10 0h0m0-10h0m0 0h0m0 10h0m0-10h0m0 10h0m10 0h0m0-20h0m0 30h0m0-20h0m0 10h0m0-10h0m0 10h0m10 0h0m0-10h0m0 10h0m0-10h0m0 10h0m10 0h0m0-10h0m0 10h0m0 10h0m0-30h0m0 20h0m10-20h0m0 10h0m0 10h0m0-10h0m0 10h0m10-10h0m0 10h0m0-10h0m0 0h0m0 0h0m0 10h0m0 0h0m10-10h0m0 0h0m0 10h0m0-10h0m0 0h0m0 20h0m0-10h0m10 10h0m0-10h0m0-10h0m0 0h0m0 20h0m10-10h0m0 0h0m0-10h0m0 10h0m0-10h0m0 0h0m10 10h0m0 0h0m0-10h0m0 0h0m0 0h0m0 10h0m0 0h0m10 0h0m0-10h0m0 0h0m0 0h0m0 20h0m10-10h0m0-10h0m0 20h0m0-20h0m0-10h0m0 30h0m0-20h0m10 10h0m0 0h0m0 0h0m0 0h0m0-20h0m0 30h0m10-20h0m0 0h0m0 10h0m0-10h0m0 10h0m0 0h0m0 10h0m10-20h0m0 10h0m0 0h0m0 0h0m0-10h0m0 0h0m10 10h0m0 10h0m0-10h0m0-20h0m0 10h0m10 0h0m0 10h0m0 0h0m0-10h0m0 20h0m0-10h0m10 0h0m0-10h0m0 0h0m0 10h0m10-20h0m0 20h0m0 0h0m0-10h0m0-10h0m10 20h0m0 0h0m0-10h0m0 10h0m0 0h0m0 10h0m10-10h0m0 10h0m0-20h0m0 10h0m0 0h0m0 0h0m10 0h0m0-10h0m0 10h0m0-10h0m10 0h0m0 20h0m0-20h0m0 10h0m10-10h0m0 0h0m0 20h0m0 0h0m0-10h0m0-10h0m0-10h0m0 30h0m10-20h0m0 0h0m0 10h0m0-10h0m0 10h0m10-20h0m0 10h0m0 10h0m0-10h0m0 0h0m0 20h0m0-10h0m10 10h0m0-20h0m0 0h0m0 10h0m0-10h0m10 20h0m0-10h0m0 10h0m0-20h0m0 0h0m0 20h0m10-20h0m0-10h0m0 20h0m0-10h0m0 0h0m0 10h0m10 0h0m0-10h0m0 0h0m0 0h0m0 20h0m10-20h0m0 20h0m0-30h0m0 20h0m0-20h0m0 20h0m10-10h0m0 0h0m0 0h0m0 0h0m0 20h0m10-20h0m0 10h0m0-10h0m0 10h0m0-10h0m0 10h0m10-10h0m0 0h0m0 0h0m0 10h0m0-10h0m0 10h0m10-10h0m0 0h0m0 0h0m0 0h0m0 10h0m0-10h0m10 0h0m0 0h0m0 20h0m0-10h0m0-20h0m0 20h0m10-10h0m0 10h0m0-10h0m0 10h0m0 0h0m10-10h0m0-10h0m0 20h0m0-10h0m0 10h0m0 0h0m10-10h0m0 0h0m0 10h0m0 10h0m0-30h0m0 0h0m0 10h0m10 20h0m0-10h0m0-10h0m0 20h0m0-30h0m0 10h0m10 0h0m0 0h0m0 10h0m0-10h0m0 10h0m10 10h0m0-20h0m0 10h0m0-10h0m0 0h0m10 10h0m0-10h0m0 0h0m0 20h0m0-20h0m0 10h0m10-20h0m0 10h0m0 20h0m0-10h0m0 0h0m0-10h0m10 10h0m0-20h0m0 20h0m0 0h0m0-20h0m0 10h0m0 10h0m10-10h0m0 10h0m0 0h0m0-10h0m0 10h0m10-10h0m0 10h0m0 0h0m0 10h0m10-20h0m0 0h0m0 10h0m0 10h0m0-10h0m0-20h0m10 20h0m0-10h0m0 20h0m0-20h0m0 10h0m0-10h0m0 0h0m10 0h0m0 10h0m0-20h0m0 10h0m0 20h0m0-10h0m10-20h0m0 10h0m0 20h0m0-10h0m0-20h0m0 20h0m0-10h0m10 20h0m0-10h0m0-10h0m0 0h0m0 0h0m0 10h0m10 0h0m0 10h0m0-30h0m0 10h0m0 10h0m0-10h0m10 10h0m0-10h0m0 10h0m0-10h0m0 10h0m0-20h0m10 20h0m0-10h0m0 0h0m0 0h0m0 10h0m10 0h0m0-20h0m0 30h0m0-10h0m0-10h0m0 20h0m10-20h0m0 0h0m0 0h0m0 10h0m0 0h0m0-10h0m0 10h0m10-10h0m0-10h0m0 20h0m0 0h0m0-10h0m0 10h0m0-10h0m10 0h0m0 10h0m0 0h0m0-10h0m0 0h0m10 20h0m0-10h0m0-20h0m0 10h0m0 10h0m0 0h0m0-10h0m0-10h0m10 20h0m0 0h0m0-10h0m0 10h0m0-10h0m10 10h0m0-20h0m0 30h0m0-30h0m0 20h0m0-10h0m0 10h0m10 0h0m0 0h0m0 0h0m0 0h0m0 0h0m10-10h0m0 0h0m0 20h0m0-20h0m0 10h0m10-10h0m0-10h0m0 10h0m0 10h0m0-10h0m0 0h0m10 10h0m0-20h0m0 20h0m0 0h0m0 10h0m0-20h0m0 10h0m10 0h0m0-20h0m0 10h0m0 10h0m10 0h0m0-10h0m0 10h0m0-10h0m0 10h0m10-10h0m0 10h0m0-10h0m0 10h0m0 0h0m0-10h0m0 10h0m10-10h0m0 10h0m0-10h0m0-10h0m0 10h0m0 20h0m0-30h0m10 30h0m0-20h0m0 0h0m0 20h0m0-10h0m0-10h0m10 10h0m0-10h0m0 10h0m0-20h0m0 10h0m0 10h0m10-10h0m0 10h0m0-10h0m0 10h0m0-10h0m0 0h0m10 10h0m0 0h0m0-10h0m0 10h0m0 0h0m0 0h0m10 10h0m0-10h0m0-10h0m0 10h0m0 0h0m10-20h0m0 20h0m0 0h0m0-20h0m0 10h0m0 10h0m0-10h0m0 20h0m10-20h0m0 10h0m0-10h0m0 10h0m0-10h0m0 0h0m10 10h0m0 10h0m0-10h0m0-10h0m0-10h0m0 10h0m10 10h0m0 0h0m0-10h0m0-10h0m0 20h0m10-10h0m0 10h0m0-10h0m0 10h0m0-10h0m0 10h0m10 0h0m0-10h0m0 0h0m0 0h0m0 0h0m10 10h0m0-10h0m0-20h0m0 10h0m0 30h0m10-10h0m0 0h0m0-10h0m0 0h0m0 10h0m10-10h0m0 10h0m0 0h0m0-10h0m0 0h0m0-10h0m10 10h0m0 10h0m0-10h0m0 20h0m0-10h0m0-20h0m10 10h0m0 0h0m0 0h0m0 20h0m0-30h0m0 10h0m10 10h0m0-10h0m0 20h0m0 0h0m0-20h0m0-10h0m10 10h0m0 10h0m0-10h0m0 10h0m0-10h0m10 10h0m0 0h0m0 0h0m0-10h0m0 10h0m0-10h0m10 0h0m0 10h0m0-10h0m0 0h0m0 10h0m0 0h0m10-10h0m0-10h0m0 10h0m0 20h0m0-20h0m10-10h0m0 20h0m0-10h0m0 0h0m0 10h0m0 10h0m0-20h0m10 10h0m0 10h0m0-10h0m0-10h0m0 0h0m0 0h0m10 20h0m0-10h0m0-20h0m0 20h0m0-20h0m10 10h0m0 10h0m0 0h0m0-10h0m0 10h0m0-10h0m0 10h0m10-10h0m0 10h0m0 0h0m0-20h0m0 10h0m0 10h0m10-10h0m0 0h0m0 10h0m0 0h0m0-10h0m0 20h0m0-30h0m10 30h0m0-10h0m0-10h0m0 0h0m0 20h0m0-10h0m10 0h0m0 0h0m0-20h0m0 20h0m0-10h0m0 10h0m10-10h0m0 10h0m0-10h0m0 10h0m0-10h0m10 0h0m0 10h0m0-10h0m0 0h0m0 10h0m0-10h0m10 0h0m0 10h0m0 0h0m0-10h0m10 10h0m0 0h0m0 0h0m0 0h0m0-10h0m0 10h0m10 0h0m0-20h0m0 30h0m0-10h0m0-20h0m0 20h0m10 0h0m0-10h0m0 10h0m0-20h0m0 20h0m10-10h0m0 0h0m0-10h0m0 20h0m0-10h0m10 10h0m0-10h0m0 0h0m0 10h0m0-10h0m0 10h0m0 0h0m10 0h0m0 0h0m0-10h0m0-10h0m0 10h0m0 0h0m0 10h0m10 0h0m0 0h0m0-20h0m0 20h0m0-10h0m10 20h0m0-10h0m0-10h0m0 0h0m0 10h0m0 0h0m10-10h0m0 0h0m0 20h0m0-10h0m0 0h0m0-10h0m10 10h0m0-10h0m0 20h0m0-30h0m0 10h0m10 10h0m0-10h0m0 0h0m0 20h0m0-10h0m0-10h0m0 0h0m10 0h0m0 20h0m0-10h0m0 0h0m0 0h0m0 0h0m10-10h0m0-10h0m0 10h0m0 10h0m0-20h0m0 10h0m0 10h0m10 10h0m0-20h0m0 0h0m0 20h0m0-20h0m0 10h0m0 10h0m10-20h0m0 20h0m0-10h0m0-10h0m0 0h0m0 20h0m10-10h0m0-10h0m0 10h0m0 0h0m0 0h0m0-10h0m10 10h0m0 0h0m0-20h0m0 10h0m0 10h0m0-10h0m10 20h0m0-30h0m0 10h0m0 10h0m0-10h0m0 10h0m10 0h0m0-20h0m0 10h0m0 10h0m0-20h0m0 0h0m0 10h0m10-10h0m0 30h0m0-10h0m0-10h0m0 10h0m0-10h0m0 10h0m10-20h0m0 20h0m0 0h0m0-10h0m0 10h0m0 0h0m0-10h0m10 10h0m0 0h0m0-20h0m0 20h0m0-10h0m10 0h0m0 10h0m0-10h0m0 10h0m0 0h0m0-10h0m10 10h0m0 0h0m0 0h0m0-10h0m0 10h0m10-10h0m0 10h0m0 10h0m0-10h0m0-10h0m0 0h0m0 10h0m10 10h0m0-20h0m0 10h0m0-20h0m0 10h0m0 20h0m10-20h0m0-10h0m0-10h0m0 20h0m0 10h0m0 0h0m10-10h0m0 10h0m0 0h0m0-10h0m0 10h0m10-10h0m0 0h0m0 10h0m0-20h0m0 20h0m10-10h0m0 20h0m0-10h0m0 0h0m0-10h0m10 10h0m0-10h0m0 0h0m0 20h0m0-20h0m0 10h0m10 0h0m0-10h0m0-10h0m0 30h0m0-10h0m0 0h0m0-10h0m0 10h0m10-20h0m0 20h0m0-10h0m0 10h0m0-10h0m10 0h0m0 20h0m0-30h0m0 10h0m0 0h0m0 10h0m0 0h0m10-20h0m0 20h0m0 0h0m0 0h0m10-10h0m0 0h0m0 20h0m0-20h0m0 0h0m0 10h0m0-10h0m10 0h0m0 10h0m0-10h0m0 0h0m0 20h0m10-10h0m0-10h0m0 20h0m0-20h0m0-10h0m0 30h0m0-20h0m0 10h0m10 0h0m0 0h0m0-10h0m0 10h0m0-20h0m10 30h0m0-30h0m0 20h0m0-10h0m0 10h0m0 10h0m10-20h0m0 10h0m0-20h0m0 20h0m0 0h0m0-20h0m0 10h0m10-10h0m0 20h0m0-10h0m0 10h0m0-20h0m0 30h0m0-10h0m10-10h0m0 0h0m0 10h0m0 10h0m0-10h0m0 0h0m10-10h0m0 10h0m0-20h0m0 20h0m0-10h0m0 0h0m10 20h0m0-120h0m0 120h0m0-20h0m0 10h0m0 0h0m10-20h0m0 10h0m0 0h0m0 20h0m0-10h0m0-20h0m0 20h0m10-10h0m0 10h0m0-20h0m0 20h0m0 10h0m0-10h0m0-10h0m10 0h0m0 0h0m0 10h0m0-10h0m10 20h0m0-20h0m0 10h0m0-10h0m0 10h0m0-10h0m0 10h0m10 0h0m0-10h0m0 20h0m0-10h0m0-10h0m0 0h0m10 0h0m0 10h0m0-10h0m0 10h0m0-10h0m10 10h0m0-10h0m0 0h0m0 10h0m0 10h0m0-10h0m0-10h0m10 10h0m0 0h0m0 0h0m0-20h0m0 20h0m0-10h0m10 20h0m0-10h0m0-10h0m0-10h0m0 30h0m0-10h0m0-20h0m10 20h0m0 0h0m0-10h0m0-10h0m0 20h0m0 0h0m10-20h0m0 20h0m0 0h0m0 0h0m0-10h0m0 10h0m10-10h0m0-10h0m0 20h0m0 0h0m0-20h0m0 10h0m0 10h0m0 0h0m10-10h0m0 0h0m0 0h0m0 10h0m0-10h0m10 10h0m0 0h0m0-10h0m0 10h0m0-20h0m0 10h0m10 10h0m0-10h0m0 10h0m0 10h0m0-20h0m0 0h0m10 0h0m0 10h0m0-10h0m0 10h0m0-20h0m0 20h0m0-20h0m0 10h0m10 10h0m0-10h0m0 0h0m0 0h0m0 10h0m0-20h0m10 0h0m0 10h0m0 20h0m0-10h0m0-10h0m0 20h0m10-20h0m0 10h0m0-10h0m0 10h0m10-10h0m0 20h0m0-30h0m0 10h0m0 0h0m0 10h0m0-10h0m10 10h0m0-10h0m0 10h0m0 10h0m10-20h0m0 10h0m0-10h0m0 10h0m0 10h0m0-20h0m0 10h0m10 0h0m0-10h0m0 0h0m0 10h0m0 0h0m10 0h0m0-10h0m0 20h0m0-10h0m0-20h0m0 10h0m10 10h0m0-10h0m0 10h0m0-10h0m0 0h0m0 0h0m10 10h0m0 0h0m0-10h0m0 10h0m0-10h0m10 0h0m0 0h0m0 10h0m0 0h0m0 0h0m10 0h0m0-10h0m0-10h0m0 20h0m0 10h0m0-10h0m10-10h0m0 10h0m0-10h0m0 10h0m0 0h0m10-10h0m0 10h0m0 0h0m0-20h0m0 20h0m10 10h0m0-10h0m0-10h0m0 0h0m0 10h0m0 0h0m0 0h0m10-10h0m0 10h0m0-10h0m0 20h0m0-20h0m0 20h0m10-20h0m0 0h0m0 20h0m0-10h0m0-10h0m0 0h0m0 10h0m10-10h0m0 10h0m0 0h0m0-20h0m0 20h0m0-10h0m10 0h0m0 10h0m0 10h0m0-20h0m0 20h0m10-10h0m0-10h0m0 0h0m0 0h0m0 0h0m10 10h0m0-10h0m0 20h0m0-10h0m0-10h0m0 10h0m10-10h0m0 0h0m0 10h0m0-10h0m0 0h0m10 10h0m0-10h0m0 10h0m0-10h0m0 10h0m0 10h0m10-10h0m0-10h0m0 10h0m0-20h0m0 30h0m0-20h0m0 0h0m10 20h0m0 0h0m0-30h0m0 10h0m0 0h0m0 10h0m0-10h0m10-10h0m0 10h0m0 10h0m0 10h0m0-10h0m0 0h0m10-10h0m0-10h0m0 10h0m0 10h0m0 0h0m0-20h0m10 20h0m0-10h0m0 20h0m0-20h0m0 10h0m0-10h0m0 10h0m10-10h0m0 10h0m0-10h0m0 20h0m0-20h0m10 10h0m0 10h0m0-20h0m0 10h0m0 0h0m0-20h0m0 20h0m10-20h0m0 10h0m0 0h0m0-10h0m0 30h0m0-20h0m10 0h0m0 10h0m0 10h0m0-10h0m0 10h0m10-20h0m0 0h0m0 10h0m0 10h0m0-20h0m0 20h0m10-20h0m0 0h0m0 10h0m0-10h0m0 0h0m0 10h0m10 0h0m0-10h0m0 10h0m0 10h0m0-20h0m0 10h0m10-10h0m0 10h0m0-10h0m0 10h0m0-10h0m0 10h0m10-20h0m0 10h0m0 10h0m0-10h0m0-10h0m0 20h0m10 0h0m0-10h0m0-10h0m0 10h0m0 10h0m0-10h0m10 0h0m0 10h0m0-10h0m0 20h0m0-10h0m10-10h0m0 10h0m0-10h0m0 10h0m0-10h0m10 10h0m0-10h0m0 20h0m0-20h0m0 10h0m0 0h0m10 0h0m0-10h0m0 10h0m0-10h0m0-10h0m0 20h0m10-10h0m0 0h0m0 10h0m0-10h0m0 10h0m0-20h0m0-10h0m10 30h0m0-10h0m0 10h0m0-10h0m0 0h0m10 10h0m0-10h0m0 10h0m0-10h0m0 10h0m0 0h0m10 0h0m0 0h0m0-10h0m0 10h0m0-20h0m10 20h0m0-10h0m0 10h0m0-10h0m0 0h0m0 0h0m10-10h0m0 10h0m0 10h0m0-20h0m0 30h0m0-10h0m10-10h0m0 0h0m0 20h0m0-10h0m0-10h0m0 10h0m10 0h0m0 10h0m0-20h0m0 0h0m0 10h0m0-10h0m10-10h0m0 20h0m0 0h0m0 0h0m0-20h0m0 10h0m0 10h0m0-10h0m10 0h0m0 20h0m0-10h0m0-10h0m0 0h0m10 10h0m0-10h0m0 0h0m0 20h0m0-20h0m0 10h0m0-10h0m10 10h0m0 10h0m0-10h0m0-10h0m0 0h0m0 0h0m10 10h0m0 10h0m0-10h0m0-10h0m10 10h0m0-10h0m0 0h0m0 20h0m0-10h0m0 0h0m10-10h0m0 20h0m0-10h0m0-10h0m0 20h0m0-20h0m10 10h0m0 0h0m0-20h0m0 10h0m0 20h0m0-30h0m0 30h0m0-20h0m10 10h0m0-10h0m0 10h0m0 0h0m0 0h0m10-10h0m0 20h0m0-10h0m0 0h0m0-10h0m0 0h0m0 10h0m10-10h0m0 10h0m0-10h0m0 0h0m10 0h0m0 20h0m0-10h0m0 0h0m0-10h0m0 0h0m10-10h0m0 0h0m0 10h0m0 10h0m0 0h0m0 0h0m10-20h0m0 20h0m0-20h0m0 30h0m0-20h0m10 10h0m0-20h0m0 20h0m0-10h0m0 0h0m0 0h0m0 20h0m10-20h0m0 10h0m0-10h0m0 10h0m0 0h0m0-10h0m10 0h0m0 10h0m0-10h0m0 0h0m10 10h0m0-20h0m0 10h0m0 10h0m0 10h0m0-20h0m0 10h0m10-10h0m0 10h0m0-10h0m0 20h0m0-20h0m0-10h0m0 0h0m10 30h0m0-10h0m0-10h0m0-10h0m0 20h0m10-10h0m0 20h0m0-20h0m0 10h0m0-10h0m10 10h0m0 0h0m0-10h0m0 10h0m0 10h0m0-20h0m10 0h0m0 10h0m0-10h0m0 10h0m0-10h0m10 10h0m0 0h0m0-20h0m0 30h0m0-20h0m10 10h0m0 0h0m0-10h0m0-10h0m0 10h0m0 0h0m0 20h0m10-30h0m0 20h0m0-10h0m0 0h0m0 10h0m0-10h0m10 0h0m0 0h0m0 10h0m0-10h0m0 0h0m10 10h0m0 10h0m0-10h0m0-10h0m0 20h0m0-10h0m10 0h0m0-20h0m0 20h0m0-10h0m0-10h0m0 10h0m0 0h0m0 20h0m0-20h0m10 0h0m0 20h0m0-10h0m0 0h0m0 0h0m0 0h0m0-20h0m10 20h0m0 0h0m0-20h0m0 10h0m10 10h0m0-10h0m0-10h0m0 30h0m0-20h0m0 10h0m10-20h0m0 20h0m0 0h0m0 0h0m10-10h0m0-10h0m0 10h0m0 10h0m0 10h0m10-20h0m0 10h0m0-10h0m0 0h0m0 0h0m0 10h0m0-10h0m10 10h0m0 0h0m0-10h0m0 10h0m10-10h0m0 10h0m0 10h0m0-10h0m0 0h0m0 10h0m10-20h0m0 10h0m0-20h0m0 20h0m0-20h0m0 20h0m10-20h0m0 20h0m0-10h0m0 0h0m0 20h0m0-20h0m10 20h0m0-10h0m0-10h0m0 20h0m0-10h0m10 0h0m0-20h0m0 10h0m0 20h0m0-20h0m0-10h0m0 20h0m10-10h0m0 20h0m0-10h0m0-20h0m0 30h0m10-10h0m0 0h0m0 0h0m0-10h0m0 0h0m10 0h0m0 10h0m0 0h0m0-20h0m0 20h0m0-10h0m10-10h0m0 20h0m0 10h0m0-20h0m0 0h0m0 20h0m10-10h0m0-10h0m0 10h0m0-20h0m0 20h0m0-20h0m0 20h0m10-10h0m0 10h0m0 10h0m0-20h0m0 10h0m0-10h0m10 10h0m0-20h0m0 30h0m0-10h0m0-10h0m0-10h0m0 30h0m10-10h0m0-10h0m0 10h0m0 10h0m0-20h0m0 10h0m10-10h0m0 10h0m0-10h0m0 20h0m0-20h0m0-10h0m10 10h0m0 10h0m0 0h0m0 10h0m0-10h0m0-10h0m10 10h0m0 0h0m0 0h0m0-20h0m0 20h0m10 0h0m0-10h0m0 10h0m0-20h0m0 30h0m0-20h0m10 10h0m0-10h0m0-10h0m0 30h0m0 0h0m0-20h0m10 10h0m0-10h0m0 20h0m0-10h0m0-10h0m10 0h0m0 10h0m0-10h0m0 0h0m0 20h0m0-10h0m0 0h0m10-10h0m0 10h0m0-10h0m0 10h0m0 10h0m0-30h0m10 20h0m0-10h0m0 0h0m0 20h0m0-30h0m0 0h0m0 20h0m10-20h0m0 10h0m0 10h0m0-10h0m0 10h0m10-10h0m0 10h0m0-10h0m0 10h0m0-20h0m0 10h0m10 20h0m0-10h0m0-10h0m0-10h0m0 20h0m10-10h0m0 10h0m0-10h0m0 10h0m0 0h0m0-20h0m10 10h0m0 10h0m0-10h0m0 10h0m0-10h0m0 10h0m10 0h0m0-10h0m0 0h0m0 10h0m0 0h0m0 0h0m10 0h0m0-20h0m0 20h0m0-20h0m0 10h0m0 10h0m10-10h0m0 10h0m0 0h0m0-10h0m0 10h0m10 0h0m0-10h0m0 10h0m0 0h0m0-10h0m10 0h0m0 10h0m0 0h0m0-20h0m0 20h0m10 0h0m0 0h0m0-20h0m0 30h0m0-20h0m0 10h0m10-10h0m0-10h0m0 10h0m0 20h0m0-10h0m0-10h0m0 0h0m10 10h0m0-10h0m0 0h0m0 10h0m0-10h0m10 0h0m0 20h0m0-20h0m0 20h0m0-10h0m0-10h0m10 0h0m0 20h0m0-20h0m0 0h0m0 10h0m0-10h0m0 20h0m10-20h0m0 10h0m0-10h0m0 20h0m0-10h0m10-10h0m0 10h0m0-20h0m0 10h0m0 20h0m0-30h0m0 20h0m10-10h0m0 10h0m0 0h0m0-10h0m0 0h0m10 0h0m0 20h0m0-10h0m0 0h0m0-10h0m10 20h0m0-10h0m0 10h0m0-20h0m0-10h0m10 10h0m0 0h0m0 10h0m0-10h0m0 20h0m0-10h0m10-10h0m0 10h0m0-20h0m0 10h0m0 10h0m0-10h0m10 10h0m0-10h0m0 0h0m0 0h0m0 10h0m10 0h0m0-10h0m0 10h0m0-10h0m0 20h0m10-10h0m0-10h0m0 10h0m0 10h0m0-20h0m10 10h0m0 10h0m0-20h0m0 0h0m0 10h0m0 0h0m10-10h0m0 10h0m0-20h0m0 10h0m0 0h0m0 10h0m10 10h0m0 0h0m0-10h0m0-20h0m0 0h0m0 30h0m0-20h0m10 10h0m0-10h0m0 0h0m0 10h0m0-10h0m10 20h0m0-20h0m0 10h0m0 0h0m0-20h0m0 20h0m10 0h0m0-10h0m0 20h0m0-10h0m0 10h0m0-10h0m10-10h0m0 10h0m0 10h0m0-20h0m0 20h0m10-10h0m0 10h0m0-10h0m0-10h0m0 20h0m0-20h0m0 10h0m10-10h0m0 20h0m0-10h0m0 10h0m0-10h0m0-20h0m10 20h0m0 10h0m0-20h0m0 10h0m0 0h0m0-10h0m10 20h0m0-20h0m0 10h0m0-20h0m0 10h0m0 10h0m10-10h0m0 10h0m0 0h0m0 0h0m0 0h0m0-10h0m10 10h0m0 0h0m0-20h0m0 10h0m0-10h0m10 30h0m0-10h0m0-20h0m0 10h0m0 10h0m0 10h0m0-20h0m10 0h0m0 10h0m0 10h0m0-20h0m0 10h0m0 0h0m10 0h0m0-20h0m0 10h0m0 0h0m0 10h0m0 0h0m0 0h0m10 0h0m0-10h0m0 10h0m0-10h0m10 10h0m0 0h0m0-10h0m0 20h0m0-10h0m0-10h0m0 10h0m10 0h0m0-10h0m0 10h0m0 0h0m10-10h0m0 10h0m0-20h0m0 20h0m0-10h0m0 0h0m10 0h0m0 10h0m0-10h0m0 10h0m10 10h0m0-10h0m0-10h0m0 10h0m0 10h0m0-20h0m10 10h0m0 0h0m0-10h0m0 0h0m0 10h0m10-10h0m0 10h0m0 0h0m0 0h0m0-10h0m10 10h0m0-10h0m0 0h0m0 10h0m0-10h0m0 20h0m10-20h0m0 10h0m0 0h0m0-10h0m0 10h0m0-10h0m10-10h0m0 20h0m0-10h0m0-10h0m0 20h0m0-20h0m10 20h0m0-20h0m0 20h0m0 0h0m0-10h0m10 0h0m0 20h0m0-10h0m0-10h0m0 10h0m0 0h0m0-20h0m10 20h0m0-10h0m0 10h0m0-10h0m0 0h0m0 20h0m0-10h0m10 0h0m0-10h0m0 20h0m0-30h0m10 10h0m0 10h0m0-10h0m0 0h0m0 20h0m0-30h0m0 10h0m10 10h0m0-10h0m0 10h0m0 10h0m0-10h0m0 0h0m0-10h0m10 0h0m0 10h0m0-10h0m0 0h0m0 0h0m0 20h0m10-20h0m0 0h0m0 10h0m0-10h0m10 20h0m0-10h0m0-10h0m0 10h0m0-10h0m0 20h0m0-30h0m10 10h0m0 0h0m0 20h0m0-10h0m0-20h0m0 30h0m0-10h0m10 0h0m0 0h0m0-10h0m0 0h0m0 10h0m10-20h0m0 20h0m0-10h0m0 10h0m0-10h0m10 20h0m0-10h0m0-10h0m0 0h0m0 10h0m0-10h0m10 0h0m0 0h0m0 20h0m0-30h0m0 20h0m0 10h0m0-20h0m10 10h0m0-10h0m0 0h0m0 10h0m0-10h0m0 10h0m10-10h0m0 10h0m0-10h0m0 0h0m0 20h0m0-10h0m10-10h0m0 10h0m0-10h0m0 10h0m0-20h0m10 20h0m0-20h0m0 20h0m0-10h0m0 10h0m10-20h0m0 10h0m0 0h0m0 10h0m0-10h0m0 0h0m10 10h0m0-10h0m0 20h0m0-10h0m0 0h0m0-20h0m0 10h0m10 10h0m0-10h0m0 10h0m0-10h0m10 20h0m0-20h0m0 10h0m0 10h0m0-10h0m10 10h0m0-20h0m0-10h0m0 20h0m0-10h0m0 10h0m0 10h0m10-30h0m0 10h0m0 10h0m0-10h0m0 10h0m10-10h0m0 0h0m0 20h0m0-10h0m0-10h0m0 0h0m0 10h0m10 0h0m0-10h0m0 10h0m0-10h0m0-10h0m0 30h0m10-20h0m0 10h0m0 0h0m0-10h0m10 10h0m0-20h0m0 20h0m0-10h0m0 10h0m0-10h0m10 0h0m0 10h0m0-10h0m0 10h0m0-10h0m10 10h0m0 10h0m0-20h0m0 10h0m0 0h0m0-10h0m10 0h0m0 0h0m0 10h0m0-10h0m10 10h0m0-10h0m0 20h0m0-10h0m0-10h0m0 10h0m0-10h0m0 10h0m10 0h0m0-20h0m0 20h0m0 10h0m0-10h0m10-20h0m0 20h0m0 0h0m0-10h0m0 20h0m0-20h0m0 10h0m10 0h0m0-20h0m0 10h0m0 0h0m0 10h0m10 0h0m0-10h0m0 10h0m0 10h0m0-20h0m0 0h0m10 10h0m0 0h0m0-10h0m0 0h0m0 0h0m10 10h0m0-10h0m0 0h0m0 10h0m0 0h0m10 0h0m0 0h0m0-20h0m0 10h0m0 20h0m0-20h0m0 10h0m0-20h0m10 20h0m0-10h0m0 0h0m0 0h0m0 10h0m0-10h0m10 10h0m0-10h0m0 0h0m0 20h0m0-10h0m10-10h0m0 10h0m0-20h0m0 10h0m0 10h0m0 0h0m10-10h0m0 10h0m0 0h0m0-10h0m0 10h0m10-10h0m0 10h0m0-10h0m0 0h0m0 10h0m0 0h0m10 10h0m0-20h0m0 0h0m0 0h0m0 20h0m10-20h0m0 20h0m0-30h0m0 20h0m0 0h0m0-10h0m10 10h0m0-10h0m0 10h0m0-10h0m0 10h0m10-10h0m0 0h0m0 10h0m0 0h0m0-10h0m0-10h0m10 20h0m0-10h0m0 20h0m0-30h0m0 10h0m0 10h0m0 0h0m10-20h0m0 10h0m0 10h0m0-10h0m0 20h0m0-10h0m10 0h0m0-10h0m0 10h0m0-10h0m0-10h0m0 10h0m10 10h0m0-10h0m0 10h0m0-10h0m0 10h0m10-10h0m0-10h0m0 30h0m0-20h0m0 20h0m0-10h0m10 0h0m0-10h0m0 10h0m0-10h0m10 10h0m0 0h0m0-20h0m0 0h0m0 10h0m0 0h0m10 10h0m0-10h0m0 0h0m0 0h0m0 10h0m0-10h0m10 10h0m0-20h0m0 20h0m0 0h0m0-10h0m0 10h0m10-10h0m0 0h0m0 20h0m0-20h0m0 0h0m10 20h0m0-20h0m0 10h0m0-10h0m0 10h0m0-20h0m0 20h0m10-10h0m0 0h0m0 10h0m0 0h0m0 0h0m0 10h0m10-20h0m0 10h0m0 0h0m0-10h0m0 10h0m0-10h0m10 10h0m0-10h0m0 10h0m0-10h0m0 0h0m10 10h0m0 0h0m0-10h0m0 0h0m0 10h0m0-10h0m0 0h0m10 20h0m0-10h0m0-10h0m0 0h0m0 20h0m0-10h0m10-10h0m0 0h0m0 10h0m0-10h0m0 20h0m0-20h0m10 10h0m0 0h0m0-10h0m0 0h0m0 10h0m10-10h0m0 20h0m0-30h0m0 20h0m0-20h0m0 30h0m10-10h0m0 0h0m0-10h0m0 10h0m0-10h0m10 10h0m0 0h0m0-20h0m0 10h0m0 20h0m0-30h0m10 20h0m0-10h0m0 0h0m0 10h0m10-10h0m0 0h0m0 20h0m0-10h0m0-10h0m0-10h0m0 20h0m10-10h0m0 10h0m0-10h0m0 20h0m0-30h0m0 20h0m10 0h0m0-10h0m0 0h0m0 20h0m0-20h0m0 10h0m0-10h0m10 10h0m0-10h0m0 10h0m0 0h0m0-10h0m10 10h0m0-10h0m0 0h0m0 10h0m0 10h0m10-10h0m0 0h0m0 10h0m0-30h0m0 10h0m0 10h0m10-10h0m0 0h0m0 10h0m0 0h0m0-10h0m0 20h0m10-30h0m0 20h0m0-10h0m0 0h0m0 20h0m0-20h0m10 10h0m0-20h0m0 20h0m0 10h0m0-20h0m0 10h0m10 0h0m0 0h0m0-10h0m0 10h0m0 0h0m10 0h0m0-10h0m0-10h0m0 10h0m0 10h0m10-20h0m0 10h0m0 10h0m0 0h0m10-10h0m0 0h0m0 10h0m0-20h0m0 10h0m0 20h0m10-20h0m0 10h0m0 0h0m0-10h0m0 0h0m10 0h0m0 10h0m0 0h0m0-10h0m0 10h0m0 10h0m10-10h0m0 0h0m0-10h0m0 10h0m0-20h0m0 20h0m0-10h0m10 20h0m0-20h0m0-10h0m0 30h0m0-20h0m0 0h0m10 20h0m0-10h0m0-10h0m0 10h0m0-10h0m10 0h0m0 10h0m0-10h0m0 10h0m10-10h0m0 10h0m0-10h0m0 10h0m0 0h0m10-20h0m0 30h0m0-10h0m0 0h0m0-20h0m0 20h0m0-10h0m0 10h0m10 0h0m0-20h0m0 20h0m0-20h0m0 20h0m0 0h0m0 0h0m10 0h0m0 0h0m0-10h0m0 10h0m10-10h0m0 10h0m0 0h0m0 10h0m0-10h0m0-20h0m10 10h0m0 10h0m0-20h0m0 20h0m0-10h0m0 10h0m10 0h0m0-10h0m0 10h0m0-10h0m0-10h0m0 10h0m0 20h0m10-20h0m0 0h0m0 10h0m0 0h0m0 0h0m0-10h0m10 10h0m0-10h0m0 0h0m0 20h0m0-20h0m0-10h0m10 20h0m0-20h0m0 10h0m0 10h0m0-10h0m0 0h0m10 0h0m0 20h0m0-20h0m0 10h0m0 0h0m10-20h0m0 30h0m0-20h0m0 10h0m0-10h0m10 10h0m0-10h0m0 20h0m0-20h0m0 0h0m0 20h0m0-20h0m10 10h0m0-10h0m0 0h0m0 10h0m0-10h0m10 20h0m0-10h0m0-10h0m0 20h0m10 0h0m0-20h0m0-10h0m0 10h0m0 10h0m0 10h0m0-20h0m10 10h0m0-10h0m0-10h0m0 10h0m0 10h0m0 0h0m10-10h0m0 0h0m0 10h0m0-10h0m0 10h0m10-10h0m0 10h0m0-10h0m0 10h0m0-20h0m0 20h0m10-10h0m0 10h0m0-10h0m0 10h0m0 0h0m10 10h0m0-20h0m0-10h0m0 10h0m0 20h0m0-10h0m10 0h0m0 0h0m0 0h0m0-10h0m0 10h0m0 0h0m10-10h0m0 10h0m0-10h0m0 10h0m0 0h0m0 0h0m10-10h0m0 0h0m0 0h0m0 10h0m0 0h0m0-20h0m0 10h0m10 0h0m0 10h0m0 0h0m0 0h0m0-20h0m0 10h0m10 10h0m0 0h0m0-10h0m0 10h0m0-10h0m0 0h0m10 20h0m0-20h0m0 20h0m0-10h0m0-20h0m0 20h0m10-10h0m0 10h0m0-10h0m0 0h0m0 0h0m0 0h0m10 20h0m0-10h0m0-10h0m0 20h0m0-20h0m10-10h0m0 30h0m0-10h0m0-10h0m0 0h0m0 0h0m10 20h0m0-10h0m0-10h0m0 0h0m0 10h0m0 10h0m10-10h0m0-10h0m0-10h0m0 30h0m0-20h0m0 0h0m10 20h0m0-20h0m0 0h0m0 0h0m0 0h0m10 20h0m0-20h0m0 10h0m0 10h0m0-20h0m0 10h0m10 0h0m0 10h0m0-10h0m0-10h0m0 10h0m0-10h0m0-10h0m10 20h0m0-20h0m0 10h0m0 10h0m0-10h0m0-10h0m10 30h0m0-20h0m0 10h0m0 0h0m0-10h0m0-10h0m0 20h0m0 0h0m10-10h0m0 10h0m0-10h0m0 10h0m0 0h0m10 0h0m0-10h0m0 10h0m0 0h0m0 0h0m10-20h0m0 10h0m0 0h0m0 10h0m0-20h0m0 0h0m10 30h0m0-10h0m0-20h0m0 20h0m0-10h0m0 0h0m0 20h0m10-20h0m0 20h0m0 0h0m0-20h0m0 10h0m0 0h0m10-20h0m0 10h0m0-10h0m0 20h0m0 0h0m0-10h0m0 10h0m10 0h0m0-10h0m0 0h0m0 10h0m0-10h0m10 20h0m0-20h0m0 10h0m0-10h0m0 0h0m0 0h0m0 10h0m0-10h0m10 10h0m0-20h0m0 10h0m0 10h0m0-10h0m0 0h0m10 20h0m0-10h0m0 10h0m0-20h0m0 10h0m0 0h0m10-10h0m0 10h0m0 0h0m0 10h0m0-10h0m0 0h0m10-10h0m0 0h0m0 10h0m0 0h0m0-20h0m10 10h0m0 10h0m0 0h0m0 0h0m0-10h0m10 10h0m0 0h0m0 0h0m0-10h0m0 10h0m10 0h0m0-20h0m0 10h0m0 20h0m0-10h0m0-10h0m0 20h0m10-10h0m0-10h0m0 10h0m0 0h0m0-20h0m10 20h0m0-10h0m0 0h0m0 0h0m0 10h0m0-20h0m10 20h0m0 0h0m0 10h0m0-10h0m0 10h0m10-20h0m0 10h0m0-10h0m0 10h0m0 10h0m10-20h0m0 0h0m0 10h0m0-10h0m0 10h0m10-10h0m0 10h0m0-10h0m0 0h0m0 20h0m0-20h0m10 20h0m0-10h0m0-10h0m0 10h0m0-10h0m10 0h0m0 10h0m0 0h0m0-10h0m0 10h0m0-20h0m10 10h0m0 20h0m0-20h0m0 10h0m0 0h0m10 0h0m0 0h0m0-20h0m0 20h0m0-10h0m0 0h0m10 10h0m0 10h0m0-20h0m0 10h0m0-10h0m10 0h0m0 10h0m0-20h0m0 10h0m0 20h0m0-20h0m0 20h0m10-10h0m0-10h0m0 10h0m0 10h0m0-20h0m0 10h0m10-10h0m0-10h0m0 20h0m0 10h0m0-20h0m0 0h0m10 20h0m0-10h0m0-10h0m0 0h0m0 10h0m0-10h0m10 10h0m0-10h0m0 20h0m0-10h0m0-20h0m0 10h0m10 0h0m0 10h0m0 10h0m0-10h0m0-10h0m0 10h0m10 0h0m0-20h0m0 20h0m0 0h0m0-10h0m0 10h0m10-20h0m0 20h0m0-10h0m0 20h0m0-20h0m0 10h0m0-10h0m10 10h0m0-10h0m0 20h0m0-10h0m0 0h0m10-10h0m0 0h0m0 0h0m0 10h0m10 10h0m0-30h0m0 10h0m0 0h0m0 0h0m0 20h0m0-10h0m10 0h0m0-10h0m0 0h0m0 10h0m0 0h0m0-10h0m10 10h0m0 0h0m0-10h0m0 10h0m0-10h0m0 10h0m10-20h0m0 20h0m0-10h0m0 10h0m0-10h0m0 0h0m0 20h0m10-20h0m0 10h0m0 0h0m0-10h0m0 0h0m0 0h0m10 10h0m0-10h0m0 10h0m0-20h0m0 30h0m0-20h0m0 0h0m10 10h0m0-10h0m0 10h0m0-10h0m0-10h0m0 20h0m0 10h0m10 0h0m0-20h0m0 10h0m0 0h0m0-10h0m0 10h0m0-10h0m10 10h0m0 10h0m0-10h0m0-10h0m0-10h0m0 20h0m10-10h0m0 10h0m0-10h0m0 10h0m0 0h0m10-20h0m0 10h0m0 0h0m0 10h0m0-20h0m0 10h0m10 10h0m0-10h0m0 20h0m0-20h0m0 0h0m0 10h0m10-10h0m0 10h0m0 0h0m0-20h0m0 10h0m10 20h0m0-30h0m0 10h0m0 0h0m0 0h0m10 10h0m0-10h0m0 10h0m0-10h0m0 10h0m0-10h0m0 20h0m10-20h0m0-10h0m0 10h0m0 0h0m0 20h0m0-20h0m0 10h0m0-10h0m10 0h0m0 20h0m0-20h0m0 10h0m0 0h0m0-10h0m10-10h0m0 10h0m0 0h0m0 0h0m0 20h0m0-30h0m10 20h0m0 10h0m0-10h0m0-10h0m0 0h0m0 20h0m0-10h0m0-10h0m10 0h0m0 10h0m0-10h0m0 20h0m0-20h0m0 10h0m10 0h0m0 10h0m0-20h0m0 0h0m0 0h0m10 20h0m0-10h0m0-10h0m0 10h0m0-10h0m0 10h0m10-10h0m0 10h0m0-10h0m0 10h0m0-20h0m0 10h0m10 10h0m0-10h0m0 10h0m0-20h0m0 10h0m10 0h0m0 10h0m0-10h0m0 10h0m0 0h0m0 0h0m10-20h0m0 30h0m0-30h0m0 10h0m0 0h0m0 10h0m10 0h0m0-10h0m0 0h0m0 0h0m0 10h0m10 0h0m0-10h0m0 0h0m0 10h0m0-10h0m0 20h0m10-10h0m0-10h0m0 0h0m0 0h0m0 0h0m0 10h0m10-20h0m0 10h0m0 20h0m0-10h0m0 0h0m0-20h0m10 10h0m0-10h0m0 30h0m0-10h0m0-10h0m0 10h0m0 0h0m10-10h0m0 10h0m0-20h0m0 20h0m0-10h0m0 0h0m10 10h0m0-10h0m0 0h0m0 20h0m0-20h0m10 0h0m0 0h0m0 10h0m0-10h0m0 10h0m10-10h0m0 10h0m0-10h0m0 0h0m0-10h0m10 20h0m0-10h0m0 0h0m0 20h0m0 0h0m0-20h0m0 20h0m0-20h0m10 0h0m0 0h0m0 20h0m0-20h0m0 10h0m0 0h0m10 0h0m0-10h0m0 0h0m0 0h0m0 10h0m10-10h0m0 10h0m0-10h0m0 10h0m0 0h0m0-10h0m10 10h0m0-10h0m0 20h0m0 0h0m0-10h0m0-10h0m0 10h0m10 0h0m0 0h0m0-20h0m0 20h0m0-10h0m0-10h0m10 30h0m0-10h0m0 0h0m0-10h0m0 0h0m0 10h0m10 0h0m0-10h0m0 10h0m0-10h0m10 10h0m0 10h0m0 0h0m0-20h0m0 10h0m0-20h0m0 20h0m10-10h0m0 0h0m0 10h0m0-10h0m10 10h0m0-20h0m0 20h0m0-10h0m0 20h0m0-20h0m10-10h0m0 10h0m0 10h0m0 0h0m0-10h0m0-10h0m10 20h0m0 10h0m0-30h0m0 20h0m0-10h0m0 0h0m0 20h0m0-20h0m10 10h0m0-10h0m0 10h0m0-10h0m0 10h0m0-20h0m10 20h0m0-10h0m0 20h0m0-10h0m0-20h0m0 20h0m10-10h0m0 0h0m0 20h0m0-10h0m0-10h0m10 10h0m0 0h0m0-10h0m0 0h0m0 0h0m0 10h0m10 0h0m0 0h0m0-10h0m0 10h0m0-10h0m10 10h0m0 0h0m0-10h0m0 10h0m0-10h0m0 10h0m10 0h0m0-10h0m0-10h0m0 10h0m0 10h0m0-10h0m0 0h0m10 0h0m0 10h0m0-10h0m0 10h0m10-10h0m0 10h0m0-10h0m0 20h0m0-20h0m10 0h0m0-10h0m0 30h0m0-10h0m0-10h0m10 0h0m0 10h0m0 0h0m0 0h0m0-10h0m10 10h0m0-10h0m0-10h0m0 20h0m0-10h0m10 10h0m0 10h0m0 0h0m0-10h0m0-10h0m0 0h0m0 10h0m10 0h0m0-10h0m0-10h0m0 10h0m0 10h0m10 0h0m0-10h0m0 10h0m0-10h0m0 20h0m0-10h0m10 0h0m0 10h0m0-10h0m0 0h0m0-10h0m0 0h0m10 10h0m0 10h0m0-20h0m0 20h0m0-20h0m0 10h0m0-10h0m10 0h0m0 10h0m0 0h0m0-10h0m0 0h0m0 10h0m10 0h0m0-10h0m0-140h0m0 150h0m0-10h0m0 0h0m0 0h0m10 10h0m0-10h0m0 10h0m0-10h0m0 10h0m0 10h0m0-30h0m0 20h0m10 10h0m0-30h0m0 20h0m0 0h0m0 0h0m0-20h0m10 10h0m0 10h0m0-10h0m0 20h0m0-20h0m0 0h0m10 0h0m0 20h0m0-30h0m0 20h0m0 0h0m0-10h0m10 0h0m0 10h0m0-10h0m0 0h0m0 10h0m0-10h0m10 0h0m0 10h0m0-10h0m0 0h0m0 20h0m0-10h0m10-10h0m0 20h0m0-10h0m0 0h0m0-20h0m0 10h0m10 10h0m0 10h0m0-10h0m0 0h0m0-10h0m0 10h0m0-10h0m10 0h0m0 10h0m0-10h0m0-10h0m0 20h0m0-10h0m10 0h0m0 20h0m0-20h0m0-10h0m0 10h0m0 20h0m10-10h0m0 0h0m0 0h0m0-20h0m0 10h0m10 10h0m0 10h0m0-10h0m0-10h0m0 0h0m0 10h0m10-10h0m0 10h0m0 10h0m0-20h0m0 0h0m10 10h0m0-10h0m0 10h0m0 10h0m0-20h0m0 10h0m10 10h0m0-10h0m0 0h0m0-20h0m0 10h0m0 0h0m0 10h0m10 0h0m0-10h0m0 10h0m0-20h0m0 20h0m0-10h0m10 0h0m0 10h0m0 10h0m0-10h0m0-10h0m0 0h0m10 10h0m0-20h0m0 10h0m0 10h0m0-20h0m0 20h0m0-20h0m10 10h0m0 0h0m0 20h0m0-20h0m0 20h0m0-20h0m10 10h0m0-10h0m0 20h0m0-10h0m0-10h0m0-10h0m10 20h0m0 0h0m0 0h0m0-10h0m0-10h0m0 10h0m10 20h0m0-10h0m0-10h0m0 10h0m0-10h0m0 0h0m0 20h0m10-20h0m0-10h0m0 20h0m0-10h0m0 20h0m0-20h0m0-10h0m10 10h0m0 10h0m0 0h0m0-20h0m0 10h0m10 10h0m0 10h0m0-10h0m0 0h0m0-10h0m0-10h0m0 20h0m10-10h0m0 10h0m0-10h0m0 10h0m0 10h0m0-20h0m10 20h0m0-10h0m0-20h0m0 10h0m0 10h0m10 0h0m0-10h0m0 0h0m0 0h0m0 10h0m0-10h0m10 20h0m0-20h0m0 20h0m0-30h0m0 10h0m0 0h0m10-10h0m0 10h0m0 10h0m0 0h0m0 0h0m0-20h0m0 10h0m10 10h0m0-10h0m0 0h0m0 10h0m0 0h0m10 0h0m0 0h0m0-10h0m0 10h0m0-10h0m0 10h0m10-10h0m0 10h0m0 0h0m0-10h0m0 20h0m0-10h0m10 0h0m0-10h0m0 0h0m0 0h0m0 10h0m0-20h0m10 10h0m0 10h0m0-20h0m0 20h0m0-10h0m0 10h0m10 10h0m0-10h0m0-20h0m0 10h0m0 0h0m0 0h0m10 20h0m0 0h0m0-20h0m0 10h0m0 0h0m10 0h0m0-20h0m0 20h0m0 0h0m0-20h0m0 20h0m0 0h0m10-10h0m0 10h0m0-20h0m0 10h0m0 20h0m0-20h0m10 10h0m0-10h0m0 10h0m0-10h0m10 10h0m0-10h0m0 10h0m0-10h0m0-10h0m0 30h0m0-10h0m0 0h0m10-10h0m0 0h0m0 20h0m0-20h0m0 20h0m0-20h0m0 20h0m10-10h0m0-10h0m0 10h0m0-10h0m0 0h0m0 20h0m0-10h0m10 10h0m0-20h0m0 0h0m0 20h0m0-20h0m0 20h0m10-20h0m0 20h0m0-20h0m0 0h0m0 10h0m0-20h0m0 20h0m10-10h0m0 10h0m0-10h0m0-10h0m0 10h0m0 20h0m10-20h0m0 20h0m0-20h0m0 0h0m0 0h0m10 0h0m0 10h0m0-20h0m0 20h0m0-10h0m0 0h0m0 10h0m10-10h0m0 10h0m0 10h0m0-10h0m10-10h0m0 10h0m0-10h0m0 10h0m0-10h0m0 10h0m10 10h0m0-10h0m0 0h0m0-20h0m0 20h0m10-20h0m0 20h0m0-10h0m0 20h0m0-20h0m0 10h0m10-10h0m0 20h0m0-10h0m0-10h0m0 0h0m0 0h0m0 20h0m10-20h0m0 10h0m0-10h0m0 10h0m10 0h0m0-10h0m0 0h0m0 20h0m0-10h0m0 10h0m0-30h0m10 20h0m0-10h0m0 10h0m0 10h0m0-10h0m0-20h0m0 10h0m0 10h0m10-20h0m0 10h0m0 0h0m0 0h0m0 0h0m10 10h0m0-10h0m0 10h0m0-10h0m0 10h0m0 0h0m10-10h0m0 0h0m0 0h0m0 10h0m0-10h0m0 20h0m10-10h0m0-20h0m0 20h0m0-10h0m0 10h0m0 10h0m10-10h0m0-10h0m0 0h0m0 0h0m0-10h0m10 20h0m0-10h0m0 10h0m0 10h0m0-20h0m0 10h0m10 10h0m0 0h0m0-20h0m0 10h0m0 0h0m0-10h0m10 0h0m0 10h0m0 0h0m0-10h0m0 10h0m0-10h0m10 10h0m0 0h0m0-10h0m0 10h0m0-10h0m0 10h0m10 0h0m0-20h0m0 20h0m0-10h0m0 20h0m10-10h0m0-20h0m0 20h0m0 0h0m0-10h0m10 10h0m0-20h0m0 10h0m0 0h0m0 10h0m0 0h0m0 0h0m0-10h0m10 0h0m0 10h0m0-10h0m0-10h0m0 10h0m0 10h0m0-20h0m10 10h0m0 10h0m0-10h0m0 0h0m0-10h0m10 10h0m0-10h0m0 10h0m0 0h0m0 20h0m0-20h0m10 10h0m0 0h0m0-10h0m0 10h0m0 0h0m0-10h0m0 0h0m10 0h0m0 10h0m0 0h0m0 0h0m0 0h0m0-10h0m10-10h0m0 20h0m0 0h0m0-10h0m0 10h0m10-10h0m0 0h0m0 20h0m0-10h0m0-10h0m0 20h0m0-10h0m0-20h0m10 20h0m0-10h0m0 10h0m0-20h0m0 20h0m0-10h0m10 0h0m0 20h0m0-10h0m0 10h0m0-20h0m0 10h0m0 0h0m10 0h0m0 0h0m0 0h0m0-20h0m0 20h0m0 0h0m0-10h0m10-20h0m0 10h0m0 10h0m0 20h0m0-20h0m0 10h0m10 10h0m0-20h0m0 20h0m0-20h0m0 10h0m0 0h0m10-20h0m0 10h0m0 0h0m0 10h0m0 10h0m0-10h0m10-10h0m0 10h0m0 0h0m0 0h0m0 0h0m0-10h0m10 0h0m0 10h0m0-10h0m0 10h0m0 0h0m10-10h0m0 0h0m0 20h0m0-30h0m0 20h0m0-10h0m10 10h0m0 0h0m0-10h0m0 10h0m0-10h0m0 10h0m10-10h0m0 10h0m0-10h0m0 10h0m0-10h0m10 20h0m0-20h0m0 20h0m0-10h0m0-20h0m10 10h0m0 10h0m0-10h0m0 10h0m0-10h0m10 10h0m0-20h0m0 20h0m0-10h0m0 20h0m0-20h0m10 0h0m0 20h0m0-20h0m0 0h0m0 10h0m10 0h0m0-10h0m0 0h0m0 20h0m0-20h0m0 0h0m10-10h0m0 10h0m0 10h0m0 10h0m0-10h0m10-10h0m0 0h0m0 0h0m0 10h0m0 0h0m10-10h0m0 10h0m0-10h0m0 0h0m0 10h0m10-10h0m0 10h0m0 0h0m0 0h0m0 0h0m0-10h0m10 10h0m0-10h0m0 10h0m0-20h0m0 20h0m0 0h0m10-10h0m0 0h0m0 10h0m0-10h0m0-10h0m0 10h0m10 20h0m0-10h0m0-20h0m0 20h0m0-10h0m0 0h0m10 10h0m0 0h0m0-10h0m0 0h0m0 10h0m0-10h0m10 0h0m0 10h0m0-10h0m0 20h0m0-10h0m10-20h0m0 20h0m0-10h0m0 10h0m0-10h0m0 20h0m0-20h0m10 0h0m0 20h0m0-10h0m0 0h0m0 0h0m10-10h0m0 20h0m0-20h0m0 20h0m0-10h0m10-10h0m0 10h0m0-20h0m0 10h0m0 10h0m0-10h0m0 10h0m10-10h0m0 10h0m0-10h0m0 0h0m10 10h0m0-10h0m0 10h0m0-10h0m0-10h0m10 0h0m0 20h0m0-20h0m0 10h0m0 0h0m10 10h0m0 10h0m0-20h0m0 10h0m0-10h0m0 10h0m10-10h0m0 0h0m0 10h0m0-10h0m0 0h0m0 10h0m10 0h0m0 0h0m0 0h0m0-10h0m0 10h0m0-10h0m10 10h0m0-10h0m0 20h0m0-20h0m0 10h0m0-10h0m0 10h0m0 0h0m10-10h0m0 0h0m0 0h0m0 0h0m10 10h0m0-10h0m0 20h0m0-20h0m0 10h0m0-10h0m0 10h0m10 0h0m0 0h0m0-10h0m0 10h0m0-20h0m0 20h0m0-10h0m10 0h0m0 20h0m0 0h0m0-20h0m0 10h0m0-10h0m0 0h0m10 10h0m0-10h0m0 10h0m0-10h0m0 10h0m0-10h0m10 20h0m0-10h0m0-10h0m0-10h0m0 10h0m0 10h0m10-10h0m0 10h0m0-10h0m0 10h0m0-10h0m0 10h0m10-10h0m0 0h0m0 10h0m0-10h0m0 10h0m0-10h0m0 0h0m10 10h0m0-10h0m0 0h0m0 10h0m0 0h0m0-10h0m10 0h0m0 10h0m0-20h0m0 20h0m0 0h0m0-20h0m0 10h0m10 10h0m0-10h0m0-10h0m0 20h0m0-10h0m10 10h0m0 0h0m0-20h0m0 10h0m0 10h0m0 0h0m0 10h0m10-20h0m0 10h0m0 10h0m0-20h0m0 10h0m0-10h0m10 10h0m0-20h0m0 10h0m0 10h0m0 0h0m0 0h0m0-10h0m10 0h0m0 10h0m0-10h0m0 0h0m0 20h0m0-20h0m0 10h0m10-10h0m0 0h0m0 10h0m0-10h0m0 10h0m0-10h0m10 0h0m0 0h0m0-10h0m0 30h0m0-10h0m0 0h0m10-10h0m0 10h0m0-10h0m0 20h0m0-10h0m10-10h0m0 0h0m0 20h0m0-10h0m0 0h0m0-10h0m0 10h0m0 0h0m10-10h0m0 0h0m0 10h0m0 10h0m0-10h0m0-10h0m10 0h0m0 0h0m0 20h0m0-10h0m0-20h0m0 10h0m10-10h0m0 20h0m0-10h0m0 0h0m0 10h0m0-10h0m10 0h0m0 10h0m0 10h0m0-10h0m0-10h0m10-10h0m0 30h0m0-10h0m0-10h0m0 0h0m0 0h0m0 0h0m10 0h0m0 20h0m0-10h0m0-10h0m0 10h0m10 0h0m0-10h0m0 0h0m0 20h0m0-10h0m0-10h0m10 10h0m0 0h0m0-20h0m0 30h0m0-20h0m0 10h0m0 10h0m10-20h0m0 10h0m0-10h0m10 10h0m0-10h0m0 10h0m0 0h0m0-10h0m0 10h0m0-10h0m10 0h0m0 0h0m0 10h0m0 0h0m0-10h0m10 0h0m0 10h0m0 0h0m0-10h0m0 20h0m0-10h0m0-10h0m10 0h0m0 10h0m0-10h0m0 10h0m0-10h0m10 10h0m0-10h0m0 0h0m0 10h0m0-20h0m0 10h0m10 10h0m0-10h0m0 0h0m0 10h0m0-10h0m10 10h0m0 0h0m0-10h0m0 0h0m0 10h0m0-10h0m0 10h0m10-10h0m0 20h0m0-20h0m0 10h0m0 0h0m0-10h0m10 0h0m0 10h0m0 0h0m0-20h0m0 20h0m0 0h0m0-10h0m10 20h0m0-20h0m0 10h0m0 0h0m0-10h0m0 20h0m10-20h0m0 10h0m0 10h0m0-20h0m0 20h0m0-20h0m10 0h0m0 10h0m0 0h0m0-10h0m0 0h0m10 10h0m0-10h0m0 10h0m0-10h0m0 0h0m0 10h0m10 0h0m0-20h0m0 20h0m0-20h0m0 20h0m0-10h0m10 20h0m0-10h0m0-10h0m0 0h0m0 20h0m10-20h0m0 10h0m0-10h0m0 0h0m0 10h0m0 0h0m10-20h0m0 20h0m0-10h0m0 0h0m0 10h0m0-10h0m10 10h0m0-20h0m0 10h0m0 10h0m0-10h0m0 0h0m10 0h0m0 10h0m0-10h0m0 20h0m0-20h0m10 0h0m0 20h0m0-10h0m0-10h0m0 0h0m0 20h0m10-20h0m0 10h0m0-20h0m0 10h0m0 0h0m10 0h0m0 0h0m0 20h0m0-30h0m0 20h0m0 0h0m10-10h0m0 10h0m0 0h0m0-10h0m0 0h0m0 0h0m10-10h0m0 20h0m0-10h0m0-10h0m0 20h0m0-10h0m0 10h0m0-10h0m10 0h0m0 10h0m0-10h0m0 0h0m0-10h0m0 20h0m10 10h0m0-10h0m0-10h0m0 10h0m0 0h0m10 0h0m0-10h0m0 10h0m0-10h0m0 10h0m10-20h0m0 10h0m0 0h0m0 10h0m0-10h0m0 10h0m10 0h0m0-20h0m0 0h0m0 10h0m0 10h0m0 0h0m0-10h0m10 10h0m0-10h0m0 0h0m0 10h0m0-10h0m10 20h0m0-10h0m0-20h0m0 10h0m0 10h0m10 0h0m0-10h0m0 0h0m0 10h0m0-10h0m0 10h0m10-10h0m0 10h0m0-10h0m0 10h0m0-10h0m0 0h0m10 0h0m0 10h0m0-10h0m0 0h0m0 20h0m0-10h0m10-10h0m0 20h0m0-20h0m0 10h0m0-20h0m10 20h0m0-20h0m0 30h0m0-10h0m0-10h0m0 20h0m10-20h0m0 10h0m0-10h0m0 0h0m0 20h0m10-10h0m0 0h0m0-10h0m0 10h0m0-10h0m10 10h0m0 0h0m0-20h0m0 10h0m0 10h0m10 0h0m0-10h0m0 0h0m0 20h0m0-10h0m0-20h0m0 10h0m10 10h0m0-10h0m0 10h0m0-10h0m0 10h0m0-10h0m10 10h0m0 10h0m0-20h0m0 10h0m0 10h0m0-20h0m10 10h0m0-10h0m0 10h0m0 0h0m0-10h0m0 10h0m10 10h0m0-20h0m0 0h0m0 10h0m0-10h0m0 10h0m10-10h0m0 10h0m0-20h0m0 10h0m0 0h0m10 10h0m0-10h0m0 10h0m0 0h0m0-10h0m0 0h0m10 10h0m0-20h0m0 10h0m0 20h0m0-10h0m0-10h0m0 10h0m10-10h0m0 10h0m0-10h0m0 10h0m0-10h0m10 10h0m0-10h0m0 0h0m0 20h0m0-20h0m0 0h0m0 10h0m10-10h0m0 0h0m0 20h0m0-10h0m10-10h0m0 10h0m0 10h0m0-20h0m0 10h0m0 0h0m10 0h0m0-10h0m0 10h0m0 10h0m0-20h0m10 0h0m0 10h0m0-10h0m0 0h0m0 10h0m10-10h0m0 10h0m0 0h0m0 0h0m0-10h0m0 10h0m10 0h0m0-10h0m0 0h0m0 10h0m0 10h0m0-20h0m10 20h0m0-20h0m0 10h0m0 0h0m0-10h0m0 20h0m10-20h0m0 10h0m0 0h0m0-10h0m10 10h0m0 0h0m0 0h0m0-10h0m0 20h0m0-20h0m10 10h0m0-10h0m0 10h0m0-10h0m0 20h0m10-20h0m0 20h0m0-10h0m0-10h0m0 0h0m0 10h0m10-10h0m0 10h0m0-10h0m0 0h0m0 10h0m0 0h0m10 0h0m0-20h0m0 10h0m0 0h0m0 10h0m0 0h0m10-10h0m0 10h0m0-20h0m0 10h0m0 0h0m0 10h0m10 0h0m0 0h0m0 0h0m0 0h0m0-10h0m0 10h0m10 10h0m0-20h0m0-10h0m0 20h0m0-10h0m0 10h0m10-10h0m0 10h0m0-10h0m0 20h0m0-20h0m0 10h0m0 0h0m10-10h0m0-10h0m0 10h0m0 0h0m0 10h0m10 0h0m0-10h0m0 20h0m0-20h0m0 10h0m10 0h0m0-20h0m0 30h0m0-20h0m0 10h0m0 0h0m10-10h0m0 0h0m0 10h0m0 10h0m0 0h0m0-10h0m0-20h0m0 10h0m10 10h0m0 0h0m0-10h0m0 0h0m0 10h0m10-10h0m0 10h0m0 10h0m0-10h0m0-10h0m10 0h0m0 20h0m0-20h0m0 10h0m0 0h0m0-10h0m10 0h0m0 20h0m0-20h0m0 20h0m0-20h0m10 10h0m0-10h0m0 10h0m0-10h0m0 10h0m0-10h0m10-10h0m0 20h0m0 0h0m0-10h0m0-10h0m0 10h0m10 10h0m0 0h0m0 0h0m0 0h0m0-20h0m0 20h0m0 0h0m10-10h0m0 0h0m0 0h0m0 10h0m0-10h0m10 10h0m0 0h0m0-10h0m0 0h0m0 10h0m0-10h0m10 10h0m0-10h0m0 0h0m0 0h0m10 0h0m0 0h0m0 10h0m0 0h0m0-10h0m10 10h0m0 0h0m0-20h0m0 10h0m0 10h0m0-10h0m10 10h0m0-20h0m0 20h0m0-10h0m0 0h0m0 10h0m10-10h0m0 0h0m0 10h0m0-30h0m0 20h0m0 10h0m10 0h0m0-10h0m0-10h0m0 10h0m0 10h0m0-10h0m10 10h0m0-10h0m0 0h0m0 10h0m0 0h0m10-10h0m0 0h0m0 10h0m0-10h0m0 10h0m0 10h0m10-10h0m0 0h0m0-10h0m0 10h0m0 0h0m10-10h0m0 10h0m0-10h0m0 10h0m0-10h0m0 10h0m10-10h0m0 20h0m0-10h0m0-10h0m0 10h0m0-10h0m0-10h0m10 20h0m0-10h0m0 10h0m0 10h0m0-20h0m0 20h0m0-10h0m10 0h0m0 10h0m0-20h0m0 0h0m0 10h0m0 0h0m10 0h0m0-10h0m0 0h0m0 10h0m0 10h0m0-30h0m10 20h0m0 0h0m0-10h0m0 20h0m0-20h0m0 10h0m10-10h0m0 10h0m0-20h0m0 10h0m0 10h0m10-10h0m0 0h0m0 10h0m0-10h0m0-10h0m0 20h0m10-10h0m0-10h0m0 30h0m0-20h0m10 20h0m0-20h0m0 0h0m0 20h0m0-10h0m0-10h0m0 0h0m0 20h0m10-20h0m0 20h0m0 0h0m0-20h0m0 10h0m10-10h0m0 10h0m0-10h0m0 10h0m0-10h0m10 10h0m0-10h0m0 0h0m0 10h0m0 0h0m10 0h0m0-20h0m0 20h0m0-10h0m0 10h0m10 0h0m0 0h0m0 0h0m0 0h0m0 0h0m0-20h0m10 20h0m0 0h0m0 10h0m0 0h0m0-30h0m0 20h0m0-10h0m10 0h0m0 20h0m0-10h0m0-20h0m0 10h0m0 0h0m0 10h0m10 10h0m0-30h0m0 10h0m0 0h0m0 10h0m10-10h0m0 0h0m0 20h0m0-20h0m0 20h0m0-20h0m0 0h0m10 20h0m0-10h0m0 0h0m0-10h0m0 20h0m0-20h0m10 0h0m0 0h0m0 10h0m0 0h0m0-10h0m0 20h0m10-20h0m0 0h0m0 0h0m0 20h0m0-10h0m0 0h0m10-20h0m0 10h0m0-10h0m0 20h0m0-10h0m10 10h0m0 0h0m0-10h0m0 20h0m0-20h0m10 20h0m0-20h0m0 10h0m0 0h0m0 0h0m0-10h0m10 10h0m0 0h0m0-10h0m0 0h0m0 10h0m10-10h0m0 10h0m0 0h0m0 0h0m0 0h0m0-20h0m10 10h0m0 10h0m0 0h0m0-10h0m0 10h0m0-10h0m10 10h0m0 10h0m0-20h0m0 10h0m0-20h0m10 20h0m0-10h0m0 10h0m0-10h0m0 20h0m0-10h0m0-10h0m10 10h0m0-10h0m0 10h0m0-10h0m0 0h0m10 0h0m0 10h0m0-10h0m0 0h0m0 10h0m10 10h0m0-10h0m0-10h0m0 10h0m0-10h0m10 10h0m0 0h0m0-10h0m0-10h0m0 20h0m0 0h0m10-10h0m0 0h0m0 10h0m0 0h0m0-10h0m0 10h0m0 10h0m10-20h0m0 10h0m0-10h0m0 0h0m0 0h0m0 0h0m10 0h0m0 20h0m0-20h0m0 10h0m10-10h0m0 0h0m0 10h0m0 0h0m0-10h0m10 0h0m0 0h0m0 20h0m0-20h0m0 10h0m0 0h0m10-10h0m0 10h0m0-20h0m0 20h0m0 10h0m10 0h0m0-20h0m0 10h0m0-10h0m0 0h0m0 20h0m0-10h0m10-10h0m0 10h0m0-10h0m0 0h0m0 10h0m0-20h0m10 10h0m0 20h0m0-10h0m0-10h0m0 10h0m10-10h0m0 0h0m0 10h0m0-10h0m0 0h0m0 10h0m0-10h0m10 10h0m0-10h0m0 10h0m0-10h0m0 20h0m10-20h0m0 10h0m0 10h0m0 0h0m0-10h0m0-20h0m10 20h0m0-10h0m0 10h0m0-10h0m0 0h0m10 10h0m0-10h0m0 10h0m0 0h0m0-20h0m0 10h0m10 10h0m0-10h0m0 0h0m0 10h0m0 0h0m10-10h0m0 0h0m0 20h0m0-20h0m0 10h0m0 0h0m10-10h0m0 10h0m0 10h0m0-10h0m0-10h0m0 10h0m0 0h0m10-10h0m0 0h0m0 10h0m0-10h0m0 0h0m10 20h0m0-30h0m0 20h0m0-10h0m0 10h0m0-10h0m10 10h0m0-10h0m0 10h0m0-10h0m0 0h0m0 10h0m10 10h0m0-10h0m0 0h0m0-20h0m0 10h0m0 10h0m0 0h0m10-10h0m0 0h0m0 20h0m0-30h0m0 20h0m0-10h0m10 0h0m0 20h0m0-20h0m0-10h0m0 20h0m0 0h0m10 0h0m0-10h0m0 10h0m0 0h0m10-10h0m0 10h0m0 10h0m0-20h0m0 0h0m0 0h0m10 0h0m0 0h0m0 10h0m0-10h0m10-10h0m0 20h0m0-10h0m0 10h0m0 0h0m0 10h0m0-20h0m10 10h0m0 10h0m0-10h0m0 0h0m0-10h0m10 0h0m0 20h0m0-10h0m0-10h0m0 0h0m0 10h0m10 0h0m0 10h0m0-20h0m0 10h0m0-10h0m0 0h0m0 10h0m10-10h0m0 10h0m0-10h0m0 20h0m0-10h0m0-20h0m0 10h0m10 0h0m0 20h0m0-20h0m0-10h0m0 10h0m10 10h0m0 0h0m0-10h0m0 0h0m0 20h0m0-20h0m10 10h0m0-20h0m0 20h0m0-10h0m0 0h0m0 0h0m10 20h0m0-20h0m0-10h0m0 10h0m0 10h0m0 10h0m0-30h0m10 20h0m0-10h0m0 10h0m0-20h0m0 20h0m10 0h0m0 0h0m0 0h0m0-10h0m0 0h0m0 10h0m10-10h0m0 0h0m0 10h0m0-20h0m0 10h0m0 10h0m10-10h0m0 10h0m0-10h0m0 0h0m0 20h0m0-10h0m10 0h0m0 0h0m0-10h0m0 0h0m0 20h0m10-10h0m0-10h0m0 0h0m0 10h0m0-10h0m0 0h0m0 20h0m10-10h0m0 0h0m0 0h0m0-10h0m0 0h0m0 10h0m10 0h0m0 0h0m0 0h0m0-20h0m0 20h0m10 10h0m0-10h0m0 0h0m0-10h0m0 10h0m10 0h0m0-10h0m0 10h0m0-20h0m0 10h0m0 10h0m10 10h0m0-20h0m0 10h0m0-10h0m0 0h0m10 20h0m0-20h0m0 20h0m0-20h0m0 0h0m0 0h0m0 20h0m0-10h0m10 10h0m0-10h0m0-10h0m0 20h0m0-10h0m0-20h0m10 20h0m0 0h0m0-10h0m0 0h0m0 10h0m0-20h0m10 20h0m0-10h0m0-10h0m0 10h0m0 20h0m0 0h0m0-20h0m0 20h0m10-10h0m0-10h0m0 0h0m0 0h0m0 10h0m10 10h0m0-10h0m0-10h0m0 10h0m0-10h0m10 0h0m0 10h0m0-10h0m0 10h0m0 0h0m0-20h0m10 30h0m0-20h0m0 10h0m0 0h0m0 0h0m0-20h0m0 10h0m0 0h0m10 10h0m0-10h0m0 10h0m0-20h0m0 20h0m0-10h0m10 20h0m0-20h0m0-10h0m0 10h0m0 10h0m0 0h0m10 0h0m0-10h0m0 0h0m0 0h0m10 0h0m0 10h0m0-10h0m0 20h0m0-10h0m10-10h0m0 0h0m0 0h0m0 10h0m0-10h0m10 0h0m0 20h0m0-10h0m0-10h0m0 0h0m0 10h0m0 0h0m10-20h0m0 10h0m0 10h0m0-10h0m0 20h0m0-10h0m0-10h0m10 0h0m0 10h0m0-20h0m0 20h0m0-20h0m0 10h0m10 10h0m0-20h0m0 20h0m0 0h0m0-10h0m0 0h0m10 20h0m0-10h0m0-10h0m0 0h0m0 10h0m10-10h0m0 10h0m0 0h0m0 10h0m0-10h0m0 0h0m0-10h0m10 10h0m0-10h0m0-10h0m0 20h0m10-10h0m0 20h0m0-20h0m0 0h0m0 10h0m0-10h0m0 10h0m10-10h0m0 10h0m0 0h0m0 10h0m10-20h0m0 20h0m0-20h0m0 20h0m0-10h0m0-20h0m0 20h0m0-20h0m0 0h0m10 30h0m0-10h0m0-20h0m0 20h0m0 0h0m10-10h0m0 20h0m0-20h0m0 0h0m10 0h0m0 10h0m0-10h0m0 10h0m0-10h0m0 20h0m0-10h0m10-10h0m0 10h0m0 0h0m0-10h0m0 20h0m10-10h0m0-10h0m0 10h0m0-20h0m0 10h0m0 0h0m10 10h0m0-10h0m0 0h0m0 10h0m0 10h0m0-10h0m0 0h0m10-10h0m0 0h0m0 10h0m0 0h0m0-10h0m10 10h0m0-10h0m0 20h0m0-20h0m0 0h0m0 10h0m10 0h0m0-10h0m0 0h0m0 20h0m0-10h0m0-10h0m0-40h0m10 50h0m0-10h0m0 20h0m0-10h0m0-10h0m0 0h0m0 20h0m10-10h0m0-10h0m0 10h0m0-20h0m0 30h0m0-10h0m10-20h0m0 30h0m0-10h0m0 0h0m0-20h0m0 10h0m0 10h0m0 0h0m10-10h0m0 10h0m0-20h0m0 20h0m0-10h0m0 20h0m10-20h0m0 10h0m0-10h0m0 20h0m0-20h0m0 10h0m10 0h0m0-10h0m0 10h0m0-20h0m0 10h0m0 10h0m0 0h0m10 10h0m0-10h0m0-10h0m0 10h0m0-10h0m0 20h0m10-20h0m0 20h0m0-10h0m0-10h0m0 10h0m0-10h0m10 0h0m0 10h0m0 0h0m0 0h0m10-10h0m0 10h0m0-10h0m0 10h0m0-10h0m0 0h0m10 10h0m0 0h0m0-10h0m0 10h0m0 10h0m10-10h0m0-20h0m0 10h0m0 20h0m0-20h0m0 10h0m10-10h0m0 10h0m0 10h0m0-10h0m0 0h0m10-20h0m0 20h0m0 10h0m0-30h0m0 10h0m0 10h0m0-10h0m10 10h0m0-10h0m0 10h0m0-10h0m0 10h0m0 0h0m0-20h0m10 0h0m0 20h0m0 0h0m0-10h0m0 20h0m0-20h0m10 10h0m0-10h0m0 10h0m0-10h0m10 10h0m0-20h0m0 20h0m0-10h0m0 20h0m0-10h0m10-10h0m0 10h0m0-10h0m0 10h0m0 0h0m0-10h0m10 0h0m0 0h0m0 0h0m0 10h0m0-10h0m0 20h0m10-10h0m0-10h0m0 0h0m0 0h0m0 10h0m10-20h0m0 10h0m0 20h0m0-10h0m0 0h0m0-20h0m0 10h0m10 10h0m0-20h0m0 10h0m0 10h0m0 10h0m0-20h0m10 10h0m0 0h0m0-10h0m0 0h0m0 10h0m10-10h0m0-10h0m0 20h0m0-10h0m0 20h0m0-20h0m10 10h0m0-20h0m0 10h0m0 20h0m0-30h0m0 20h0m10-10h0m0 10h0m0-10h0m0 20h0m0-10h0m0-10h0m10 20h0m0-20h0m0 10h0m0-10h0m0 0h0m0-10h0m0 20h0m10-10h0m0 10h0m0 0h0m0-10h0m0 10h0m10-10h0m0 10h0m0-10h0m0 10h0m0 0h0m0-10h0m10 10h0m0 10h0m0-20h0m0 20h0m0-30h0m0 20h0m0-10h0m10 10h0m0 0h0m0-10h0m0 10h0m0 0h0m10-10h0m0 10h0m0 0h0m0-10h0m0 0h0m0 20h0m0-20h0m10 10h0m0 0h0m0 10h0m0 0h0m0-10h0m0-10h0m10 0h0m0 20h0m0-20h0m0 10h0m0-20h0m0 10h0m0 20h0m10-20h0m0 0h0m0 10h0m0 0h0m0-10h0m0 0h0m10 20h0m0-20h0m0 10h0m0 10h0m0-20h0m0 20h0m10-20h0m0 10h0m0-10h0m0 20h0m0-10h0m10-10h0m0 10h0m0-10h0m0 0h0m0 10h0m10 10h0m0-20h0m0-10h0m0 30h0m0-10h0m0 10h0m0-10h0m10-20h0m0 10h0m0 10h0m0-10h0m0 10h0m0-10h0m10 0h0m0 10h0m0-10h0m0 0h0m0 20h0m10-10h0m0-10h0m0 10h0m0-10h0m0 10h0m0 10h0m10-10h0m0-20h0m0 20h0m0 0h0m0 0h0m0 0h0m10-10h0m0 10h0m0-10h0m0 10h0m0-10h0m0 20h0m10-10h0m0-10h0m0 0h0m0 20h0m0-10h0m0-10h0m0 0h0m0 10h0m10 10h0m0-10h0m0-10h0m0 10h0m0 10h0m10-20h0m0 10h0m0-10h0m0 10h0m0-10h0m0 10h0m0-10h0m10 0h0m0 20h0m0-30h0m0 10h0m0 10h0m0-10h0m10 0h0m0 0h0m0 10h0m0 0h0m0-10h0m0 10h0m10-20h0m0 10h0m0 10h0m0-10h0m0 0h0m0 10h0m10 0h0m0-10h0m0 20h0m0-30h0m0 10h0m0 10h0m10-10h0m0 0h0m0 0h0m0 10h0m0-10h0m0 10h0m0-20h0m10 10h0m0 10h0m0 0h0m0-10h0m0 10h0m10 0h0m0 10h0m0-20h0m0-10h0m0 30h0m0-10h0m10 0h0m0-10h0m0 10h0m0-20h0m0 30h0m0-10h0m10-10h0m0 20h0m0-10h0m0 10h0m0-20h0m0-10h0m10 10h0m0 0h0m0 10h0m0 10h0m0-10h0m0 0h0m0 10h0m0-10h0m10-10h0m0 10h0m0 0h0m0-10h0m0 0h0m0 20h0m10-10h0m0-10h0m0-10h0m0 10h0m10 10h0m0-10h0m0 20h0m0-30h0m0 20h0m0-10h0m0 10h0m10-10h0m0-10h0m0 10h0m0 0h0m0 10h0m0-10h0m0 10h0m10-10h0m0 20h0m0-10h0m0-20h0m0 10h0m10 20h0m0-10h0m0-10h0m0-10h0m0 10h0m0 10h0m0 0h0m10-10h0m0 10h0m0 0h0m0-10h0m0 10h0m10 10h0m0-20h0m0 10h0m0-10h0m0-10h0m0 10h0m0 0h0m10 10h0m0-10h0m0 10h0m0-10h0m0 20h0m10-20h0m0 0h0m0 10h0m0 0h0m0-10h0m0 10h0m0 0h0m10-10h0m0 10h0m0 10h0m0-10h0m0-30h0m0 30h0m10 0h0m0-20h0m0 20h0m0 10h0m0-10h0m0-10h0m10 10h0m0 10h0m0-10h0m0 0h0m0 0h0m0-10h0m0-10h0m10 10h0m0 0h0m0 10h0m0-10h0m0 10h0m10-10h0m0 10h0m0 10h0m0-10h0m0-10h0m10 10h0m0 0h0m0-10h0m0 20h0m0-10h0m0-10h0m10 10h0m0 0h0m0 0h0m0-20h0m0 10h0m0 0h0m0 0h0m10 10h0m0 0h0m0-10h0m0 0h0m0 10h0m0-10h0m10 10h0m0-10h0m0 10h0m0-10h0m0 10h0m0-20h0m10 20h0m0-10h0m0 0h0m0 10h0m0 0h0m10-10h0m0 10h0m0 0h0m0-10h0m0 10h0m0 10h0m10-10h0m0-20h0m0 0h0m0 10h0m0 0h0m0 10h0m0 10h0m10-20h0m0 10h0m0-10h0m0 10h0m0-10h0m0 0h0m10-10h0m0 20h0m0-10h0m0 20h0m0-20h0m0 10h0m10-10h0m0 10h0m0 0h0m0-10h0m0-10h0m0 20h0m10-10h0m0 10h0m0-10h0m0 0h0m0 10h0m0-10h0m0 10h0m10 0h0m0-10h0m0-10h0m0 20h0m0-10h0m10 20h0m0-10h0m0 10h0m0-20h0m0 10h0m0 0h0m0-10h0m10-10h0m0 10h0m0 10h0m0-10h0m0 0h0m10 20h0m0-20h0m0-10h0m0 30h0m0-10h0m0-10h0m0 10h0m10-20h0m0 10h0m0 0h0m0 10h0m0-10h0m0 0h0m0 20h0m10-20h0m0-10h0m0 0h0m0 20h0m0-10h0m0 0h0m0 0h0m10 10h0m0 0h0m0 0h0m0-20h0m0 20h0m0-10h0m0 0h0m10 20h0m0-20h0m0 0h0m0 10h0m0 0h0m10-20h0m0 30h0m0-10h0m0 10h0m0-20h0m0 0h0m10 10h0m0 0h0m0 10h0m0-20h0m0 10h0m0-20h0m10 20h0m0 0h0m0-10h0m0 20h0m0-30h0m0 10h0m0-60h0m10 70h0m0 0h0m0-10h0m0 10h0m0 0h0m10 0h0m0-20h0m0 20h0m0 10h0m0-20h0m0 10h0m0-10h0m10 10h0m0-10h0m0 0h0m0 20h0m0-10h0m0-20h0m10 20h0m0-20h0m0 10h0m0 10h0m0-10h0m0 10h0m10 0h0m0-10h0m0 10h0m0 0h0m0-20h0m0 10h0m10 10h0m0 0h0m0-10h0m0 20h0m0-10h0m0-10h0m10 10h0m0-10h0m0 20h0m0-20h0m0-10h0m10 20h0m0-10h0m0 20h0m0-10h0m0-20h0m0 10h0m0 0h0m10 20h0m0-20h0m0 20h0m0-20h0m0 10h0m0-10h0m10 0h0m0 10h0m0-10h0m0 10h0m0 0h0m0-10h0m10 0h0m0 0h0m0 10h0m0-10h0m0-10h0m0 10h0m10 0h0m0 10h0m0-20h0m0 30h0m0-10h0m0 0h0m10-10h0m0 10h0m0-10h0m0 10h0m0-10h0m10 10h0m0-10h0m0 10h0m0-10h0m0 0h0m0 20h0m0-10h0m10-10h0m0 0h0m0 0h0m0 10h0m0 10h0m0-10h0m0-10h0m10 10h0m0-10h0m0 20h0m0-10h0m0-10h0m0 10h0m0 0h0m10-20h0m0 10h0m0 0h0m0 10h0m0 0h0m0-10h0m10 0h0m0 10h0m0-20h0m0 30h0m0-20h0m10 0h0m0 10h0m0 0h0m0 0h0m0 0h0m0-10h0m10 0h0m0 10h0m0-20h0m0 10h0m0 10h0m10-10h0m0 10h0m0-20h0m0 20h0m0-10h0m0 10h0m0-20h0m0 10h0m10 0h0m0 0h0m0 20h0m0-20h0m0 0h0m10-10h0m0 20h0m0-10h0m0 0h0m0 10h0m10-10h0m0 0h0m0 0h0m0 10h0m0-10h0m0-10h0m10 10h0m0 10h0m0 0h0m0-10h0m0 20h0m0-10h0m10-10h0m0 0h0m0 10h0m0-10h0m0 10h0m0 0h0m10-20h0m0 0h0m0 20h0m0-10h0m0 0h0m0 10h0m10-10h0m0 10h0m0-10h0m0 10h0m0-10h0m0 10h0m10 0h0m0-20h0m0 30h0m0-20h0m0-10h0m10 10h0m0 10h0m0 10h0m0-30h0m0 20h0m0 0h0m0-10h0m10 0h0m0 10h0m0-10h0m0 20h0m0-20h0m0-10h0m0 20h0m10-10h0m0 20h0m0-20h0m0 10h0m0-10h0m10-10h0m0 20h0m0 0h0m0-10h0m0-10h0m0 10h0m0 0h0m10 10h0m0 0h0m0-10h0m0 20h0m0-20h0m10 0h0m0 10h0m0-10h0m0 10h0m0-10h0m0 10h0m10-10h0m0 0h0m0 10h0m0 0h0m0-10h0m0 10h0m10-10h0m0 10h0m0-10h0m0 0h0m0 10h0m10-10h0m0 10h0m0 10h0m0-10h0m0-10h0m0 0h0m10 0h0m0 10h0m0-10h0m0 10h0m0-20h0m0 20h0m10-10h0m0 0h0m0 10h0m0-10h0m0 0h0m0 0h0m10 20h0m0-10h0m0 0h0m0-10h0m0 10h0m0-10h0m10 0h0m0 10h0m0-10h0m0 0h0m0 20h0m10-30h0m0 10h0m0 20h0m0-10h0m0-20h0m0 30h0m10-10h0m0 0h0m0-10h0m0 10h0m0-10h0m0 20h0m10-20h0m0 0h0m0 10h0m0-20h0m0 20h0m0-10h0m10 10h0m0 0h0m0-10h0m0 0h0m0 0h0m0 10h0m10 0h0m0-10h0m0 10h0m0-10h0m0 10h0m0-10h0m10 0h0m0 10h0m0-10h0m0-10h0m0 10h0m0 10h0m10-20h0m0 10h0m0 10h0m0 0h0m0-10h0m0 10h0m10 0h0m0-10h0m0 10h0m0-10h0m0 10h0m0-10h0m10 0h0m0 20h0m0-10h0m0-10h0m0 10h0m0 0h0m10-20h0m0 10h0m0 10h0m0 0h0m0-10h0m0 10h0m10-10h0m0 20h0m0-10h0m0 0h0m0-10h0m0-10h0m10 20h0m0-10h0m0 0h0m0 10h0m0-10h0m0 0h0m0 20h0m10-10h0m0-10h0m0 0h0m0 10h0m0 0h0m10 0h0m0-10h0m0 10h0m0-10h0m0 10h0m10 10h0m0-20h0m0 10h0m0 0h0m0-10h0m0-10h0m10 20h0m0-10h0m0-10h0m0 20h0m0-10h0m0 20h0m0-10h0m10-10h0m0 0h0m0 0h0m0 10h0m0-20h0m0 10h0m10 0h0m0 10h0m0-20h0m0 20h0m0-10h0m0 10h0m10-10h0m0 10h0m0 0h0m0-10h0m0 0h0m10 10h0m0-10h0m0 0h0m0 10h0m0-10h0m10 20h0m0-20h0m0 10h0m0 10h0m0-30h0m0 20h0m10-10h0m0 10h0m0 0h0m0-30h0m0 30h0m0-20h0m10 10h0m0 0h0m0 10h0m0-10h0m0-10h0m0 10h0m0 10h0m10-10h0m0 10h0m0-10h0m0 10h0m10-10h0m0 10h0m0 0h0m0 0h0m0-10h0m0 10h0m10-20h0m0 20h0m0-10h0m0-10h0m0 10h0m0 0h0m0 20h0m0-10h0m10-10h0m0-10h0m0 20h0m0-10h0m0 0h0m0 10h0m10 0h0m0 10h0m0-20h0m0 10h0m0 0h0m0-10h0m10-10h0m0 10h0m0 10h0m0-10h0m0 10h0m10 0h0m0 0h0m0 0h0m0-10h0m0 0h0m10 0h0m0 10h0m0-10h0m0-10h0m0 20h0m0-20h0m10 10h0m0 20h0m0-20h0m0 0h0m0 10h0m0 0h0m10 10h0m0-10h0m0-10h0m0 10h0m0-20h0m0 10h0m10 10h0m0-10h0m0 0h0m0 10h0m0 0h0m10-10h0m0 0h0m0 10h0m0-10h0m0 0h0m10 10h0m0-20h0m0 10h0m0 10h0m0 0h0m0-10h0m10 10h0m0-10h0m0 10h0m0-10h0m0 10h0m10-10h0m0 0h0m0 10h0m0-10h0m0 20h0m0-10h0m10-10h0m0 20h0m0-10h0m0-10h0m0 0h0m0 0h0m10 0h0m0 10h0m0 0h0m0-10h0m0 0h0m0 0h0m10 10h0m0-10h0m0 0h0m0 10h0m0-10h0m10 0h0m0 10h0m0 0h0m0-10h0m0 0h0m0 0h0m10 20h0m0-10h0m0-10h0m0 10h0m0 0h0m0-10h0m10 20h0m0-10h0m0-10h0m0-10h0m0 10h0m0-10h0m0 10h0m10 10h0m0-10h0m0 10h0m0 0h0m0-10h0m0 10h0m10-10h0m0 10h0m0-20h0m0 10h0m0 10h0m10 0h0m0 10h0m0-20h0m0 20h0m0-20h0m10 20h0m0-20h0m0 10h0m0 0h0m0 0h0m0 10h0m10-20h0m0 10h0m0-10h0m0 0h0m0 20h0m0-20h0m10 10h0m0-10h0m0 10h0m0-10h0m0 0h0m0 0h0m10 10h0m0-10h0m0-10h0m0 30h0m0-10h0m0 0h0m0 0h0"/><path fill="none" stroke="#f00" stroke-width="1.3" stroke-linejoin="round" d="M183.7 959.2l1.7-3l1.7 3zM204.7 959.2l1.7-3l1.7 3zM212.5 959.2l1.7-3l1.7 3zM264.7 959.2l1.7-3l1.7 3zM369.7 959.2l1.7-3l1.7 3zM423.7 959.2l1.7-3l1.7 3zM676.8 959.2l1.7-3l1.7 3zM753.5 959.2l1.7-3l1.7 3zM773.6 959.2l1.7-3l1.7 3zM816.5 959.2l1.7-3l1.7 3zM1113.6 959.2l1.7-3l1.7 3zM1208.6 959.2l1.7-3l1.7 3zM1297.9 959.2l1.7-3l1.7 3z"/><path d="M162 1011V954.5" stroke="#800080" stroke-width="2.08" stroke-dasharray="2.08 3.43"/><path d="M1303 1011V954.5" stroke="#800080" stroke-width="2.08" stroke-dasharray="2.08 3.43"/></g><path d="M105.5 954.5H1485.5" stroke="#000" stroke-width="1.1"/><path d="M162 954V725.5" stroke="#800080" stroke-width="2.08" stroke-dasharray="2.08 3.43"/><path d="M1303 954V725.5" stroke="#800080" stroke-width="2.08" stroke-dasharray="2.08 3.43"/><rect x="105.5" y="725.5" width="1380.0" height="286.0" fill="none" stroke="#000" stroke-width="1.1"/><path d="M100.6 957.5h4.9" stroke="#000" stroke-width="1.1"/><text x="95.3" y="963.2" font-size="14.1" text-anchor="end" textLength="16.16" lengthAdjust="spacing" >10</text><path d="M100.6 983.5h4.9" stroke="#000" stroke-width="1.1"/><text x="95.3" y="989.2" font-size="14.1" text-anchor="end" textLength="7.33" lengthAdjust="spacing" >5</text><path d="M100.6 1009.5h4.9" stroke="#000" stroke-width="1.1"/><text x="95.3" y="1015.3" font-size="14.1" text-anchor="end" textLength="7.33" lengthAdjust="spacing" >0</text><path d="M102.7 996.5h2.8" stroke="#000" stroke-width="0.8"/><path d="M102.7 970.5h2.8" stroke="#000" stroke-width="0.8"/><text x="0" y="0" font-size="14.1" text-anchor="middle" textLength="14.52" lengthAdjust="spacing" transform="translate(68.6 983.7) rotate(-90)">dr</text><path d="M162.5 1011.5v4.9" stroke="#000" stroke-width="1.1"/><text x="162.3" y="1031.6" font-size="14.1" text-anchor="middle" textLength="7.33" lengthAdjust="spacing" >0</text><path d="M328.5 1011.5v4.9" stroke="#000" stroke-width="1.1"/><text x="328.3" y="1031.6" font-size="14.1" text-anchor="middle" textLength="33.81" lengthAdjust="spacing" >2000</text><path d="M494.5 1011.5v4.9" stroke="#000" stroke-width="1.1"/><text x="494.3" y="1031.6" font-size="14.1" text-anchor="middle" textLength="33.81" lengthAdjust="spacing" >4000</text><path d="M660.5 1011.5v4.9" stroke="#000" stroke-width="1.1"/><text x="660.3" y="1031.6" font-size="14.1" text-anchor="middle" textLength="33.81" lengthAdjust="spacing" >6000</text><path d="M826.5 1011.5v4.9" stroke="#000" stroke-width="1.1"/><text x="826.3" y="1031.6" font-size="14.1" text-anchor="middle" textLength="33.81" lengthAdjust="spacing" >8000</text><path d="M992.5 1011.5v4.9" stroke="#000" stroke-width="1.1"/><text x="992.3" y="1031.6" font-size="14.1" text-anchor="middle" textLength="42.64" lengthAdjust="spacing" >10000</text><path d="M1158.5 1011.5v4.9" stroke="#000" stroke-width="1.1"/><text x="1158.3" y="1031.6" font-size="14.1" text-anchor="middle" textLength="42.64" lengthAdjust="spacing" >12000</text><path d="M1324.5 1011.5v4.9" stroke="#000" stroke-width="1.1"/><text x="1324.3" y="1031.6" font-size="14.1" text-anchor="middle" textLength="42.64" lengthAdjust="spacing" >14000</text></svg></body></html>
